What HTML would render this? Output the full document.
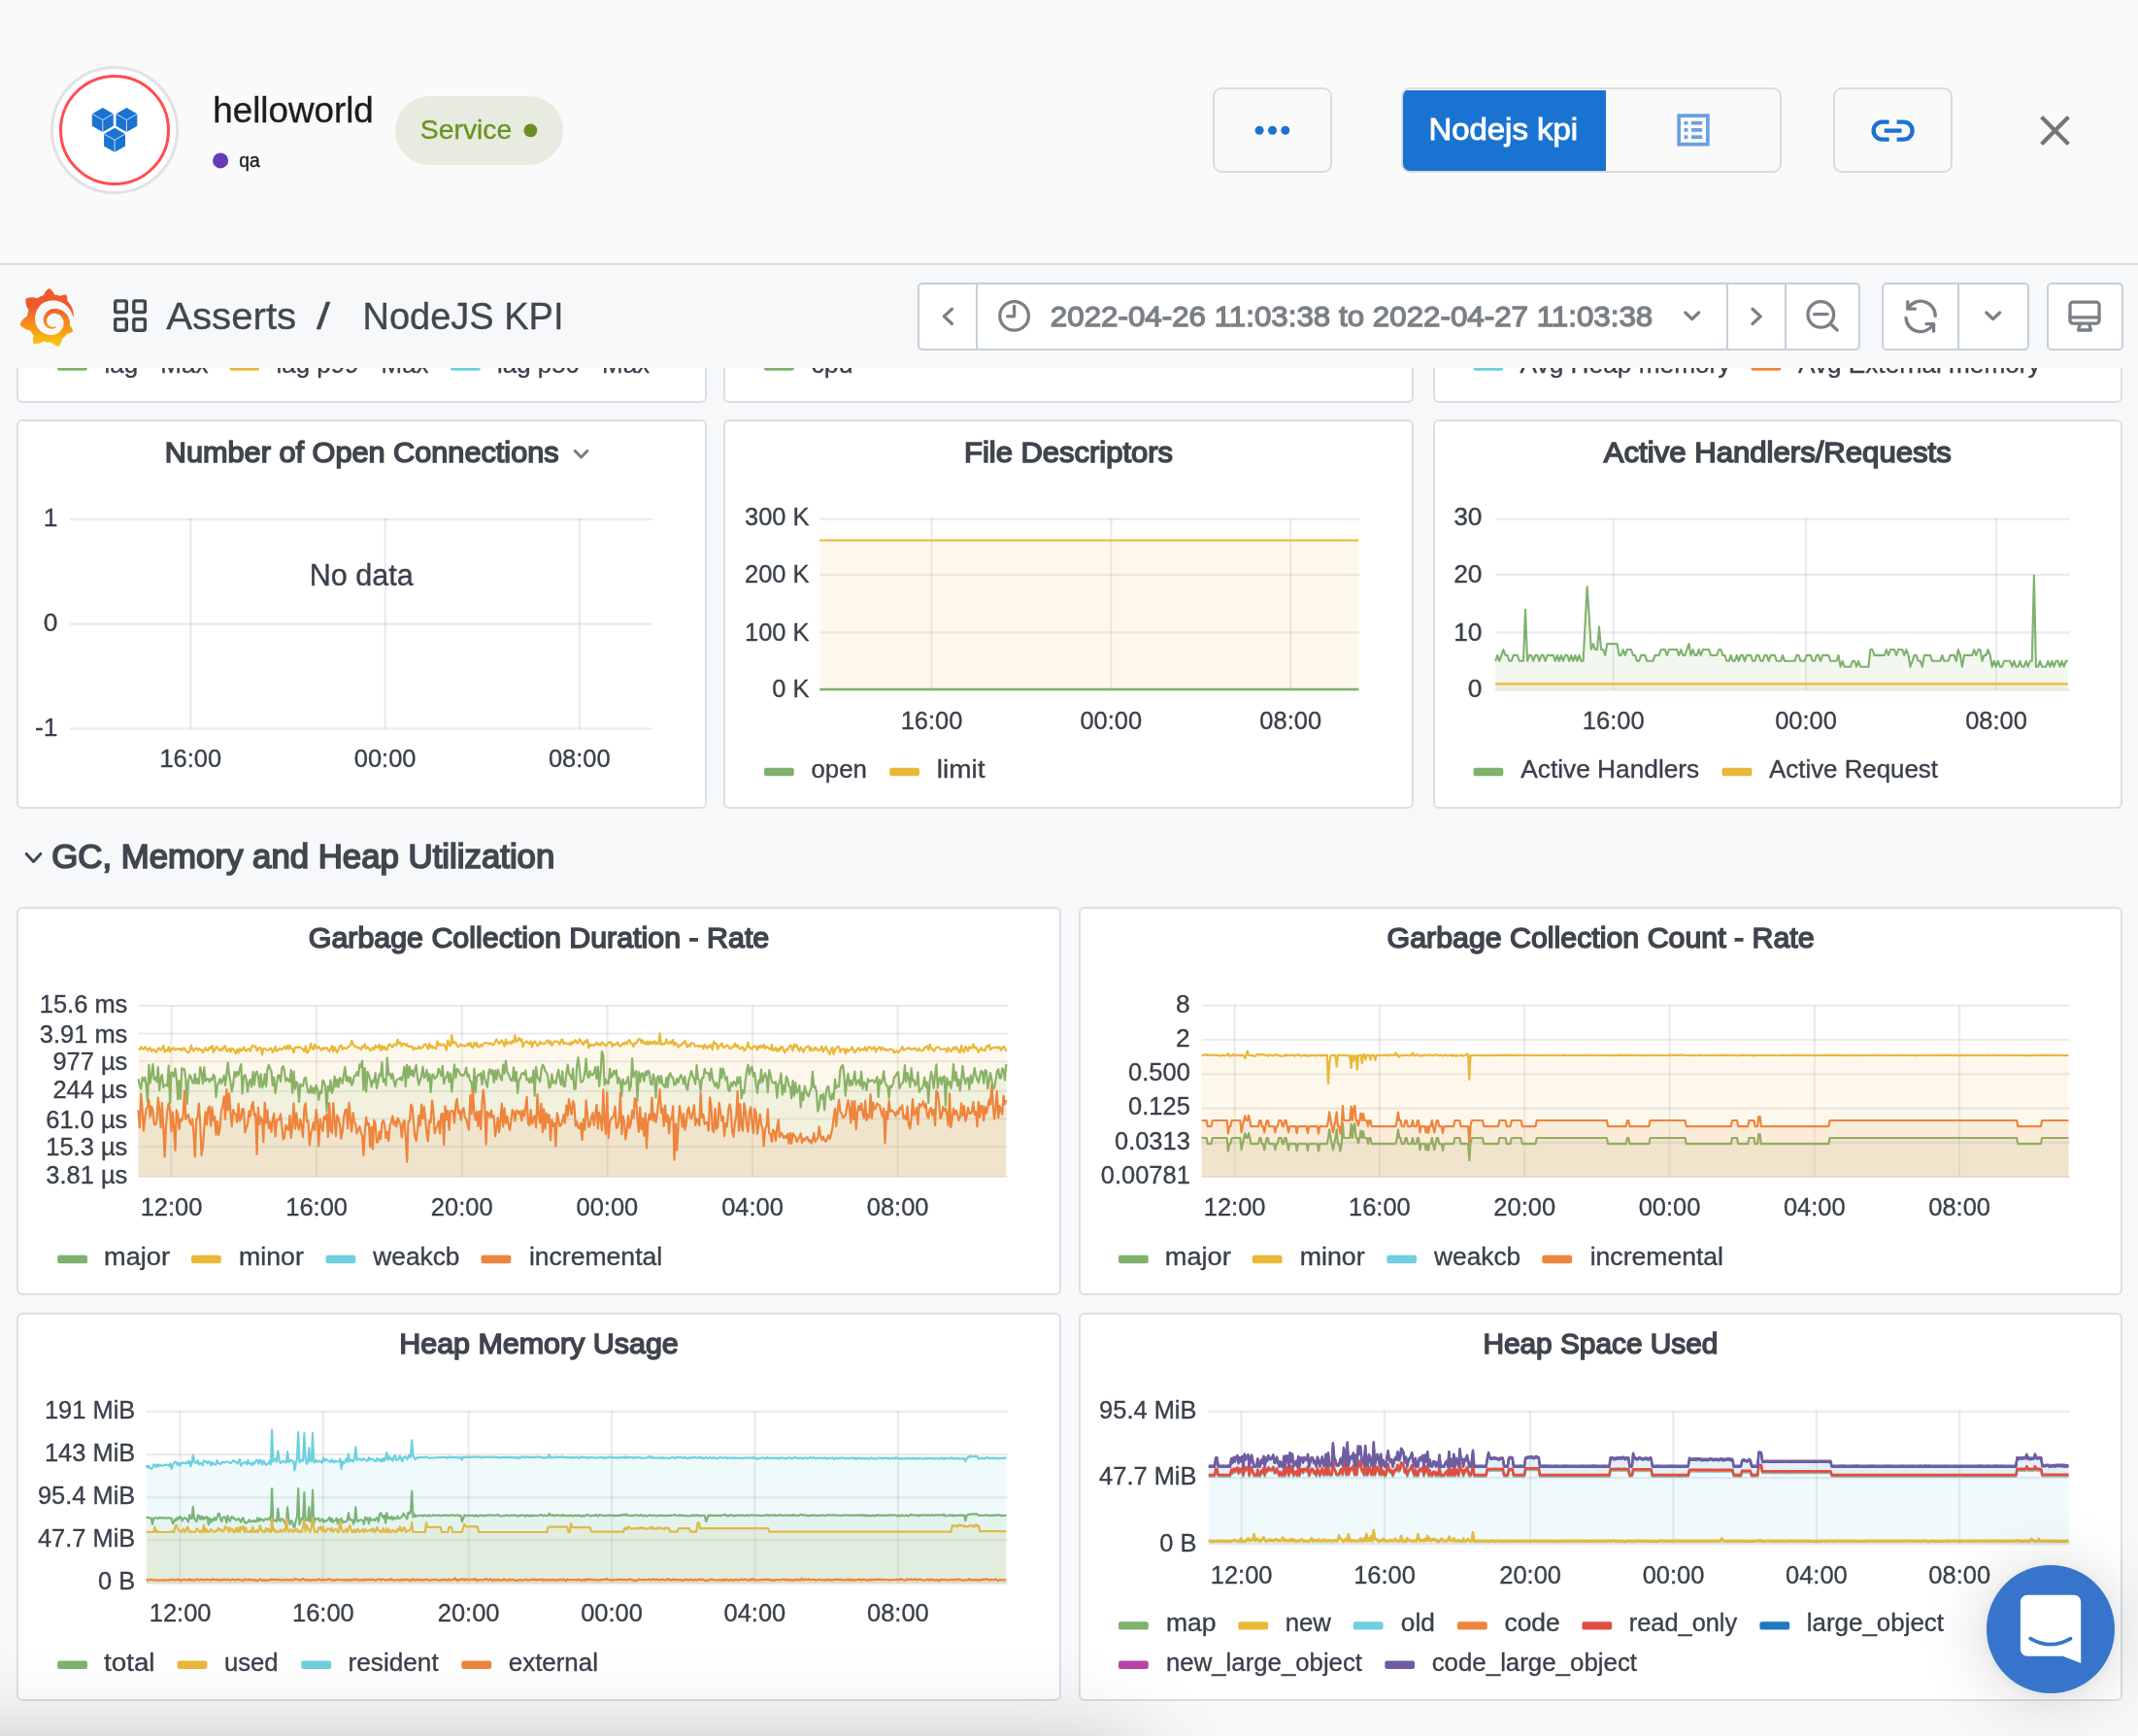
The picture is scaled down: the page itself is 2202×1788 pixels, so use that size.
<!DOCTYPE html>
<html lang="en"><head><meta charset="utf-8"><title>helloworld - NodeJS KPI</title>
<style>
html,body{margin:0;padding:0}
body{width:2202px;height:1788px;overflow:hidden;background:#f7f8fa;position:relative;font-family:"Liberation Sans", sans-serif;color:#3a404b}
svg{position:absolute;left:0;top:0;overflow:visible;will-change:transform}
svg text{font-family:"Liberation Sans", sans-serif}
.abs{position:absolute;box-sizing:border-box}
#hdr{left:0;top:0;width:2202px;height:273px;background:#fafafa;border-bottom:2px solid #dcdcdc;z-index:5}
#toolbar{left:0;top:272px;width:2202px;height:106.6px;background:#f7f8fa;z-index:4}
.panel{position:absolute;background:#fff;border:2px solid #dadfe5;border-radius:6px}
.btn{position:absolute;box-sizing:border-box;border:2px solid #dcdcdc;border-radius:9px;background:#fafafa}
.tb{position:absolute;box-sizing:border-box;border:2px solid #c7d0d9;border-radius:5px;background:#fff;top:19px;height:70px}
.tbd{position:absolute;top:0;width:2px;height:66px;background:#c7d0d9}
#fade{left:-300px;top:1801px;width:1470px;height:200px;z-index:6;background:#888;box-shadow:0 0 100px 0 rgba(0,0,0,0.24)}
#chat{left:2046px;top:1612px;width:132px;height:132px;border-radius:50%;background:#3675cb;z-index:7;box-shadow:0 2px 13px rgba(0,0,0,0.06),0 5px 70px rgba(0,0,0,0.17)}
</style></head><body>
<div id="hdr" class="abs">
<div class="abs" style="left:52px;top:68px;width:132px;height:132px;border-radius:50%;border:3px solid #e2e2e2;background:#fff"></div>
<div class="abs" style="left:61px;top:77px;width:114px;height:114px;border-radius:50%;border:3.4px solid #ff4d4f;background:#fff"></div>
<div class="abs" style="left:406.5px;top:99px;width:173.5px;height:71px;border-radius:36px;background:#e8ebdf"></div>
<div class="btn" style="left:1249px;top:90px;width:123px;height:88px"></div>
<div class="btn" style="left:1443px;top:90px;width:392px;height:88px;overflow:hidden"><div class="abs" style="left:0;top:1px;width:209px;height:83px;background:#1b73d1"></div></div>
<div class="btn" style="left:1888px;top:90px;width:123px;height:88px"></div>
<svg width="2202" height="272" viewBox="0 0 2202 272">
<path d="M105.8,111 L116.8,117.2 L116.8,129.7 L105.8,135.9 L94.8,129.7 L94.8,117.2 Z" fill="#1b73d1"/><path d="M94.8,117.2 L105.8,123.5 L116.8,117.2 M105.8,123.5 V135.9" fill="none" stroke="#fff" stroke-width="0.9" stroke-opacity="0.85"/>
<path d="M130.4,111 L141.3,117.2 L141.3,129.7 L130.4,135.9 L119.5,129.7 L119.5,117.2 Z" fill="#1b73d1"/><path d="M119.5,117.2 L130.4,123.5 L141.3,117.2 M130.4,123.5 V135.9" fill="none" stroke="#fff" stroke-width="0.9" stroke-opacity="0.85"/>
<path d="M118.1,131.8 L129,138 L129,150.5 L118.1,156.7 L107.1,150.5 L107.1,138 Z" fill="#1b73d1"/><path d="M107.1,138 L118.1,144.2 L129,138 M118.1,144.2 V156.7" fill="none" stroke="#fff" stroke-width="0.9" stroke-opacity="0.85"/>
<text x="219.3" y="125.8" font-size="36.6" fill="#1c1c1c" textLength="165.5" lengthAdjust="spacingAndGlyphs" stroke="#1c1c1c" stroke-width="0.35">helloworld</text>
<circle cx="227.1" cy="165.4" r="8" fill="#673ab7"/>
<text x="246.2" y="171.5" font-size="20" fill="#1c1c1c" textLength="21.4" lengthAdjust="spacingAndGlyphs" stroke="#1c1c1c" stroke-width="0.35">qa</text>
<text x="432.8" y="142.7" font-size="27.8" fill="#6a9421" textLength="94.5" lengthAdjust="spacingAndGlyphs" stroke="#6a9421" stroke-width="0.35">Service</text>
<circle cx="546.4" cy="134.3" r="6.9" fill="#6b8e23"/>
<circle cx="1297.1" cy="134.3" r="4.5" fill="#1b73d1"/>
<circle cx="1310.5" cy="134.3" r="4.5" fill="#1b73d1"/>
<circle cx="1323.8" cy="134.3" r="4.5" fill="#1b73d1"/>
<text x="1471.5" y="144.4" font-size="30.5" fill="#ffffff" textLength="153.5" lengthAdjust="spacingAndGlyphs" stroke="#ffffff" stroke-width="0.9" paint-order="stroke">Nodejs kpi</text>
<g fill="#6b9fe2"><path fill-rule="evenodd" d="M1727.3,117.3H1760.7V150.4H1727.3Z M1731,121H1757V146.7H1731Z"/><rect x="1734.6" y="124.8" width="3.7" height="3.7"/><rect x="1734.6" y="132" width="3.7" height="3.7"/><rect x="1734.6" y="139.3" width="3.7" height="3.7"/><rect x="1742" y="124.8" width="11.2" height="3.7"/><rect x="1742" y="132" width="11.2" height="3.7"/><rect x="1742" y="139.3" width="11.2" height="3.7"/></g>
<g fill="none" stroke="#1b73d1" stroke-width="4.3" stroke-linecap="butt"><path d="M1945.6,125.6H1938.6a9,9 0 0 0 0,18H1945.6"/><path d="M1953.6,125.6H1960.6a9,9 0 0 1 0,18H1953.6"/><path d="M1940.7,134.6H1958.5"/></g>
<path d="M2102.6,120.6L2130.4,148.6M2130.4,120.6L2102.6,148.6" stroke="#757575" stroke-width="4.2" fill="none"/>
</svg>
</div>
<div id="toolbar" class="abs">
<div class="tb" style="left:945px;width:971px"><div class="tbd" style="left:58px"></div><div class="tbd" style="left:831px"></div><div class="tbd" style="left:890.5px"></div></div>
<div class="tb" style="left:1938px;width:152px"><div class="tbd" style="left:75.5px"></div></div>
<div class="tb" style="left:2108px;width:79px"></div>
<svg width="2202" height="106" viewBox="0 272 2202 106">
<defs><linearGradient id="gl" x1="175.5" y1="445.4" x2="175.5" y2="114" gradientUnits="userSpaceOnUse"><stop offset="0" stop-color="#FFF100"/><stop offset="1" stop-color="#F05A28"/></linearGradient></defs><g transform="translate(19.090,296.835) scale(0.16585,0.16501)"><path fill="url(#gl)" d="M342 161.2c-.6-6.1-1.600-13.1-3.600-20.900-2-7.700-5-16.200-9.400-25-4.400-8.800-10.100-17.900-17.500-26.800-2.900-3.500-6.100-6.900-9.500-10.200 5.100-20.300-6.200-37.900-6.200-37.900-19.500-1.200-31.900 6.100-36.500 9.400-.8-.3-1.500-.7-2.300-1-3.300-1.300-6.700-2.600-10.300-3.700-3.500-1.100-7.100-2.100-10.800-3-3.700-.9-7.400-1.600-11.200-2.200-.7-.1-1.300-.2-2-.3-8.500-27.200-32.900-38.600-32.900-38.600-27.300 17.300-32.400 41.500-32.400 41.500s-.1.500-.3 1.400c-1.500.4-3 .9-4.500 1.300-2.100.6-4.200 1.400-6.200 2.200-2.100.8-4.100 1.600-6.200 2.500-4.100 1.800-8.200 3.800-12.200 6-3.900 2.200-7.700 4.600-11.400 7.100-.5-.2-1-.4-1-.4-37.800-14.400-71.300 2.900-71.300 2.900-3.100 40.200 15.100 65.500 18.700 70.100-.9 2.500-1.700 5-2.500 7.500-2.800 9.100-4.900 18.400-6.200 28.100-.2 1.400-.4 2.800-.5 4.200C18.800 192.700 8.500 228 8.500 228c29.100 33.500 63.100 35.600 63.100 35.600 0 0 .1-.1.100-.1 4.300 7.700 9.300 15 14.900 21.900 2.400 2.900 4.800 5.600 7.400 8.300-10.600 30.400 1.500 55.600 1.500 55.600 32.400 1.200 53.700-14.200 58.200-17.700 3.200 1.100 6.500 2.100 9.800 2.900 10 2.600 20.200 4.100 30.400 4.500 2.500.1 5.100.2 7.600.1h1.200l.8 0 1.600 0 1.600-.1 0 .1c15.300 21.800 42.100 24.900 42.100 24.900 19.100-20.100 20.200-40.100 20.200-44.400l0 0c0 0 0-.1 0-.3 0-.4 0-.6 0-.6l0 0c0-.3 0-.6 0-.9 4-2.800 7.800-5.800 11.400-9.100 7.600-6.900 14.300-14.800 19.900-23.300.5-.8 1-1.600 1.500-2.400 21.600 1.200 36.900-13.400 36.900-13.400-3.600-22.500-16.400-33.500-19.100-35.600l0 0c0 0-.1-.1-.3-.2-.2-.1-.2-.2-.2-.2 0 0 0 0 0 0-.1-.1-.3-.2-.5-.3.1-1.400.2-2.700.3-4.100.2-2.400.2-4.900.2-7.300v-1.800l0-.9 0-.5c0-.6 0-.4 0-.6l-.1-1.500-.1-2c0-.7-.1-1.300-.2-1.900-.1-.6-.1-1.300-.2-1.900l-.2-1.900-.3-1.900c-.4-2.500-.8-4.900-1.400-7.400-2.300-9.700-6.100-18.900-11-27.200-5-8.300-11.200-15.600-18.300-21.800-7-6.200-14.900-11.200-23.100-14.900-8.300-3.700-16.900-6.100-25.500-7.200-4.300-.6-8.600-.8-12.900-.7l-1.600 0-.4 0c-.1 0-.6 0-.5 0l-.7 0-1.600.1c-.6 0-1.200.1-1.700.1-2.200.2-4.400.5-6.500.9-8.600 1.600-16.700 4.700-23.800 9-7.100 4.300-13.300 9.600-18.300 15.600-5 6-8.900 12.700-11.600 19.600-2.700 6.900-4.200 14.100-4.600 21-.1 1.700-.1 3.500-.1 5.200 0 .4 0 .9 0 1.300l.1 1.400c.1.800.1 1.700.2 2.500.3 3.500 1 6.900 1.900 10.100 1.900 6.500 4.900 12.400 8.600 17.400 3.700 5 8.200 9.100 12.900 12.400 4.700 3.200 9.800 5.500 14.800 7 5 1.500 10 2.100 14.700 2.100.6 0 1.200 0 1.700 0 .3 0 .6 0 .9 0 .3 0 .6 0 .9-.1.500 0 1-.1 1.500-.1.100 0 .3 0 .4-.1l.5-.1c.3 0 .6-.1.900-.1.600-.1 1.100-.2 1.700-.3.600-.1 1.100-.2 1.600-.4 1.100-.2 2.100-.6 3.100-.9 2-.7 4-1.500 5.700-2.400 1.800-.9 3.400-2 5-3 .4-.3.900-.6 1.300-1 1.600-1.300 1.900-3.700.6-5.300-1.100-1.400-3.100-1.800-4.700-.9-.4.2-.8.4-1.200.6-1.400.7-2.800 1.300-4.300 1.800-1.500.5-3.100.9-4.700 1.200-.8.1-1.600.2-2.500.3-.4 0-.8.1-1.300.1-.4 0-.9 0-1.200 0-.4 0-.8 0-1.200 0-.5 0-1 0-1.500-.1 0 0-.3 0-.1 0l-.2 0-.3 0c-.2 0-.5 0-.7-.1-.5-.1-.9-.1-1.400-.2-3.700-.5-7.400-1.600-10.900-3.200-3.600-1.600-7-3.800-10.100-6.600-3.100-2.800-5.800-6.100-7.900-9.900-2.100-3.800-3.600-8-4.300-12.400-.3-2.200-.5-4.500-.4-6.700 0-.6.100-1.200.1-1.800 0 .2 0-.1 0-.1l0-.2 0-.5c0-.3.1-.6.1-.9.1-1.200.3-2.400.5-3.600 1.700-9.600 6.500-19 13.900-26.100 1.900-1.800 3.900-3.400 6-4.900 2.100-1.500 4.400-2.800 6.800-3.900 2.400-1.100 4.800-2 7.400-2.700 2.500-.7 5.100-1.100 7.800-1.400 1.300-.1 2.600-.2 4-.2.400 0 .6 0 .9 0l1.100 0 .7 0c.3 0 0 0 .1 0l.3 0 1.100.1c2.900.2 5.700.6 8.500 1.300 5.600 1.200 11.100 3.300 16.200 6.100 10.200 5.700 18.900 14.500 24.200 25.100 2.700 5.300 4.600 11 5.500 16.900.2 1.500.4 3 .5 4.500l.1 1.100.1 1.100c0 .4 0 .8 0 1.100 0 .4 0 .8 0 1.100l0 1 0 1.100c0 .7-.1 1.900-.1 2.600-.1 1.600-.3 3.300-.5 4.900-.2 1.600-.5 3.200-.8 4.800-.3 1.600-.7 3.200-1.100 4.700-.8 3.100-1.800 6.200-3 9.300-2.400 6-5.600 11.800-9.400 17.100-7.700 10.600-18.200 19.200-30.200 24.700-6 2.700-12.300 4.700-18.800 5.700-3.200.6-6.500.9-9.800 1l-.6 0-.5 0-1.100 0-1.600 0-.8 0c.4 0-.1 0-.1 0l-.3 0c-1.800 0-3.500-.1-5.300-.3-7-.5-13.900-1.800-20.700-3.700-6.700-1.900-13.200-4.600-19.400-7.800-12.300-6.600-23.400-15.600-32-26.500-4.300-5.400-8.100-11.300-11.200-17.400-3.100-6.100-5.600-12.600-7.400-19.100-1.800-6.600-2.900-13.300-3.400-20.100l-.1-1.300 0-.3 0-.3 0-.6 0-1.100 0-.3 0-.4 0-.8 0-1.600 0-.3c0 0 0 .1 0-.1l0-.6c0-.8 0-1.700 0-2.500.1-3.300.4-6.800.8-10.200.4-3.400 1-6.900 1.700-10.300.7-3.400 1.500-6.800 2.500-10.200 1.900-6.700 4.300-13.200 7.100-19.300 5.700-12.200 13.100-23.100 22-31.800 2.200-2.200 4.500-4.200 6.900-6.200 2.400-1.900 4.900-3.700 7.500-5.400 2.500-1.700 5.200-3.200 7.900-4.600 1.300-.7 2.700-1.400 4.100-2 .7-.3 1.400-.6 2.100-.9.700-.3 1.400-.6 2.100-.9 2.800-1.200 5.700-2.200 8.700-3.100.7-.2 1.500-.4 2.200-.7.700-.2 1.500-.4 2.200-.6 1.500-.4 3-.8 4.500-1.100.7-.2 1.500-.3 2.300-.5.8-.2 1.500-.3 2.300-.5.8-.1 1.500-.3 2.300-.4l1.100-.2 1.200-.2c.8-.1 1.500-.2 2.300-.3.900-.1 1.700-.2 2.600-.3.7-.1 1.900-.2 2.600-.3.500-.1 1.100-.1 1.600-.2l1.100-.1.500-.1.600 0c.9-.1 1.700-.1 2.600-.2l1.300-.1c0 0 .5 0 .1 0l.3 0 .6 0c.7 0 1.500-.1 2.200-.1 2.900-.1 5.900-.1 8.800 0 5.800.2 11.500.9 17 1.900 11.100 2.100 21.500 5.600 31 10.300 9.500 4.600 17.900 10.300 25.300 16.500.5.400.9.800 1.400 1.200.4.400.9.800 1.300 1.200.9.800 1.700 1.600 2.600 2.400.9.800 1.700 1.600 2.500 2.400.8.800 1.600 1.600 2.400 2.500 3.100 3.300 6 6.600 8.600 10 5.200 6.700 9.400 13.500 12.700 19.900.2.400.4.800.6 1.200.2.400.4.800.6 1.200.4.800.8 1.600 1.100 2.400.4.800.7 1.500 1.100 2.300.3.800.7 1.500 1 2.300 1.200 3 2.400 5.900 3.300 8.600 1.500 4.400 2.600 8.300 3.500 11.700.3 1.400 1.600 2.300 3 2.100 1.500-.1 2.600-1.300 2.600-2.800C342.600 170.400 342.500 166.100 342 161.200z"/></g>
<rect x="118.7" y="309.9" width="11.6" height="11.6" rx="1.6" fill="none" stroke="#41464f" stroke-width="3.4"/>
<rect x="137.8" y="309.9" width="11.6" height="11.6" rx="1.6" fill="none" stroke="#41464f" stroke-width="3.4"/>
<rect x="118.7" y="328.6" width="11.6" height="11.6" rx="1.6" fill="none" stroke="#41464f" stroke-width="3.4"/>
<rect x="137.8" y="328.6" width="11.6" height="11.6" rx="1.6" fill="none" stroke="#41464f" stroke-width="3.4"/>
<text x="171.2" y="339" font-size="39.6" fill="#41464f" textLength="134" lengthAdjust="spacingAndGlyphs" stroke="#41464f" stroke-width="0.35">Asserts</text>
<text x="326" y="339" font-size="39.6" fill="#41464f" textLength="14" lengthAdjust="spacingAndGlyphs" stroke="#41464f" stroke-width="0.35">/</text>
<text x="373.5" y="339" font-size="39.6" fill="#41464f" textLength="207" lengthAdjust="spacingAndGlyphs" stroke="#41464f" stroke-width="0.35">NodeJS KPI</text>
<g fill="none" stroke="#7b8087" stroke-width="3.3" stroke-linecap="round" stroke-linejoin="round">
<path d="M980.5,318.3L972.3,325.9L980.5,333.5"/>
<circle cx="1044.6" cy="325.4" r="14.8"/><path d="M1044.6,315.5V325.8H1037.6"/>
<path d="M1735.8,322L1742.7,328.6L1749.6,322"/>
<path d="M1805,318.3L1813.2,325.9L1805,333.5"/>
<circle cx="1875.3" cy="323.9" r="13.3"/><path d="M1868.6,323.7H1882.2M1885.5,333.8L1892.2,340"/>
<path d="M1993.2,325.4A15,15 0 0 0 1965.5,317.2"/><path d="M1964.8,310.6V318.2H1972.4"/><path d="M1963,327.4A15,15 0 0 0 1990.7,334.6"/><path d="M1991.6,341.2V333.6H1984"/>
<path d="M2045.8,322L2052.7,328.6L2059.6,322"/>
<rect x="2132" y="311.2" width="30" height="22" rx="3"/><path d="M2132,326.9H2162M2142.2,334.2L2140.6,340H2153.4L2151.8,334.2"/>
</g>
<text x="1081.8" y="336.1" font-size="30.2" fill="#7b8087" textLength="620.5" lengthAdjust="spacingAndGlyphs" stroke="#7b8087" stroke-width="1.3" paint-order="stroke">2022-04-26 11:03:38 to 2022-04-27 11:03:38</text>
</svg>
</div>
<div class="panel" style="left:17px;top:14px;width:707px;height:397px"></div>
<div class="panel" style="left:17px;top:432px;width:707px;height:397px"></div>
<div class="panel" style="left:745px;top:14px;width:707px;height:397px"></div>
<div class="panel" style="left:745px;top:432px;width:707px;height:397px"></div>
<div class="panel" style="left:1476px;top:14px;width:706px;height:397px"></div>
<div class="panel" style="left:1476px;top:432px;width:706px;height:397px"></div>
<div class="panel" style="left:17px;top:934px;width:1072px;height:396px"></div>
<div class="panel" style="left:17px;top:1352px;width:1072px;height:396px"></div>
<div class="panel" style="left:1111px;top:934px;width:1071px;height:396px"></div>
<div class="panel" style="left:1111px;top:1352px;width:1071px;height:396px"></div>
<svg width="2202" height="1788" viewBox="0 0 2202 1788" style="z-index:2">
<rect x="59" y="373.4" width="30.8" height="8.4" rx="2.2" fill="#7eb26d"/><text x="107.5" y="383.6" font-size="26.4" fill="#3a404b" textLength="107" lengthAdjust="spacingAndGlyphs" stroke="#3a404b" stroke-width="0.35">lag - Max</text><rect x="236.3" y="373.4" width="30.8" height="8.4" rx="2.2" fill="#eab839"/><text x="284.5" y="383.6" font-size="26.4" fill="#3a404b" textLength="157" lengthAdjust="spacingAndGlyphs" stroke="#3a404b" stroke-width="0.35">lag p99 - Max</text><rect x="464" y="373.4" width="30.8" height="8.4" rx="2.2" fill="#6ed0e0"/><text x="512" y="383.6" font-size="26.4" fill="#3a404b" textLength="157" lengthAdjust="spacingAndGlyphs" stroke="#3a404b" stroke-width="0.35">lag p50 - Max</text>
<rect x="787" y="373.4" width="30.8" height="8.4" rx="2.2" fill="#7eb26d"/><text x="835.5" y="383.6" font-size="26.4" fill="#3a404b" textLength="43" lengthAdjust="spacingAndGlyphs" stroke="#3a404b" stroke-width="0.35">cpu</text>
<rect x="1517.5" y="373.4" width="30.8" height="8.4" rx="2.2" fill="#6ed0e0"/><text x="1565.5" y="383.6" font-size="26.4" fill="#3a404b" textLength="217" lengthAdjust="spacingAndGlyphs" stroke="#3a404b" stroke-width="0.35">Avg Heap memory</text><rect x="1803.6" y="373.4" width="30.8" height="8.4" rx="2.2" fill="#ef843c"/><text x="1852" y="383.6" font-size="26.4" fill="#3a404b" textLength="249.5" lengthAdjust="spacingAndGlyphs" stroke="#3a404b" stroke-width="0.35">Avg External memory</text>
<text x="169.8" y="475.8" font-size="29.8" fill="#3f444d" textLength="405.8" lengthAdjust="spacingAndGlyphs" stroke="#3f444d" stroke-width="1.5" paint-order="stroke">Number of Open Connections</text>
<path d="M592.2,464.2L598.6,471L605,464.2" fill="none" stroke="#767c85" stroke-width="2.9" stroke-linecap="round" stroke-linejoin="round"/>
<g stroke="#000" stroke-opacity="0.08" stroke-width="2.2"><path d="M72,534.9H672.5"/><path d="M72,642.7H672.5"/><path d="M72,750.5H672.5"/><path d="M196.3,534V751"/><path d="M396.6,534V751"/><path d="M596.8,534V751"/></g>
<text x="59.5" y="541.9" font-size="26.4" fill="#3a404b" text-anchor="end" stroke="#3a404b" stroke-width="0.35">1</text><text x="59.5" y="649.7" font-size="26.4" fill="#3a404b" text-anchor="end" stroke="#3a404b" stroke-width="0.35">0</text><text x="59.5" y="757.5" font-size="26.4" fill="#3a404b" text-anchor="end" stroke="#3a404b" stroke-width="0.35">-1</text>
<text x="196.3" y="790" font-size="26.4" fill="#3a404b" text-anchor="middle" textLength="63.7" lengthAdjust="spacingAndGlyphs" stroke="#3a404b" stroke-width="0.35">16:00</text><text x="396.6" y="790" font-size="26.4" fill="#3a404b" text-anchor="middle" textLength="63.7" lengthAdjust="spacingAndGlyphs" stroke="#3a404b" stroke-width="0.35">00:00</text><text x="596.8" y="790" font-size="26.4" fill="#3a404b" text-anchor="middle" textLength="63.7" lengthAdjust="spacingAndGlyphs" stroke="#3a404b" stroke-width="0.35">08:00</text>
<text x="372.3" y="602.6" font-size="30.8" fill="#3a404b" text-anchor="middle" textLength="107" lengthAdjust="spacingAndGlyphs" stroke="#3a404b" stroke-width="0.35">No data</text>
<text x="1100.5" y="475.8" font-size="29.8" fill="#3f444d" text-anchor="middle" textLength="215" lengthAdjust="spacingAndGlyphs" stroke="#3f444d" stroke-width="1.5" paint-order="stroke">File Descriptors</text>
<g stroke="#000" stroke-opacity="0.08" stroke-width="2.2"><path d="M844.2,534.7H1400.8"/><path d="M844.2,591.9H1400.8"/><path d="M844.2,651.3H1400.8"/><path d="M844.2,710.7H1400.8"/><path d="M959.5,534V710.7"/><path d="M1144.3,534V710.7"/><path d="M1329.2,534V710.7"/></g>
<text x="833.5" y="541.4" font-size="26.4" fill="#3a404b" text-anchor="end" textLength="66.5" lengthAdjust="spacingAndGlyphs" stroke="#3a404b" stroke-width="0.35">300 K</text><text x="833.5" y="600.3" font-size="26.4" fill="#3a404b" text-anchor="end" textLength="66.5" lengthAdjust="spacingAndGlyphs" stroke="#3a404b" stroke-width="0.35">200 K</text><text x="833.5" y="660.3" font-size="26.4" fill="#3a404b" text-anchor="end" textLength="66.5" lengthAdjust="spacingAndGlyphs" stroke="#3a404b" stroke-width="0.35">100 K</text><text x="833.5" y="717.5" font-size="26.4" fill="#3a404b" text-anchor="end" textLength="38.2" lengthAdjust="spacingAndGlyphs" stroke="#3a404b" stroke-width="0.35">0 K</text>
<text x="959.5" y="750.5" font-size="26.4" fill="#3a404b" text-anchor="middle" textLength="63.7" lengthAdjust="spacingAndGlyphs" stroke="#3a404b" stroke-width="0.35">16:00</text><text x="1144.3" y="750.5" font-size="26.4" fill="#3a404b" text-anchor="middle" textLength="63.7" lengthAdjust="spacingAndGlyphs" stroke="#3a404b" stroke-width="0.35">00:00</text><text x="1329.2" y="750.5" font-size="26.4" fill="#3a404b" text-anchor="middle" textLength="63.7" lengthAdjust="spacingAndGlyphs" stroke="#3a404b" stroke-width="0.35">08:00</text>
<rect x="844.2" y="556.5" width="555.1" height="153.7" fill="#eab839" fill-opacity="0.1"/>
<path d="M844.2,556.5H1399.3" stroke="#eab839" stroke-width="2.2"/>
<path d="M844.2,710H1399.3" stroke="#7eb26d" stroke-width="2.4"/>
<rect x="787" y="790.8" width="30.8" height="8.4" rx="2.2" fill="#7eb26d"/><text x="835.5" y="801" font-size="26.4" fill="#3a404b" textLength="57.3" lengthAdjust="spacingAndGlyphs" stroke="#3a404b" stroke-width="0.35">open</text><rect x="916.2" y="790.8" width="30.8" height="8.4" rx="2.2" fill="#eab839"/><text x="964.7" y="801" font-size="26.4" fill="#3a404b" textLength="49.8" lengthAdjust="spacingAndGlyphs" stroke="#3a404b" stroke-width="0.35">limit</text>
<text x="1830.8" y="475.8" font-size="29.8" fill="#3f444d" text-anchor="middle" textLength="358" lengthAdjust="spacingAndGlyphs" stroke="#3f444d" stroke-width="1.5" paint-order="stroke">Active Handlers/Requests</text>
<g stroke="#000" stroke-opacity="0.08" stroke-width="2.2"><path d="M1540.2,534.7H2131.8"/><path d="M1540.2,591.9H2131.8"/><path d="M1540.2,651.3H2131.8"/><path d="M1540.2,710.7H2131.8"/><path d="M1661.7,534V710.7"/><path d="M1860,534V710.7"/><path d="M2056,534V710.7"/></g>
<text x="1526.5" y="541.4" font-size="26.4" fill="#3a404b" text-anchor="end" stroke="#3a404b" stroke-width="0.35">30</text><text x="1526.5" y="600.3" font-size="26.4" fill="#3a404b" text-anchor="end" stroke="#3a404b" stroke-width="0.35">20</text><text x="1526.5" y="660.3" font-size="26.4" fill="#3a404b" text-anchor="end" stroke="#3a404b" stroke-width="0.35">10</text><text x="1526.5" y="717.5" font-size="26.4" fill="#3a404b" text-anchor="end" stroke="#3a404b" stroke-width="0.35">0</text>
<text x="1661.7" y="750.5" font-size="26.4" fill="#3a404b" text-anchor="middle" textLength="63.7" lengthAdjust="spacingAndGlyphs" stroke="#3a404b" stroke-width="0.35">16:00</text><text x="1860" y="750.5" font-size="26.4" fill="#3a404b" text-anchor="middle" textLength="63.7" lengthAdjust="spacingAndGlyphs" stroke="#3a404b" stroke-width="0.35">00:00</text><text x="2056" y="750.5" font-size="26.4" fill="#3a404b" text-anchor="middle" textLength="63.7" lengthAdjust="spacingAndGlyphs" stroke="#3a404b" stroke-width="0.35">08:00</text>
<path d="M1540.2,680.8L1542.3,674.9L1544.3,680.8L1546.4,674.9L1548.4,669L1550.5,674.9L1552.5,674.9L1554.6,680.8L1556.6,680.8L1558.7,674.9L1560.7,674.9L1562.8,674.9L1564.9,680.8L1566.9,680.8L1569,680.8L1571,627.8L1573.1,680.8L1575.1,674.9L1577.2,674.9L1579.2,680.8L1581.3,674.9L1583.3,674.9L1585.4,680.8L1587.5,674.9L1589.5,674.9L1591.6,680.8L1593.6,674.9L1595.7,674.9L1597.7,674.9L1599.8,674.9L1601.8,680.8L1603.9,674.9L1605.9,680.8L1608,674.9L1610,680.8L1612.1,674.9L1614.2,674.9L1616.2,680.8L1618.3,674.9L1620.3,680.8L1622.4,674.9L1624.4,680.8L1626.5,674.9L1628.5,680.8L1630.6,680.8L1632.6,642.5L1634.7,604.3L1636.8,636.6L1638.8,669L1640.9,663.1L1642.9,669L1645,669L1647,645.5L1649.1,669L1651.1,669L1653.2,674.9L1655.2,663.1L1657.3,663.1L1659.4,663.1L1661.4,663.1L1663.5,663.1L1665.5,663.1L1667.6,674.9L1669.6,674.9L1671.7,669L1673.7,674.9L1675.8,669L1677.8,669L1679.9,669L1682,674.9L1684,674.9L1686.1,680.8L1688.1,680.8L1690.2,674.9L1692.2,674.9L1694.3,674.9L1696.3,680.8L1698.4,680.8L1700.4,680.8L1702.5,680.8L1704.5,674.9L1706.6,674.9L1708.7,674.9L1710.7,669L1712.8,669L1714.8,669L1716.9,674.9L1718.9,669L1721,669L1723,669L1725.1,669L1727.1,669L1729.2,674.9L1731.3,669L1733.3,674.9L1735.4,674.9L1737.4,669L1739.5,663.1L1741.5,674.9L1743.6,669L1745.6,674.9L1747.7,674.9L1749.7,669L1751.8,674.9L1753.9,669L1755.9,669L1758,669L1760,669L1762.1,674.9L1764.1,674.9L1766.2,674.9L1768.2,674.9L1770.3,669L1772.3,669L1774.4,674.9L1776.5,674.9L1778.5,680.8L1780.6,680.8L1782.6,674.9L1784.7,680.8L1786.7,680.8L1788.8,674.9L1790.8,680.8L1792.9,674.9L1794.9,674.9L1797,680.8L1799,674.9L1801.1,674.9L1803.2,674.9L1805.2,680.8L1807.3,680.8L1809.3,674.9L1811.4,674.9L1813.4,680.8L1815.5,680.8L1817.5,674.9L1819.6,674.9L1821.6,680.8L1823.7,674.9L1825.8,674.9L1827.8,674.9L1829.9,680.8L1831.9,680.8L1834,680.8L1836,674.9L1838.1,680.8L1840.1,680.8L1842.2,680.8L1844.2,680.8L1846.3,680.8L1848.4,680.8L1850.4,674.9L1852.5,674.9L1854.5,680.8L1856.6,680.8L1858.6,680.8L1860.7,674.9L1862.7,674.9L1864.8,674.9L1866.8,680.8L1868.9,680.8L1871,674.9L1873,674.9L1875.1,680.8L1877.1,674.9L1879.2,674.9L1881.2,674.9L1883.3,674.9L1885.3,680.8L1887.4,680.8L1889.4,680.8L1891.5,680.8L1893.5,674.9L1895.6,686.7L1897.7,680.8L1899.7,686.7L1901.8,686.7L1903.8,686.7L1905.9,686.7L1907.9,680.8L1910,680.8L1912,686.7L1914.1,680.8L1916.1,686.7L1918.2,686.7L1920.3,686.7L1922.3,686.7L1924.4,686.7L1926.4,669L1928.5,669L1930.5,674.9L1932.6,674.9L1934.6,674.9L1936.7,674.9L1938.7,674.9L1940.8,674.9L1942.9,669L1944.9,674.9L1947,669L1949,669L1951.1,669L1953.1,674.9L1955.2,669L1957.2,669L1959.3,669L1961.3,674.9L1963.4,669L1965.5,674.9L1967.5,686.7L1969.6,680.8L1971.6,674.9L1973.7,674.9L1975.7,680.8L1977.8,680.8L1979.8,686.7L1981.9,674.9L1983.9,674.9L1986,674.9L1988,674.9L1990.1,680.8L1992.2,680.8L1994.2,680.8L1996.3,680.8L1998.3,680.8L2000.4,674.9L2002.4,680.8L2004.5,680.8L2006.5,680.8L2008.6,674.9L2010.6,674.9L2012.7,674.9L2014.8,680.8L2016.8,669L2018.9,674.9L2020.9,686.7L2023,674.9L2025,674.9L2027.1,674.9L2029.1,674.9L2031.2,674.9L2033.2,669L2035.3,674.9L2037.4,669L2039.4,669L2041.5,680.8L2043.5,674.9L2045.6,674.9L2047.6,669L2049.7,674.9L2051.7,686.7L2053.8,680.8L2055.8,686.7L2057.9,680.8L2060,686.7L2062,686.7L2064.1,680.8L2066.1,680.8L2068.2,680.8L2070.2,680.8L2072.3,686.7L2074.3,680.8L2076.4,686.7L2078.4,686.7L2080.5,680.8L2082.5,686.7L2084.6,686.7L2086.7,680.8L2088.7,686.7L2090.8,680.8L2092.8,680.8L2094.9,592.5L2096.9,686.7L2099,686.7L2101,680.8L2103.1,686.7L2105.1,686.7L2107.2,686.7L2109.3,680.8L2111.3,686.7L2113.4,680.8L2115.4,686.7L2117.5,680.8L2119.5,680.8L2121.6,686.7L2123.6,680.8L2125.7,686.7L2127.7,680.8L2129.8,680.8L2129.8,710.2 L1540.2,710.2 Z" fill="#7eb26d" fill-opacity="0.1" stroke="none"/><path d="M1540.2,680.8L1542.3,674.9L1544.3,680.8L1546.4,674.9L1548.4,669L1550.5,674.9L1552.5,674.9L1554.6,680.8L1556.6,680.8L1558.7,674.9L1560.7,674.9L1562.8,674.9L1564.9,680.8L1566.9,680.8L1569,680.8L1571,627.8L1573.1,680.8L1575.1,674.9L1577.2,674.9L1579.2,680.8L1581.3,674.9L1583.3,674.9L1585.4,680.8L1587.5,674.9L1589.5,674.9L1591.6,680.8L1593.6,674.9L1595.7,674.9L1597.7,674.9L1599.8,674.9L1601.8,680.8L1603.9,674.9L1605.9,680.8L1608,674.9L1610,680.8L1612.1,674.9L1614.2,674.9L1616.2,680.8L1618.3,674.9L1620.3,680.8L1622.4,674.9L1624.4,680.8L1626.5,674.9L1628.5,680.8L1630.6,680.8L1632.6,642.5L1634.7,604.3L1636.8,636.6L1638.8,669L1640.9,663.1L1642.9,669L1645,669L1647,645.5L1649.1,669L1651.1,669L1653.2,674.9L1655.2,663.1L1657.3,663.1L1659.4,663.1L1661.4,663.1L1663.5,663.1L1665.5,663.1L1667.6,674.9L1669.6,674.9L1671.7,669L1673.7,674.9L1675.8,669L1677.8,669L1679.9,669L1682,674.9L1684,674.9L1686.1,680.8L1688.1,680.8L1690.2,674.9L1692.2,674.9L1694.3,674.9L1696.3,680.8L1698.4,680.8L1700.4,680.8L1702.5,680.8L1704.5,674.9L1706.6,674.9L1708.7,674.9L1710.7,669L1712.8,669L1714.8,669L1716.9,674.9L1718.9,669L1721,669L1723,669L1725.1,669L1727.1,669L1729.2,674.9L1731.3,669L1733.3,674.9L1735.4,674.9L1737.4,669L1739.5,663.1L1741.5,674.9L1743.6,669L1745.6,674.9L1747.7,674.9L1749.7,669L1751.8,674.9L1753.9,669L1755.9,669L1758,669L1760,669L1762.1,674.9L1764.1,674.9L1766.2,674.9L1768.2,674.9L1770.3,669L1772.3,669L1774.4,674.9L1776.5,674.9L1778.5,680.8L1780.6,680.8L1782.6,674.9L1784.7,680.8L1786.7,680.8L1788.8,674.9L1790.8,680.8L1792.9,674.9L1794.9,674.9L1797,680.8L1799,674.9L1801.1,674.9L1803.2,674.9L1805.2,680.8L1807.3,680.8L1809.3,674.9L1811.4,674.9L1813.4,680.8L1815.5,680.8L1817.5,674.9L1819.6,674.9L1821.6,680.8L1823.7,674.9L1825.8,674.9L1827.8,674.9L1829.9,680.8L1831.9,680.8L1834,680.8L1836,674.9L1838.1,680.8L1840.1,680.8L1842.2,680.8L1844.2,680.8L1846.3,680.8L1848.4,680.8L1850.4,674.9L1852.5,674.9L1854.5,680.8L1856.6,680.8L1858.6,680.8L1860.7,674.9L1862.7,674.9L1864.8,674.9L1866.8,680.8L1868.9,680.8L1871,674.9L1873,674.9L1875.1,680.8L1877.1,674.9L1879.2,674.9L1881.2,674.9L1883.3,674.9L1885.3,680.8L1887.4,680.8L1889.4,680.8L1891.5,680.8L1893.5,674.9L1895.6,686.7L1897.7,680.8L1899.7,686.7L1901.8,686.7L1903.8,686.7L1905.9,686.7L1907.9,680.8L1910,680.8L1912,686.7L1914.1,680.8L1916.1,686.7L1918.2,686.7L1920.3,686.7L1922.3,686.7L1924.4,686.7L1926.4,669L1928.5,669L1930.5,674.9L1932.6,674.9L1934.6,674.9L1936.7,674.9L1938.7,674.9L1940.8,674.9L1942.9,669L1944.9,674.9L1947,669L1949,669L1951.1,669L1953.1,674.9L1955.2,669L1957.2,669L1959.3,669L1961.3,674.9L1963.4,669L1965.5,674.9L1967.5,686.7L1969.6,680.8L1971.6,674.9L1973.7,674.9L1975.7,680.8L1977.8,680.8L1979.8,686.7L1981.9,674.9L1983.9,674.9L1986,674.9L1988,674.9L1990.1,680.8L1992.2,680.8L1994.2,680.8L1996.3,680.8L1998.3,680.8L2000.4,674.9L2002.4,680.8L2004.5,680.8L2006.5,680.8L2008.6,674.9L2010.6,674.9L2012.7,674.9L2014.8,680.8L2016.8,669L2018.9,674.9L2020.9,686.7L2023,674.9L2025,674.9L2027.1,674.9L2029.1,674.9L2031.2,674.9L2033.2,669L2035.3,674.9L2037.4,669L2039.4,669L2041.5,680.8L2043.5,674.9L2045.6,674.9L2047.6,669L2049.7,674.9L2051.7,686.7L2053.8,680.8L2055.8,686.7L2057.9,680.8L2060,686.7L2062,686.7L2064.1,680.8L2066.1,680.8L2068.2,680.8L2070.2,680.8L2072.3,686.7L2074.3,680.8L2076.4,686.7L2078.4,686.7L2080.5,680.8L2082.5,686.7L2084.6,686.7L2086.7,680.8L2088.7,686.7L2090.8,680.8L2092.8,680.8L2094.9,592.5L2096.9,686.7L2099,686.7L2101,680.8L2103.1,686.7L2105.1,686.7L2107.2,686.7L2109.3,680.8L2111.3,686.7L2113.4,680.8L2115.4,686.7L2117.5,680.8L2119.5,680.8L2121.6,686.7L2123.6,680.8L2125.7,686.7L2127.7,680.8L2129.8,680.8" fill="none" stroke="#7eb26d" stroke-width="2.1" stroke-linejoin="round"/>
<rect x="1540.2" y="704.3" width="589.6" height="5.9" fill="#eab839" fill-opacity="0.1"/>
<path d="M1540.2,704.3H2129.8" stroke="#eab839" stroke-width="2.2"/>
<rect x="1517.5" y="790.8" width="30.8" height="8.4" rx="2.2" fill="#7eb26d"/><text x="1566.3" y="801" font-size="26.4" fill="#3a404b" textLength="183.9" lengthAdjust="spacingAndGlyphs" stroke="#3a404b" stroke-width="0.35">Active Handlers</text><rect x="1773.6" y="790.8" width="30.8" height="8.4" rx="2.2" fill="#eab839"/><text x="1822" y="801" font-size="26.4" fill="#3a404b" textLength="174" lengthAdjust="spacingAndGlyphs" stroke="#3a404b" stroke-width="0.35">Active Request</text>
<path d="M27.2,879.4L34.5,887.4L41.8,879.4" fill="none" stroke="#41464f" stroke-width="3.0" stroke-linecap="round" stroke-linejoin="round"/>
<text x="53.3" y="894.3" font-size="34.4" fill="#41464f" textLength="518" lengthAdjust="spacingAndGlyphs" stroke="#41464f" stroke-width="1.7" paint-order="stroke">GC, Memory and Heap Utilization</text>
<text x="555" y="976.2" font-size="29.8" fill="#3f444d" text-anchor="middle" textLength="474.5" lengthAdjust="spacingAndGlyphs" stroke="#3f444d" stroke-width="1.5" paint-order="stroke">Garbage Collection Duration - Rate</text>
<g stroke="#000" stroke-opacity="0.08" stroke-width="2.2"><path d="M142.5,1035.9H1037.8"/><path d="M142.5,1064.5H1037.8"/><path d="M142.5,1093.1H1037.8"/><path d="M142.5,1123.9H1037.8"/><path d="M142.5,1152.5H1037.8"/><path d="M142.5,1181.1H1037.8"/><path d="M142.5,1211.9H1037.8"/><path d="M176.5,1035.5V1211.9"/><path d="M326.1,1035.5V1211.9"/><path d="M475.7,1035.5V1211.9"/><path d="M625.4,1035.5V1211.9"/><path d="M775,1035.5V1211.9"/><path d="M924.6,1035.5V1211.9"/></g>
<text x="131.3" y="1042.9" font-size="26.4" fill="#3a404b" text-anchor="end" textLength="90.5" lengthAdjust="spacingAndGlyphs" stroke="#3a404b" stroke-width="0.35">15.6 ms</text><text x="131.3" y="1073.7" font-size="26.4" fill="#3a404b" text-anchor="end" textLength="90.5" lengthAdjust="spacingAndGlyphs" stroke="#3a404b" stroke-width="0.35">3.91 ms</text><text x="131.3" y="1102.3" font-size="26.4" fill="#3a404b" text-anchor="end" textLength="76.9" lengthAdjust="spacingAndGlyphs" stroke="#3a404b" stroke-width="0.35">977 µs</text><text x="131.3" y="1130.9" font-size="26.4" fill="#3a404b" text-anchor="end" textLength="76.9" lengthAdjust="spacingAndGlyphs" stroke="#3a404b" stroke-width="0.35">244 µs</text><text x="131.3" y="1161.7" font-size="26.4" fill="#3a404b" text-anchor="end" textLength="84" lengthAdjust="spacingAndGlyphs" stroke="#3a404b" stroke-width="0.35">61.0 µs</text><text x="131.3" y="1190.3" font-size="26.4" fill="#3a404b" text-anchor="end" textLength="84" lengthAdjust="spacingAndGlyphs" stroke="#3a404b" stroke-width="0.35">15.3 µs</text><text x="131.3" y="1218.9" font-size="26.4" fill="#3a404b" text-anchor="end" textLength="84" lengthAdjust="spacingAndGlyphs" stroke="#3a404b" stroke-width="0.35">3.81 µs</text>
<text x="176.5" y="1252" font-size="26.4" fill="#3a404b" text-anchor="middle" textLength="63.7" lengthAdjust="spacingAndGlyphs" stroke="#3a404b" stroke-width="0.35">12:00</text><text x="326.1" y="1252" font-size="26.4" fill="#3a404b" text-anchor="middle" textLength="63.7" lengthAdjust="spacingAndGlyphs" stroke="#3a404b" stroke-width="0.35">16:00</text><text x="475.7" y="1252" font-size="26.4" fill="#3a404b" text-anchor="middle" textLength="63.7" lengthAdjust="spacingAndGlyphs" stroke="#3a404b" stroke-width="0.35">20:00</text><text x="625.4" y="1252" font-size="26.4" fill="#3a404b" text-anchor="middle" textLength="63.7" lengthAdjust="spacingAndGlyphs" stroke="#3a404b" stroke-width="0.35">00:00</text><text x="775" y="1252" font-size="26.4" fill="#3a404b" text-anchor="middle" textLength="63.7" lengthAdjust="spacingAndGlyphs" stroke="#3a404b" stroke-width="0.35">04:00</text><text x="924.6" y="1252" font-size="26.4" fill="#3a404b" text-anchor="middle" textLength="63.7" lengthAdjust="spacingAndGlyphs" stroke="#3a404b" stroke-width="0.35">08:00</text>
<path d="M142.5,1111.4L143.9,1118.2L145.2,1121.5L146.6,1109.8L147.9,1113.2L149.3,1109.7L150.6,1117.6L152,1135.3L153.4,1096.8L154.7,1115.5L156.1,1107.3L157.4,1096.2L158.8,1112L160.1,1110L161.5,1114.1L162.8,1099.1L164.2,1123L165.6,1110.5L166.9,1106.9L168.3,1119.9L169.6,1117.8L171,1117.2L172.3,1118.5L173.7,1097.5L175.1,1136.1L176.4,1104.7L177.8,1104.9L179.1,1108.8L180.5,1100.5L181.8,1110.5L183.2,1132.3L184.5,1112.8L185.9,1131.8L187.3,1100L188.6,1101.8L190,1101.1L191.3,1111.4L192.7,1136.8L194,1112.8L195.4,1107.2L196.8,1109.4L198.1,1114.7L199.5,1115.9L200.8,1106L202.2,1116L203.5,1111.2L204.9,1116.2L206.2,1099.2L207.6,1104.7L209,1116L210.3,1099.3L211.7,1113.3L213,1111.2L214.4,1111.4L215.7,1114.4L217.1,1110.9L218.5,1112.5L219.8,1106.7L221.2,1109L222.5,1130.2L223.9,1117.7L225.2,1114.7L226.6,1111.2L227.9,1116.2L229.3,1112.1L230.7,1107.9L232,1118L233.4,1106.3L234.7,1094.4L236.1,1107.4L237.4,1114.4L238.8,1124.3L240.2,1116.5L241.5,1103.9L242.9,1109L244.2,1104L245.6,1107.4L246.9,1100.9L248.3,1096L249.6,1126.4L251,1108.7L252.4,1107.1L253.7,1112.3L255.1,1124.4L256.4,1114.5L257.8,1111.9L259.1,1119.5L260.5,1103.9L261.9,1117.4L263.2,1105.1L264.6,1103.6L265.9,1109.1L267.3,1119.6L268.6,1106.2L270,1120.2L271.3,1117L272.7,1106.2L274.1,1118.8L275.4,1102L276.8,1096.8L278.1,1100.4L279.5,1103.5L280.8,1118L282.2,1109.6L283.6,1125.8L284.9,1116.9L286.3,1107.7L287.6,1107.7L289,1114L290.3,1100.1L291.7,1098.1L293,1103.3L294.4,1113.7L295.8,1110.5L297.1,1112.8L298.5,1114.1L299.8,1102.1L301.2,1125.6L302.5,1103.5L303.9,1121.4L305.3,1114.3L306.6,1116.4L308,1134.9L309.3,1116.7L310.7,1118.7L312,1118.5L313.4,1111.1L314.7,1109.7L316.1,1118.5L317.5,1125.3L318.8,1125.4L320.2,1118.5L321.5,1125.7L322.9,1120.6L324.2,1126.2L325.6,1117.8L327,1121.2L328.3,1132.7L329.7,1123.8L331,1126.2L332.4,1112.7L333.7,1114.2L335.1,1119.4L336.5,1144.6L337.8,1118.8L339.2,1123.7L340.5,1112.6L341.9,1126L343.2,1121.8L344.6,1108.5L345.9,1119.2L347.3,1111.9L348.7,1119.6L350,1109.9L351.4,1112.5L352.7,1115.9L354.1,1106.3L355.4,1099L356.8,1113.1L358.2,1108.8L359.5,1114.6L360.9,1109.7L362.2,1117.7L363.6,1114.5L364.9,1108.1L366.3,1108.1L367.6,1104.1L369,1107.9L370.4,1096.4L371.7,1099.1L373.1,1092.6L374.4,1122.4L375.8,1100.1L377.1,1124.5L378.5,1103.9L379.9,1107.2L381.2,1111.9L382.6,1119.4L383.9,1112.7L385.3,1114.4L386.6,1105.2L388,1120.8L389.3,1114.9L390.7,1106.3L392.1,1108.3L393.4,1094.1L394.8,1114.2L396.1,1111.5L397.5,1117.8L398.8,1089.3L400.2,1107.2L401.6,1105.7L402.9,1110.8L404.3,1105.8L405.6,1113L407,1119.1L408.3,1112.8L409.7,1111.5L411,1111.5L412.4,1109.7L413.8,1112.8L415.1,1107.5L416.5,1098.5L417.8,1119L419.2,1096.9L420.5,1109.9L421.9,1098.5L423.3,1107.6L424.6,1102.4L426,1108.5L427.3,1101.7L428.7,1096.9L430,1110.1L431.4,1117.3L432.7,1112.3L434.1,1107.8L435.5,1098.5L436.8,1110.2L438.2,1108.4L439.5,1101.9L440.9,1113L442.2,1106L443.6,1124.9L445,1107.3L446.3,1106.6L447.7,1111L449,1109.9L450.4,1108L451.7,1100.8L453.1,1104L454.4,1108.3L455.8,1097.9L457.2,1116.2L458.5,1110.9L459.9,1108.8L461.2,1104L462.6,1114.1L463.9,1105.7L465.3,1124.3L466.7,1109.9L468,1096.4L469.4,1110.2L470.7,1101L472.1,1102L473.4,1105.3L474.8,1107.6L476.1,1106.8L477.5,1107.9L478.9,1105.3L480.2,1099.6L481.6,1108.9L482.9,1106.8L484.3,1113.6L485.6,1114.3L487,1128.8L488.4,1100.7L489.7,1125.2L491.1,1109.2L492.4,1106.8L493.8,1107.6L495.1,1105.4L496.5,1117L497.8,1102.8L499.2,1110.8L500.6,1116L501.9,1119.7L503.3,1104.5L504.6,1101.2L506,1106.3L507.3,1102.2L508.7,1114.8L510.1,1102.5L511.4,1111.7L512.8,1101.7L514.1,1105.8L515.5,1110.2L516.8,1112.7L518.2,1096.7L519.6,1105.6L520.9,1092.7L522.3,1103.5L523.6,1106.2L525,1109.3L526.3,1112.8L527.7,1113.1L529,1099.3L530.4,1113.3L531.8,1104L533.1,1125.8L534.5,1112.7L535.8,1110.4L537.2,1105.7L538.5,1104.9L539.9,1106.9L541.3,1102.6L542.6,1112.7L544,1110.8L545.3,1115.2L546.7,1110L548,1114.6L549.4,1102.4L550.7,1128.6L552.1,1098.8L553.5,1108.7L554.8,1111.2L556.2,1114.3L557.5,1102.4L558.9,1096.7L560.2,1098.5L561.6,1103.3L563,1104.5L564.3,1109.3L565.7,1120.3L567,1118.5L568.4,1106.1L569.7,1115.4L571.1,1113.4L572.4,1116L573.8,1107.6L575.2,1101.8L576.5,1110.8L577.9,1117.2L579.2,1103.4L580.6,1118.9L581.9,1118.8L583.3,1106L584.7,1096.6L586,1105.8L587.4,1107.8L588.7,1111.5L590.1,1100.7L591.4,1121.7L592.8,1121.5L594.1,1098.4L595.5,1089.1L596.9,1100.8L598.2,1114.5L599.6,1114.1L600.9,1112.3L602.3,1104.8L603.6,1090.4L605,1108L606.4,1110.1L607.7,1103.3L609.1,1107.5L610.4,1107.2L611.8,1104.5L613.1,1099L614.5,1110.8L615.8,1098.7L617.2,1118.6L618.6,1104.3L619.9,1082.8L621.3,1087L622.6,1117.5L624,1111.8L625.3,1115.6L626.7,1116.2L628.1,1100.9L629.4,1109.6L630.8,1107.8L632.1,1102.8L633.5,1106.4L634.8,1102.5L636.2,1115.9L637.5,1110.1L638.9,1113.7L640.3,1129L641.6,1111.5L643,1116.2L644.3,1116.6L645.7,1113L647,1109.1L648.4,1123.3L649.8,1118L651.1,1090.2L652.5,1109.2L653.8,1105.2L655.2,1103.1L656.5,1133.9L657.9,1104L659.2,1114.4L660.6,1105.5L662,1105.7L663.3,1113.5L664.7,1103.8L666,1107.7L667.4,1102.5L668.7,1104.1L670.1,1116.1L671.5,1117.2L672.8,1106.3L674.2,1110.8L675.5,1130.4L676.9,1110L678.2,1108.1L679.6,1115.5L681,1108.1L682.3,1116.5L683.7,1118.4L685,1119.9L686.4,1109.6L687.7,1119.8L689.1,1107L690.4,1105.4L691.8,1109.4L693.2,1109.9L694.5,1117.3L695.9,1117.1L697.2,1110.9L698.6,1115L699.9,1110.4L701.3,1107.1L702.7,1110.5L704,1116.4L705.4,1108.9L706.7,1119.3L708.1,1122.6L709.4,1112.4L710.8,1108L712.1,1103L713.5,1108.4L714.9,1111.2L716.2,1116.4L717.6,1097L718.9,1111.1L720.3,1112.6L721.6,1123.3L723,1110.3L724.4,1110.4L725.7,1100.9L727.1,1105.4L728.4,1105.4L729.8,1105.3L731.1,1112.8L732.5,1100.6L733.8,1110.2L735.2,1115.3L736.6,1118.8L737.9,1114.9L739.3,1121L740.6,1118.6L742,1100.5L743.3,1110.4L744.7,1100.5L746.1,1106.1L747.4,1112.5L748.8,1109.3L750.1,1122.4L751.5,1124L752.8,1115.1L754.2,1118.6L755.5,1113.8L756.9,1115L758.3,1118.7L759.6,1109.4L761,1115.4L762.3,1109.3L763.7,1131.3L765,1122.8L766.4,1125.9L767.8,1112.2L769.1,1102.8L770.5,1096.8L771.8,1106.7L773.2,1100.8L774.5,1098.7L775.9,1108.6L777.2,1105L778.6,1116.7L780,1125.7L781.3,1112.7L782.7,1115.6L784,1101.7L785.4,1114.4L786.7,1110L788.1,1105.4L789.5,1109.3L790.8,1125.1L792.2,1102L793.5,1106.6L794.9,1113.9L796.2,1115.7L797.6,1115L798.9,1114.1L800.3,1130.6L801.7,1117.1L803,1114.4L804.4,1105.4L805.7,1127.5L807.1,1117.7L808.4,1124.6L809.8,1108.8L811.2,1111.4L812.5,1118.2L813.9,1119.6L815.2,1131.1L816.6,1113.2L817.9,1128.7L819.3,1115.1L820.6,1125.6L822,1123.1L823.4,1117.9L824.7,1140.7L826.1,1125.3L827.4,1132.9L828.8,1118.6L830.1,1124L831.5,1127.7L832.9,1129.2L834.2,1123.8L835.6,1120.4L836.9,1103.9L838.3,1120L839.6,1118.6L841,1125.3L842.3,1144.6L843.7,1139.8L845.1,1127.8L846.4,1131.6L847.8,1126.7L849.1,1143.4L850.5,1127.3L851.8,1120L853.2,1118.9L854.6,1129.5L855.9,1132.8L857.3,1126.3L858.6,1132L860,1111.6L861.3,1120.8L862.7,1118.3L864.1,1119.1L865.4,1101.9L866.8,1098.2L868.1,1097.1L869.5,1108.5L870.8,1128.7L872.2,1113.5L873.5,1105.9L874.9,1118.1L876.3,1112.6L877.6,1117.6L879,1112.2L880.3,1103.7L881.7,1117.4L883,1113.7L884.4,1112.3L885.8,1118L887.1,1103.6L888.5,1121.3L889.8,1114.5L891.2,1116.2L892.5,1122.7L893.9,1111.2L895.2,1114.1L896.6,1113.2L898,1112.5L899.3,1112.6L900.7,1115.2L902,1113L903.4,1109.2L904.7,1129.8L906.1,1112.1L907.5,1116.1L908.8,1112.6L910.2,1103.3L911.5,1114.3L912.9,1117.9L914.2,1118.5L915.6,1131.1L916.9,1118.3L918.3,1119.6L919.7,1116.6L921,1109.3L922.4,1108.3L923.7,1105.3L925.1,1104.2L926.4,1120.9L927.8,1117.3L929.2,1115.7L930.5,1113.5L931.9,1097.2L933.2,1114.1L934.6,1105.1L935.9,1110.6L937.3,1119.8L938.6,1100.3L940,1113.1L941.4,1112.2L942.7,1118.1L944.1,1116L945.4,1104.3L946.8,1124.7L948.1,1122.3L949.5,1121L950.9,1117.6L952.2,1109.5L953.6,1119.6L954.9,1114.7L956.3,1135.8L957.6,1113.3L959,1103.9L960.3,1108.8L961.7,1121L963.1,1106.8L964.4,1096.3L965.8,1120.6L967.1,1111.6L968.5,1109.4L969.8,1117.1L971.2,1109.7L972.6,1108.5L973.9,1139L975.3,1110.3L976.6,1117.3L978,1113.8L979.3,1120.9L980.7,1113L982,1096.2L983.4,1112.9L984.8,1104.4L986.1,1118.1L987.5,1111.9L988.8,1123.4L990.2,1111.6L991.5,1097.8L992.9,1110.1L994.3,1116.2L995.6,1110.8L997,1110.4L998.3,1121.8L999.7,1107.4L1001,1115.5L1002.4,1109.3L1003.7,1100.2L1005.1,1107.1L1006.5,1112.1L1007.8,1115.4L1009.2,1107.9L1010.5,1102.9L1011.9,1104.2L1013.2,1115.8L1014.6,1102L1016,1103.5L1017.3,1121.2L1018.7,1113.1L1020,1105L1021.4,1112.2L1022.7,1121.8L1024.1,1120.3L1025.4,1112.9L1026.8,1103.7L1028.2,1101.3L1029.5,1110.2L1030.9,1110.4L1032.2,1100.4L1033.6,1102.2L1034.9,1112.3L1036.3,1096L1036.3,1211.9 L142.5,1211.9 Z" fill="#7eb26d" fill-opacity="0.1" stroke="none"/><path d="M142.5,1111.4L143.9,1118.2L145.2,1121.5L146.6,1109.8L147.9,1113.2L149.3,1109.7L150.6,1117.6L152,1135.3L153.4,1096.8L154.7,1115.5L156.1,1107.3L157.4,1096.2L158.8,1112L160.1,1110L161.5,1114.1L162.8,1099.1L164.2,1123L165.6,1110.5L166.9,1106.9L168.3,1119.9L169.6,1117.8L171,1117.2L172.3,1118.5L173.7,1097.5L175.1,1136.1L176.4,1104.7L177.8,1104.9L179.1,1108.8L180.5,1100.5L181.8,1110.5L183.2,1132.3L184.5,1112.8L185.9,1131.8L187.3,1100L188.6,1101.8L190,1101.1L191.3,1111.4L192.7,1136.8L194,1112.8L195.4,1107.2L196.8,1109.4L198.1,1114.7L199.5,1115.9L200.8,1106L202.2,1116L203.5,1111.2L204.9,1116.2L206.2,1099.2L207.6,1104.7L209,1116L210.3,1099.3L211.7,1113.3L213,1111.2L214.4,1111.4L215.7,1114.4L217.1,1110.9L218.5,1112.5L219.8,1106.7L221.2,1109L222.5,1130.2L223.9,1117.7L225.2,1114.7L226.6,1111.2L227.9,1116.2L229.3,1112.1L230.7,1107.9L232,1118L233.4,1106.3L234.7,1094.4L236.1,1107.4L237.4,1114.4L238.8,1124.3L240.2,1116.5L241.5,1103.9L242.9,1109L244.2,1104L245.6,1107.4L246.9,1100.9L248.3,1096L249.6,1126.4L251,1108.7L252.4,1107.1L253.7,1112.3L255.1,1124.4L256.4,1114.5L257.8,1111.9L259.1,1119.5L260.5,1103.9L261.9,1117.4L263.2,1105.1L264.6,1103.6L265.9,1109.1L267.3,1119.6L268.6,1106.2L270,1120.2L271.3,1117L272.7,1106.2L274.1,1118.8L275.4,1102L276.8,1096.8L278.1,1100.4L279.5,1103.5L280.8,1118L282.2,1109.6L283.6,1125.8L284.9,1116.9L286.3,1107.7L287.6,1107.7L289,1114L290.3,1100.1L291.7,1098.1L293,1103.3L294.4,1113.7L295.8,1110.5L297.1,1112.8L298.5,1114.1L299.8,1102.1L301.2,1125.6L302.5,1103.5L303.9,1121.4L305.3,1114.3L306.6,1116.4L308,1134.9L309.3,1116.7L310.7,1118.7L312,1118.5L313.4,1111.1L314.7,1109.7L316.1,1118.5L317.5,1125.3L318.8,1125.4L320.2,1118.5L321.5,1125.7L322.9,1120.6L324.2,1126.2L325.6,1117.8L327,1121.2L328.3,1132.7L329.7,1123.8L331,1126.2L332.4,1112.7L333.7,1114.2L335.1,1119.4L336.5,1144.6L337.8,1118.8L339.2,1123.7L340.5,1112.6L341.9,1126L343.2,1121.8L344.6,1108.5L345.9,1119.2L347.3,1111.9L348.7,1119.6L350,1109.9L351.4,1112.5L352.7,1115.9L354.1,1106.3L355.4,1099L356.8,1113.1L358.2,1108.8L359.5,1114.6L360.9,1109.7L362.2,1117.7L363.6,1114.5L364.9,1108.1L366.3,1108.1L367.6,1104.1L369,1107.9L370.4,1096.4L371.7,1099.1L373.1,1092.6L374.4,1122.4L375.8,1100.1L377.1,1124.5L378.5,1103.9L379.9,1107.2L381.2,1111.9L382.6,1119.4L383.9,1112.7L385.3,1114.4L386.6,1105.2L388,1120.8L389.3,1114.9L390.7,1106.3L392.1,1108.3L393.4,1094.1L394.8,1114.2L396.1,1111.5L397.5,1117.8L398.8,1089.3L400.2,1107.2L401.6,1105.7L402.9,1110.8L404.3,1105.8L405.6,1113L407,1119.1L408.3,1112.8L409.7,1111.5L411,1111.5L412.4,1109.7L413.8,1112.8L415.1,1107.5L416.5,1098.5L417.8,1119L419.2,1096.9L420.5,1109.9L421.9,1098.5L423.3,1107.6L424.6,1102.4L426,1108.5L427.3,1101.7L428.7,1096.9L430,1110.1L431.4,1117.3L432.7,1112.3L434.1,1107.8L435.5,1098.5L436.8,1110.2L438.2,1108.4L439.5,1101.9L440.9,1113L442.2,1106L443.6,1124.9L445,1107.3L446.3,1106.6L447.7,1111L449,1109.9L450.4,1108L451.7,1100.8L453.1,1104L454.4,1108.3L455.8,1097.9L457.2,1116.2L458.5,1110.9L459.9,1108.8L461.2,1104L462.6,1114.1L463.9,1105.7L465.3,1124.3L466.7,1109.9L468,1096.4L469.4,1110.2L470.7,1101L472.1,1102L473.4,1105.3L474.8,1107.6L476.1,1106.8L477.5,1107.9L478.9,1105.3L480.2,1099.6L481.6,1108.9L482.9,1106.8L484.3,1113.6L485.6,1114.3L487,1128.8L488.4,1100.7L489.7,1125.2L491.1,1109.2L492.4,1106.8L493.8,1107.6L495.1,1105.4L496.5,1117L497.8,1102.8L499.2,1110.8L500.6,1116L501.9,1119.7L503.3,1104.5L504.6,1101.2L506,1106.3L507.3,1102.2L508.7,1114.8L510.1,1102.5L511.4,1111.7L512.8,1101.7L514.1,1105.8L515.5,1110.2L516.8,1112.7L518.2,1096.7L519.6,1105.6L520.9,1092.7L522.3,1103.5L523.6,1106.2L525,1109.3L526.3,1112.8L527.7,1113.1L529,1099.3L530.4,1113.3L531.8,1104L533.1,1125.8L534.5,1112.7L535.8,1110.4L537.2,1105.7L538.5,1104.9L539.9,1106.9L541.3,1102.6L542.6,1112.7L544,1110.8L545.3,1115.2L546.7,1110L548,1114.6L549.4,1102.4L550.7,1128.6L552.1,1098.8L553.5,1108.7L554.8,1111.2L556.2,1114.3L557.5,1102.4L558.9,1096.7L560.2,1098.5L561.6,1103.3L563,1104.5L564.3,1109.3L565.7,1120.3L567,1118.5L568.4,1106.1L569.7,1115.4L571.1,1113.4L572.4,1116L573.8,1107.6L575.2,1101.8L576.5,1110.8L577.9,1117.2L579.2,1103.4L580.6,1118.9L581.9,1118.8L583.3,1106L584.7,1096.6L586,1105.8L587.4,1107.8L588.7,1111.5L590.1,1100.7L591.4,1121.7L592.8,1121.5L594.1,1098.4L595.5,1089.1L596.9,1100.8L598.2,1114.5L599.6,1114.1L600.9,1112.3L602.3,1104.8L603.6,1090.4L605,1108L606.4,1110.1L607.7,1103.3L609.1,1107.5L610.4,1107.2L611.8,1104.5L613.1,1099L614.5,1110.8L615.8,1098.7L617.2,1118.6L618.6,1104.3L619.9,1082.8L621.3,1087L622.6,1117.5L624,1111.8L625.3,1115.6L626.7,1116.2L628.1,1100.9L629.4,1109.6L630.8,1107.8L632.1,1102.8L633.5,1106.4L634.8,1102.5L636.2,1115.9L637.5,1110.1L638.9,1113.7L640.3,1129L641.6,1111.5L643,1116.2L644.3,1116.6L645.7,1113L647,1109.1L648.4,1123.3L649.8,1118L651.1,1090.2L652.5,1109.2L653.8,1105.2L655.2,1103.1L656.5,1133.9L657.9,1104L659.2,1114.4L660.6,1105.5L662,1105.7L663.3,1113.5L664.7,1103.8L666,1107.7L667.4,1102.5L668.7,1104.1L670.1,1116.1L671.5,1117.2L672.8,1106.3L674.2,1110.8L675.5,1130.4L676.9,1110L678.2,1108.1L679.6,1115.5L681,1108.1L682.3,1116.5L683.7,1118.4L685,1119.9L686.4,1109.6L687.7,1119.8L689.1,1107L690.4,1105.4L691.8,1109.4L693.2,1109.9L694.5,1117.3L695.9,1117.1L697.2,1110.9L698.6,1115L699.9,1110.4L701.3,1107.1L702.7,1110.5L704,1116.4L705.4,1108.9L706.7,1119.3L708.1,1122.6L709.4,1112.4L710.8,1108L712.1,1103L713.5,1108.4L714.9,1111.2L716.2,1116.4L717.6,1097L718.9,1111.1L720.3,1112.6L721.6,1123.3L723,1110.3L724.4,1110.4L725.7,1100.9L727.1,1105.4L728.4,1105.4L729.8,1105.3L731.1,1112.8L732.5,1100.6L733.8,1110.2L735.2,1115.3L736.6,1118.8L737.9,1114.9L739.3,1121L740.6,1118.6L742,1100.5L743.3,1110.4L744.7,1100.5L746.1,1106.1L747.4,1112.5L748.8,1109.3L750.1,1122.4L751.5,1124L752.8,1115.1L754.2,1118.6L755.5,1113.8L756.9,1115L758.3,1118.7L759.6,1109.4L761,1115.4L762.3,1109.3L763.7,1131.3L765,1122.8L766.4,1125.9L767.8,1112.2L769.1,1102.8L770.5,1096.8L771.8,1106.7L773.2,1100.8L774.5,1098.7L775.9,1108.6L777.2,1105L778.6,1116.7L780,1125.7L781.3,1112.7L782.7,1115.6L784,1101.7L785.4,1114.4L786.7,1110L788.1,1105.4L789.5,1109.3L790.8,1125.1L792.2,1102L793.5,1106.6L794.9,1113.9L796.2,1115.7L797.6,1115L798.9,1114.1L800.3,1130.6L801.7,1117.1L803,1114.4L804.4,1105.4L805.7,1127.5L807.1,1117.7L808.4,1124.6L809.8,1108.8L811.2,1111.4L812.5,1118.2L813.9,1119.6L815.2,1131.1L816.6,1113.2L817.9,1128.7L819.3,1115.1L820.6,1125.6L822,1123.1L823.4,1117.9L824.7,1140.7L826.1,1125.3L827.4,1132.9L828.8,1118.6L830.1,1124L831.5,1127.7L832.9,1129.2L834.2,1123.8L835.6,1120.4L836.9,1103.9L838.3,1120L839.6,1118.6L841,1125.3L842.3,1144.6L843.7,1139.8L845.1,1127.8L846.4,1131.6L847.8,1126.7L849.1,1143.4L850.5,1127.3L851.8,1120L853.2,1118.9L854.6,1129.5L855.9,1132.8L857.3,1126.3L858.6,1132L860,1111.6L861.3,1120.8L862.7,1118.3L864.1,1119.1L865.4,1101.9L866.8,1098.2L868.1,1097.1L869.5,1108.5L870.8,1128.7L872.2,1113.5L873.5,1105.9L874.9,1118.1L876.3,1112.6L877.6,1117.6L879,1112.2L880.3,1103.7L881.7,1117.4L883,1113.7L884.4,1112.3L885.8,1118L887.1,1103.6L888.5,1121.3L889.8,1114.5L891.2,1116.2L892.5,1122.7L893.9,1111.2L895.2,1114.1L896.6,1113.2L898,1112.5L899.3,1112.6L900.7,1115.2L902,1113L903.4,1109.2L904.7,1129.8L906.1,1112.1L907.5,1116.1L908.8,1112.6L910.2,1103.3L911.5,1114.3L912.9,1117.9L914.2,1118.5L915.6,1131.1L916.9,1118.3L918.3,1119.6L919.7,1116.6L921,1109.3L922.4,1108.3L923.7,1105.3L925.1,1104.2L926.4,1120.9L927.8,1117.3L929.2,1115.7L930.5,1113.5L931.9,1097.2L933.2,1114.1L934.6,1105.1L935.9,1110.6L937.3,1119.8L938.6,1100.3L940,1113.1L941.4,1112.2L942.7,1118.1L944.1,1116L945.4,1104.3L946.8,1124.7L948.1,1122.3L949.5,1121L950.9,1117.6L952.2,1109.5L953.6,1119.6L954.9,1114.7L956.3,1135.8L957.6,1113.3L959,1103.9L960.3,1108.8L961.7,1121L963.1,1106.8L964.4,1096.3L965.8,1120.6L967.1,1111.6L968.5,1109.4L969.8,1117.1L971.2,1109.7L972.6,1108.5L973.9,1139L975.3,1110.3L976.6,1117.3L978,1113.8L979.3,1120.9L980.7,1113L982,1096.2L983.4,1112.9L984.8,1104.4L986.1,1118.1L987.5,1111.9L988.8,1123.4L990.2,1111.6L991.5,1097.8L992.9,1110.1L994.3,1116.2L995.6,1110.8L997,1110.4L998.3,1121.8L999.7,1107.4L1001,1115.5L1002.4,1109.3L1003.7,1100.2L1005.1,1107.1L1006.5,1112.1L1007.8,1115.4L1009.2,1107.9L1010.5,1102.9L1011.9,1104.2L1013.2,1115.8L1014.6,1102L1016,1103.5L1017.3,1121.2L1018.7,1113.1L1020,1105L1021.4,1112.2L1022.7,1121.8L1024.1,1120.3L1025.4,1112.9L1026.8,1103.7L1028.2,1101.3L1029.5,1110.2L1030.9,1110.4L1032.2,1100.4L1033.6,1102.2L1034.9,1112.3L1036.3,1096" fill="none" stroke="#7eb26d" stroke-width="2.2" stroke-linejoin="round"/>
<path d="M142.5,1081L143.9,1080.6L145.2,1078.2L146.6,1080.2L147.9,1080.8L149.3,1078.2L150.6,1079.5L152,1081.9L153.4,1080L154.7,1079.2L156.1,1082.8L157.4,1081L158.8,1080.9L160.1,1083.4L161.5,1083.4L162.8,1079.8L164.2,1079.5L165.6,1081.5L166.9,1080L168.3,1077L169.6,1083.6L171,1081.3L172.3,1082.2L173.7,1078.3L175.1,1083.4L176.4,1079.9L177.8,1080.9L179.1,1079.2L180.5,1081.3L181.8,1080.6L183.2,1079.9L184.5,1081L185.9,1080L187.3,1081.9L188.6,1079.4L190,1079.5L191.3,1082L192.7,1083.1L194,1084.1L195.4,1082.7L196.8,1076.6L198.1,1080.3L199.5,1082.7L200.8,1080.3L202.2,1079.4L203.5,1081.5L204.9,1079.8L206.2,1081.6L207.6,1080.9L209,1084L210.3,1081.8L211.7,1079.1L213,1081.8L214.4,1081.8L215.7,1078.9L217.1,1079.9L218.5,1077L219.8,1083.8L221.2,1081.3L222.5,1078.1L223.9,1078.6L225.2,1081.2L226.6,1082L227.9,1079.9L229.3,1081.4L230.7,1078L232,1077.3L233.4,1082.7L234.7,1082L236.1,1080.1L237.4,1083.4L238.8,1079.5L240.2,1080.4L241.5,1083L242.9,1085L244.2,1080.9L245.6,1084.3L246.9,1079.9L248.3,1082.4L249.6,1081.3L251,1078.6L252.4,1081.5L253.7,1082.6L255.1,1080.4L256.4,1080.3L257.8,1082.6L259.1,1077.8L260.5,1076.7L261.9,1078.2L263.2,1077.4L264.6,1082.3L265.9,1080.3L267.3,1078.8L268.6,1079.6L270,1086.6L271.3,1080.1L272.7,1079.7L274.1,1081.2L275.4,1081.7L276.8,1081.3L278.1,1079.7L279.5,1079.9L280.8,1084L282.2,1081.9L283.6,1077.8L284.9,1082.7L286.3,1081.8L287.6,1079.9L289,1080.2L290.3,1081.2L291.7,1079.8L293,1077.9L294.4,1080.3L295.8,1076.8L297.1,1080.7L298.5,1076.6L299.8,1079.8L301.2,1080L302.5,1084.2L303.9,1078.9L305.3,1078.3L306.6,1079.1L308,1078.3L309.3,1078.6L310.7,1079.8L312,1080.7L313.4,1082.8L314.7,1077.4L316.1,1084.3L317.5,1083.5L318.8,1079.7L320.2,1074.9L321.5,1080.1L322.9,1080.9L324.2,1075.6L325.6,1079.2L327,1079.5L328.3,1077.8L329.7,1080.2L331,1081.7L332.4,1079.2L333.7,1080.5L335.1,1079.1L336.5,1079.1L337.8,1081.1L339.2,1082.7L340.5,1080.6L341.9,1077.1L343.2,1083.1L344.6,1078.4L345.9,1081.3L347.3,1084.1L348.7,1080.9L350,1077.5L351.4,1076.5L352.7,1081L354.1,1078.9L355.4,1079.7L356.8,1080.2L358.2,1078.1L359.5,1078.1L360.9,1076.5L362.2,1071.8L363.6,1075.1L364.9,1077.7L366.3,1077.7L367.6,1078.9L369,1078.6L370.4,1079.7L371.7,1081L373.1,1077.5L374.4,1078.8L375.8,1075.5L377.1,1080L378.5,1078.5L379.9,1079.6L381.2,1082.2L382.6,1081.2L383.9,1078.9L385.3,1080.8L386.6,1076.6L388,1078.9L389.3,1079.2L390.7,1075.8L392.1,1081.9L393.4,1077.3L394.8,1080.6L396.1,1077.9L397.5,1081.1L398.8,1081.2L400.2,1076.2L401.6,1075.4L402.9,1077.5L404.3,1078.5L405.6,1075.7L407,1075.4L408.3,1076.8L409.7,1070.6L411,1074.8L412.4,1073.7L413.8,1077.5L415.1,1075.4L416.5,1074.9L417.8,1076.9L419.2,1075.1L420.5,1078.1L421.9,1077.5L423.3,1078.4L424.6,1077.9L426,1081.3L427.3,1079.1L428.7,1080L430,1080L431.4,1077.6L432.7,1080.2L434.1,1078.9L435.5,1078.9L436.8,1075.7L438.2,1075.3L439.5,1077.1L440.9,1080.6L442.2,1074.7L443.6,1079L445,1076.9L446.3,1079.4L447.7,1078.9L449,1080.3L450.4,1072.4L451.7,1076.8L453.1,1075.2L454.4,1076.9L455.8,1075.8L457.2,1075.7L458.5,1078.5L459.9,1081.6L461.2,1071.5L462.6,1076.1L463.9,1077.2L465.3,1066.4L466.7,1074.9L468,1073.1L469.4,1073.7L470.7,1077.2L472.1,1078.3L473.4,1076.3L474.8,1075.6L476.1,1077.3L477.5,1076.6L478.9,1077.5L480.2,1076.7L481.6,1074.8L482.9,1076.9L484.3,1073.9L485.6,1078.1L487,1079L488.4,1073.9L489.7,1076.9L491.1,1073.9L492.4,1078.5L493.8,1078.1L495.1,1076L496.5,1077.7L497.8,1075.1L499.2,1074.2L500.6,1074L501.9,1074.6L503.3,1074.4L504.6,1075.4L506,1074.3L507.3,1076.1L508.7,1076.1L510.1,1072.6L511.4,1070.4L512.8,1073.4L514.1,1075.1L515.5,1073.1L516.8,1071.3L518.2,1074.4L519.6,1077.5L520.9,1070.7L522.3,1075.4L523.6,1073.7L525,1073.1L526.3,1075.1L527.7,1072L529,1073.9L530.4,1066.4L531.8,1073L533.1,1071.7L534.5,1069L535.8,1071.7L537.2,1070.3L538.5,1078.2L539.9,1074.4L541.3,1073.4L542.6,1072.4L544,1074.2L545.3,1075.2L546.7,1072.4L548,1078.6L549.4,1073.8L550.7,1072.3L552.1,1074.4L553.5,1077L554.8,1076.3L556.2,1072.8L557.5,1074.6L558.9,1074.3L560.2,1075.1L561.6,1074.6L563,1071.9L564.3,1071.5L565.7,1074.8L567,1072.5L568.4,1077L569.7,1074.6L571.1,1072.3L572.4,1072.9L573.8,1072.6L575.2,1073.7L576.5,1075.9L577.9,1071.3L579.2,1070.6L580.6,1075.3L581.9,1074L583.3,1074.6L584.7,1075.3L586,1074.4L587.4,1076.3L588.7,1073L590.1,1074.9L591.4,1072.5L592.8,1071.1L594.1,1074.1L595.5,1074.5L596.9,1070L598.2,1072L599.6,1074.6L600.9,1076.2L602.3,1072.5L603.6,1073.3L605,1071L606.4,1079.5L607.7,1075.6L609.1,1076.8L610.4,1076L611.8,1076.8L613.1,1075.7L614.5,1073.6L615.8,1076.1L617.2,1075.1L618.6,1076.7L619.9,1073.4L621.3,1074.1L622.6,1076.2L624,1077.4L625.3,1075.7L626.7,1073.4L628.1,1073.9L629.4,1073.3L630.8,1077.8L632.1,1075.5L633.5,1076.1L634.8,1075.2L636.2,1073.3L637.5,1076.6L638.9,1077.7L640.3,1076L641.6,1074.4L643,1075.6L644.3,1073.3L645.7,1075.4L647,1072.1L648.4,1071.1L649.8,1075L651.1,1074.8L652.5,1078L653.8,1074.2L655.2,1074.6L656.5,1072.2L657.9,1070.4L659.2,1070L660.6,1074L662,1071.4L663.3,1075L664.7,1075.2L666,1072.6L667.4,1075.9L668.7,1072.7L670.1,1075.2L671.5,1073.1L672.8,1074.8L674.2,1072.2L675.5,1075.6L676.9,1074L678.2,1074.8L679.6,1064.3L681,1076L682.3,1074.8L683.7,1075.5L685,1074.9L686.4,1070.5L687.7,1074.5L689.1,1074.8L690.4,1072.5L691.8,1074.7L693.2,1071L694.5,1076.7L695.9,1074.2L697.2,1075.3L698.6,1078.8L699.9,1076.5L701.3,1076.8L702.7,1074.4L704,1074.6L705.4,1072.2L706.7,1075.2L708.1,1078.5L709.4,1076L710.8,1077.4L712.1,1074.2L713.5,1074.3L714.9,1075.4L716.2,1077.7L717.6,1077.3L718.9,1076.8L720.3,1078.3L721.6,1077L723,1077.3L724.4,1080.1L725.7,1075.8L727.1,1077.9L728.4,1079.8L729.8,1077.1L731.1,1078.1L732.5,1076.1L733.8,1081L735.2,1072.7L736.6,1074.8L737.9,1074.8L739.3,1080.5L740.6,1077.6L742,1076.5L743.3,1074.4L744.7,1078.9L746.1,1078.5L747.4,1077.6L748.8,1076.4L750.1,1077.4L751.5,1080.1L752.8,1079.5L754.2,1078.5L755.5,1078.1L756.9,1074.6L758.3,1078L759.6,1076.4L761,1078.9L762.3,1080.3L763.7,1078.9L765,1078.4L766.4,1082.2L767.8,1080.7L769.1,1078.2L770.5,1073.6L771.8,1078.7L773.2,1079.5L774.5,1080.6L775.9,1077.5L777.2,1077.5L778.6,1078.5L780,1081.3L781.3,1077.2L782.7,1079.2L784,1076.9L785.4,1078.9L786.7,1075.8L788.1,1079.9L789.5,1077.8L790.8,1078.4L792.2,1080.4L793.5,1081.1L794.9,1075.9L796.2,1082L797.6,1081.5L798.9,1079.1L800.3,1082.9L801.7,1079.9L803,1081.9L804.4,1078.4L805.7,1078L807.1,1082L808.4,1084.1L809.8,1080.7L811.2,1081.2L812.5,1078.6L813.9,1076.4L815.2,1078.5L816.6,1082.3L817.9,1075.6L819.3,1077.8L820.6,1076L822,1080.4L823.4,1082.3L824.7,1078.5L826.1,1080.4L827.4,1083.6L828.8,1080.2L830.1,1078.5L831.5,1078.1L832.9,1077.4L834.2,1082.2L835.6,1079.2L836.9,1081.7L838.3,1081.7L839.6,1078.7L841,1079.6L842.3,1082L843.7,1081.3L845.1,1081L846.4,1077.6L847.8,1083.2L849.1,1080.7L850.5,1077.9L851.8,1081L853.2,1083.4L854.6,1086L855.9,1081.3L857.3,1078.7L858.6,1085.9L860,1080.7L861.3,1079.7L862.7,1077.7L864.1,1078.3L865.4,1083.7L866.8,1080.9L868.1,1080.5L869.5,1080.6L870.8,1085.3L872.2,1080.3L873.5,1083L874.9,1081.4L876.3,1081L877.6,1078.3L879,1081.4L880.3,1084L881.7,1082.4L883,1080.4L884.4,1079.2L885.8,1082.1L887.1,1080.7L888.5,1080.5L889.8,1081.4L891.2,1078.3L892.5,1082.5L893.9,1079.8L895.2,1078.2L896.6,1078.8L898,1081L899.3,1079.1L900.7,1078.4L902,1083.5L903.4,1080.3L904.7,1079.3L906.1,1078.4L907.5,1081.6L908.8,1078.9L910.2,1079.7L911.5,1081.6L912.9,1080.6L914.2,1082.1L915.6,1081.1L916.9,1080.3L918.3,1081L919.7,1081.3L921,1084.4L922.4,1083.2L923.7,1082.1L925.1,1084.1L926.4,1082.8L927.8,1080.8L929.2,1078L930.5,1081.4L931.9,1081.1L933.2,1080.1L934.6,1079.7L935.9,1079.1L937.3,1080L938.6,1080.9L940,1080.4L941.4,1080L942.7,1079.4L944.1,1081.8L945.4,1082L946.8,1079.7L948.1,1082.1L949.5,1082L950.9,1081.8L952.2,1078.8L953.6,1078.9L954.9,1077.3L956.3,1081.4L957.6,1075.9L959,1079.8L960.3,1080.3L961.7,1082.7L963.1,1080.6L964.4,1078.7L965.8,1078.2L967.1,1079L968.5,1080.5L969.8,1080.9L971.2,1080.5L972.6,1080L973.9,1080.8L975.3,1083.6L976.6,1079L978,1080.5L979.3,1082.8L980.7,1081.2L982,1078.7L983.4,1080.9L984.8,1078.2L986.1,1080.2L987.5,1082.6L988.8,1083.9L990.2,1076.8L991.5,1081.9L992.9,1083.7L994.3,1078.1L995.6,1079.5L997,1082.5L998.3,1077.8L999.7,1079.8L1001,1079.5L1002.4,1075.4L1003.7,1079.6L1005.1,1078.6L1006.5,1080.9L1007.8,1083.8L1009.2,1080.9L1010.5,1078.9L1011.9,1081.8L1013.2,1081.2L1014.6,1082.2L1016,1077.5L1017.3,1078.2L1018.7,1075.9L1020,1081.2L1021.4,1079.6L1022.7,1079.1L1024.1,1078.8L1025.4,1079.3L1026.8,1078.1L1028.2,1079.4L1029.5,1078.5L1030.9,1081.9L1032.2,1079.5L1033.6,1077.7L1034.9,1079.1L1036.3,1082.8L1036.3,1211.9 L142.5,1211.9 Z" fill="#eab839" fill-opacity="0.1" stroke="none"/><path d="M142.5,1081L143.9,1080.6L145.2,1078.2L146.6,1080.2L147.9,1080.8L149.3,1078.2L150.6,1079.5L152,1081.9L153.4,1080L154.7,1079.2L156.1,1082.8L157.4,1081L158.8,1080.9L160.1,1083.4L161.5,1083.4L162.8,1079.8L164.2,1079.5L165.6,1081.5L166.9,1080L168.3,1077L169.6,1083.6L171,1081.3L172.3,1082.2L173.7,1078.3L175.1,1083.4L176.4,1079.9L177.8,1080.9L179.1,1079.2L180.5,1081.3L181.8,1080.6L183.2,1079.9L184.5,1081L185.9,1080L187.3,1081.9L188.6,1079.4L190,1079.5L191.3,1082L192.7,1083.1L194,1084.1L195.4,1082.7L196.8,1076.6L198.1,1080.3L199.5,1082.7L200.8,1080.3L202.2,1079.4L203.5,1081.5L204.9,1079.8L206.2,1081.6L207.6,1080.9L209,1084L210.3,1081.8L211.7,1079.1L213,1081.8L214.4,1081.8L215.7,1078.9L217.1,1079.9L218.5,1077L219.8,1083.8L221.2,1081.3L222.5,1078.1L223.9,1078.6L225.2,1081.2L226.6,1082L227.9,1079.9L229.3,1081.4L230.7,1078L232,1077.3L233.4,1082.7L234.7,1082L236.1,1080.1L237.4,1083.4L238.8,1079.5L240.2,1080.4L241.5,1083L242.9,1085L244.2,1080.9L245.6,1084.3L246.9,1079.9L248.3,1082.4L249.6,1081.3L251,1078.6L252.4,1081.5L253.7,1082.6L255.1,1080.4L256.4,1080.3L257.8,1082.6L259.1,1077.8L260.5,1076.7L261.9,1078.2L263.2,1077.4L264.6,1082.3L265.9,1080.3L267.3,1078.8L268.6,1079.6L270,1086.6L271.3,1080.1L272.7,1079.7L274.1,1081.2L275.4,1081.7L276.8,1081.3L278.1,1079.7L279.5,1079.9L280.8,1084L282.2,1081.9L283.6,1077.8L284.9,1082.7L286.3,1081.8L287.6,1079.9L289,1080.2L290.3,1081.2L291.7,1079.8L293,1077.9L294.4,1080.3L295.8,1076.8L297.1,1080.7L298.5,1076.6L299.8,1079.8L301.2,1080L302.5,1084.2L303.9,1078.9L305.3,1078.3L306.6,1079.1L308,1078.3L309.3,1078.6L310.7,1079.8L312,1080.7L313.4,1082.8L314.7,1077.4L316.1,1084.3L317.5,1083.5L318.8,1079.7L320.2,1074.9L321.5,1080.1L322.9,1080.9L324.2,1075.6L325.6,1079.2L327,1079.5L328.3,1077.8L329.7,1080.2L331,1081.7L332.4,1079.2L333.7,1080.5L335.1,1079.1L336.5,1079.1L337.8,1081.1L339.2,1082.7L340.5,1080.6L341.9,1077.1L343.2,1083.1L344.6,1078.4L345.9,1081.3L347.3,1084.1L348.7,1080.9L350,1077.5L351.4,1076.5L352.7,1081L354.1,1078.9L355.4,1079.7L356.8,1080.2L358.2,1078.1L359.5,1078.1L360.9,1076.5L362.2,1071.8L363.6,1075.1L364.9,1077.7L366.3,1077.7L367.6,1078.9L369,1078.6L370.4,1079.7L371.7,1081L373.1,1077.5L374.4,1078.8L375.8,1075.5L377.1,1080L378.5,1078.5L379.9,1079.6L381.2,1082.2L382.6,1081.2L383.9,1078.9L385.3,1080.8L386.6,1076.6L388,1078.9L389.3,1079.2L390.7,1075.8L392.1,1081.9L393.4,1077.3L394.8,1080.6L396.1,1077.9L397.5,1081.1L398.8,1081.2L400.2,1076.2L401.6,1075.4L402.9,1077.5L404.3,1078.5L405.6,1075.7L407,1075.4L408.3,1076.8L409.7,1070.6L411,1074.8L412.4,1073.7L413.8,1077.5L415.1,1075.4L416.5,1074.9L417.8,1076.9L419.2,1075.1L420.5,1078.1L421.9,1077.5L423.3,1078.4L424.6,1077.9L426,1081.3L427.3,1079.1L428.7,1080L430,1080L431.4,1077.6L432.7,1080.2L434.1,1078.9L435.5,1078.9L436.8,1075.7L438.2,1075.3L439.5,1077.1L440.9,1080.6L442.2,1074.7L443.6,1079L445,1076.9L446.3,1079.4L447.7,1078.9L449,1080.3L450.4,1072.4L451.7,1076.8L453.1,1075.2L454.4,1076.9L455.8,1075.8L457.2,1075.7L458.5,1078.5L459.9,1081.6L461.2,1071.5L462.6,1076.1L463.9,1077.2L465.3,1066.4L466.7,1074.9L468,1073.1L469.4,1073.7L470.7,1077.2L472.1,1078.3L473.4,1076.3L474.8,1075.6L476.1,1077.3L477.5,1076.6L478.9,1077.5L480.2,1076.7L481.6,1074.8L482.9,1076.9L484.3,1073.9L485.6,1078.1L487,1079L488.4,1073.9L489.7,1076.9L491.1,1073.9L492.4,1078.5L493.8,1078.1L495.1,1076L496.5,1077.7L497.8,1075.1L499.2,1074.2L500.6,1074L501.9,1074.6L503.3,1074.4L504.6,1075.4L506,1074.3L507.3,1076.1L508.7,1076.1L510.1,1072.6L511.4,1070.4L512.8,1073.4L514.1,1075.1L515.5,1073.1L516.8,1071.3L518.2,1074.4L519.6,1077.5L520.9,1070.7L522.3,1075.4L523.6,1073.7L525,1073.1L526.3,1075.1L527.7,1072L529,1073.9L530.4,1066.4L531.8,1073L533.1,1071.7L534.5,1069L535.8,1071.7L537.2,1070.3L538.5,1078.2L539.9,1074.4L541.3,1073.4L542.6,1072.4L544,1074.2L545.3,1075.2L546.7,1072.4L548,1078.6L549.4,1073.8L550.7,1072.3L552.1,1074.4L553.5,1077L554.8,1076.3L556.2,1072.8L557.5,1074.6L558.9,1074.3L560.2,1075.1L561.6,1074.6L563,1071.9L564.3,1071.5L565.7,1074.8L567,1072.5L568.4,1077L569.7,1074.6L571.1,1072.3L572.4,1072.9L573.8,1072.6L575.2,1073.7L576.5,1075.9L577.9,1071.3L579.2,1070.6L580.6,1075.3L581.9,1074L583.3,1074.6L584.7,1075.3L586,1074.4L587.4,1076.3L588.7,1073L590.1,1074.9L591.4,1072.5L592.8,1071.1L594.1,1074.1L595.5,1074.5L596.9,1070L598.2,1072L599.6,1074.6L600.9,1076.2L602.3,1072.5L603.6,1073.3L605,1071L606.4,1079.5L607.7,1075.6L609.1,1076.8L610.4,1076L611.8,1076.8L613.1,1075.7L614.5,1073.6L615.8,1076.1L617.2,1075.1L618.6,1076.7L619.9,1073.4L621.3,1074.1L622.6,1076.2L624,1077.4L625.3,1075.7L626.7,1073.4L628.1,1073.9L629.4,1073.3L630.8,1077.8L632.1,1075.5L633.5,1076.1L634.8,1075.2L636.2,1073.3L637.5,1076.6L638.9,1077.7L640.3,1076L641.6,1074.4L643,1075.6L644.3,1073.3L645.7,1075.4L647,1072.1L648.4,1071.1L649.8,1075L651.1,1074.8L652.5,1078L653.8,1074.2L655.2,1074.6L656.5,1072.2L657.9,1070.4L659.2,1070L660.6,1074L662,1071.4L663.3,1075L664.7,1075.2L666,1072.6L667.4,1075.9L668.7,1072.7L670.1,1075.2L671.5,1073.1L672.8,1074.8L674.2,1072.2L675.5,1075.6L676.9,1074L678.2,1074.8L679.6,1064.3L681,1076L682.3,1074.8L683.7,1075.5L685,1074.9L686.4,1070.5L687.7,1074.5L689.1,1074.8L690.4,1072.5L691.8,1074.7L693.2,1071L694.5,1076.7L695.9,1074.2L697.2,1075.3L698.6,1078.8L699.9,1076.5L701.3,1076.8L702.7,1074.4L704,1074.6L705.4,1072.2L706.7,1075.2L708.1,1078.5L709.4,1076L710.8,1077.4L712.1,1074.2L713.5,1074.3L714.9,1075.4L716.2,1077.7L717.6,1077.3L718.9,1076.8L720.3,1078.3L721.6,1077L723,1077.3L724.4,1080.1L725.7,1075.8L727.1,1077.9L728.4,1079.8L729.8,1077.1L731.1,1078.1L732.5,1076.1L733.8,1081L735.2,1072.7L736.6,1074.8L737.9,1074.8L739.3,1080.5L740.6,1077.6L742,1076.5L743.3,1074.4L744.7,1078.9L746.1,1078.5L747.4,1077.6L748.8,1076.4L750.1,1077.4L751.5,1080.1L752.8,1079.5L754.2,1078.5L755.5,1078.1L756.9,1074.6L758.3,1078L759.6,1076.4L761,1078.9L762.3,1080.3L763.7,1078.9L765,1078.4L766.4,1082.2L767.8,1080.7L769.1,1078.2L770.5,1073.6L771.8,1078.7L773.2,1079.5L774.5,1080.6L775.9,1077.5L777.2,1077.5L778.6,1078.5L780,1081.3L781.3,1077.2L782.7,1079.2L784,1076.9L785.4,1078.9L786.7,1075.8L788.1,1079.9L789.5,1077.8L790.8,1078.4L792.2,1080.4L793.5,1081.1L794.9,1075.9L796.2,1082L797.6,1081.5L798.9,1079.1L800.3,1082.9L801.7,1079.9L803,1081.9L804.4,1078.4L805.7,1078L807.1,1082L808.4,1084.1L809.8,1080.7L811.2,1081.2L812.5,1078.6L813.9,1076.4L815.2,1078.5L816.6,1082.3L817.9,1075.6L819.3,1077.8L820.6,1076L822,1080.4L823.4,1082.3L824.7,1078.5L826.1,1080.4L827.4,1083.6L828.8,1080.2L830.1,1078.5L831.5,1078.1L832.9,1077.4L834.2,1082.2L835.6,1079.2L836.9,1081.7L838.3,1081.7L839.6,1078.7L841,1079.6L842.3,1082L843.7,1081.3L845.1,1081L846.4,1077.6L847.8,1083.2L849.1,1080.7L850.5,1077.9L851.8,1081L853.2,1083.4L854.6,1086L855.9,1081.3L857.3,1078.7L858.6,1085.9L860,1080.7L861.3,1079.7L862.7,1077.7L864.1,1078.3L865.4,1083.7L866.8,1080.9L868.1,1080.5L869.5,1080.6L870.8,1085.3L872.2,1080.3L873.5,1083L874.9,1081.4L876.3,1081L877.6,1078.3L879,1081.4L880.3,1084L881.7,1082.4L883,1080.4L884.4,1079.2L885.8,1082.1L887.1,1080.7L888.5,1080.5L889.8,1081.4L891.2,1078.3L892.5,1082.5L893.9,1079.8L895.2,1078.2L896.6,1078.8L898,1081L899.3,1079.1L900.7,1078.4L902,1083.5L903.4,1080.3L904.7,1079.3L906.1,1078.4L907.5,1081.6L908.8,1078.9L910.2,1079.7L911.5,1081.6L912.9,1080.6L914.2,1082.1L915.6,1081.1L916.9,1080.3L918.3,1081L919.7,1081.3L921,1084.4L922.4,1083.2L923.7,1082.1L925.1,1084.1L926.4,1082.8L927.8,1080.8L929.2,1078L930.5,1081.4L931.9,1081.1L933.2,1080.1L934.6,1079.7L935.9,1079.1L937.3,1080L938.6,1080.9L940,1080.4L941.4,1080L942.7,1079.4L944.1,1081.8L945.4,1082L946.8,1079.7L948.1,1082.1L949.5,1082L950.9,1081.8L952.2,1078.8L953.6,1078.9L954.9,1077.3L956.3,1081.4L957.6,1075.9L959,1079.8L960.3,1080.3L961.7,1082.7L963.1,1080.6L964.4,1078.7L965.8,1078.2L967.1,1079L968.5,1080.5L969.8,1080.9L971.2,1080.5L972.6,1080L973.9,1080.8L975.3,1083.6L976.6,1079L978,1080.5L979.3,1082.8L980.7,1081.2L982,1078.7L983.4,1080.9L984.8,1078.2L986.1,1080.2L987.5,1082.6L988.8,1083.9L990.2,1076.8L991.5,1081.9L992.9,1083.7L994.3,1078.1L995.6,1079.5L997,1082.5L998.3,1077.8L999.7,1079.8L1001,1079.5L1002.4,1075.4L1003.7,1079.6L1005.1,1078.6L1006.5,1080.9L1007.8,1083.8L1009.2,1080.9L1010.5,1078.9L1011.9,1081.8L1013.2,1081.2L1014.6,1082.2L1016,1077.5L1017.3,1078.2L1018.7,1075.9L1020,1081.2L1021.4,1079.6L1022.7,1079.1L1024.1,1078.8L1025.4,1079.3L1026.8,1078.1L1028.2,1079.4L1029.5,1078.5L1030.9,1081.9L1032.2,1079.5L1033.6,1077.7L1034.9,1079.1L1036.3,1082.8" fill="none" stroke="#eab839" stroke-width="2.2" stroke-linejoin="round"/>
<path d="M142.5,1143.3L143.9,1161.4L145.2,1126.6L146.6,1142.8L147.9,1164.7L149.3,1151L150.6,1142.2L152,1140.1L153.4,1133.3L154.7,1150.5L156.1,1139.7L157.4,1143.9L158.8,1157.9L160.1,1158.5L161.5,1155.1L162.8,1130.6L164.2,1142.4L165.6,1161.3L166.9,1135.9L168.3,1162.3L169.6,1191.4L171,1159.1L172.3,1144.5L173.7,1136.4L175.1,1143.3L176.4,1164.9L177.8,1145.7L179.1,1160.9L180.5,1184.9L181.8,1143.3L183.2,1147.8L184.5,1163L185.9,1152.8L187.3,1154.3L188.6,1148.8L190,1123.3L191.3,1152.6L192.7,1149.5L194,1148L195.4,1155.5L196.8,1158.5L198.1,1152.6L199.5,1166.6L200.8,1191.5L202.2,1153.6L203.5,1150.2L204.9,1136.7L206.2,1157L207.6,1189.9L209,1180.5L210.3,1161.6L211.7,1145.4L213,1158.5L214.4,1141.8L215.7,1139.4L217.1,1159.6L218.5,1140.5L219.8,1154.2L221.2,1150.2L222.5,1168.6L223.9,1155.2L225.2,1168.9L226.6,1161.3L227.9,1143.7L229.3,1139.5L230.7,1129.3L232,1152.6L233.4,1122.2L234.7,1143.5L236.1,1126.4L237.4,1145.8L238.8,1160.2L240.2,1143.2L241.5,1146.7L242.9,1147.8L244.2,1155.8L245.6,1136.9L246.9,1154.2L248.3,1152L249.6,1142L251,1142.6L252.4,1166.4L253.7,1161.2L255.1,1158L256.4,1144.5L257.8,1149.8L259.1,1139.6L260.5,1134.7L261.9,1148.7L263.2,1147.4L264.6,1188.8L265.9,1140.8L267.3,1158L268.6,1150.5L270,1153.8L271.3,1176.3L272.7,1135.5L274.1,1156.7L275.4,1143.6L276.8,1161.9L278.1,1155.4L279.5,1165.7L280.8,1154L282.2,1146.7L283.6,1170.5L284.9,1154.4L286.3,1152.8L287.6,1153.5L289,1147.4L290.3,1159.1L291.7,1173.5L293,1171.6L294.4,1158.8L295.8,1162.6L297.1,1163.8L298.5,1148.9L299.8,1172L301.2,1158.6L302.5,1136.4L303.9,1162.7L305.3,1146.3L306.6,1159.5L308,1163.6L309.3,1153L310.7,1159.4L312,1171.1L313.4,1141.7L314.7,1136.3L316.1,1155.4L317.5,1154.2L318.8,1179.3L320.2,1167.7L321.5,1162.7L322.9,1156L324.2,1164L325.6,1142.9L327,1153.8L328.3,1180.4L329.7,1152.8L331,1158.7L332.4,1165.1L333.7,1150L335.1,1153.1L336.5,1147.3L337.8,1170.9L339.2,1136.1L340.5,1164.5L341.9,1166.7L343.2,1136.2L344.6,1153L345.9,1170L347.3,1148.6L348.7,1152.2L350,1158L351.4,1172.8L352.7,1165.3L354.1,1151.3L355.4,1143.9L356.8,1142.5L358.2,1162.5L359.5,1135.5L360.9,1152.8L362.2,1165.5L363.6,1146.2L364.9,1155.7L366.3,1158.1L367.6,1167.5L369,1163.2L370.4,1160.2L371.7,1166.4L373.1,1169.7L374.4,1189.9L375.8,1165.3L377.1,1150.8L378.5,1158.7L379.9,1157L381.2,1181.1L382.6,1160.8L383.9,1183.4L385.3,1153.6L386.6,1157.5L388,1176.5L389.3,1176.4L390.7,1165.5L392.1,1173.3L393.4,1156.9L394.8,1153.7L396.1,1158.4L397.5,1172.1L398.8,1165.9L400.2,1175.2L401.6,1158.5L402.9,1156.3L404.3,1149.4L405.6,1158.4L407,1155.3L408.3,1160.5L409.7,1151.7L411,1154.2L412.4,1158.2L413.8,1171.5L415.1,1156.9L416.5,1153.8L417.8,1170.5L419.2,1196.6L420.5,1155.1L421.9,1155L423.3,1137.7L424.6,1139.9L426,1155.7L427.3,1170.6L428.7,1175L430,1163.4L431.4,1148.8L432.7,1159.2L434.1,1137.5L435.5,1152.2L436.8,1140.1L438.2,1152.6L439.5,1167.8L440.9,1175.5L442.2,1154.1L443.6,1155.8L445,1133.3L446.3,1143.9L447.7,1167.1L449,1163L450.4,1159.1L451.7,1154.7L453.1,1167.4L454.4,1147.6L455.8,1147L457.2,1179.1L458.5,1139.3L459.9,1153.1L461.2,1143.9L462.6,1163.9L463.9,1144.8L465.3,1144L466.7,1144.3L468,1156.4L469.4,1136.9L470.7,1131.7L472.1,1146.4L473.4,1143.9L474.8,1153.6L476.1,1144L477.5,1141.2L478.9,1150.9L480.2,1152.4L481.6,1158.8L482.9,1163.8L484.3,1128.2L485.6,1147.3L487,1122L488.4,1146.8L489.7,1153.6L491.1,1144.8L492.4,1159.9L493.8,1144.7L495.1,1163L496.5,1135.9L497.8,1122.5L499.2,1137.5L500.6,1178.7L501.9,1145.2L503.3,1146.8L504.6,1150.9L506,1143.4L507.3,1150.9L508.7,1149.4L510.1,1170.4L511.4,1161.1L512.8,1151.1L514.1,1166.1L515.5,1154.8L516.8,1136.5L518.2,1160.4L519.6,1141.4L520.9,1156.9L522.3,1149.8L523.6,1158.2L525,1163.8L526.3,1154.7L527.7,1143.2L529,1145L530.4,1154.5L531.8,1143.9L533.1,1144.3L534.5,1147.2L535.8,1144.6L537.2,1154.2L538.5,1143.6L539.9,1149.5L541.3,1140.6L542.6,1129.8L544,1157.2L545.3,1159.1L546.7,1143.2L548,1157.3L549.4,1152L550.7,1149.2L552.1,1161.4L553.5,1127.1L554.8,1148.1L556.2,1156.5L557.5,1136.7L558.9,1166.1L560.2,1142.4L561.6,1162.3L563,1146.7L564.3,1156.2L565.7,1148.3L567,1174.5L568.4,1153.3L569.7,1160L571.1,1156.8L572.4,1180.6L573.8,1146.3L575.2,1153.5L576.5,1159.9L577.9,1159L579.2,1155.1L580.6,1147.8L581.9,1156.9L583.3,1138.6L584.7,1149.1L586,1132.2L587.4,1142L588.7,1147.7L590.1,1134.2L591.4,1137.1L592.8,1159.7L594.1,1155L595.5,1161.4L596.9,1162.3L598.2,1156.6L599.6,1174.1L600.9,1152.9L602.3,1163.6L603.6,1133.3L605,1147.9L606.4,1161L607.7,1159L609.1,1150.6L610.4,1146.3L611.8,1159L613.1,1148.1L614.5,1137.8L615.8,1162.5L617.2,1145.9L618.6,1152L619.9,1164.5L621.3,1122.3L622.6,1154.9L624,1167.9L625.3,1125.4L626.7,1172.2L628.1,1156.1L629.4,1152.1L630.8,1150.7L632.1,1149.7L633.5,1139.6L634.8,1161.9L636.2,1160.5L637.5,1154L638.9,1125.3L640.3,1168.2L641.6,1149.5L643,1155.8L644.3,1173.5L645.7,1164.3L647,1149.2L648.4,1161.8L649.8,1156.6L651.1,1143.9L652.5,1151.6L653.8,1131.1L655.2,1133.2L656.5,1152.3L657.9,1165.6L659.2,1140.4L660.6,1163.3L662,1151.9L663.3,1169.8L664.7,1146.5L666,1182.4L667.4,1155.3L668.7,1147.8L670.1,1153.1L671.5,1130.6L672.8,1154.2L674.2,1147L675.5,1155.9L676.9,1146.9L678.2,1134.6L679.6,1122.2L681,1146.2L682.3,1141.7L683.7,1159.9L685,1138.7L686.4,1155.2L687.7,1148.6L689.1,1167.1L690.4,1151.3L691.8,1152.5L693.2,1139.4L694.5,1194.7L695.9,1157.6L697.2,1184.7L698.6,1158.1L699.9,1139.1L701.3,1148L702.7,1160.7L704,1147L705.4,1163.7L706.7,1157.4L708.1,1143.7L709.4,1140.3L710.8,1150.3L712.1,1152.1L713.5,1146.1L714.9,1138.3L716.2,1158.9L717.6,1152.3L718.9,1153.7L720.3,1159.4L721.6,1125.6L723,1150.9L724.4,1147.9L725.7,1157.9L727.1,1156L728.4,1156.2L729.8,1164.6L731.1,1130.3L732.5,1139L733.8,1163.7L735.2,1166.2L736.6,1141.8L737.9,1162.8L739.3,1160.1L740.6,1135.8L742,1144.1L743.3,1154.3L744.7,1149.9L746.1,1170.2L747.4,1157.2L748.8,1160.4L750.1,1143.6L751.5,1137.4L752.8,1144.1L754.2,1166L755.5,1170.8L756.9,1156.2L758.3,1149.2L759.6,1123.8L761,1164.7L762.3,1137.1L763.7,1160.5L765,1164.7L766.4,1136.4L767.8,1144.3L769.1,1158.6L770.5,1165.6L771.8,1145.3L773.2,1140.4L774.5,1156.1L775.9,1166.8L777.2,1141.8L778.6,1145.9L780,1167.7L781.3,1158L782.7,1147.6L784,1157.2L785.4,1163.1L786.7,1180.6L788.1,1162.4L789.5,1159.8L790.8,1142.4L792.2,1167.2L793.5,1167.5L794.9,1176L796.2,1163.6L797.6,1165.4L798.9,1175.1L800.3,1161.5L801.7,1153.4L803,1171.2L804.4,1166.8L805.7,1168.2L807.1,1172.1L808.4,1170.2L809.8,1171.9L811.2,1167.8L812.5,1177.8L813.9,1166.9L815.2,1177.9L816.6,1167.3L817.9,1169.6L819.3,1170.8L820.6,1176.2L822,1173.5L823.4,1170.8L824.7,1167.5L826.1,1176.8L827.4,1172.9L828.8,1174.5L830.1,1172L831.5,1170.8L832.9,1175.6L834.2,1174.1L835.6,1177.6L836.9,1173.8L838.3,1167.2L839.6,1176.2L841,1173.3L842.3,1172.2L843.7,1160.3L845.1,1169.6L846.4,1173.9L847.8,1170.6L849.1,1174.3L850.5,1175.8L851.8,1173.3L853.2,1169.5L854.6,1172.8L855.9,1168.6L857.3,1162.1L858.6,1151.4L860,1141.9L861.3,1160L862.7,1144.6L864.1,1132.6L865.4,1145L866.8,1146.7L868.1,1151.2L869.5,1149.6L870.8,1149.1L872.2,1140.1L873.5,1133.1L874.9,1141.2L876.3,1156.4L877.6,1134.1L879,1152.6L880.3,1134L881.7,1163.2L883,1146.3L884.4,1139.1L885.8,1143.4L887.1,1136.3L888.5,1146.2L889.8,1151.7L891.2,1133.7L892.5,1153.9L893.9,1147.8L895.2,1150.9L896.6,1127.1L898,1151.6L899.3,1135.7L900.7,1142.6L902,1141L903.4,1136.5L904.7,1137.6L906.1,1138.6L907.5,1145.5L908.8,1149.7L910.2,1141.7L911.5,1177.5L912.9,1145L914.2,1152.7L915.6,1133.5L916.9,1144.8L918.3,1143.3L919.7,1144.6L921,1146.2L922.4,1149.6L923.7,1144.4L925.1,1147.2L926.4,1141L927.8,1142.1L929.2,1138.4L930.5,1151.6L931.9,1149.3L933.2,1153.2L934.6,1139.7L935.9,1158.6L937.3,1162.4L938.6,1151.7L940,1132.2L941.4,1149.1L942.7,1146.1L944.1,1140.8L945.4,1158.1L946.8,1136.9L948.1,1139.4L949.5,1137.6L950.9,1134.5L952.2,1140.6L953.6,1136.8L954.9,1149.1L956.3,1151.6L957.6,1142.4L959,1141L960.3,1148.6L961.7,1142.8L963.1,1159.2L964.4,1123.4L965.8,1125.7L967.1,1135.3L968.5,1151.8L969.8,1149.8L971.2,1140.2L972.6,1144L973.9,1141.6L975.3,1147.7L976.6,1159.5L978,1126.4L979.3,1161.1L980.7,1152.1L982,1141.6L983.4,1147.9L984.8,1143.9L986.1,1147.8L987.5,1153.8L988.8,1150.1L990.2,1136.4L991.5,1148.9L992.9,1139.1L994.3,1154.7L995.6,1150.4L997,1140.9L998.3,1146.6L999.7,1146.8L1001,1145.1L1002.4,1135L1003.7,1147.9L1005.1,1145.1L1006.5,1160.5L1007.8,1134.9L1009.2,1150.6L1010.5,1138.8L1011.9,1139.3L1013.2,1154.5L1014.6,1139.8L1016,1146.6L1017.3,1141L1018.7,1132.7L1020,1137.5L1021.4,1117.8L1022.7,1136.7L1024.1,1152.4L1025.4,1141.2L1026.8,1123.8L1028.2,1151.3L1029.5,1139.2L1030.9,1142.8L1032.2,1147.6L1033.6,1128.7L1034.9,1137.2L1036.3,1133.2L1036.3,1211.9 L142.5,1211.9 Z" fill="#ef843c" fill-opacity="0.1" stroke="none"/><path d="M142.5,1143.3L143.9,1161.4L145.2,1126.6L146.6,1142.8L147.9,1164.7L149.3,1151L150.6,1142.2L152,1140.1L153.4,1133.3L154.7,1150.5L156.1,1139.7L157.4,1143.9L158.8,1157.9L160.1,1158.5L161.5,1155.1L162.8,1130.6L164.2,1142.4L165.6,1161.3L166.9,1135.9L168.3,1162.3L169.6,1191.4L171,1159.1L172.3,1144.5L173.7,1136.4L175.1,1143.3L176.4,1164.9L177.8,1145.7L179.1,1160.9L180.5,1184.9L181.8,1143.3L183.2,1147.8L184.5,1163L185.9,1152.8L187.3,1154.3L188.6,1148.8L190,1123.3L191.3,1152.6L192.7,1149.5L194,1148L195.4,1155.5L196.8,1158.5L198.1,1152.6L199.5,1166.6L200.8,1191.5L202.2,1153.6L203.5,1150.2L204.9,1136.7L206.2,1157L207.6,1189.9L209,1180.5L210.3,1161.6L211.7,1145.4L213,1158.5L214.4,1141.8L215.7,1139.4L217.1,1159.6L218.5,1140.5L219.8,1154.2L221.2,1150.2L222.5,1168.6L223.9,1155.2L225.2,1168.9L226.6,1161.3L227.9,1143.7L229.3,1139.5L230.7,1129.3L232,1152.6L233.4,1122.2L234.7,1143.5L236.1,1126.4L237.4,1145.8L238.8,1160.2L240.2,1143.2L241.5,1146.7L242.9,1147.8L244.2,1155.8L245.6,1136.9L246.9,1154.2L248.3,1152L249.6,1142L251,1142.6L252.4,1166.4L253.7,1161.2L255.1,1158L256.4,1144.5L257.8,1149.8L259.1,1139.6L260.5,1134.7L261.9,1148.7L263.2,1147.4L264.6,1188.8L265.9,1140.8L267.3,1158L268.6,1150.5L270,1153.8L271.3,1176.3L272.7,1135.5L274.1,1156.7L275.4,1143.6L276.8,1161.9L278.1,1155.4L279.5,1165.7L280.8,1154L282.2,1146.7L283.6,1170.5L284.9,1154.4L286.3,1152.8L287.6,1153.5L289,1147.4L290.3,1159.1L291.7,1173.5L293,1171.6L294.4,1158.8L295.8,1162.6L297.1,1163.8L298.5,1148.9L299.8,1172L301.2,1158.6L302.5,1136.4L303.9,1162.7L305.3,1146.3L306.6,1159.5L308,1163.6L309.3,1153L310.7,1159.4L312,1171.1L313.4,1141.7L314.7,1136.3L316.1,1155.4L317.5,1154.2L318.8,1179.3L320.2,1167.7L321.5,1162.7L322.9,1156L324.2,1164L325.6,1142.9L327,1153.8L328.3,1180.4L329.7,1152.8L331,1158.7L332.4,1165.1L333.7,1150L335.1,1153.1L336.5,1147.3L337.8,1170.9L339.2,1136.1L340.5,1164.5L341.9,1166.7L343.2,1136.2L344.6,1153L345.9,1170L347.3,1148.6L348.7,1152.2L350,1158L351.4,1172.8L352.7,1165.3L354.1,1151.3L355.4,1143.9L356.8,1142.5L358.2,1162.5L359.5,1135.5L360.9,1152.8L362.2,1165.5L363.6,1146.2L364.9,1155.7L366.3,1158.1L367.6,1167.5L369,1163.2L370.4,1160.2L371.7,1166.4L373.1,1169.7L374.4,1189.9L375.8,1165.3L377.1,1150.8L378.5,1158.7L379.9,1157L381.2,1181.1L382.6,1160.8L383.9,1183.4L385.3,1153.6L386.6,1157.5L388,1176.5L389.3,1176.4L390.7,1165.5L392.1,1173.3L393.4,1156.9L394.8,1153.7L396.1,1158.4L397.5,1172.1L398.8,1165.9L400.2,1175.2L401.6,1158.5L402.9,1156.3L404.3,1149.4L405.6,1158.4L407,1155.3L408.3,1160.5L409.7,1151.7L411,1154.2L412.4,1158.2L413.8,1171.5L415.1,1156.9L416.5,1153.8L417.8,1170.5L419.2,1196.6L420.5,1155.1L421.9,1155L423.3,1137.7L424.6,1139.9L426,1155.7L427.3,1170.6L428.7,1175L430,1163.4L431.4,1148.8L432.7,1159.2L434.1,1137.5L435.5,1152.2L436.8,1140.1L438.2,1152.6L439.5,1167.8L440.9,1175.5L442.2,1154.1L443.6,1155.8L445,1133.3L446.3,1143.9L447.7,1167.1L449,1163L450.4,1159.1L451.7,1154.7L453.1,1167.4L454.4,1147.6L455.8,1147L457.2,1179.1L458.5,1139.3L459.9,1153.1L461.2,1143.9L462.6,1163.9L463.9,1144.8L465.3,1144L466.7,1144.3L468,1156.4L469.4,1136.9L470.7,1131.7L472.1,1146.4L473.4,1143.9L474.8,1153.6L476.1,1144L477.5,1141.2L478.9,1150.9L480.2,1152.4L481.6,1158.8L482.9,1163.8L484.3,1128.2L485.6,1147.3L487,1122L488.4,1146.8L489.7,1153.6L491.1,1144.8L492.4,1159.9L493.8,1144.7L495.1,1163L496.5,1135.9L497.8,1122.5L499.2,1137.5L500.6,1178.7L501.9,1145.2L503.3,1146.8L504.6,1150.9L506,1143.4L507.3,1150.9L508.7,1149.4L510.1,1170.4L511.4,1161.1L512.8,1151.1L514.1,1166.1L515.5,1154.8L516.8,1136.5L518.2,1160.4L519.6,1141.4L520.9,1156.9L522.3,1149.8L523.6,1158.2L525,1163.8L526.3,1154.7L527.7,1143.2L529,1145L530.4,1154.5L531.8,1143.9L533.1,1144.3L534.5,1147.2L535.8,1144.6L537.2,1154.2L538.5,1143.6L539.9,1149.5L541.3,1140.6L542.6,1129.8L544,1157.2L545.3,1159.1L546.7,1143.2L548,1157.3L549.4,1152L550.7,1149.2L552.1,1161.4L553.5,1127.1L554.8,1148.1L556.2,1156.5L557.5,1136.7L558.9,1166.1L560.2,1142.4L561.6,1162.3L563,1146.7L564.3,1156.2L565.7,1148.3L567,1174.5L568.4,1153.3L569.7,1160L571.1,1156.8L572.4,1180.6L573.8,1146.3L575.2,1153.5L576.5,1159.9L577.9,1159L579.2,1155.1L580.6,1147.8L581.9,1156.9L583.3,1138.6L584.7,1149.1L586,1132.2L587.4,1142L588.7,1147.7L590.1,1134.2L591.4,1137.1L592.8,1159.7L594.1,1155L595.5,1161.4L596.9,1162.3L598.2,1156.6L599.6,1174.1L600.9,1152.9L602.3,1163.6L603.6,1133.3L605,1147.9L606.4,1161L607.7,1159L609.1,1150.6L610.4,1146.3L611.8,1159L613.1,1148.1L614.5,1137.8L615.8,1162.5L617.2,1145.9L618.6,1152L619.9,1164.5L621.3,1122.3L622.6,1154.9L624,1167.9L625.3,1125.4L626.7,1172.2L628.1,1156.1L629.4,1152.1L630.8,1150.7L632.1,1149.7L633.5,1139.6L634.8,1161.9L636.2,1160.5L637.5,1154L638.9,1125.3L640.3,1168.2L641.6,1149.5L643,1155.8L644.3,1173.5L645.7,1164.3L647,1149.2L648.4,1161.8L649.8,1156.6L651.1,1143.9L652.5,1151.6L653.8,1131.1L655.2,1133.2L656.5,1152.3L657.9,1165.6L659.2,1140.4L660.6,1163.3L662,1151.9L663.3,1169.8L664.7,1146.5L666,1182.4L667.4,1155.3L668.7,1147.8L670.1,1153.1L671.5,1130.6L672.8,1154.2L674.2,1147L675.5,1155.9L676.9,1146.9L678.2,1134.6L679.6,1122.2L681,1146.2L682.3,1141.7L683.7,1159.9L685,1138.7L686.4,1155.2L687.7,1148.6L689.1,1167.1L690.4,1151.3L691.8,1152.5L693.2,1139.4L694.5,1194.7L695.9,1157.6L697.2,1184.7L698.6,1158.1L699.9,1139.1L701.3,1148L702.7,1160.7L704,1147L705.4,1163.7L706.7,1157.4L708.1,1143.7L709.4,1140.3L710.8,1150.3L712.1,1152.1L713.5,1146.1L714.9,1138.3L716.2,1158.9L717.6,1152.3L718.9,1153.7L720.3,1159.4L721.6,1125.6L723,1150.9L724.4,1147.9L725.7,1157.9L727.1,1156L728.4,1156.2L729.8,1164.6L731.1,1130.3L732.5,1139L733.8,1163.7L735.2,1166.2L736.6,1141.8L737.9,1162.8L739.3,1160.1L740.6,1135.8L742,1144.1L743.3,1154.3L744.7,1149.9L746.1,1170.2L747.4,1157.2L748.8,1160.4L750.1,1143.6L751.5,1137.4L752.8,1144.1L754.2,1166L755.5,1170.8L756.9,1156.2L758.3,1149.2L759.6,1123.8L761,1164.7L762.3,1137.1L763.7,1160.5L765,1164.7L766.4,1136.4L767.8,1144.3L769.1,1158.6L770.5,1165.6L771.8,1145.3L773.2,1140.4L774.5,1156.1L775.9,1166.8L777.2,1141.8L778.6,1145.9L780,1167.7L781.3,1158L782.7,1147.6L784,1157.2L785.4,1163.1L786.7,1180.6L788.1,1162.4L789.5,1159.8L790.8,1142.4L792.2,1167.2L793.5,1167.5L794.9,1176L796.2,1163.6L797.6,1165.4L798.9,1175.1L800.3,1161.5L801.7,1153.4L803,1171.2L804.4,1166.8L805.7,1168.2L807.1,1172.1L808.4,1170.2L809.8,1171.9L811.2,1167.8L812.5,1177.8L813.9,1166.9L815.2,1177.9L816.6,1167.3L817.9,1169.6L819.3,1170.8L820.6,1176.2L822,1173.5L823.4,1170.8L824.7,1167.5L826.1,1176.8L827.4,1172.9L828.8,1174.5L830.1,1172L831.5,1170.8L832.9,1175.6L834.2,1174.1L835.6,1177.6L836.9,1173.8L838.3,1167.2L839.6,1176.2L841,1173.3L842.3,1172.2L843.7,1160.3L845.1,1169.6L846.4,1173.9L847.8,1170.6L849.1,1174.3L850.5,1175.8L851.8,1173.3L853.2,1169.5L854.6,1172.8L855.9,1168.6L857.3,1162.1L858.6,1151.4L860,1141.9L861.3,1160L862.7,1144.6L864.1,1132.6L865.4,1145L866.8,1146.7L868.1,1151.2L869.5,1149.6L870.8,1149.1L872.2,1140.1L873.5,1133.1L874.9,1141.2L876.3,1156.4L877.6,1134.1L879,1152.6L880.3,1134L881.7,1163.2L883,1146.3L884.4,1139.1L885.8,1143.4L887.1,1136.3L888.5,1146.2L889.8,1151.7L891.2,1133.7L892.5,1153.9L893.9,1147.8L895.2,1150.9L896.6,1127.1L898,1151.6L899.3,1135.7L900.7,1142.6L902,1141L903.4,1136.5L904.7,1137.6L906.1,1138.6L907.5,1145.5L908.8,1149.7L910.2,1141.7L911.5,1177.5L912.9,1145L914.2,1152.7L915.6,1133.5L916.9,1144.8L918.3,1143.3L919.7,1144.6L921,1146.2L922.4,1149.6L923.7,1144.4L925.1,1147.2L926.4,1141L927.8,1142.1L929.2,1138.4L930.5,1151.6L931.9,1149.3L933.2,1153.2L934.6,1139.7L935.9,1158.6L937.3,1162.4L938.6,1151.7L940,1132.2L941.4,1149.1L942.7,1146.1L944.1,1140.8L945.4,1158.1L946.8,1136.9L948.1,1139.4L949.5,1137.6L950.9,1134.5L952.2,1140.6L953.6,1136.8L954.9,1149.1L956.3,1151.6L957.6,1142.4L959,1141L960.3,1148.6L961.7,1142.8L963.1,1159.2L964.4,1123.4L965.8,1125.7L967.1,1135.3L968.5,1151.8L969.8,1149.8L971.2,1140.2L972.6,1144L973.9,1141.6L975.3,1147.7L976.6,1159.5L978,1126.4L979.3,1161.1L980.7,1152.1L982,1141.6L983.4,1147.9L984.8,1143.9L986.1,1147.8L987.5,1153.8L988.8,1150.1L990.2,1136.4L991.5,1148.9L992.9,1139.1L994.3,1154.7L995.6,1150.4L997,1140.9L998.3,1146.6L999.7,1146.8L1001,1145.1L1002.4,1135L1003.7,1147.9L1005.1,1145.1L1006.5,1160.5L1007.8,1134.9L1009.2,1150.6L1010.5,1138.8L1011.9,1139.3L1013.2,1154.5L1014.6,1139.8L1016,1146.6L1017.3,1141L1018.7,1132.7L1020,1137.5L1021.4,1117.8L1022.7,1136.7L1024.1,1152.4L1025.4,1141.2L1026.8,1123.8L1028.2,1151.3L1029.5,1139.2L1030.9,1142.8L1032.2,1147.6L1033.6,1128.7L1034.9,1137.2L1036.3,1133.2" fill="none" stroke="#ef843c" stroke-width="2.2" stroke-linejoin="round"/>
<rect x="59.2" y="1292.8" width="30.8" height="8.4" rx="2.2" fill="#7eb26d"/><text x="107" y="1303" font-size="26.4" fill="#3a404b" textLength="68" lengthAdjust="spacingAndGlyphs" stroke="#3a404b" stroke-width="0.35">major</text><rect x="197" y="1292.8" width="30.8" height="8.4" rx="2.2" fill="#eab839"/><text x="246" y="1303" font-size="26.4" fill="#3a404b" textLength="66.8" lengthAdjust="spacingAndGlyphs" stroke="#3a404b" stroke-width="0.35">minor</text><rect x="335.5" y="1292.8" width="30.8" height="8.4" rx="2.2" fill="#6ed0e0"/><text x="384.3" y="1303" font-size="26.4" fill="#3a404b" textLength="89.1" lengthAdjust="spacingAndGlyphs" stroke="#3a404b" stroke-width="0.35">weakcb</text><rect x="495.5" y="1292.8" width="30.8" height="8.4" rx="2.2" fill="#ef843c"/><text x="544.9" y="1303" font-size="26.4" fill="#3a404b" textLength="137.3" lengthAdjust="spacingAndGlyphs" stroke="#3a404b" stroke-width="0.35">incremental</text>
<text x="1648.6" y="976.2" font-size="29.8" fill="#3f444d" text-anchor="middle" textLength="440" lengthAdjust="spacingAndGlyphs" stroke="#3f444d" stroke-width="1.5" paint-order="stroke">Garbage Collection Count - Rate</text>
<g stroke="#000" stroke-opacity="0.08" stroke-width="2.2"><path d="M1237.6,1035.7H2132"/><path d="M1237.6,1071H2132"/><path d="M1237.6,1106.3H2132"/><path d="M1237.6,1141.6H2132"/><path d="M1237.6,1176.9H2132"/><path d="M1237.6,1212.2H2132"/><path d="M1271.6,1035.5V1212.2"/><path d="M1420.9,1035.5V1212.2"/><path d="M1570.2,1035.5V1212.2"/><path d="M1719.5,1035.5V1212.2"/><path d="M1868.8,1035.5V1212.2"/><path d="M2018.1,1035.5V1212.2"/></g>
<text x="1225.8" y="1042.5" font-size="26.4" fill="#3a404b" text-anchor="end" stroke="#3a404b" stroke-width="0.35">8</text><text x="1225.8" y="1077.8" font-size="26.4" fill="#3a404b" text-anchor="end" stroke="#3a404b" stroke-width="0.35">2</text><text x="1225.8" y="1113.1" font-size="26.4" fill="#3a404b" text-anchor="end" textLength="63.7" lengthAdjust="spacingAndGlyphs" stroke="#3a404b" stroke-width="0.35">0.500</text><text x="1225.8" y="1148.4" font-size="26.4" fill="#3a404b" text-anchor="end" textLength="63.7" lengthAdjust="spacingAndGlyphs" stroke="#3a404b" stroke-width="0.35">0.125</text><text x="1225.8" y="1183.7" font-size="26.4" fill="#3a404b" text-anchor="end" textLength="77.8" lengthAdjust="spacingAndGlyphs" stroke="#3a404b" stroke-width="0.35">0.0313</text><text x="1225.8" y="1219" font-size="26.4" fill="#3a404b" text-anchor="end" textLength="92" lengthAdjust="spacingAndGlyphs" stroke="#3a404b" stroke-width="0.35">0.00781</text>
<text x="1271.6" y="1251.5" font-size="26.4" fill="#3a404b" text-anchor="middle" textLength="63.7" lengthAdjust="spacingAndGlyphs" stroke="#3a404b" stroke-width="0.35">12:00</text><text x="1420.9" y="1251.5" font-size="26.4" fill="#3a404b" text-anchor="middle" textLength="63.7" lengthAdjust="spacingAndGlyphs" stroke="#3a404b" stroke-width="0.35">16:00</text><text x="1570.2" y="1251.5" font-size="26.4" fill="#3a404b" text-anchor="middle" textLength="63.7" lengthAdjust="spacingAndGlyphs" stroke="#3a404b" stroke-width="0.35">20:00</text><text x="1719.5" y="1251.5" font-size="26.4" fill="#3a404b" text-anchor="middle" textLength="63.7" lengthAdjust="spacingAndGlyphs" stroke="#3a404b" stroke-width="0.35">00:00</text><text x="1868.8" y="1251.5" font-size="26.4" fill="#3a404b" text-anchor="middle" textLength="63.7" lengthAdjust="spacingAndGlyphs" stroke="#3a404b" stroke-width="0.35">04:00</text><text x="2018.1" y="1251.5" font-size="26.4" fill="#3a404b" text-anchor="middle" textLength="63.7" lengthAdjust="spacingAndGlyphs" stroke="#3a404b" stroke-width="0.35">08:00</text>
<path d="M1237.6,1172L1238.8,1172L1240.1,1172L1241.3,1172L1242.6,1172L1243.8,1178.1L1245.1,1178.1L1246.3,1178.1L1247.5,1178.1L1248.8,1172L1250,1172L1251.3,1172L1252.5,1172L1253.7,1172L1255,1172L1256.2,1172L1257.5,1172L1258.7,1172L1260,1172L1261.2,1172L1262.4,1172L1263.7,1172L1264.9,1185.6L1266.2,1178.1L1267.4,1178.1L1268.6,1172L1269.9,1172L1271.1,1172L1272.4,1172L1273.6,1172L1274.9,1172L1276.1,1172L1277.3,1172L1278.6,1184.4L1279.8,1178.1L1281.1,1172L1282.3,1167.3L1283.5,1172L1284.8,1172L1286,1166.9L1287.3,1172L1288.5,1178.1L1289.8,1178.1L1291,1178.1L1292.2,1178.1L1293.5,1178.1L1294.7,1178.1L1296,1178.1L1297.2,1172L1298.5,1172L1299.7,1178.1L1300.9,1178.1L1302.2,1184.4L1303.4,1178.1L1304.7,1172L1305.9,1172L1307.1,1178.1L1308.4,1178.1L1309.6,1178.1L1310.9,1178.1L1312.1,1178.1L1313.4,1184.4L1314.6,1178.1L1315.8,1178.1L1317.1,1172L1318.3,1172L1319.6,1172L1320.8,1178.1L1322,1178.1L1323.3,1172L1324.5,1172L1325.8,1178.1L1327,1184.4L1328.3,1178.1L1329.5,1178.1L1330.7,1178.1L1332,1178.1L1333.2,1178.1L1334.5,1178.1L1335.7,1185.1L1336.9,1178.1L1338.2,1178.1L1339.4,1178.1L1340.7,1178.1L1341.9,1178.1L1343.2,1178.1L1344.4,1178.1L1345.6,1178.1L1346.9,1185.1L1348.1,1178.1L1349.4,1178.1L1350.6,1178.1L1351.9,1178.1L1353.1,1178.1L1354.3,1178.1L1355.6,1178.1L1356.8,1178.1L1358.1,1185.6L1359.3,1178.1L1360.5,1178.1L1361.8,1178.1L1363,1178.1L1364.3,1178.1L1365.5,1178.1L1366.8,1178.1L1368,1172L1369.2,1163.4L1370.5,1172L1371.7,1178.1L1373,1184.4L1374.2,1178.1L1375.4,1172L1376.7,1163.4L1377.9,1178.1L1379.2,1178.1L1380.4,1185.6L1381.7,1178.1L1382.9,1157.1L1384.1,1172L1385.4,1172L1386.6,1172L1387.9,1172L1389.1,1172L1390.3,1172L1391.6,1157.5L1392.8,1172L1394.1,1159.9L1395.3,1157.1L1396.6,1172L1397.8,1172L1399,1177.4L1400.3,1172L1401.5,1164.5L1402.8,1172L1404,1165L1405.3,1172L1406.5,1172L1407.7,1172L1409,1178.1L1410.2,1172L1411.5,1172L1412.7,1178.1L1413.9,1178.1L1415.2,1178.1L1416.4,1178.1L1417.7,1178.1L1418.9,1178.1L1420.2,1178.1L1421.4,1178.1L1422.6,1178.1L1423.9,1178.1L1425.1,1178.1L1426.4,1178.1L1427.6,1178.1L1428.8,1178.1L1430.1,1178.1L1431.3,1178.1L1432.6,1178.1L1433.8,1178.1L1435.1,1178.1L1436.3,1178.1L1437.5,1178.1L1438.8,1172L1440,1163.6L1441.3,1172L1442.5,1172L1443.7,1178.1L1445,1178.1L1446.2,1178.1L1447.5,1172L1448.7,1172L1450,1178.1L1451.2,1178.1L1452.4,1178.1L1453.7,1178.1L1454.9,1172L1456.2,1178.1L1457.4,1178.1L1458.7,1178.1L1459.9,1172L1461.1,1172L1462.4,1184.4L1463.6,1178.1L1464.9,1178.1L1466.1,1178.1L1467.3,1178.1L1468.6,1184.4L1469.8,1178.1L1471.1,1184.9L1472.3,1178.1L1473.6,1178.1L1474.8,1172L1476,1178.1L1477.3,1184.4L1478.5,1178.1L1479.8,1172L1481,1172L1482.2,1178.1L1483.5,1178.1L1484.7,1178.1L1486,1185.1L1487.2,1178.1L1488.5,1178.1L1489.7,1178.1L1490.9,1178.1L1492.2,1178.1L1493.4,1178.1L1494.7,1178.1L1495.9,1178.1L1497.1,1178.1L1498.4,1172L1499.6,1172L1500.9,1172L1502.1,1172L1503.4,1172L1504.6,1178.1L1505.8,1178.1L1507.1,1178.1L1508.3,1178.1L1509.6,1178.1L1510.8,1178.1L1512.1,1178.1L1513.3,1195.2L1514.5,1178.1L1515.8,1172L1517,1172L1518.3,1172L1519.5,1172L1520.7,1172L1522,1172L1523.2,1172L1524.5,1172L1525.7,1172L1527,1172L1528.2,1178.1L1529.4,1178.1L1530.7,1178.1L1531.9,1178.1L1533.2,1178.1L1534.4,1178.1L1535.6,1178.1L1536.9,1178.1L1538.1,1178.1L1539.4,1178.1L1540.6,1178.1L1541.9,1178.1L1543.1,1178.1L1544.3,1172L1545.6,1172L1546.8,1172L1548.1,1172L1549.3,1172L1550.5,1172L1551.8,1178.1L1553,1178.1L1554.3,1178.1L1555.5,1178.1L1556.8,1172L1558,1172L1559.2,1172L1560.5,1172L1561.7,1172L1563,1172L1564.2,1172L1565.5,1172L1566.7,1172L1567.9,1178.1L1569.2,1178.1L1570.4,1178.1L1571.7,1178.1L1572.9,1178.1L1574.1,1178.1L1575.4,1178.1L1576.6,1178.1L1577.9,1178.1L1579.1,1178.1L1580.4,1178.1L1581.6,1178.1L1582.8,1172L1584.1,1172L1585.3,1172L1586.6,1172L1587.8,1172L1589,1172L1590.3,1172L1591.5,1172L1592.8,1172L1594,1172L1595.3,1172L1596.5,1172L1597.7,1172L1599,1172L1600.2,1172L1601.5,1172L1602.7,1172L1603.9,1172L1605.2,1172L1606.4,1172L1607.7,1172L1608.9,1172L1610.2,1172L1611.4,1172L1612.6,1172L1613.9,1172L1615.1,1172L1616.4,1172L1617.6,1172L1618.9,1172L1620.1,1172L1621.3,1172L1622.6,1172L1623.8,1172L1625.1,1172L1626.3,1172L1627.5,1172L1628.8,1172L1630,1172L1631.3,1172L1632.5,1172L1633.8,1172L1635,1172L1636.2,1172L1637.5,1172L1638.7,1172L1640,1172L1641.2,1172L1642.4,1172L1643.7,1172L1644.9,1172L1646.2,1172L1647.4,1172L1648.7,1172L1649.9,1172L1651.1,1172L1652.4,1172L1653.6,1172L1654.9,1172L1656.1,1178.1L1657.3,1178.1L1658.6,1178.1L1659.8,1178.1L1661.1,1178.1L1662.3,1178.1L1663.6,1178.1L1664.8,1178.1L1666,1178.1L1667.3,1178.1L1668.5,1178.1L1669.8,1178.1L1671,1178.1L1672.3,1178.1L1673.5,1178.1L1674.7,1178.1L1676,1172L1677.2,1172L1678.5,1178.1L1679.7,1178.1L1680.9,1178.1L1682.2,1178.1L1683.4,1178.1L1684.7,1178.1L1685.9,1178.1L1687.2,1178.1L1688.4,1178.1L1689.6,1178.1L1690.9,1178.1L1692.1,1178.1L1693.4,1178.1L1694.6,1178.1L1695.8,1178.1L1697.1,1178.1L1698.3,1178.1L1699.6,1172L1700.8,1172L1702.1,1172L1703.3,1172L1704.5,1172L1705.8,1172L1707,1172L1708.3,1172L1709.5,1172L1710.8,1172L1712,1172L1713.2,1172L1714.5,1172L1715.7,1172L1717,1172L1718.2,1172L1719.4,1172L1720.7,1172L1721.9,1172L1723.2,1172L1724.4,1172L1725.7,1172L1726.9,1172L1728.1,1172L1729.4,1172L1730.6,1172L1731.9,1172L1733.1,1172L1734.3,1172L1735.6,1172L1736.8,1178.1L1738.1,1178.1L1739.3,1178.1L1740.6,1178.1L1741.8,1178.1L1743,1178.1L1744.3,1178.1L1745.5,1178.1L1746.8,1178.1L1748,1178.1L1749.2,1178.1L1750.5,1178.1L1751.7,1178.1L1753,1178.1L1754.2,1178.1L1755.5,1178.1L1756.7,1178.1L1757.9,1178.1L1759.2,1178.1L1760.4,1178.1L1761.7,1178.1L1762.9,1178.1L1764.2,1178.1L1765.4,1178.1L1766.6,1178.1L1767.9,1178.1L1769.1,1178.1L1770.4,1178.1L1771.6,1178.1L1772.8,1178.1L1774.1,1178.1L1775.3,1178.1L1776.6,1178.1L1777.8,1178.1L1779.1,1178.1L1780.3,1178.1L1781.5,1178.1L1782.8,1178.1L1784,1172L1785.3,1172L1786.5,1172L1787.7,1172L1789,1172L1790.2,1178.1L1791.5,1178.1L1792.7,1178.1L1794,1178.1L1795.2,1178.1L1796.4,1178.1L1797.7,1178.1L1798.9,1178.1L1800.2,1178.1L1801.4,1172L1802.6,1172L1803.9,1172L1805.1,1172L1806.4,1172L1807.6,1178.1L1808.9,1178.1L1810.1,1178.1L1811.3,1168L1812.6,1168L1813.8,1178.1L1815.1,1178.1L1816.3,1178.1L1817.6,1178.1L1818.8,1178.1L1820,1178.1L1821.3,1178.1L1822.5,1178.1L1823.8,1178.1L1825,1178.1L1826.2,1178.1L1827.5,1178.1L1828.7,1178.1L1830,1178.1L1831.2,1178.1L1832.5,1178.1L1833.7,1178.1L1834.9,1178.1L1836.2,1178.1L1837.4,1178.1L1838.7,1178.1L1839.9,1178.1L1841.1,1178.1L1842.4,1178.1L1843.6,1178.1L1844.9,1178.1L1846.1,1178.1L1847.4,1178.1L1848.6,1178.1L1849.8,1178.1L1851.1,1178.1L1852.3,1178.1L1853.6,1178.1L1854.8,1178.1L1856,1178.1L1857.3,1178.1L1858.5,1178.1L1859.8,1178.1L1861,1178.1L1862.3,1178.1L1863.5,1178.1L1864.7,1178.1L1866,1178.1L1867.2,1178.1L1868.5,1178.1L1869.7,1178.1L1871,1178.1L1872.2,1178.1L1873.4,1178.1L1874.7,1178.1L1875.9,1178.1L1877.2,1178.1L1878.4,1178.1L1879.6,1178.1L1880.9,1178.1L1882.1,1178.1L1883.4,1178.1L1884.6,1172L1885.9,1172L1887.1,1172L1888.3,1172L1889.6,1172L1890.8,1172L1892.1,1172L1893.3,1172L1894.5,1172L1895.8,1172L1897,1172L1898.3,1172L1899.5,1172L1900.8,1172L1902,1172L1903.2,1172L1904.5,1172L1905.7,1172L1907,1172L1908.2,1172L1909.4,1172L1910.7,1172L1911.9,1172L1913.2,1172L1914.4,1172L1915.7,1172L1916.9,1172L1918.1,1172L1919.4,1172L1920.6,1172L1921.9,1172L1923.1,1172L1924.4,1172L1925.6,1172L1926.8,1172L1928.1,1172L1929.3,1172L1930.6,1172L1931.8,1172L1933,1172L1934.3,1172L1935.5,1172L1936.8,1172L1938,1172L1939.3,1172L1940.5,1172L1941.7,1172L1943,1172L1944.2,1172L1945.5,1172L1946.7,1172L1947.9,1172L1949.2,1172L1950.4,1172L1951.7,1172L1952.9,1172L1954.2,1172L1955.4,1172L1956.6,1172L1957.9,1172L1959.1,1172L1960.4,1172L1961.6,1172L1962.8,1172L1964.1,1172L1965.3,1172L1966.6,1172L1967.8,1172L1969.1,1172L1970.3,1172L1971.5,1172L1972.8,1172L1974,1172L1975.3,1172L1976.5,1172L1977.8,1172L1979,1172L1980.2,1172L1981.5,1172L1982.7,1172L1984,1172L1985.2,1172L1986.4,1172L1987.7,1172L1988.9,1172L1990.2,1172L1991.4,1172L1992.7,1172L1993.9,1172L1995.1,1172L1996.4,1172L1997.6,1172L1998.9,1172L2000.1,1172L2001.3,1172L2002.6,1172L2003.8,1172L2005.1,1172L2006.3,1172L2007.6,1172L2008.8,1172L2010,1172L2011.3,1172L2012.5,1172L2013.8,1172L2015,1172L2016.2,1172L2017.5,1172L2018.7,1172L2020,1172L2021.2,1172L2022.5,1172L2023.7,1172L2024.9,1172L2026.2,1172L2027.4,1172L2028.7,1172L2029.9,1172L2031.2,1172L2032.4,1172L2033.6,1172L2034.9,1172L2036.1,1172L2037.4,1172L2038.6,1172L2039.8,1172L2041.1,1172L2042.3,1172L2043.6,1172L2044.8,1172L2046.1,1172L2047.3,1172L2048.5,1172L2049.8,1172L2051,1172L2052.3,1172L2053.5,1172L2054.7,1172L2056,1172L2057.2,1172L2058.5,1172L2059.7,1172L2061,1172L2062.2,1172L2063.4,1172L2064.7,1172L2065.9,1172L2067.2,1172L2068.4,1172L2069.6,1172L2070.9,1172L2072.1,1172L2073.4,1172L2074.6,1172L2075.9,1172L2077.1,1172L2078.3,1178.1L2079.6,1178.1L2080.8,1178.1L2082.1,1178.1L2083.3,1178.1L2084.6,1178.1L2085.8,1178.1L2087,1178.1L2088.3,1178.1L2089.5,1178.1L2090.8,1178.1L2092,1178.1L2093.2,1178.1L2094.5,1178.1L2095.7,1178.1L2097,1178.1L2098.2,1178.1L2099.5,1178.1L2100.7,1178.1L2101.9,1178.1L2103.2,1172L2104.4,1172L2105.7,1172L2106.9,1172L2108.1,1172L2109.4,1172L2110.6,1172L2111.9,1172L2113.1,1172L2114.4,1172L2115.6,1172L2116.8,1172L2118.1,1172L2119.3,1172L2120.6,1172L2121.8,1172L2123,1172L2124.3,1172L2125.5,1172L2126.8,1172L2128,1172L2129.3,1172L2130.5,1172L2130.5,1212.2 L1237.6,1212.2 Z" fill="#7eb26d" fill-opacity="0.1" stroke="none"/><path d="M1237.6,1172L1238.8,1172L1240.1,1172L1241.3,1172L1242.6,1172L1243.8,1178.1L1245.1,1178.1L1246.3,1178.1L1247.5,1178.1L1248.8,1172L1250,1172L1251.3,1172L1252.5,1172L1253.7,1172L1255,1172L1256.2,1172L1257.5,1172L1258.7,1172L1260,1172L1261.2,1172L1262.4,1172L1263.7,1172L1264.9,1185.6L1266.2,1178.1L1267.4,1178.1L1268.6,1172L1269.9,1172L1271.1,1172L1272.4,1172L1273.6,1172L1274.9,1172L1276.1,1172L1277.3,1172L1278.6,1184.4L1279.8,1178.1L1281.1,1172L1282.3,1167.3L1283.5,1172L1284.8,1172L1286,1166.9L1287.3,1172L1288.5,1178.1L1289.8,1178.1L1291,1178.1L1292.2,1178.1L1293.5,1178.1L1294.7,1178.1L1296,1178.1L1297.2,1172L1298.5,1172L1299.7,1178.1L1300.9,1178.1L1302.2,1184.4L1303.4,1178.1L1304.7,1172L1305.9,1172L1307.1,1178.1L1308.4,1178.1L1309.6,1178.1L1310.9,1178.1L1312.1,1178.1L1313.4,1184.4L1314.6,1178.1L1315.8,1178.1L1317.1,1172L1318.3,1172L1319.6,1172L1320.8,1178.1L1322,1178.1L1323.3,1172L1324.5,1172L1325.8,1178.1L1327,1184.4L1328.3,1178.1L1329.5,1178.1L1330.7,1178.1L1332,1178.1L1333.2,1178.1L1334.5,1178.1L1335.7,1185.1L1336.9,1178.1L1338.2,1178.1L1339.4,1178.1L1340.7,1178.1L1341.9,1178.1L1343.2,1178.1L1344.4,1178.1L1345.6,1178.1L1346.9,1185.1L1348.1,1178.1L1349.4,1178.1L1350.6,1178.1L1351.9,1178.1L1353.1,1178.1L1354.3,1178.1L1355.6,1178.1L1356.8,1178.1L1358.1,1185.6L1359.3,1178.1L1360.5,1178.1L1361.8,1178.1L1363,1178.1L1364.3,1178.1L1365.5,1178.1L1366.8,1178.1L1368,1172L1369.2,1163.4L1370.5,1172L1371.7,1178.1L1373,1184.4L1374.2,1178.1L1375.4,1172L1376.7,1163.4L1377.9,1178.1L1379.2,1178.1L1380.4,1185.6L1381.7,1178.1L1382.9,1157.1L1384.1,1172L1385.4,1172L1386.6,1172L1387.9,1172L1389.1,1172L1390.3,1172L1391.6,1157.5L1392.8,1172L1394.1,1159.9L1395.3,1157.1L1396.6,1172L1397.8,1172L1399,1177.4L1400.3,1172L1401.5,1164.5L1402.8,1172L1404,1165L1405.3,1172L1406.5,1172L1407.7,1172L1409,1178.1L1410.2,1172L1411.5,1172L1412.7,1178.1L1413.9,1178.1L1415.2,1178.1L1416.4,1178.1L1417.7,1178.1L1418.9,1178.1L1420.2,1178.1L1421.4,1178.1L1422.6,1178.1L1423.9,1178.1L1425.1,1178.1L1426.4,1178.1L1427.6,1178.1L1428.8,1178.1L1430.1,1178.1L1431.3,1178.1L1432.6,1178.1L1433.8,1178.1L1435.1,1178.1L1436.3,1178.1L1437.5,1178.1L1438.8,1172L1440,1163.6L1441.3,1172L1442.5,1172L1443.7,1178.1L1445,1178.1L1446.2,1178.1L1447.5,1172L1448.7,1172L1450,1178.1L1451.2,1178.1L1452.4,1178.1L1453.7,1178.1L1454.9,1172L1456.2,1178.1L1457.4,1178.1L1458.7,1178.1L1459.9,1172L1461.1,1172L1462.4,1184.4L1463.6,1178.1L1464.9,1178.1L1466.1,1178.1L1467.3,1178.1L1468.6,1184.4L1469.8,1178.1L1471.1,1184.9L1472.3,1178.1L1473.6,1178.1L1474.8,1172L1476,1178.1L1477.3,1184.4L1478.5,1178.1L1479.8,1172L1481,1172L1482.2,1178.1L1483.5,1178.1L1484.7,1178.1L1486,1185.1L1487.2,1178.1L1488.5,1178.1L1489.7,1178.1L1490.9,1178.1L1492.2,1178.1L1493.4,1178.1L1494.7,1178.1L1495.9,1178.1L1497.1,1178.1L1498.4,1172L1499.6,1172L1500.9,1172L1502.1,1172L1503.4,1172L1504.6,1178.1L1505.8,1178.1L1507.1,1178.1L1508.3,1178.1L1509.6,1178.1L1510.8,1178.1L1512.1,1178.1L1513.3,1195.2L1514.5,1178.1L1515.8,1172L1517,1172L1518.3,1172L1519.5,1172L1520.7,1172L1522,1172L1523.2,1172L1524.5,1172L1525.7,1172L1527,1172L1528.2,1178.1L1529.4,1178.1L1530.7,1178.1L1531.9,1178.1L1533.2,1178.1L1534.4,1178.1L1535.6,1178.1L1536.9,1178.1L1538.1,1178.1L1539.4,1178.1L1540.6,1178.1L1541.9,1178.1L1543.1,1178.1L1544.3,1172L1545.6,1172L1546.8,1172L1548.1,1172L1549.3,1172L1550.5,1172L1551.8,1178.1L1553,1178.1L1554.3,1178.1L1555.5,1178.1L1556.8,1172L1558,1172L1559.2,1172L1560.5,1172L1561.7,1172L1563,1172L1564.2,1172L1565.5,1172L1566.7,1172L1567.9,1178.1L1569.2,1178.1L1570.4,1178.1L1571.7,1178.1L1572.9,1178.1L1574.1,1178.1L1575.4,1178.1L1576.6,1178.1L1577.9,1178.1L1579.1,1178.1L1580.4,1178.1L1581.6,1178.1L1582.8,1172L1584.1,1172L1585.3,1172L1586.6,1172L1587.8,1172L1589,1172L1590.3,1172L1591.5,1172L1592.8,1172L1594,1172L1595.3,1172L1596.5,1172L1597.7,1172L1599,1172L1600.2,1172L1601.5,1172L1602.7,1172L1603.9,1172L1605.2,1172L1606.4,1172L1607.7,1172L1608.9,1172L1610.2,1172L1611.4,1172L1612.6,1172L1613.9,1172L1615.1,1172L1616.4,1172L1617.6,1172L1618.9,1172L1620.1,1172L1621.3,1172L1622.6,1172L1623.8,1172L1625.1,1172L1626.3,1172L1627.5,1172L1628.8,1172L1630,1172L1631.3,1172L1632.5,1172L1633.8,1172L1635,1172L1636.2,1172L1637.5,1172L1638.7,1172L1640,1172L1641.2,1172L1642.4,1172L1643.7,1172L1644.9,1172L1646.2,1172L1647.4,1172L1648.7,1172L1649.9,1172L1651.1,1172L1652.4,1172L1653.6,1172L1654.9,1172L1656.1,1178.1L1657.3,1178.1L1658.6,1178.1L1659.8,1178.1L1661.1,1178.1L1662.3,1178.1L1663.6,1178.1L1664.8,1178.1L1666,1178.1L1667.3,1178.1L1668.5,1178.1L1669.8,1178.1L1671,1178.1L1672.3,1178.1L1673.5,1178.1L1674.7,1178.1L1676,1172L1677.2,1172L1678.5,1178.1L1679.7,1178.1L1680.9,1178.1L1682.2,1178.1L1683.4,1178.1L1684.7,1178.1L1685.9,1178.1L1687.2,1178.1L1688.4,1178.1L1689.6,1178.1L1690.9,1178.1L1692.1,1178.1L1693.4,1178.1L1694.6,1178.1L1695.8,1178.1L1697.1,1178.1L1698.3,1178.1L1699.6,1172L1700.8,1172L1702.1,1172L1703.3,1172L1704.5,1172L1705.8,1172L1707,1172L1708.3,1172L1709.5,1172L1710.8,1172L1712,1172L1713.2,1172L1714.5,1172L1715.7,1172L1717,1172L1718.2,1172L1719.4,1172L1720.7,1172L1721.9,1172L1723.2,1172L1724.4,1172L1725.7,1172L1726.9,1172L1728.1,1172L1729.4,1172L1730.6,1172L1731.9,1172L1733.1,1172L1734.3,1172L1735.6,1172L1736.8,1178.1L1738.1,1178.1L1739.3,1178.1L1740.6,1178.1L1741.8,1178.1L1743,1178.1L1744.3,1178.1L1745.5,1178.1L1746.8,1178.1L1748,1178.1L1749.2,1178.1L1750.5,1178.1L1751.7,1178.1L1753,1178.1L1754.2,1178.1L1755.5,1178.1L1756.7,1178.1L1757.9,1178.1L1759.2,1178.1L1760.4,1178.1L1761.7,1178.1L1762.9,1178.1L1764.2,1178.1L1765.4,1178.1L1766.6,1178.1L1767.9,1178.1L1769.1,1178.1L1770.4,1178.1L1771.6,1178.1L1772.8,1178.1L1774.1,1178.1L1775.3,1178.1L1776.6,1178.1L1777.8,1178.1L1779.1,1178.1L1780.3,1178.1L1781.5,1178.1L1782.8,1178.1L1784,1172L1785.3,1172L1786.5,1172L1787.7,1172L1789,1172L1790.2,1178.1L1791.5,1178.1L1792.7,1178.1L1794,1178.1L1795.2,1178.1L1796.4,1178.1L1797.7,1178.1L1798.9,1178.1L1800.2,1178.1L1801.4,1172L1802.6,1172L1803.9,1172L1805.1,1172L1806.4,1172L1807.6,1178.1L1808.9,1178.1L1810.1,1178.1L1811.3,1168L1812.6,1168L1813.8,1178.1L1815.1,1178.1L1816.3,1178.1L1817.6,1178.1L1818.8,1178.1L1820,1178.1L1821.3,1178.1L1822.5,1178.1L1823.8,1178.1L1825,1178.1L1826.2,1178.1L1827.5,1178.1L1828.7,1178.1L1830,1178.1L1831.2,1178.1L1832.5,1178.1L1833.7,1178.1L1834.9,1178.1L1836.2,1178.1L1837.4,1178.1L1838.7,1178.1L1839.9,1178.1L1841.1,1178.1L1842.4,1178.1L1843.6,1178.1L1844.9,1178.1L1846.1,1178.1L1847.4,1178.1L1848.6,1178.1L1849.8,1178.1L1851.1,1178.1L1852.3,1178.1L1853.6,1178.1L1854.8,1178.1L1856,1178.1L1857.3,1178.1L1858.5,1178.1L1859.8,1178.1L1861,1178.1L1862.3,1178.1L1863.5,1178.1L1864.7,1178.1L1866,1178.1L1867.2,1178.1L1868.5,1178.1L1869.7,1178.1L1871,1178.1L1872.2,1178.1L1873.4,1178.1L1874.7,1178.1L1875.9,1178.1L1877.2,1178.1L1878.4,1178.1L1879.6,1178.1L1880.9,1178.1L1882.1,1178.1L1883.4,1178.1L1884.6,1172L1885.9,1172L1887.1,1172L1888.3,1172L1889.6,1172L1890.8,1172L1892.1,1172L1893.3,1172L1894.5,1172L1895.8,1172L1897,1172L1898.3,1172L1899.5,1172L1900.8,1172L1902,1172L1903.2,1172L1904.5,1172L1905.7,1172L1907,1172L1908.2,1172L1909.4,1172L1910.7,1172L1911.9,1172L1913.2,1172L1914.4,1172L1915.7,1172L1916.9,1172L1918.1,1172L1919.4,1172L1920.6,1172L1921.9,1172L1923.1,1172L1924.4,1172L1925.6,1172L1926.8,1172L1928.1,1172L1929.3,1172L1930.6,1172L1931.8,1172L1933,1172L1934.3,1172L1935.5,1172L1936.8,1172L1938,1172L1939.3,1172L1940.5,1172L1941.7,1172L1943,1172L1944.2,1172L1945.5,1172L1946.7,1172L1947.9,1172L1949.2,1172L1950.4,1172L1951.7,1172L1952.9,1172L1954.2,1172L1955.4,1172L1956.6,1172L1957.9,1172L1959.1,1172L1960.4,1172L1961.6,1172L1962.8,1172L1964.1,1172L1965.3,1172L1966.6,1172L1967.8,1172L1969.1,1172L1970.3,1172L1971.5,1172L1972.8,1172L1974,1172L1975.3,1172L1976.5,1172L1977.8,1172L1979,1172L1980.2,1172L1981.5,1172L1982.7,1172L1984,1172L1985.2,1172L1986.4,1172L1987.7,1172L1988.9,1172L1990.2,1172L1991.4,1172L1992.7,1172L1993.9,1172L1995.1,1172L1996.4,1172L1997.6,1172L1998.9,1172L2000.1,1172L2001.3,1172L2002.6,1172L2003.8,1172L2005.1,1172L2006.3,1172L2007.6,1172L2008.8,1172L2010,1172L2011.3,1172L2012.5,1172L2013.8,1172L2015,1172L2016.2,1172L2017.5,1172L2018.7,1172L2020,1172L2021.2,1172L2022.5,1172L2023.7,1172L2024.9,1172L2026.2,1172L2027.4,1172L2028.7,1172L2029.9,1172L2031.2,1172L2032.4,1172L2033.6,1172L2034.9,1172L2036.1,1172L2037.4,1172L2038.6,1172L2039.8,1172L2041.1,1172L2042.3,1172L2043.6,1172L2044.8,1172L2046.1,1172L2047.3,1172L2048.5,1172L2049.8,1172L2051,1172L2052.3,1172L2053.5,1172L2054.7,1172L2056,1172L2057.2,1172L2058.5,1172L2059.7,1172L2061,1172L2062.2,1172L2063.4,1172L2064.7,1172L2065.9,1172L2067.2,1172L2068.4,1172L2069.6,1172L2070.9,1172L2072.1,1172L2073.4,1172L2074.6,1172L2075.9,1172L2077.1,1172L2078.3,1178.1L2079.6,1178.1L2080.8,1178.1L2082.1,1178.1L2083.3,1178.1L2084.6,1178.1L2085.8,1178.1L2087,1178.1L2088.3,1178.1L2089.5,1178.1L2090.8,1178.1L2092,1178.1L2093.2,1178.1L2094.5,1178.1L2095.7,1178.1L2097,1178.1L2098.2,1178.1L2099.5,1178.1L2100.7,1178.1L2101.9,1178.1L2103.2,1172L2104.4,1172L2105.7,1172L2106.9,1172L2108.1,1172L2109.4,1172L2110.6,1172L2111.9,1172L2113.1,1172L2114.4,1172L2115.6,1172L2116.8,1172L2118.1,1172L2119.3,1172L2120.6,1172L2121.8,1172L2123,1172L2124.3,1172L2125.5,1172L2126.8,1172L2128,1172L2129.3,1172L2130.5,1172" fill="none" stroke="#7eb26d" stroke-width="2.2" stroke-linejoin="round"/>
<path d="M1237.6,1086.9L1238.8,1086.8L1240.1,1086.8L1241.3,1086.4L1242.6,1086.1L1243.8,1087.1L1245.1,1086.5L1246.3,1086.7L1247.5,1086.6L1248.8,1087L1250,1086.5L1251.3,1086.7L1252.5,1086.8L1253.7,1086.9L1255,1086.9L1256.2,1087.4L1257.5,1087.4L1258.7,1086.6L1260,1087.2L1261.2,1087.3L1262.4,1087L1263.7,1086.6L1264.9,1084.8L1266.2,1087.7L1267.4,1087L1268.6,1087.5L1269.9,1086L1271.1,1085.9L1272.4,1087.3L1273.6,1086.6L1274.9,1087.2L1276.1,1086.7L1277.3,1087.4L1278.6,1086.7L1279.8,1086.8L1281.1,1087.2L1282.3,1089.9L1283.5,1086.6L1284.8,1082.5L1286,1086.9L1287.3,1087L1288.5,1087.2L1289.8,1087.2L1291,1087.1L1292.2,1088L1293.5,1087.5L1294.7,1086.3L1296,1085.7L1297.2,1086.7L1298.5,1086.1L1299.7,1085.8L1300.9,1086.5L1302.2,1086.4L1303.4,1086.8L1304.7,1087L1305.9,1087.7L1307.1,1086.4L1308.4,1086.5L1309.6,1086.9L1310.9,1087.5L1312.1,1087L1313.4,1086.5L1314.6,1085.8L1315.8,1087.2L1317.1,1086.8L1318.3,1087.6L1319.6,1087.6L1320.8,1087.8L1322,1087.1L1323.3,1087.2L1324.5,1086.2L1325.8,1087.3L1327,1086.8L1328.3,1087.3L1329.5,1086.7L1330.7,1086.7L1332,1086.5L1333.2,1087.7L1334.5,1086.7L1335.7,1086.4L1336.9,1086.8L1338.2,1086.4L1339.4,1087.4L1340.7,1087.6L1341.9,1086.9L1343.2,1087.2L1344.4,1086.4L1345.6,1087.6L1346.9,1087.1L1348.1,1087.7L1349.4,1086.7L1350.6,1087.1L1351.9,1087.2L1353.1,1087.2L1354.3,1086.9L1355.6,1087.4L1356.8,1087.2L1358.1,1086.8L1359.3,1086.4L1360.5,1087.5L1361.8,1086.8L1363,1087.1L1364.3,1086.6L1365.5,1086.9L1366.8,1086.7L1368,1116.1L1369.2,1095.1L1370.5,1087.1L1371.7,1087.2L1373,1087L1374.2,1086.7L1375.4,1087L1376.7,1098.6L1377.9,1086.6L1379.2,1086.5L1380.4,1086.6L1381.7,1087.1L1382.9,1087L1384.1,1086.6L1385.4,1087L1386.6,1087.1L1387.9,1086.9L1389.1,1087.5L1390.3,1086.9L1391.6,1099.8L1392.8,1087.1L1394.1,1092.7L1395.3,1087.4L1396.6,1087.1L1397.8,1101.6L1399,1087.1L1400.3,1086.9L1401.5,1086.7L1402.8,1095.1L1404,1085.8L1405.3,1086.5L1406.5,1091.6L1407.7,1086.5L1409,1086.9L1410.2,1086.4L1411.5,1091.6L1412.7,1086.5L1413.9,1086.9L1415.2,1087L1416.4,1091.6L1417.7,1086.9L1418.9,1086.5L1420.2,1087L1421.4,1087.1L1422.6,1087.2L1423.9,1086.9L1425.1,1086.6L1426.4,1086.7L1427.6,1087.1L1428.8,1086.7L1430.1,1087.3L1431.3,1086.4L1432.6,1086.6L1433.8,1086.6L1435.1,1087L1436.3,1086.6L1437.5,1084.3L1438.8,1087.1L1440,1086.7L1441.3,1088.5L1442.5,1087.1L1443.7,1086.8L1445,1087.1L1446.2,1087.1L1447.5,1086.5L1448.7,1086.9L1450,1086.9L1451.2,1087.1L1452.4,1086.7L1453.7,1087.3L1454.9,1084.3L1456.2,1086.8L1457.4,1087.5L1458.7,1086.2L1459.9,1086.2L1461.1,1087.4L1462.4,1087.2L1463.6,1087.3L1464.9,1087.1L1466.1,1087.2L1467.3,1086.5L1468.6,1087L1469.8,1087.2L1471.1,1086.3L1472.3,1086.3L1473.6,1086.7L1474.8,1087.2L1476,1087.2L1477.3,1086.4L1478.5,1086.5L1479.8,1086.7L1481,1086.9L1482.2,1087L1483.5,1086.9L1484.7,1086.6L1486,1087.4L1487.2,1087.4L1488.5,1086.2L1489.7,1086.8L1490.9,1087.5L1492.2,1086.9L1493.4,1086.9L1494.7,1086.7L1495.9,1087.6L1497.1,1086.3L1498.4,1087.3L1499.6,1087.6L1500.9,1086.5L1502.1,1087.5L1503.4,1087.2L1504.6,1086.5L1505.8,1087L1507.1,1087.7L1508.3,1086.8L1509.6,1086.8L1510.8,1085.5L1512.1,1086.1L1513.3,1111.9L1514.5,1087L1515.8,1087L1517,1086.9L1518.3,1087L1519.5,1086.8L1520.7,1086.8L1522,1087L1523.2,1086.8L1524.5,1087L1525.7,1087.1L1527,1086.7L1528.2,1086.8L1529.4,1087.1L1530.7,1087L1531.9,1087.1L1533.2,1087.1L1534.4,1086.8L1535.6,1087.1L1536.9,1087L1538.1,1087L1539.4,1086.9L1540.6,1086.8L1541.9,1086.8L1543.1,1086.7L1544.3,1086.8L1545.6,1086.8L1546.8,1086.9L1548.1,1086.8L1549.3,1086.7L1550.5,1086.9L1551.8,1086.6L1553,1086.8L1554.3,1087L1555.5,1086.7L1556.8,1086.7L1558,1086.9L1559.2,1087L1560.5,1086.9L1561.7,1086.8L1563,1086.9L1564.2,1086.7L1565.5,1086.7L1566.7,1087L1567.9,1087L1569.2,1087L1570.4,1086.9L1571.7,1086.9L1572.9,1086.7L1574.1,1086.8L1575.4,1086.8L1576.6,1087L1577.9,1086.9L1579.1,1086.9L1580.4,1086.8L1581.6,1086.9L1582.8,1086.9L1584.1,1087L1585.3,1086.9L1586.6,1087.1L1587.8,1086.7L1589,1087L1590.3,1086.7L1591.5,1086.7L1592.8,1087L1594,1086.8L1595.3,1086.8L1596.5,1086.9L1597.7,1087.2L1599,1086.8L1600.2,1086.8L1601.5,1087L1602.7,1086.8L1603.9,1087.2L1605.2,1086.7L1606.4,1086.9L1607.7,1087L1608.9,1086.9L1610.2,1086.8L1611.4,1086.7L1612.6,1086.9L1613.9,1087L1615.1,1086.9L1616.4,1086.8L1617.6,1087.1L1618.9,1087L1620.1,1087L1621.3,1086.9L1622.6,1086.8L1623.8,1087L1625.1,1086.9L1626.3,1086.8L1627.5,1086.9L1628.8,1086.9L1630,1087L1631.3,1086.9L1632.5,1086.8L1633.8,1086.8L1635,1086.9L1636.2,1086.9L1637.5,1086.9L1638.7,1086.9L1640,1086.8L1641.2,1086.9L1642.4,1087L1643.7,1086.9L1644.9,1086.9L1646.2,1086.9L1647.4,1086.8L1648.7,1086.9L1649.9,1087L1651.1,1086.9L1652.4,1086.9L1653.6,1086.9L1654.9,1087L1656.1,1087.1L1657.3,1086.7L1658.6,1087L1659.8,1086.8L1661.1,1087L1662.3,1087L1663.6,1087.1L1664.8,1086.8L1666,1087L1667.3,1086.6L1668.5,1086.9L1669.8,1086.6L1671,1086.8L1672.3,1086.8L1673.5,1086.7L1674.7,1086.9L1676,1086.8L1677.2,1086.8L1678.5,1086.8L1679.7,1086.8L1680.9,1086.9L1682.2,1086.8L1683.4,1086.8L1684.7,1086.7L1685.9,1087L1687.2,1086.9L1688.4,1087L1689.6,1086.8L1690.9,1087L1692.1,1087L1693.4,1087.2L1694.6,1086.8L1695.8,1087L1697.1,1087.1L1698.3,1086.9L1699.6,1086.9L1700.8,1086.8L1702.1,1086.9L1703.3,1087L1704.5,1086.9L1705.8,1086.8L1707,1087.2L1708.3,1086.8L1709.5,1087L1710.8,1086.9L1712,1087L1713.2,1087L1714.5,1087L1715.7,1087L1717,1087.1L1718.2,1086.8L1719.4,1086.7L1720.7,1086.7L1721.9,1086.6L1723.2,1087L1724.4,1086.7L1725.7,1086.7L1726.9,1086.9L1728.1,1086.9L1729.4,1086.9L1730.6,1086.6L1731.9,1086.7L1733.1,1086.7L1734.3,1086.9L1735.6,1086.9L1736.8,1086.9L1738.1,1087L1739.3,1087.3L1740.6,1086.8L1741.8,1087L1743,1087L1744.3,1086.9L1745.5,1086.8L1746.8,1087L1748,1087L1749.2,1087L1750.5,1086.8L1751.7,1086.6L1753,1086.8L1754.2,1087L1755.5,1087L1756.7,1086.8L1757.9,1086.9L1759.2,1087L1760.4,1087L1761.7,1086.8L1762.9,1086.9L1764.2,1086.9L1765.4,1086.8L1766.6,1087.1L1767.9,1086.7L1769.1,1086.9L1770.4,1087L1771.6,1086.9L1772.8,1087L1774.1,1086.6L1775.3,1086.9L1776.6,1086.9L1777.8,1086.9L1779.1,1086.7L1780.3,1086.9L1781.5,1086.8L1782.8,1087.1L1784,1086.8L1785.3,1086.9L1786.5,1086.9L1787.7,1086.9L1789,1087.1L1790.2,1087.1L1791.5,1086.9L1792.7,1086.9L1794,1086.8L1795.2,1086.7L1796.4,1086.9L1797.7,1086.9L1798.9,1086.9L1800.2,1086.8L1801.4,1087L1802.6,1087L1803.9,1086.9L1805.1,1087.1L1806.4,1086.9L1807.6,1087.1L1808.9,1086.9L1810.1,1086.9L1811.3,1086.8L1812.6,1087L1813.8,1086.8L1815.1,1086.9L1816.3,1086.9L1817.6,1086.8L1818.8,1087.2L1820,1087L1821.3,1086.9L1822.5,1087L1823.8,1086.9L1825,1086.8L1826.2,1087.1L1827.5,1087L1828.7,1087L1830,1087L1831.2,1087L1832.5,1087L1833.7,1086.9L1834.9,1086.9L1836.2,1086.9L1837.4,1086.7L1838.7,1086.9L1839.9,1087L1841.1,1087.1L1842.4,1086.9L1843.6,1086.8L1844.9,1087L1846.1,1086.8L1847.4,1086.8L1848.6,1086.7L1849.8,1086.7L1851.1,1087.1L1852.3,1086.9L1853.6,1086.6L1854.8,1086.8L1856,1086.7L1857.3,1087L1858.5,1086.8L1859.8,1086.8L1861,1087L1862.3,1087.1L1863.5,1086.8L1864.7,1086.9L1866,1086.8L1867.2,1087L1868.5,1086.9L1869.7,1086.9L1871,1086.8L1872.2,1087.1L1873.4,1086.9L1874.7,1087L1875.9,1087L1877.2,1086.8L1878.4,1086.9L1879.6,1086.9L1880.9,1086.8L1882.1,1086.9L1883.4,1086.9L1884.6,1086.7L1885.9,1086.9L1887.1,1086.9L1888.3,1086.8L1889.6,1086.8L1890.8,1086.7L1892.1,1086.9L1893.3,1086.9L1894.5,1086.9L1895.8,1087.1L1897,1086.9L1898.3,1086.8L1899.5,1087.1L1900.8,1087L1902,1087L1903.2,1087L1904.5,1086.8L1905.7,1086.8L1907,1087.1L1908.2,1086.7L1909.4,1086.8L1910.7,1087.1L1911.9,1086.8L1913.2,1087L1914.4,1086.8L1915.7,1087.2L1916.9,1086.9L1918.1,1087L1919.4,1086.7L1920.6,1087L1921.9,1087L1923.1,1086.8L1924.4,1087L1925.6,1086.9L1926.8,1086.9L1928.1,1086.8L1929.3,1086.8L1930.6,1086.7L1931.8,1086.9L1933,1086.9L1934.3,1086.8L1935.5,1087.1L1936.8,1086.9L1938,1086.9L1939.3,1086.8L1940.5,1087L1941.7,1086.9L1943,1086.8L1944.2,1086.9L1945.5,1087L1946.7,1086.9L1947.9,1087L1949.2,1087L1950.4,1087.2L1951.7,1086.8L1952.9,1086.9L1954.2,1086.9L1955.4,1086.9L1956.6,1086.9L1957.9,1086.9L1959.1,1087L1960.4,1086.7L1961.6,1086.9L1962.8,1087L1964.1,1087L1965.3,1086.9L1966.6,1086.9L1967.8,1086.9L1969.1,1087L1970.3,1086.9L1971.5,1087L1972.8,1087.1L1974,1087.1L1975.3,1086.9L1976.5,1087L1977.8,1086.9L1979,1086.9L1980.2,1086.8L1981.5,1086.9L1982.7,1087L1984,1086.9L1985.2,1086.9L1986.4,1087L1987.7,1086.9L1988.9,1086.9L1990.2,1086.9L1991.4,1086.9L1992.7,1086.8L1993.9,1087L1995.1,1086.9L1996.4,1086.8L1997.6,1087L1998.9,1086.9L2000.1,1086.7L2001.3,1086.9L2002.6,1086.8L2003.8,1086.9L2005.1,1086.8L2006.3,1086.8L2007.6,1086.7L2008.8,1086.7L2010,1086.9L2011.3,1086.8L2012.5,1087.1L2013.8,1086.8L2015,1086.9L2016.2,1086.7L2017.5,1087.1L2018.7,1086.9L2020,1086.7L2021.2,1086.9L2022.5,1086.8L2023.7,1087.1L2024.9,1087L2026.2,1086.8L2027.4,1087L2028.7,1087L2029.9,1086.9L2031.2,1086.9L2032.4,1086.9L2033.6,1086.8L2034.9,1086.9L2036.1,1086.8L2037.4,1086.9L2038.6,1086.9L2039.8,1086.8L2041.1,1087.1L2042.3,1086.9L2043.6,1087L2044.8,1087.2L2046.1,1086.9L2047.3,1086.8L2048.5,1086.7L2049.8,1086.7L2051,1087L2052.3,1086.7L2053.5,1086.7L2054.7,1086.9L2056,1086.9L2057.2,1087.1L2058.5,1086.7L2059.7,1087L2061,1086.6L2062.2,1087L2063.4,1086.9L2064.7,1086.8L2065.9,1087L2067.2,1086.9L2068.4,1087L2069.6,1086.9L2070.9,1087L2072.1,1087L2073.4,1086.8L2074.6,1086.8L2075.9,1086.8L2077.1,1087L2078.3,1087L2079.6,1086.9L2080.8,1086.9L2082.1,1086.8L2083.3,1086.9L2084.6,1087L2085.8,1087L2087,1087.1L2088.3,1087.1L2089.5,1086.9L2090.8,1087.2L2092,1087.1L2093.2,1086.9L2094.5,1086.9L2095.7,1087L2097,1086.8L2098.2,1086.8L2099.5,1086.9L2100.7,1086.9L2101.9,1086.6L2103.2,1087L2104.4,1086.7L2105.7,1086.9L2106.9,1086.9L2108.1,1086.8L2109.4,1087L2110.6,1086.8L2111.9,1086.8L2113.1,1086.9L2114.4,1086.9L2115.6,1086.8L2116.8,1086.8L2118.1,1086.8L2119.3,1086.9L2120.6,1086.9L2121.8,1087L2123,1086.9L2124.3,1086.8L2125.5,1087L2126.8,1087.2L2128,1087.1L2129.3,1086.8L2130.5,1087L2130.5,1212.2 L1237.6,1212.2 Z" fill="#eab839" fill-opacity="0.1" stroke="none"/><path d="M1237.6,1086.9L1238.8,1086.8L1240.1,1086.8L1241.3,1086.4L1242.6,1086.1L1243.8,1087.1L1245.1,1086.5L1246.3,1086.7L1247.5,1086.6L1248.8,1087L1250,1086.5L1251.3,1086.7L1252.5,1086.8L1253.7,1086.9L1255,1086.9L1256.2,1087.4L1257.5,1087.4L1258.7,1086.6L1260,1087.2L1261.2,1087.3L1262.4,1087L1263.7,1086.6L1264.9,1084.8L1266.2,1087.7L1267.4,1087L1268.6,1087.5L1269.9,1086L1271.1,1085.9L1272.4,1087.3L1273.6,1086.6L1274.9,1087.2L1276.1,1086.7L1277.3,1087.4L1278.6,1086.7L1279.8,1086.8L1281.1,1087.2L1282.3,1089.9L1283.5,1086.6L1284.8,1082.5L1286,1086.9L1287.3,1087L1288.5,1087.2L1289.8,1087.2L1291,1087.1L1292.2,1088L1293.5,1087.5L1294.7,1086.3L1296,1085.7L1297.2,1086.7L1298.5,1086.1L1299.7,1085.8L1300.9,1086.5L1302.2,1086.4L1303.4,1086.8L1304.7,1087L1305.9,1087.7L1307.1,1086.4L1308.4,1086.5L1309.6,1086.9L1310.9,1087.5L1312.1,1087L1313.4,1086.5L1314.6,1085.8L1315.8,1087.2L1317.1,1086.8L1318.3,1087.6L1319.6,1087.6L1320.8,1087.8L1322,1087.1L1323.3,1087.2L1324.5,1086.2L1325.8,1087.3L1327,1086.8L1328.3,1087.3L1329.5,1086.7L1330.7,1086.7L1332,1086.5L1333.2,1087.7L1334.5,1086.7L1335.7,1086.4L1336.9,1086.8L1338.2,1086.4L1339.4,1087.4L1340.7,1087.6L1341.9,1086.9L1343.2,1087.2L1344.4,1086.4L1345.6,1087.6L1346.9,1087.1L1348.1,1087.7L1349.4,1086.7L1350.6,1087.1L1351.9,1087.2L1353.1,1087.2L1354.3,1086.9L1355.6,1087.4L1356.8,1087.2L1358.1,1086.8L1359.3,1086.4L1360.5,1087.5L1361.8,1086.8L1363,1087.1L1364.3,1086.6L1365.5,1086.9L1366.8,1086.7L1368,1116.1L1369.2,1095.1L1370.5,1087.1L1371.7,1087.2L1373,1087L1374.2,1086.7L1375.4,1087L1376.7,1098.6L1377.9,1086.6L1379.2,1086.5L1380.4,1086.6L1381.7,1087.1L1382.9,1087L1384.1,1086.6L1385.4,1087L1386.6,1087.1L1387.9,1086.9L1389.1,1087.5L1390.3,1086.9L1391.6,1099.8L1392.8,1087.1L1394.1,1092.7L1395.3,1087.4L1396.6,1087.1L1397.8,1101.6L1399,1087.1L1400.3,1086.9L1401.5,1086.7L1402.8,1095.1L1404,1085.8L1405.3,1086.5L1406.5,1091.6L1407.7,1086.5L1409,1086.9L1410.2,1086.4L1411.5,1091.6L1412.7,1086.5L1413.9,1086.9L1415.2,1087L1416.4,1091.6L1417.7,1086.9L1418.9,1086.5L1420.2,1087L1421.4,1087.1L1422.6,1087.2L1423.9,1086.9L1425.1,1086.6L1426.4,1086.7L1427.6,1087.1L1428.8,1086.7L1430.1,1087.3L1431.3,1086.4L1432.6,1086.6L1433.8,1086.6L1435.1,1087L1436.3,1086.6L1437.5,1084.3L1438.8,1087.1L1440,1086.7L1441.3,1088.5L1442.5,1087.1L1443.7,1086.8L1445,1087.1L1446.2,1087.1L1447.5,1086.5L1448.7,1086.9L1450,1086.9L1451.2,1087.1L1452.4,1086.7L1453.7,1087.3L1454.9,1084.3L1456.2,1086.8L1457.4,1087.5L1458.7,1086.2L1459.9,1086.2L1461.1,1087.4L1462.4,1087.2L1463.6,1087.3L1464.9,1087.1L1466.1,1087.2L1467.3,1086.5L1468.6,1087L1469.8,1087.2L1471.1,1086.3L1472.3,1086.3L1473.6,1086.7L1474.8,1087.2L1476,1087.2L1477.3,1086.4L1478.5,1086.5L1479.8,1086.7L1481,1086.9L1482.2,1087L1483.5,1086.9L1484.7,1086.6L1486,1087.4L1487.2,1087.4L1488.5,1086.2L1489.7,1086.8L1490.9,1087.5L1492.2,1086.9L1493.4,1086.9L1494.7,1086.7L1495.9,1087.6L1497.1,1086.3L1498.4,1087.3L1499.6,1087.6L1500.9,1086.5L1502.1,1087.5L1503.4,1087.2L1504.6,1086.5L1505.8,1087L1507.1,1087.7L1508.3,1086.8L1509.6,1086.8L1510.8,1085.5L1512.1,1086.1L1513.3,1111.9L1514.5,1087L1515.8,1087L1517,1086.9L1518.3,1087L1519.5,1086.8L1520.7,1086.8L1522,1087L1523.2,1086.8L1524.5,1087L1525.7,1087.1L1527,1086.7L1528.2,1086.8L1529.4,1087.1L1530.7,1087L1531.9,1087.1L1533.2,1087.1L1534.4,1086.8L1535.6,1087.1L1536.9,1087L1538.1,1087L1539.4,1086.9L1540.6,1086.8L1541.9,1086.8L1543.1,1086.7L1544.3,1086.8L1545.6,1086.8L1546.8,1086.9L1548.1,1086.8L1549.3,1086.7L1550.5,1086.9L1551.8,1086.6L1553,1086.8L1554.3,1087L1555.5,1086.7L1556.8,1086.7L1558,1086.9L1559.2,1087L1560.5,1086.9L1561.7,1086.8L1563,1086.9L1564.2,1086.7L1565.5,1086.7L1566.7,1087L1567.9,1087L1569.2,1087L1570.4,1086.9L1571.7,1086.9L1572.9,1086.7L1574.1,1086.8L1575.4,1086.8L1576.6,1087L1577.9,1086.9L1579.1,1086.9L1580.4,1086.8L1581.6,1086.9L1582.8,1086.9L1584.1,1087L1585.3,1086.9L1586.6,1087.1L1587.8,1086.7L1589,1087L1590.3,1086.7L1591.5,1086.7L1592.8,1087L1594,1086.8L1595.3,1086.8L1596.5,1086.9L1597.7,1087.2L1599,1086.8L1600.2,1086.8L1601.5,1087L1602.7,1086.8L1603.9,1087.2L1605.2,1086.7L1606.4,1086.9L1607.7,1087L1608.9,1086.9L1610.2,1086.8L1611.4,1086.7L1612.6,1086.9L1613.9,1087L1615.1,1086.9L1616.4,1086.8L1617.6,1087.1L1618.9,1087L1620.1,1087L1621.3,1086.9L1622.6,1086.8L1623.8,1087L1625.1,1086.9L1626.3,1086.8L1627.5,1086.9L1628.8,1086.9L1630,1087L1631.3,1086.9L1632.5,1086.8L1633.8,1086.8L1635,1086.9L1636.2,1086.9L1637.5,1086.9L1638.7,1086.9L1640,1086.8L1641.2,1086.9L1642.4,1087L1643.7,1086.9L1644.9,1086.9L1646.2,1086.9L1647.4,1086.8L1648.7,1086.9L1649.9,1087L1651.1,1086.9L1652.4,1086.9L1653.6,1086.9L1654.9,1087L1656.1,1087.1L1657.3,1086.7L1658.6,1087L1659.8,1086.8L1661.1,1087L1662.3,1087L1663.6,1087.1L1664.8,1086.8L1666,1087L1667.3,1086.6L1668.5,1086.9L1669.8,1086.6L1671,1086.8L1672.3,1086.8L1673.5,1086.7L1674.7,1086.9L1676,1086.8L1677.2,1086.8L1678.5,1086.8L1679.7,1086.8L1680.9,1086.9L1682.2,1086.8L1683.4,1086.8L1684.7,1086.7L1685.9,1087L1687.2,1086.9L1688.4,1087L1689.6,1086.8L1690.9,1087L1692.1,1087L1693.4,1087.2L1694.6,1086.8L1695.8,1087L1697.1,1087.1L1698.3,1086.9L1699.6,1086.9L1700.8,1086.8L1702.1,1086.9L1703.3,1087L1704.5,1086.9L1705.8,1086.8L1707,1087.2L1708.3,1086.8L1709.5,1087L1710.8,1086.9L1712,1087L1713.2,1087L1714.5,1087L1715.7,1087L1717,1087.1L1718.2,1086.8L1719.4,1086.7L1720.7,1086.7L1721.9,1086.6L1723.2,1087L1724.4,1086.7L1725.7,1086.7L1726.9,1086.9L1728.1,1086.9L1729.4,1086.9L1730.6,1086.6L1731.9,1086.7L1733.1,1086.7L1734.3,1086.9L1735.6,1086.9L1736.8,1086.9L1738.1,1087L1739.3,1087.3L1740.6,1086.8L1741.8,1087L1743,1087L1744.3,1086.9L1745.5,1086.8L1746.8,1087L1748,1087L1749.2,1087L1750.5,1086.8L1751.7,1086.6L1753,1086.8L1754.2,1087L1755.5,1087L1756.7,1086.8L1757.9,1086.9L1759.2,1087L1760.4,1087L1761.7,1086.8L1762.9,1086.9L1764.2,1086.9L1765.4,1086.8L1766.6,1087.1L1767.9,1086.7L1769.1,1086.9L1770.4,1087L1771.6,1086.9L1772.8,1087L1774.1,1086.6L1775.3,1086.9L1776.6,1086.9L1777.8,1086.9L1779.1,1086.7L1780.3,1086.9L1781.5,1086.8L1782.8,1087.1L1784,1086.8L1785.3,1086.9L1786.5,1086.9L1787.7,1086.9L1789,1087.1L1790.2,1087.1L1791.5,1086.9L1792.7,1086.9L1794,1086.8L1795.2,1086.7L1796.4,1086.9L1797.7,1086.9L1798.9,1086.9L1800.2,1086.8L1801.4,1087L1802.6,1087L1803.9,1086.9L1805.1,1087.1L1806.4,1086.9L1807.6,1087.1L1808.9,1086.9L1810.1,1086.9L1811.3,1086.8L1812.6,1087L1813.8,1086.8L1815.1,1086.9L1816.3,1086.9L1817.6,1086.8L1818.8,1087.2L1820,1087L1821.3,1086.9L1822.5,1087L1823.8,1086.9L1825,1086.8L1826.2,1087.1L1827.5,1087L1828.7,1087L1830,1087L1831.2,1087L1832.5,1087L1833.7,1086.9L1834.9,1086.9L1836.2,1086.9L1837.4,1086.7L1838.7,1086.9L1839.9,1087L1841.1,1087.1L1842.4,1086.9L1843.6,1086.8L1844.9,1087L1846.1,1086.8L1847.4,1086.8L1848.6,1086.7L1849.8,1086.7L1851.1,1087.1L1852.3,1086.9L1853.6,1086.6L1854.8,1086.8L1856,1086.7L1857.3,1087L1858.5,1086.8L1859.8,1086.8L1861,1087L1862.3,1087.1L1863.5,1086.8L1864.7,1086.9L1866,1086.8L1867.2,1087L1868.5,1086.9L1869.7,1086.9L1871,1086.8L1872.2,1087.1L1873.4,1086.9L1874.7,1087L1875.9,1087L1877.2,1086.8L1878.4,1086.9L1879.6,1086.9L1880.9,1086.8L1882.1,1086.9L1883.4,1086.9L1884.6,1086.7L1885.9,1086.9L1887.1,1086.9L1888.3,1086.8L1889.6,1086.8L1890.8,1086.7L1892.1,1086.9L1893.3,1086.9L1894.5,1086.9L1895.8,1087.1L1897,1086.9L1898.3,1086.8L1899.5,1087.1L1900.8,1087L1902,1087L1903.2,1087L1904.5,1086.8L1905.7,1086.8L1907,1087.1L1908.2,1086.7L1909.4,1086.8L1910.7,1087.1L1911.9,1086.8L1913.2,1087L1914.4,1086.8L1915.7,1087.2L1916.9,1086.9L1918.1,1087L1919.4,1086.7L1920.6,1087L1921.9,1087L1923.1,1086.8L1924.4,1087L1925.6,1086.9L1926.8,1086.9L1928.1,1086.8L1929.3,1086.8L1930.6,1086.7L1931.8,1086.9L1933,1086.9L1934.3,1086.8L1935.5,1087.1L1936.8,1086.9L1938,1086.9L1939.3,1086.8L1940.5,1087L1941.7,1086.9L1943,1086.8L1944.2,1086.9L1945.5,1087L1946.7,1086.9L1947.9,1087L1949.2,1087L1950.4,1087.2L1951.7,1086.8L1952.9,1086.9L1954.2,1086.9L1955.4,1086.9L1956.6,1086.9L1957.9,1086.9L1959.1,1087L1960.4,1086.7L1961.6,1086.9L1962.8,1087L1964.1,1087L1965.3,1086.9L1966.6,1086.9L1967.8,1086.9L1969.1,1087L1970.3,1086.9L1971.5,1087L1972.8,1087.1L1974,1087.1L1975.3,1086.9L1976.5,1087L1977.8,1086.9L1979,1086.9L1980.2,1086.8L1981.5,1086.9L1982.7,1087L1984,1086.9L1985.2,1086.9L1986.4,1087L1987.7,1086.9L1988.9,1086.9L1990.2,1086.9L1991.4,1086.9L1992.7,1086.8L1993.9,1087L1995.1,1086.9L1996.4,1086.8L1997.6,1087L1998.9,1086.9L2000.1,1086.7L2001.3,1086.9L2002.6,1086.8L2003.8,1086.9L2005.1,1086.8L2006.3,1086.8L2007.6,1086.7L2008.8,1086.7L2010,1086.9L2011.3,1086.8L2012.5,1087.1L2013.8,1086.8L2015,1086.9L2016.2,1086.7L2017.5,1087.1L2018.7,1086.9L2020,1086.7L2021.2,1086.9L2022.5,1086.8L2023.7,1087.1L2024.9,1087L2026.2,1086.8L2027.4,1087L2028.7,1087L2029.9,1086.9L2031.2,1086.9L2032.4,1086.9L2033.6,1086.8L2034.9,1086.9L2036.1,1086.8L2037.4,1086.9L2038.6,1086.9L2039.8,1086.8L2041.1,1087.1L2042.3,1086.9L2043.6,1087L2044.8,1087.2L2046.1,1086.9L2047.3,1086.8L2048.5,1086.7L2049.8,1086.7L2051,1087L2052.3,1086.7L2053.5,1086.7L2054.7,1086.9L2056,1086.9L2057.2,1087.1L2058.5,1086.7L2059.7,1087L2061,1086.6L2062.2,1087L2063.4,1086.9L2064.7,1086.8L2065.9,1087L2067.2,1086.9L2068.4,1087L2069.6,1086.9L2070.9,1087L2072.1,1087L2073.4,1086.8L2074.6,1086.8L2075.9,1086.8L2077.1,1087L2078.3,1087L2079.6,1086.9L2080.8,1086.9L2082.1,1086.8L2083.3,1086.9L2084.6,1087L2085.8,1087L2087,1087.1L2088.3,1087.1L2089.5,1086.9L2090.8,1087.2L2092,1087.1L2093.2,1086.9L2094.5,1086.9L2095.7,1087L2097,1086.8L2098.2,1086.8L2099.5,1086.9L2100.7,1086.9L2101.9,1086.6L2103.2,1087L2104.4,1086.7L2105.7,1086.9L2106.9,1086.9L2108.1,1086.8L2109.4,1087L2110.6,1086.8L2111.9,1086.8L2113.1,1086.9L2114.4,1086.9L2115.6,1086.8L2116.8,1086.8L2118.1,1086.8L2119.3,1086.9L2120.6,1086.9L2121.8,1087L2123,1086.9L2124.3,1086.8L2125.5,1087L2126.8,1087.2L2128,1087.1L2129.3,1086.8L2130.5,1087" fill="none" stroke="#eab839" stroke-width="2.2" stroke-linejoin="round"/>
<path d="M1237.6,1154L1238.8,1154L1240.1,1154L1241.3,1154L1242.6,1154L1243.8,1160.1L1245.1,1160.1L1246.3,1160.1L1247.5,1160.1L1248.8,1154L1250,1154L1251.3,1154L1252.5,1154L1253.7,1154L1255,1154L1256.2,1154L1257.5,1154L1258.7,1154L1260,1154L1261.2,1154L1262.4,1154L1263.7,1154L1264.9,1167.6L1266.2,1160.1L1267.4,1160.1L1268.6,1154L1269.9,1154L1271.1,1154L1272.4,1154L1273.6,1154L1274.9,1154L1276.1,1154L1277.3,1154L1278.6,1166.4L1279.8,1160.1L1281.1,1154L1282.3,1149.3L1283.5,1154L1284.8,1154L1286,1148.9L1287.3,1154L1288.5,1160.1L1289.8,1160.1L1291,1160.1L1292.2,1160.1L1293.5,1160.1L1294.7,1160.1L1296,1160.1L1297.2,1154L1298.5,1154L1299.7,1160.1L1300.9,1160.1L1302.2,1166.4L1303.4,1160.1L1304.7,1154L1305.9,1154L1307.1,1160.1L1308.4,1160.1L1309.6,1160.1L1310.9,1160.1L1312.1,1160.1L1313.4,1166.4L1314.6,1160.1L1315.8,1160.1L1317.1,1154L1318.3,1154L1319.6,1154L1320.8,1160.1L1322,1160.1L1323.3,1154L1324.5,1154L1325.8,1160.1L1327,1166.4L1328.3,1160.1L1329.5,1160.1L1330.7,1160.1L1332,1160.1L1333.2,1160.1L1334.5,1160.1L1335.7,1167.1L1336.9,1160.1L1338.2,1160.1L1339.4,1160.1L1340.7,1160.1L1341.9,1160.1L1343.2,1160.1L1344.4,1160.1L1345.6,1160.1L1346.9,1167.1L1348.1,1160.1L1349.4,1160.1L1350.6,1160.1L1351.9,1160.1L1353.1,1160.1L1354.3,1160.1L1355.6,1160.1L1356.8,1160.1L1358.1,1167.6L1359.3,1160.1L1360.5,1160.1L1361.8,1160.1L1363,1160.1L1364.3,1160.1L1365.5,1160.1L1366.8,1160.1L1368,1154L1369.2,1145.4L1370.5,1154L1371.7,1160.1L1373,1166.4L1374.2,1160.1L1375.4,1154L1376.7,1145.4L1377.9,1160.1L1379.2,1160.1L1380.4,1167.6L1381.7,1160.1L1382.9,1139L1384.1,1154L1385.4,1154L1386.6,1154L1387.9,1154L1389.1,1154L1390.3,1154L1391.6,1139.5L1392.8,1154L1394.1,1141.9L1395.3,1139L1396.6,1154L1397.8,1154L1399,1159.4L1400.3,1154L1401.5,1146.5L1402.8,1154L1404,1147L1405.3,1154L1406.5,1154L1407.7,1154L1409,1160.1L1410.2,1154L1411.5,1154L1412.7,1160.1L1413.9,1160.1L1415.2,1160.1L1416.4,1160.1L1417.7,1160.1L1418.9,1160.1L1420.2,1160.1L1421.4,1160.1L1422.6,1160.1L1423.9,1160.1L1425.1,1160.1L1426.4,1160.1L1427.6,1160.1L1428.8,1160.1L1430.1,1160.1L1431.3,1160.1L1432.6,1160.1L1433.8,1160.1L1435.1,1160.1L1436.3,1160.1L1437.5,1160.1L1438.8,1154L1440,1145.6L1441.3,1154L1442.5,1154L1443.7,1160.1L1445,1160.1L1446.2,1160.1L1447.5,1154L1448.7,1154L1450,1160.1L1451.2,1160.1L1452.4,1160.1L1453.7,1160.1L1454.9,1154L1456.2,1160.1L1457.4,1160.1L1458.7,1160.1L1459.9,1154L1461.1,1154L1462.4,1166.4L1463.6,1160.1L1464.9,1160.1L1466.1,1160.1L1467.3,1160.1L1468.6,1166.4L1469.8,1160.1L1471.1,1166.9L1472.3,1160.1L1473.6,1160.1L1474.8,1154L1476,1160.1L1477.3,1166.4L1478.5,1160.1L1479.8,1154L1481,1154L1482.2,1160.1L1483.5,1160.1L1484.7,1160.1L1486,1167.1L1487.2,1160.1L1488.5,1160.1L1489.7,1160.1L1490.9,1160.1L1492.2,1160.1L1493.4,1160.1L1494.7,1160.1L1495.9,1160.1L1497.1,1160.1L1498.4,1154L1499.6,1154L1500.9,1154L1502.1,1154L1503.4,1154L1504.6,1160.1L1505.8,1160.1L1507.1,1160.1L1508.3,1160.1L1509.6,1160.1L1510.8,1160.1L1512.1,1160.1L1513.3,1176.9L1514.5,1160.1L1515.8,1154L1517,1154L1518.3,1154L1519.5,1154L1520.7,1154L1522,1154L1523.2,1154L1524.5,1154L1525.7,1154L1527,1154L1528.2,1160.1L1529.4,1160.1L1530.7,1160.1L1531.9,1160.1L1533.2,1160.1L1534.4,1160.1L1535.6,1160.1L1536.9,1160.1L1538.1,1160.1L1539.4,1160.1L1540.6,1160.1L1541.9,1160.1L1543.1,1160.1L1544.3,1154L1545.6,1154L1546.8,1154L1548.1,1154L1549.3,1154L1550.5,1154L1551.8,1160.1L1553,1160.1L1554.3,1160.1L1555.5,1160.1L1556.8,1154L1558,1154L1559.2,1154L1560.5,1154L1561.7,1154L1563,1154L1564.2,1154L1565.5,1154L1566.7,1154L1567.9,1160.1L1569.2,1160.1L1570.4,1160.1L1571.7,1160.1L1572.9,1160.1L1574.1,1160.1L1575.4,1160.1L1576.6,1160.1L1577.9,1160.1L1579.1,1160.1L1580.4,1160.1L1581.6,1160.1L1582.8,1154L1584.1,1154L1585.3,1154L1586.6,1154L1587.8,1154L1589,1154L1590.3,1154L1591.5,1154L1592.8,1154L1594,1154L1595.3,1154L1596.5,1154L1597.7,1154L1599,1154L1600.2,1154L1601.5,1154L1602.7,1154L1603.9,1154L1605.2,1154L1606.4,1154L1607.7,1154L1608.9,1154L1610.2,1154L1611.4,1154L1612.6,1154L1613.9,1154L1615.1,1154L1616.4,1154L1617.6,1154L1618.9,1154L1620.1,1154L1621.3,1154L1622.6,1154L1623.8,1154L1625.1,1154L1626.3,1154L1627.5,1154L1628.8,1154L1630,1154L1631.3,1154L1632.5,1154L1633.8,1154L1635,1154L1636.2,1154L1637.5,1154L1638.7,1154L1640,1154L1641.2,1154L1642.4,1154L1643.7,1154L1644.9,1154L1646.2,1154L1647.4,1154L1648.7,1154L1649.9,1154L1651.1,1154L1652.4,1154L1653.6,1154L1654.9,1154L1656.1,1160.1L1657.3,1160.1L1658.6,1160.1L1659.8,1160.1L1661.1,1160.1L1662.3,1160.1L1663.6,1160.1L1664.8,1160.1L1666,1160.1L1667.3,1160.1L1668.5,1160.1L1669.8,1160.1L1671,1160.1L1672.3,1160.1L1673.5,1160.1L1674.7,1160.1L1676,1154L1677.2,1154L1678.5,1160.1L1679.7,1160.1L1680.9,1160.1L1682.2,1160.1L1683.4,1160.1L1684.7,1160.1L1685.9,1160.1L1687.2,1160.1L1688.4,1160.1L1689.6,1160.1L1690.9,1160.1L1692.1,1160.1L1693.4,1160.1L1694.6,1160.1L1695.8,1160.1L1697.1,1160.1L1698.3,1160.1L1699.6,1154L1700.8,1154L1702.1,1154L1703.3,1154L1704.5,1154L1705.8,1154L1707,1154L1708.3,1154L1709.5,1154L1710.8,1154L1712,1154L1713.2,1154L1714.5,1154L1715.7,1154L1717,1154L1718.2,1154L1719.4,1154L1720.7,1154L1721.9,1154L1723.2,1154L1724.4,1154L1725.7,1154L1726.9,1154L1728.1,1154L1729.4,1154L1730.6,1154L1731.9,1154L1733.1,1154L1734.3,1154L1735.6,1154L1736.8,1160.1L1738.1,1160.1L1739.3,1160.1L1740.6,1160.1L1741.8,1160.1L1743,1160.1L1744.3,1160.1L1745.5,1160.1L1746.8,1160.1L1748,1160.1L1749.2,1160.1L1750.5,1160.1L1751.7,1160.1L1753,1160.1L1754.2,1160.1L1755.5,1160.1L1756.7,1160.1L1757.9,1160.1L1759.2,1160.1L1760.4,1160.1L1761.7,1160.1L1762.9,1160.1L1764.2,1160.1L1765.4,1160.1L1766.6,1160.1L1767.9,1160.1L1769.1,1160.1L1770.4,1160.1L1771.6,1160.1L1772.8,1160.1L1774.1,1160.1L1775.3,1160.1L1776.6,1160.1L1777.8,1160.1L1779.1,1160.1L1780.3,1160.1L1781.5,1160.1L1782.8,1160.1L1784,1154L1785.3,1154L1786.5,1154L1787.7,1154L1789,1154L1790.2,1160.1L1791.5,1160.1L1792.7,1160.1L1794,1160.1L1795.2,1160.1L1796.4,1160.1L1797.7,1160.1L1798.9,1160.1L1800.2,1160.1L1801.4,1154L1802.6,1154L1803.9,1154L1805.1,1154L1806.4,1154L1807.6,1160.1L1808.9,1160.1L1810.1,1160.1L1811.3,1150L1812.6,1150L1813.8,1160.1L1815.1,1160.1L1816.3,1160.1L1817.6,1160.1L1818.8,1160.1L1820,1160.1L1821.3,1160.1L1822.5,1160.1L1823.8,1160.1L1825,1160.1L1826.2,1160.1L1827.5,1160.1L1828.7,1160.1L1830,1160.1L1831.2,1160.1L1832.5,1160.1L1833.7,1160.1L1834.9,1160.1L1836.2,1160.1L1837.4,1160.1L1838.7,1160.1L1839.9,1160.1L1841.1,1160.1L1842.4,1160.1L1843.6,1160.1L1844.9,1160.1L1846.1,1160.1L1847.4,1160.1L1848.6,1160.1L1849.8,1160.1L1851.1,1160.1L1852.3,1160.1L1853.6,1160.1L1854.8,1160.1L1856,1160.1L1857.3,1160.1L1858.5,1160.1L1859.8,1160.1L1861,1160.1L1862.3,1160.1L1863.5,1160.1L1864.7,1160.1L1866,1160.1L1867.2,1160.1L1868.5,1160.1L1869.7,1160.1L1871,1160.1L1872.2,1160.1L1873.4,1160.1L1874.7,1160.1L1875.9,1160.1L1877.2,1160.1L1878.4,1160.1L1879.6,1160.1L1880.9,1160.1L1882.1,1160.1L1883.4,1160.1L1884.6,1154L1885.9,1154L1887.1,1154L1888.3,1154L1889.6,1154L1890.8,1154L1892.1,1154L1893.3,1154L1894.5,1154L1895.8,1154L1897,1154L1898.3,1154L1899.5,1154L1900.8,1154L1902,1154L1903.2,1154L1904.5,1154L1905.7,1154L1907,1154L1908.2,1154L1909.4,1154L1910.7,1154L1911.9,1154L1913.2,1154L1914.4,1154L1915.7,1154L1916.9,1154L1918.1,1154L1919.4,1154L1920.6,1154L1921.9,1154L1923.1,1154L1924.4,1154L1925.6,1154L1926.8,1154L1928.1,1154L1929.3,1154L1930.6,1154L1931.8,1154L1933,1154L1934.3,1154L1935.5,1154L1936.8,1154L1938,1154L1939.3,1154L1940.5,1154L1941.7,1154L1943,1154L1944.2,1154L1945.5,1154L1946.7,1154L1947.9,1154L1949.2,1154L1950.4,1154L1951.7,1154L1952.9,1154L1954.2,1154L1955.4,1154L1956.6,1154L1957.9,1154L1959.1,1154L1960.4,1154L1961.6,1154L1962.8,1154L1964.1,1154L1965.3,1154L1966.6,1154L1967.8,1154L1969.1,1154L1970.3,1154L1971.5,1154L1972.8,1154L1974,1154L1975.3,1154L1976.5,1154L1977.8,1154L1979,1154L1980.2,1154L1981.5,1154L1982.7,1154L1984,1154L1985.2,1154L1986.4,1154L1987.7,1154L1988.9,1154L1990.2,1154L1991.4,1154L1992.7,1154L1993.9,1154L1995.1,1154L1996.4,1154L1997.6,1154L1998.9,1154L2000.1,1154L2001.3,1154L2002.6,1154L2003.8,1154L2005.1,1154L2006.3,1154L2007.6,1154L2008.8,1154L2010,1154L2011.3,1154L2012.5,1154L2013.8,1154L2015,1154L2016.2,1154L2017.5,1154L2018.7,1154L2020,1154L2021.2,1154L2022.5,1154L2023.7,1154L2024.9,1154L2026.2,1154L2027.4,1154L2028.7,1154L2029.9,1154L2031.2,1154L2032.4,1154L2033.6,1154L2034.9,1154L2036.1,1154L2037.4,1154L2038.6,1154L2039.8,1154L2041.1,1154L2042.3,1154L2043.6,1154L2044.8,1154L2046.1,1154L2047.3,1154L2048.5,1154L2049.8,1154L2051,1154L2052.3,1154L2053.5,1154L2054.7,1154L2056,1154L2057.2,1154L2058.5,1154L2059.7,1154L2061,1154L2062.2,1154L2063.4,1154L2064.7,1154L2065.9,1154L2067.2,1154L2068.4,1154L2069.6,1154L2070.9,1154L2072.1,1154L2073.4,1154L2074.6,1154L2075.9,1154L2077.1,1154L2078.3,1160.1L2079.6,1160.1L2080.8,1160.1L2082.1,1160.1L2083.3,1160.1L2084.6,1160.1L2085.8,1160.1L2087,1160.1L2088.3,1160.1L2089.5,1160.1L2090.8,1160.1L2092,1160.1L2093.2,1160.1L2094.5,1160.1L2095.7,1160.1L2097,1160.1L2098.2,1160.1L2099.5,1160.1L2100.7,1160.1L2101.9,1160.1L2103.2,1154L2104.4,1154L2105.7,1154L2106.9,1154L2108.1,1154L2109.4,1154L2110.6,1154L2111.9,1154L2113.1,1154L2114.4,1154L2115.6,1154L2116.8,1154L2118.1,1154L2119.3,1154L2120.6,1154L2121.8,1154L2123,1154L2124.3,1154L2125.5,1154L2126.8,1154L2128,1154L2129.3,1154L2130.5,1154L2130.5,1212.2 L1237.6,1212.2 Z" fill="#ef843c" fill-opacity="0.1" stroke="none"/><path d="M1237.6,1154L1238.8,1154L1240.1,1154L1241.3,1154L1242.6,1154L1243.8,1160.1L1245.1,1160.1L1246.3,1160.1L1247.5,1160.1L1248.8,1154L1250,1154L1251.3,1154L1252.5,1154L1253.7,1154L1255,1154L1256.2,1154L1257.5,1154L1258.7,1154L1260,1154L1261.2,1154L1262.4,1154L1263.7,1154L1264.9,1167.6L1266.2,1160.1L1267.4,1160.1L1268.6,1154L1269.9,1154L1271.1,1154L1272.4,1154L1273.6,1154L1274.9,1154L1276.1,1154L1277.3,1154L1278.6,1166.4L1279.8,1160.1L1281.1,1154L1282.3,1149.3L1283.5,1154L1284.8,1154L1286,1148.9L1287.3,1154L1288.5,1160.1L1289.8,1160.1L1291,1160.1L1292.2,1160.1L1293.5,1160.1L1294.7,1160.1L1296,1160.1L1297.2,1154L1298.5,1154L1299.7,1160.1L1300.9,1160.1L1302.2,1166.4L1303.4,1160.1L1304.7,1154L1305.9,1154L1307.1,1160.1L1308.4,1160.1L1309.6,1160.1L1310.9,1160.1L1312.1,1160.1L1313.4,1166.4L1314.6,1160.1L1315.8,1160.1L1317.1,1154L1318.3,1154L1319.6,1154L1320.8,1160.1L1322,1160.1L1323.3,1154L1324.5,1154L1325.8,1160.1L1327,1166.4L1328.3,1160.1L1329.5,1160.1L1330.7,1160.1L1332,1160.1L1333.2,1160.1L1334.5,1160.1L1335.7,1167.1L1336.9,1160.1L1338.2,1160.1L1339.4,1160.1L1340.7,1160.1L1341.9,1160.1L1343.2,1160.1L1344.4,1160.1L1345.6,1160.1L1346.9,1167.1L1348.1,1160.1L1349.4,1160.1L1350.6,1160.1L1351.9,1160.1L1353.1,1160.1L1354.3,1160.1L1355.6,1160.1L1356.8,1160.1L1358.1,1167.6L1359.3,1160.1L1360.5,1160.1L1361.8,1160.1L1363,1160.1L1364.3,1160.1L1365.5,1160.1L1366.8,1160.1L1368,1154L1369.2,1145.4L1370.5,1154L1371.7,1160.1L1373,1166.4L1374.2,1160.1L1375.4,1154L1376.7,1145.4L1377.9,1160.1L1379.2,1160.1L1380.4,1167.6L1381.7,1160.1L1382.9,1139L1384.1,1154L1385.4,1154L1386.6,1154L1387.9,1154L1389.1,1154L1390.3,1154L1391.6,1139.5L1392.8,1154L1394.1,1141.9L1395.3,1139L1396.6,1154L1397.8,1154L1399,1159.4L1400.3,1154L1401.5,1146.5L1402.8,1154L1404,1147L1405.3,1154L1406.5,1154L1407.7,1154L1409,1160.1L1410.2,1154L1411.5,1154L1412.7,1160.1L1413.9,1160.1L1415.2,1160.1L1416.4,1160.1L1417.7,1160.1L1418.9,1160.1L1420.2,1160.1L1421.4,1160.1L1422.6,1160.1L1423.9,1160.1L1425.1,1160.1L1426.4,1160.1L1427.6,1160.1L1428.8,1160.1L1430.1,1160.1L1431.3,1160.1L1432.6,1160.1L1433.8,1160.1L1435.1,1160.1L1436.3,1160.1L1437.5,1160.1L1438.8,1154L1440,1145.6L1441.3,1154L1442.5,1154L1443.7,1160.1L1445,1160.1L1446.2,1160.1L1447.5,1154L1448.7,1154L1450,1160.1L1451.2,1160.1L1452.4,1160.1L1453.7,1160.1L1454.9,1154L1456.2,1160.1L1457.4,1160.1L1458.7,1160.1L1459.9,1154L1461.1,1154L1462.4,1166.4L1463.6,1160.1L1464.9,1160.1L1466.1,1160.1L1467.3,1160.1L1468.6,1166.4L1469.8,1160.1L1471.1,1166.9L1472.3,1160.1L1473.6,1160.1L1474.8,1154L1476,1160.1L1477.3,1166.4L1478.5,1160.1L1479.8,1154L1481,1154L1482.2,1160.1L1483.5,1160.1L1484.7,1160.1L1486,1167.1L1487.2,1160.1L1488.5,1160.1L1489.7,1160.1L1490.9,1160.1L1492.2,1160.1L1493.4,1160.1L1494.7,1160.1L1495.9,1160.1L1497.1,1160.1L1498.4,1154L1499.6,1154L1500.9,1154L1502.1,1154L1503.4,1154L1504.6,1160.1L1505.8,1160.1L1507.1,1160.1L1508.3,1160.1L1509.6,1160.1L1510.8,1160.1L1512.1,1160.1L1513.3,1176.9L1514.5,1160.1L1515.8,1154L1517,1154L1518.3,1154L1519.5,1154L1520.7,1154L1522,1154L1523.2,1154L1524.5,1154L1525.7,1154L1527,1154L1528.2,1160.1L1529.4,1160.1L1530.7,1160.1L1531.9,1160.1L1533.2,1160.1L1534.4,1160.1L1535.6,1160.1L1536.9,1160.1L1538.1,1160.1L1539.4,1160.1L1540.6,1160.1L1541.9,1160.1L1543.1,1160.1L1544.3,1154L1545.6,1154L1546.8,1154L1548.1,1154L1549.3,1154L1550.5,1154L1551.8,1160.1L1553,1160.1L1554.3,1160.1L1555.5,1160.1L1556.8,1154L1558,1154L1559.2,1154L1560.5,1154L1561.7,1154L1563,1154L1564.2,1154L1565.5,1154L1566.7,1154L1567.9,1160.1L1569.2,1160.1L1570.4,1160.1L1571.7,1160.1L1572.9,1160.1L1574.1,1160.1L1575.4,1160.1L1576.6,1160.1L1577.9,1160.1L1579.1,1160.1L1580.4,1160.1L1581.6,1160.1L1582.8,1154L1584.1,1154L1585.3,1154L1586.6,1154L1587.8,1154L1589,1154L1590.3,1154L1591.5,1154L1592.8,1154L1594,1154L1595.3,1154L1596.5,1154L1597.7,1154L1599,1154L1600.2,1154L1601.5,1154L1602.7,1154L1603.9,1154L1605.2,1154L1606.4,1154L1607.7,1154L1608.9,1154L1610.2,1154L1611.4,1154L1612.6,1154L1613.9,1154L1615.1,1154L1616.4,1154L1617.6,1154L1618.9,1154L1620.1,1154L1621.3,1154L1622.6,1154L1623.8,1154L1625.1,1154L1626.3,1154L1627.5,1154L1628.8,1154L1630,1154L1631.3,1154L1632.5,1154L1633.8,1154L1635,1154L1636.2,1154L1637.5,1154L1638.7,1154L1640,1154L1641.2,1154L1642.4,1154L1643.7,1154L1644.9,1154L1646.2,1154L1647.4,1154L1648.7,1154L1649.9,1154L1651.1,1154L1652.4,1154L1653.6,1154L1654.9,1154L1656.1,1160.1L1657.3,1160.1L1658.6,1160.1L1659.8,1160.1L1661.1,1160.1L1662.3,1160.1L1663.6,1160.1L1664.8,1160.1L1666,1160.1L1667.3,1160.1L1668.5,1160.1L1669.8,1160.1L1671,1160.1L1672.3,1160.1L1673.5,1160.1L1674.7,1160.1L1676,1154L1677.2,1154L1678.5,1160.1L1679.7,1160.1L1680.9,1160.1L1682.2,1160.1L1683.4,1160.1L1684.7,1160.1L1685.9,1160.1L1687.2,1160.1L1688.4,1160.1L1689.6,1160.1L1690.9,1160.1L1692.1,1160.1L1693.4,1160.1L1694.6,1160.1L1695.8,1160.1L1697.1,1160.1L1698.3,1160.1L1699.6,1154L1700.8,1154L1702.1,1154L1703.3,1154L1704.5,1154L1705.8,1154L1707,1154L1708.3,1154L1709.5,1154L1710.8,1154L1712,1154L1713.2,1154L1714.5,1154L1715.7,1154L1717,1154L1718.2,1154L1719.4,1154L1720.7,1154L1721.9,1154L1723.2,1154L1724.4,1154L1725.7,1154L1726.9,1154L1728.1,1154L1729.4,1154L1730.6,1154L1731.9,1154L1733.1,1154L1734.3,1154L1735.6,1154L1736.8,1160.1L1738.1,1160.1L1739.3,1160.1L1740.6,1160.1L1741.8,1160.1L1743,1160.1L1744.3,1160.1L1745.5,1160.1L1746.8,1160.1L1748,1160.1L1749.2,1160.1L1750.5,1160.1L1751.7,1160.1L1753,1160.1L1754.2,1160.1L1755.5,1160.1L1756.7,1160.1L1757.9,1160.1L1759.2,1160.1L1760.4,1160.1L1761.7,1160.1L1762.9,1160.1L1764.2,1160.1L1765.4,1160.1L1766.6,1160.1L1767.9,1160.1L1769.1,1160.1L1770.4,1160.1L1771.6,1160.1L1772.8,1160.1L1774.1,1160.1L1775.3,1160.1L1776.6,1160.1L1777.8,1160.1L1779.1,1160.1L1780.3,1160.1L1781.5,1160.1L1782.8,1160.1L1784,1154L1785.3,1154L1786.5,1154L1787.7,1154L1789,1154L1790.2,1160.1L1791.5,1160.1L1792.7,1160.1L1794,1160.1L1795.2,1160.1L1796.4,1160.1L1797.7,1160.1L1798.9,1160.1L1800.2,1160.1L1801.4,1154L1802.6,1154L1803.9,1154L1805.1,1154L1806.4,1154L1807.6,1160.1L1808.9,1160.1L1810.1,1160.1L1811.3,1150L1812.6,1150L1813.8,1160.1L1815.1,1160.1L1816.3,1160.1L1817.6,1160.1L1818.8,1160.1L1820,1160.1L1821.3,1160.1L1822.5,1160.1L1823.8,1160.1L1825,1160.1L1826.2,1160.1L1827.5,1160.1L1828.7,1160.1L1830,1160.1L1831.2,1160.1L1832.5,1160.1L1833.7,1160.1L1834.9,1160.1L1836.2,1160.1L1837.4,1160.1L1838.7,1160.1L1839.9,1160.1L1841.1,1160.1L1842.4,1160.1L1843.6,1160.1L1844.9,1160.1L1846.1,1160.1L1847.4,1160.1L1848.6,1160.1L1849.8,1160.1L1851.1,1160.1L1852.3,1160.1L1853.6,1160.1L1854.8,1160.1L1856,1160.1L1857.3,1160.1L1858.5,1160.1L1859.8,1160.1L1861,1160.1L1862.3,1160.1L1863.5,1160.1L1864.7,1160.1L1866,1160.1L1867.2,1160.1L1868.5,1160.1L1869.7,1160.1L1871,1160.1L1872.2,1160.1L1873.4,1160.1L1874.7,1160.1L1875.9,1160.1L1877.2,1160.1L1878.4,1160.1L1879.6,1160.1L1880.9,1160.1L1882.1,1160.1L1883.4,1160.1L1884.6,1154L1885.9,1154L1887.1,1154L1888.3,1154L1889.6,1154L1890.8,1154L1892.1,1154L1893.3,1154L1894.5,1154L1895.8,1154L1897,1154L1898.3,1154L1899.5,1154L1900.8,1154L1902,1154L1903.2,1154L1904.5,1154L1905.7,1154L1907,1154L1908.2,1154L1909.4,1154L1910.7,1154L1911.9,1154L1913.2,1154L1914.4,1154L1915.7,1154L1916.9,1154L1918.1,1154L1919.4,1154L1920.6,1154L1921.9,1154L1923.1,1154L1924.4,1154L1925.6,1154L1926.8,1154L1928.1,1154L1929.3,1154L1930.6,1154L1931.8,1154L1933,1154L1934.3,1154L1935.5,1154L1936.8,1154L1938,1154L1939.3,1154L1940.5,1154L1941.7,1154L1943,1154L1944.2,1154L1945.5,1154L1946.7,1154L1947.9,1154L1949.2,1154L1950.4,1154L1951.7,1154L1952.9,1154L1954.2,1154L1955.4,1154L1956.6,1154L1957.9,1154L1959.1,1154L1960.4,1154L1961.6,1154L1962.8,1154L1964.1,1154L1965.3,1154L1966.6,1154L1967.8,1154L1969.1,1154L1970.3,1154L1971.5,1154L1972.8,1154L1974,1154L1975.3,1154L1976.5,1154L1977.8,1154L1979,1154L1980.2,1154L1981.5,1154L1982.7,1154L1984,1154L1985.2,1154L1986.4,1154L1987.7,1154L1988.9,1154L1990.2,1154L1991.4,1154L1992.7,1154L1993.9,1154L1995.1,1154L1996.4,1154L1997.6,1154L1998.9,1154L2000.1,1154L2001.3,1154L2002.6,1154L2003.8,1154L2005.1,1154L2006.3,1154L2007.6,1154L2008.8,1154L2010,1154L2011.3,1154L2012.5,1154L2013.8,1154L2015,1154L2016.2,1154L2017.5,1154L2018.7,1154L2020,1154L2021.2,1154L2022.5,1154L2023.7,1154L2024.9,1154L2026.2,1154L2027.4,1154L2028.7,1154L2029.9,1154L2031.2,1154L2032.4,1154L2033.6,1154L2034.9,1154L2036.1,1154L2037.4,1154L2038.6,1154L2039.8,1154L2041.1,1154L2042.3,1154L2043.6,1154L2044.8,1154L2046.1,1154L2047.3,1154L2048.5,1154L2049.8,1154L2051,1154L2052.3,1154L2053.5,1154L2054.7,1154L2056,1154L2057.2,1154L2058.5,1154L2059.7,1154L2061,1154L2062.2,1154L2063.4,1154L2064.7,1154L2065.9,1154L2067.2,1154L2068.4,1154L2069.6,1154L2070.9,1154L2072.1,1154L2073.4,1154L2074.6,1154L2075.9,1154L2077.1,1154L2078.3,1160.1L2079.6,1160.1L2080.8,1160.1L2082.1,1160.1L2083.3,1160.1L2084.6,1160.1L2085.8,1160.1L2087,1160.1L2088.3,1160.1L2089.5,1160.1L2090.8,1160.1L2092,1160.1L2093.2,1160.1L2094.5,1160.1L2095.7,1160.1L2097,1160.1L2098.2,1160.1L2099.5,1160.1L2100.7,1160.1L2101.9,1160.1L2103.2,1154L2104.4,1154L2105.7,1154L2106.9,1154L2108.1,1154L2109.4,1154L2110.6,1154L2111.9,1154L2113.1,1154L2114.4,1154L2115.6,1154L2116.8,1154L2118.1,1154L2119.3,1154L2120.6,1154L2121.8,1154L2123,1154L2124.3,1154L2125.5,1154L2126.8,1154L2128,1154L2129.3,1154L2130.5,1154" fill="none" stroke="#ef843c" stroke-width="2.2" stroke-linejoin="round"/>
<rect x="1152" y="1292.8" width="30.8" height="8.4" rx="2.2" fill="#7eb26d"/><text x="1199.8" y="1303" font-size="26.4" fill="#3a404b" textLength="68" lengthAdjust="spacingAndGlyphs" stroke="#3a404b" stroke-width="0.35">major</text><rect x="1289.8" y="1292.8" width="30.8" height="8.4" rx="2.2" fill="#eab839"/><text x="1338.8" y="1303" font-size="26.4" fill="#3a404b" textLength="66.8" lengthAdjust="spacingAndGlyphs" stroke="#3a404b" stroke-width="0.35">minor</text><rect x="1428.3" y="1292.8" width="30.8" height="8.4" rx="2.2" fill="#6ed0e0"/><text x="1477.1" y="1303" font-size="26.4" fill="#3a404b" textLength="89.1" lengthAdjust="spacingAndGlyphs" stroke="#3a404b" stroke-width="0.35">weakcb</text><rect x="1588.3" y="1292.8" width="30.8" height="8.4" rx="2.2" fill="#ef843c"/><text x="1637.7" y="1303" font-size="26.4" fill="#3a404b" textLength="137.3" lengthAdjust="spacingAndGlyphs" stroke="#3a404b" stroke-width="0.35">incremental</text>
<text x="555" y="1393.8" font-size="29.8" fill="#3f444d" text-anchor="middle" textLength="287.5" lengthAdjust="spacingAndGlyphs" stroke="#3f444d" stroke-width="1.5" paint-order="stroke">Heap Memory Usage</text>
<g stroke="#000" stroke-opacity="0.08" stroke-width="2.2"><path d="M150.8,1453.9H1037.8"/><path d="M150.8,1498.1H1037.8"/><path d="M150.8,1542.3H1037.8"/><path d="M150.8,1586.4H1037.8"/><path d="M150.8,1630.6H1037.8"/><path d="M185.6,1453.2V1630.6"/><path d="M332.9,1453.2V1630.6"/><path d="M482.6,1453.2V1630.6"/><path d="M630,1453.2V1630.6"/><path d="M777.4,1453.2V1630.6"/><path d="M924.9,1453.2V1630.6"/></g>
<text x="139.3" y="1460.7" font-size="26.4" fill="#3a404b" text-anchor="end" textLength="93.4" lengthAdjust="spacingAndGlyphs" stroke="#3a404b" stroke-width="0.35">191 MiB</text><text x="139.3" y="1504.9" font-size="26.4" fill="#3a404b" text-anchor="end" textLength="93.4" lengthAdjust="spacingAndGlyphs" stroke="#3a404b" stroke-width="0.35">143 MiB</text><text x="139.3" y="1549.1" font-size="26.4" fill="#3a404b" text-anchor="end" textLength="100.4" lengthAdjust="spacingAndGlyphs" stroke="#3a404b" stroke-width="0.35">95.4 MiB</text><text x="139.3" y="1593.2" font-size="26.4" fill="#3a404b" text-anchor="end" textLength="100.4" lengthAdjust="spacingAndGlyphs" stroke="#3a404b" stroke-width="0.35">47.7 MiB</text><text x="139.3" y="1637.4" font-size="26.4" fill="#3a404b" text-anchor="end" textLength="38.2" lengthAdjust="spacingAndGlyphs" stroke="#3a404b" stroke-width="0.35">0 B</text>
<text x="185.6" y="1669.5" font-size="26.4" fill="#3a404b" text-anchor="middle" textLength="63.7" lengthAdjust="spacingAndGlyphs" stroke="#3a404b" stroke-width="0.35">12:00</text><text x="332.9" y="1669.5" font-size="26.4" fill="#3a404b" text-anchor="middle" textLength="63.7" lengthAdjust="spacingAndGlyphs" stroke="#3a404b" stroke-width="0.35">16:00</text><text x="482.6" y="1669.5" font-size="26.4" fill="#3a404b" text-anchor="middle" textLength="63.7" lengthAdjust="spacingAndGlyphs" stroke="#3a404b" stroke-width="0.35">20:00</text><text x="630" y="1669.5" font-size="26.4" fill="#3a404b" text-anchor="middle" textLength="63.7" lengthAdjust="spacingAndGlyphs" stroke="#3a404b" stroke-width="0.35">00:00</text><text x="777.4" y="1669.5" font-size="26.4" fill="#3a404b" text-anchor="middle" textLength="63.7" lengthAdjust="spacingAndGlyphs" stroke="#3a404b" stroke-width="0.35">04:00</text><text x="924.9" y="1669.5" font-size="26.4" fill="#3a404b" text-anchor="middle" textLength="63.7" lengthAdjust="spacingAndGlyphs" stroke="#3a404b" stroke-width="0.35">08:00</text>
<path d="M150.8,1563.8L152,1562.7L153.3,1563.3L154.5,1563.4L155.7,1563.5L157,1569.8L158.2,1563.7L159.4,1563.5L160.7,1563L161.9,1563.7L163.1,1564.1L164.3,1562.9L165.6,1563.3L166.8,1563.4L168,1563.2L169.3,1563.4L170.5,1563.4L171.7,1563.7L173,1563.2L174.2,1563.3L175.4,1564L176.7,1563.7L177.9,1569.1L179.1,1567.9L180.4,1564.6L181.6,1565.9L182.8,1563L184.1,1564.6L185.3,1562L186.5,1563.3L187.7,1566.4L189,1564L190.2,1563.2L191.4,1563.8L192.7,1565.3L193.9,1567.4L195.1,1560.4L196.4,1564L197.6,1563.8L198.8,1551.8L200.1,1564L201.3,1565.8L202.5,1567.1L203.8,1560.5L205,1561.3L206.2,1564.8L207.5,1561.6L208.7,1564.9L209.9,1562.7L211.1,1564.3L212.4,1562.3L213.6,1562.4L214.8,1570.4L216.1,1563.8L217.3,1567.9L218.5,1564.6L219.8,1566.2L221,1563L222.2,1565.6L223.5,1563.7L224.7,1559.1L225.9,1559.1L227.2,1564.6L228.4,1567L229.6,1562.9L230.9,1562.1L232.1,1563.3L233.3,1568.2L234.5,1561L235.8,1565.4L237,1566.5L238.2,1562.4L239.5,1562.4L240.7,1564.3L241.9,1564L243.2,1565.8L244.4,1565.3L245.6,1563.9L246.9,1565.6L248.1,1567.7L249.3,1564.2L250.6,1563.5L251.8,1567.7L253,1568.8L254.3,1567.9L255.5,1567.3L256.7,1565.2L257.9,1567.5L259.2,1566.6L260.4,1566.9L261.6,1566L262.9,1567.5L264.1,1567L265.3,1563.3L266.6,1566.8L267.8,1563.8L269,1565.5L270.3,1565L271.5,1566.6L272.7,1564.6L274,1564.5L275.2,1565.1L276.4,1564.4L277.7,1562.9L278.9,1566.4L280.1,1533.1L281.3,1566.2L282.6,1565.7L283.8,1566.6L285,1567L286.3,1553.9L287.5,1565.8L288.7,1566.5L290,1564.2L291.2,1564.5L292.4,1566.8L293.7,1568.8L294.9,1567.2L296.1,1552.3L297.4,1566.4L298.6,1569.9L299.8,1566.2L301.1,1567.4L302.3,1572.6L303.5,1572.8L304.7,1566L306,1562.5L307.2,1533.1L308.4,1570.2L309.7,1566.4L310.9,1563.4L312.1,1565.1L313.4,1537.1L314.6,1566.1L315.8,1564.8L317.1,1566.2L318.3,1552.3L319.5,1567.5L320.8,1566.9L322,1534.7L323.2,1569.4L324.5,1563.7L325.7,1564.9L326.9,1564.6L328.1,1563.7L329.4,1566.9L330.6,1565.7L331.8,1564.3L333.1,1567.9L334.3,1566L335.5,1566.9L336.8,1566L338,1564.6L339.2,1563L340.5,1566.9L341.7,1563.8L342.9,1567.9L344.2,1566L345.4,1565.8L346.6,1563.7L347.9,1569.3L349.1,1565.1L350.3,1566.7L351.5,1563.8L352.8,1568.2L354,1566.8L355.2,1567.7L356.5,1567.1L357.7,1565.5L358.9,1558.1L360.2,1565.5L361.4,1565.1L362.6,1565.1L363.9,1569.5L365.1,1567.5L366.3,1552.3L367.6,1566.4L368.8,1567.1L370,1565.8L371.3,1565.4L372.5,1565.4L373.7,1566L374.9,1569.8L376.2,1562.6L377.4,1565.2L378.6,1563.5L379.9,1569.1L381.1,1563.1L382.3,1565.7L383.6,1565.5L384.8,1564.9L386,1566.1L387.3,1564.1L388.5,1563.2L389.7,1567.3L391,1559.7L392.2,1558.1L393.4,1560.9L394.7,1563.2L395.9,1560.6L397.1,1568.6L398.3,1558.1L399.6,1563.8L400.8,1562.8L402,1564.3L403.3,1561.9L404.5,1565L405.7,1562.6L407,1564.5L408.2,1564.1L409.4,1561.5L410.7,1563.9L411.9,1563.5L413.1,1562.8L414.4,1561.6L415.6,1558.7L416.8,1560.7L418.1,1562.4L419.3,1564.4L420.5,1557.5L421.7,1559.2L423,1556.9L424.2,1535.9L425.4,1562.6L426.7,1559.6L427.9,1562.1L429.1,1561L430.4,1561.3L431.6,1561L432.8,1560.9L434.1,1560.8L435.3,1561.5L436.5,1560.6L437.8,1560.7L439,1561L440.2,1561.4L441.5,1560.3L442.7,1561.3L443.9,1561.3L445.1,1561L446.4,1560.2L447.6,1560.6L448.8,1560.8L450.1,1561L451.3,1560.4L452.5,1560.8L453.8,1561.2L455,1560.7L456.2,1560.8L457.5,1560.7L458.7,1560.4L459.9,1560.8L461.2,1560.8L462.4,1561.2L463.6,1560.6L464.9,1560.4L466.1,1560.7L467.3,1560.6L468.5,1561.1L469.8,1560.7L471,1560.3L472.2,1561.1L473.5,1560.9L474.7,1561L475.9,1567.5L477.2,1563.6L478.4,1560.5L479.6,1561.1L480.9,1560.9L482.1,1560.9L483.3,1560.8L484.6,1560.7L485.8,1561L487,1560.9L488.3,1561.1L489.5,1561.4L490.7,1560.5L491.9,1561.6L493.2,1561.3L494.4,1560.5L495.6,1560.8L496.9,1560.9L498.1,1561.3L499.3,1560.5L500.6,1561.5L501.8,1560.5L503,1560.7L504.3,1560.6L505.5,1560.4L506.7,1560.5L508,1560.7L509.2,1560.8L510.4,1560.6L511.7,1560.5L512.9,1559.9L514.1,1560.8L515.3,1561.6L516.6,1561.5L517.8,1561.3L519,1560.7L520.3,1561.1L521.5,1560.7L522.7,1560.7L524,1560.9L525.2,1561.2L526.4,1560.7L527.7,1560.6L528.9,1560.9L530.1,1560.3L531.4,1561.2L532.6,1561.2L533.8,1561.3L535.1,1561.2L536.3,1560.6L537.5,1560.8L538.7,1560.5L540,1561L541.2,1561.7L542.4,1560.5L543.7,1561.1L544.9,1561.4L546.1,1560.5L547.4,1561.7L548.6,1560.6L549.8,1560.8L551.1,1561L552.3,1561.2L553.5,1561.2L554.8,1560.8L556,1560.6L557.2,1560L558.5,1560.7L559.7,1561.3L560.9,1560.6L562.1,1561.1L563.4,1561.1L564.6,1560.9L565.8,1558.8L567.1,1560.6L568.3,1560.8L569.5,1560.2L570.8,1561.4L572,1560.5L573.2,1560.6L574.5,1560.6L575.7,1560.7L576.9,1561L578.2,1561.3L579.4,1559.8L580.6,1561.4L581.9,1560.7L583.1,1561.1L584.3,1561.1L585.5,1560.9L586.8,1561.1L588,1560.5L589.2,1561.3L590.5,1561.2L591.7,1560.9L592.9,1560.7L594.2,1561.2L595.4,1560.4L596.6,1561.1L597.9,1561.2L599.1,1561.8L600.3,1560.8L601.6,1561.4L602.8,1561.1L604,1560.2L605.2,1560.4L606.5,1560.6L607.7,1561.3L608.9,1561.4L610.2,1560.8L611.4,1561L612.6,1560.9L613.9,1559.9L615.1,1561.3L616.3,1561.4L617.6,1560L618.8,1560.5L620,1560.8L621.3,1560.8L622.5,1561.2L623.7,1561.3L625,1560.6L626.2,1561.1L627.4,1560.6L628.6,1560.7L629.9,1560.9L631.1,1561L632.3,1560.6L633.6,1561.5L634.8,1560.9L636,1560.8L637.3,1561.1L638.5,1560.6L639.7,1560.9L641,1559.9L642.2,1560.2L643.4,1560.7L644.7,1559.3L645.9,1560.7L647.1,1560.6L648.4,1561L649.6,1561.3L650.8,1560.6L652,1561.2L653.3,1561L654.5,1560.4L655.7,1560.3L657,1560.8L658.2,1561.2L659.4,1560.5L660.7,1560L661.9,1561.2L663.1,1561.3L664.4,1560.7L665.6,1561.2L666.8,1561.6L668.1,1560.5L669.3,1560.7L670.5,1560.7L671.8,1561.2L673,1560.5L674.2,1560.7L675.4,1561.3L676.7,1561.2L677.9,1561.2L679.1,1560.5L680.4,1561L681.6,1560.6L682.8,1561.2L684.1,1561L685.3,1561.1L686.5,1560.8L687.8,1560.9L689,1561L690.2,1560.7L691.5,1560.9L692.7,1560.5L693.9,1560.4L695.2,1560.2L696.4,1560.8L697.6,1561.1L698.8,1561L700.1,1560.1L701.3,1561L702.5,1560.8L703.8,1560.8L705,1560.9L706.2,1561L707.5,1561.3L708.7,1561.3L709.9,1561.5L711.2,1561L712.4,1560.6L713.6,1561.3L714.9,1560.4L716.1,1561.1L717.3,1560.4L718.6,1560.6L719.8,1561.3L721,1560.6L722.2,1561.2L723.5,1561L724.7,1560.8L725.9,1561.1L727.2,1567.1L728.4,1564.1L729.6,1560.6L730.9,1561.1L732.1,1560.7L733.3,1560.8L734.6,1561L735.8,1560.8L737,1560.9L738.3,1560.9L739.5,1560.9L740.7,1560.9L742,1561.3L743.2,1560.6L744.4,1560.7L745.6,1560.3L746.9,1559.9L748.1,1561.1L749.3,1561L750.6,1561.3L751.8,1560.3L753,1560.5L754.3,1560.6L755.5,1561.5L756.7,1561.1L758,1560.7L759.2,1560.8L760.4,1560.9L761.7,1560.4L762.9,1560.9L764.1,1560.4L765.4,1560.8L766.6,1561L767.8,1560.9L769,1560.5L770.3,1560.7L771.5,1561.1L772.7,1560.6L774,1560.3L775.2,1560.7L776.4,1560.6L777.7,1560.7L778.9,1560.8L780.1,1560.7L781.4,1560.7L782.6,1561.1L783.8,1561L785.1,1561.1L786.3,1560.8L787.5,1560.6L788.8,1560.9L790,1560.2L791.2,1560.4L792.4,1561.1L793.7,1560.6L794.9,1560.5L796.1,1560.4L797.4,1560.9L798.6,1560.3L799.8,1561.2L801.1,1560.8L802.3,1560.1L803.5,1560.6L804.8,1560.4L806,1561L807.2,1561L808.5,1560.6L809.7,1560.5L810.9,1560.9L812.2,1560.5L813.4,1561.2L814.6,1560.5L815.8,1560.9L817.1,1560L818.3,1560.9L819.5,1560.5L820.8,1560.8L822,1561.2L823.2,1560.7L824.5,1559.8L825.7,1560L826.9,1560.8L828.2,1560.4L829.4,1560.3L830.6,1561.1L831.9,1560.7L833.1,1561.1L834.3,1561.1L835.6,1560.6L836.8,1560.8L838,1560.3L839.2,1560.9L840.5,1560.7L841.7,1561.3L842.9,1561L844.2,1560.7L845.4,1560.5L846.6,1560.6L847.9,1560.7L849.1,1561L850.3,1561.1L851.6,1560.3L852.8,1560.3L854,1560.8L855.3,1560.3L856.5,1560.7L857.7,1560.1L859,1560.6L860.2,1560.6L861.4,1560.6L862.6,1560.5L863.9,1560.9L865.1,1561L866.3,1561L867.6,1560.6L868.8,1560.6L870,1560.5L871.3,1560.4L872.5,1560.6L873.7,1560.6L875,1560.6L876.2,1560.8L877.4,1561L878.7,1560.5L879.9,1560.6L881.1,1560.9L882.4,1560.8L883.6,1560.4L884.8,1560.3L886,1560.9L887.3,1560.3L888.5,1560.9L889.7,1560.3L891,1561.3L892.2,1560.3L893.4,1561.4L894.7,1561L895.9,1561.2L897.1,1561.2L898.4,1560.9L899.6,1560.6L900.8,1561.6L902.1,1560.6L903.3,1560.8L904.5,1560.2L905.8,1560.7L907,1560.9L908.2,1560.5L909.4,1560.8L910.7,1560.6L911.9,1560.6L913.1,1560.9L914.4,1561L915.6,1560.4L916.8,1560.1L918.1,1560.9L919.3,1560.3L920.5,1560.5L921.8,1560.4L923,1561.1L924.2,1561.5L925.5,1560.5L926.7,1561.5L927.9,1560.8L929.2,1560.6L930.4,1561.1L931.6,1561.4L932.8,1560.6L934.1,1560.6L935.3,1561.4L936.5,1561L937.8,1559.7L939,1560.6L940.2,1560.4L941.5,1560.5L942.7,1560.7L943.9,1560.5L945.2,1560.6L946.4,1561.5L947.6,1560.1L948.9,1560.8L950.1,1560.9L951.3,1560.2L952.6,1560.3L953.8,1560.3L955,1561L956.2,1560.3L957.5,1560.9L958.7,1560.3L959.9,1560.2L961.2,1560.9L962.4,1561L963.6,1560.2L964.9,1560.3L966.1,1560.8L967.3,1560.3L968.6,1560.3L969.8,1560.3L971,1560.8L972.3,1559.7L973.5,1561.3L974.7,1561.3L976,1561.1L977.2,1560.6L978.4,1560.4L979.6,1560.9L980.9,1560.3L982.1,1561.5L983.3,1560.5L984.6,1561.1L985.8,1561L987,1560.5L988.3,1560.6L989.5,1560.4L990.7,1560.7L992,1560.9L993.2,1560.7L994.4,1566.2L995.7,1560.7L996.9,1560L998.1,1559.8L999.4,1559.7L1000.6,1559.3L1001.8,1559.3L1003,1559.7L1004.3,1559.4L1005.5,1559.2L1006.7,1560L1008,1560.7L1009.2,1560.8L1010.4,1560.5L1011.7,1560.8L1012.9,1561L1014.1,1560.8L1015.4,1560.1L1016.6,1560.5L1017.8,1560.9L1019.1,1560.7L1020.3,1561L1021.5,1560.5L1022.8,1560.6L1024,1561L1025.2,1560.6L1026.4,1561L1027.7,1560L1028.9,1560.3L1030.1,1561L1031.4,1560.9L1032.6,1560.9L1033.8,1561L1035.1,1561L1036.3,1560.2L1036.3,1630.6 L150.8,1630.6 Z" fill="#7eb26d" fill-opacity="0.1" stroke="none"/><path d="M150.8,1563.8L152,1562.7L153.3,1563.3L154.5,1563.4L155.7,1563.5L157,1569.8L158.2,1563.7L159.4,1563.5L160.7,1563L161.9,1563.7L163.1,1564.1L164.3,1562.9L165.6,1563.3L166.8,1563.4L168,1563.2L169.3,1563.4L170.5,1563.4L171.7,1563.7L173,1563.2L174.2,1563.3L175.4,1564L176.7,1563.7L177.9,1569.1L179.1,1567.9L180.4,1564.6L181.6,1565.9L182.8,1563L184.1,1564.6L185.3,1562L186.5,1563.3L187.7,1566.4L189,1564L190.2,1563.2L191.4,1563.8L192.7,1565.3L193.9,1567.4L195.1,1560.4L196.4,1564L197.6,1563.8L198.8,1551.8L200.1,1564L201.3,1565.8L202.5,1567.1L203.8,1560.5L205,1561.3L206.2,1564.8L207.5,1561.6L208.7,1564.9L209.9,1562.7L211.1,1564.3L212.4,1562.3L213.6,1562.4L214.8,1570.4L216.1,1563.8L217.3,1567.9L218.5,1564.6L219.8,1566.2L221,1563L222.2,1565.6L223.5,1563.7L224.7,1559.1L225.9,1559.1L227.2,1564.6L228.4,1567L229.6,1562.9L230.9,1562.1L232.1,1563.3L233.3,1568.2L234.5,1561L235.8,1565.4L237,1566.5L238.2,1562.4L239.5,1562.4L240.7,1564.3L241.9,1564L243.2,1565.8L244.4,1565.3L245.6,1563.9L246.9,1565.6L248.1,1567.7L249.3,1564.2L250.6,1563.5L251.8,1567.7L253,1568.8L254.3,1567.9L255.5,1567.3L256.7,1565.2L257.9,1567.5L259.2,1566.6L260.4,1566.9L261.6,1566L262.9,1567.5L264.1,1567L265.3,1563.3L266.6,1566.8L267.8,1563.8L269,1565.5L270.3,1565L271.5,1566.6L272.7,1564.6L274,1564.5L275.2,1565.1L276.4,1564.4L277.7,1562.9L278.9,1566.4L280.1,1533.1L281.3,1566.2L282.6,1565.7L283.8,1566.6L285,1567L286.3,1553.9L287.5,1565.8L288.7,1566.5L290,1564.2L291.2,1564.5L292.4,1566.8L293.7,1568.8L294.9,1567.2L296.1,1552.3L297.4,1566.4L298.6,1569.9L299.8,1566.2L301.1,1567.4L302.3,1572.6L303.5,1572.8L304.7,1566L306,1562.5L307.2,1533.1L308.4,1570.2L309.7,1566.4L310.9,1563.4L312.1,1565.1L313.4,1537.1L314.6,1566.1L315.8,1564.8L317.1,1566.2L318.3,1552.3L319.5,1567.5L320.8,1566.9L322,1534.7L323.2,1569.4L324.5,1563.7L325.7,1564.9L326.9,1564.6L328.1,1563.7L329.4,1566.9L330.6,1565.7L331.8,1564.3L333.1,1567.9L334.3,1566L335.5,1566.9L336.8,1566L338,1564.6L339.2,1563L340.5,1566.9L341.7,1563.8L342.9,1567.9L344.2,1566L345.4,1565.8L346.6,1563.7L347.9,1569.3L349.1,1565.1L350.3,1566.7L351.5,1563.8L352.8,1568.2L354,1566.8L355.2,1567.7L356.5,1567.1L357.7,1565.5L358.9,1558.1L360.2,1565.5L361.4,1565.1L362.6,1565.1L363.9,1569.5L365.1,1567.5L366.3,1552.3L367.6,1566.4L368.8,1567.1L370,1565.8L371.3,1565.4L372.5,1565.4L373.7,1566L374.9,1569.8L376.2,1562.6L377.4,1565.2L378.6,1563.5L379.9,1569.1L381.1,1563.1L382.3,1565.7L383.6,1565.5L384.8,1564.9L386,1566.1L387.3,1564.1L388.5,1563.2L389.7,1567.3L391,1559.7L392.2,1558.1L393.4,1560.9L394.7,1563.2L395.9,1560.6L397.1,1568.6L398.3,1558.1L399.6,1563.8L400.8,1562.8L402,1564.3L403.3,1561.9L404.5,1565L405.7,1562.6L407,1564.5L408.2,1564.1L409.4,1561.5L410.7,1563.9L411.9,1563.5L413.1,1562.8L414.4,1561.6L415.6,1558.7L416.8,1560.7L418.1,1562.4L419.3,1564.4L420.5,1557.5L421.7,1559.2L423,1556.9L424.2,1535.9L425.4,1562.6L426.7,1559.6L427.9,1562.1L429.1,1561L430.4,1561.3L431.6,1561L432.8,1560.9L434.1,1560.8L435.3,1561.5L436.5,1560.6L437.8,1560.7L439,1561L440.2,1561.4L441.5,1560.3L442.7,1561.3L443.9,1561.3L445.1,1561L446.4,1560.2L447.6,1560.6L448.8,1560.8L450.1,1561L451.3,1560.4L452.5,1560.8L453.8,1561.2L455,1560.7L456.2,1560.8L457.5,1560.7L458.7,1560.4L459.9,1560.8L461.2,1560.8L462.4,1561.2L463.6,1560.6L464.9,1560.4L466.1,1560.7L467.3,1560.6L468.5,1561.1L469.8,1560.7L471,1560.3L472.2,1561.1L473.5,1560.9L474.7,1561L475.9,1567.5L477.2,1563.6L478.4,1560.5L479.6,1561.1L480.9,1560.9L482.1,1560.9L483.3,1560.8L484.6,1560.7L485.8,1561L487,1560.9L488.3,1561.1L489.5,1561.4L490.7,1560.5L491.9,1561.6L493.2,1561.3L494.4,1560.5L495.6,1560.8L496.9,1560.9L498.1,1561.3L499.3,1560.5L500.6,1561.5L501.8,1560.5L503,1560.7L504.3,1560.6L505.5,1560.4L506.7,1560.5L508,1560.7L509.2,1560.8L510.4,1560.6L511.7,1560.5L512.9,1559.9L514.1,1560.8L515.3,1561.6L516.6,1561.5L517.8,1561.3L519,1560.7L520.3,1561.1L521.5,1560.7L522.7,1560.7L524,1560.9L525.2,1561.2L526.4,1560.7L527.7,1560.6L528.9,1560.9L530.1,1560.3L531.4,1561.2L532.6,1561.2L533.8,1561.3L535.1,1561.2L536.3,1560.6L537.5,1560.8L538.7,1560.5L540,1561L541.2,1561.7L542.4,1560.5L543.7,1561.1L544.9,1561.4L546.1,1560.5L547.4,1561.7L548.6,1560.6L549.8,1560.8L551.1,1561L552.3,1561.2L553.5,1561.2L554.8,1560.8L556,1560.6L557.2,1560L558.5,1560.7L559.7,1561.3L560.9,1560.6L562.1,1561.1L563.4,1561.1L564.6,1560.9L565.8,1558.8L567.1,1560.6L568.3,1560.8L569.5,1560.2L570.8,1561.4L572,1560.5L573.2,1560.6L574.5,1560.6L575.7,1560.7L576.9,1561L578.2,1561.3L579.4,1559.8L580.6,1561.4L581.9,1560.7L583.1,1561.1L584.3,1561.1L585.5,1560.9L586.8,1561.1L588,1560.5L589.2,1561.3L590.5,1561.2L591.7,1560.9L592.9,1560.7L594.2,1561.2L595.4,1560.4L596.6,1561.1L597.9,1561.2L599.1,1561.8L600.3,1560.8L601.6,1561.4L602.8,1561.1L604,1560.2L605.2,1560.4L606.5,1560.6L607.7,1561.3L608.9,1561.4L610.2,1560.8L611.4,1561L612.6,1560.9L613.9,1559.9L615.1,1561.3L616.3,1561.4L617.6,1560L618.8,1560.5L620,1560.8L621.3,1560.8L622.5,1561.2L623.7,1561.3L625,1560.6L626.2,1561.1L627.4,1560.6L628.6,1560.7L629.9,1560.9L631.1,1561L632.3,1560.6L633.6,1561.5L634.8,1560.9L636,1560.8L637.3,1561.1L638.5,1560.6L639.7,1560.9L641,1559.9L642.2,1560.2L643.4,1560.7L644.7,1559.3L645.9,1560.7L647.1,1560.6L648.4,1561L649.6,1561.3L650.8,1560.6L652,1561.2L653.3,1561L654.5,1560.4L655.7,1560.3L657,1560.8L658.2,1561.2L659.4,1560.5L660.7,1560L661.9,1561.2L663.1,1561.3L664.4,1560.7L665.6,1561.2L666.8,1561.6L668.1,1560.5L669.3,1560.7L670.5,1560.7L671.8,1561.2L673,1560.5L674.2,1560.7L675.4,1561.3L676.7,1561.2L677.9,1561.2L679.1,1560.5L680.4,1561L681.6,1560.6L682.8,1561.2L684.1,1561L685.3,1561.1L686.5,1560.8L687.8,1560.9L689,1561L690.2,1560.7L691.5,1560.9L692.7,1560.5L693.9,1560.4L695.2,1560.2L696.4,1560.8L697.6,1561.1L698.8,1561L700.1,1560.1L701.3,1561L702.5,1560.8L703.8,1560.8L705,1560.9L706.2,1561L707.5,1561.3L708.7,1561.3L709.9,1561.5L711.2,1561L712.4,1560.6L713.6,1561.3L714.9,1560.4L716.1,1561.1L717.3,1560.4L718.6,1560.6L719.8,1561.3L721,1560.6L722.2,1561.2L723.5,1561L724.7,1560.8L725.9,1561.1L727.2,1567.1L728.4,1564.1L729.6,1560.6L730.9,1561.1L732.1,1560.7L733.3,1560.8L734.6,1561L735.8,1560.8L737,1560.9L738.3,1560.9L739.5,1560.9L740.7,1560.9L742,1561.3L743.2,1560.6L744.4,1560.7L745.6,1560.3L746.9,1559.9L748.1,1561.1L749.3,1561L750.6,1561.3L751.8,1560.3L753,1560.5L754.3,1560.6L755.5,1561.5L756.7,1561.1L758,1560.7L759.2,1560.8L760.4,1560.9L761.7,1560.4L762.9,1560.9L764.1,1560.4L765.4,1560.8L766.6,1561L767.8,1560.9L769,1560.5L770.3,1560.7L771.5,1561.1L772.7,1560.6L774,1560.3L775.2,1560.7L776.4,1560.6L777.7,1560.7L778.9,1560.8L780.1,1560.7L781.4,1560.7L782.6,1561.1L783.8,1561L785.1,1561.1L786.3,1560.8L787.5,1560.6L788.8,1560.9L790,1560.2L791.2,1560.4L792.4,1561.1L793.7,1560.6L794.9,1560.5L796.1,1560.4L797.4,1560.9L798.6,1560.3L799.8,1561.2L801.1,1560.8L802.3,1560.1L803.5,1560.6L804.8,1560.4L806,1561L807.2,1561L808.5,1560.6L809.7,1560.5L810.9,1560.9L812.2,1560.5L813.4,1561.2L814.6,1560.5L815.8,1560.9L817.1,1560L818.3,1560.9L819.5,1560.5L820.8,1560.8L822,1561.2L823.2,1560.7L824.5,1559.8L825.7,1560L826.9,1560.8L828.2,1560.4L829.4,1560.3L830.6,1561.1L831.9,1560.7L833.1,1561.1L834.3,1561.1L835.6,1560.6L836.8,1560.8L838,1560.3L839.2,1560.9L840.5,1560.7L841.7,1561.3L842.9,1561L844.2,1560.7L845.4,1560.5L846.6,1560.6L847.9,1560.7L849.1,1561L850.3,1561.1L851.6,1560.3L852.8,1560.3L854,1560.8L855.3,1560.3L856.5,1560.7L857.7,1560.1L859,1560.6L860.2,1560.6L861.4,1560.6L862.6,1560.5L863.9,1560.9L865.1,1561L866.3,1561L867.6,1560.6L868.8,1560.6L870,1560.5L871.3,1560.4L872.5,1560.6L873.7,1560.6L875,1560.6L876.2,1560.8L877.4,1561L878.7,1560.5L879.9,1560.6L881.1,1560.9L882.4,1560.8L883.6,1560.4L884.8,1560.3L886,1560.9L887.3,1560.3L888.5,1560.9L889.7,1560.3L891,1561.3L892.2,1560.3L893.4,1561.4L894.7,1561L895.9,1561.2L897.1,1561.2L898.4,1560.9L899.6,1560.6L900.8,1561.6L902.1,1560.6L903.3,1560.8L904.5,1560.2L905.8,1560.7L907,1560.9L908.2,1560.5L909.4,1560.8L910.7,1560.6L911.9,1560.6L913.1,1560.9L914.4,1561L915.6,1560.4L916.8,1560.1L918.1,1560.9L919.3,1560.3L920.5,1560.5L921.8,1560.4L923,1561.1L924.2,1561.5L925.5,1560.5L926.7,1561.5L927.9,1560.8L929.2,1560.6L930.4,1561.1L931.6,1561.4L932.8,1560.6L934.1,1560.6L935.3,1561.4L936.5,1561L937.8,1559.7L939,1560.6L940.2,1560.4L941.5,1560.5L942.7,1560.7L943.9,1560.5L945.2,1560.6L946.4,1561.5L947.6,1560.1L948.9,1560.8L950.1,1560.9L951.3,1560.2L952.6,1560.3L953.8,1560.3L955,1561L956.2,1560.3L957.5,1560.9L958.7,1560.3L959.9,1560.2L961.2,1560.9L962.4,1561L963.6,1560.2L964.9,1560.3L966.1,1560.8L967.3,1560.3L968.6,1560.3L969.8,1560.3L971,1560.8L972.3,1559.7L973.5,1561.3L974.7,1561.3L976,1561.1L977.2,1560.6L978.4,1560.4L979.6,1560.9L980.9,1560.3L982.1,1561.5L983.3,1560.5L984.6,1561.1L985.8,1561L987,1560.5L988.3,1560.6L989.5,1560.4L990.7,1560.7L992,1560.9L993.2,1560.7L994.4,1566.2L995.7,1560.7L996.9,1560L998.1,1559.8L999.4,1559.7L1000.6,1559.3L1001.8,1559.3L1003,1559.7L1004.3,1559.4L1005.5,1559.2L1006.7,1560L1008,1560.7L1009.2,1560.8L1010.4,1560.5L1011.7,1560.8L1012.9,1561L1014.1,1560.8L1015.4,1560.1L1016.6,1560.5L1017.8,1560.9L1019.1,1560.7L1020.3,1561L1021.5,1560.5L1022.8,1560.6L1024,1561L1025.2,1560.6L1026.4,1561L1027.7,1560L1028.9,1560.3L1030.1,1561L1031.4,1560.9L1032.6,1560.9L1033.8,1561L1035.1,1561L1036.3,1560.2" fill="none" stroke="#7eb26d" stroke-width="2.2" stroke-linejoin="round"/>
<path d="M150.8,1577.3L152,1578L153.3,1578L154.5,1578L155.7,1578L157,1578L158.2,1578L159.4,1572.8L160.7,1578L161.9,1576.7L163.1,1578L164.3,1578L165.6,1578L166.8,1578L168,1578L169.3,1578L170.5,1578L171.7,1578L173,1578L174.2,1578L175.4,1578L176.7,1577.1L177.9,1578L179.1,1578L180.4,1572.6L181.6,1570.6L182.8,1573.6L184.1,1576.4L185.3,1576.4L186.5,1578L187.7,1577.1L189,1574.4L190.2,1578L191.4,1577.1L192.7,1573L193.9,1573.6L195.1,1578L196.4,1577.6L197.6,1577.2L198.8,1577.8L200.1,1578L201.3,1578L202.5,1574.6L203.8,1574.9L205,1577.2L206.2,1578L207.5,1576.3L208.7,1578L209.9,1570.7L211.1,1578L212.4,1574.5L213.6,1577.9L214.8,1577.9L216.1,1576.8L217.3,1574.9L218.5,1576.6L219.8,1577.6L221,1578L222.2,1576.5L223.5,1577L224.7,1573.8L225.9,1575.8L227.2,1575L228.4,1577.2L229.6,1577.3L230.9,1575.7L232.1,1572.2L233.3,1574.6L234.5,1573.3L235.8,1578L237,1573.6L238.2,1576.4L239.5,1575.1L240.7,1578L241.9,1577.4L243.2,1573.8L244.4,1578L245.6,1573.3L246.9,1577.7L248.1,1572.6L249.3,1575L250.6,1572.1L251.8,1578L253,1573.6L254.3,1577.5L255.5,1578L256.7,1578L257.9,1576.2L259.2,1578L260.4,1572.7L261.6,1578L262.9,1578L264.1,1575.8L265.3,1578L266.6,1576.7L267.8,1571.2L269,1574.9L270.3,1577.6L271.5,1577.2L272.7,1577.9L274,1574L275.2,1576.5L276.4,1574.7L277.7,1578L278.9,1578L280.1,1563.9L281.3,1576.3L282.6,1575.2L283.8,1578L285,1577L286.3,1578L287.5,1577.7L288.7,1575.4L290,1577.7L291.2,1576.5L292.4,1575.2L293.7,1577.3L294.9,1563.9L296.1,1574.3L297.4,1578L298.6,1575.7L299.8,1575.3L301.1,1578L302.3,1577.7L303.5,1574.9L304.7,1576.3L306,1575.2L307.2,1578L308.4,1576.6L309.7,1578L310.9,1577.6L312.1,1572.6L313.4,1565.1L314.6,1577.4L315.8,1570.7L317.1,1574L318.3,1576.1L319.5,1578L320.8,1571.8L322,1562.8L323.2,1573.4L324.5,1578L325.7,1577.8L326.9,1578L328.1,1573.4L329.4,1574.8L330.6,1572.3L331.8,1577.4L333.1,1572.8L334.3,1576.9L335.5,1578L336.8,1575.4L338,1574.1L339.2,1574.8L340.5,1576.6L341.7,1573.7L342.9,1577.8L344.2,1576.1L345.4,1574.8L346.6,1575L347.9,1578L349.1,1578L350.3,1566.3L351.5,1574.3L352.8,1577.1L354,1578L355.2,1576.6L356.5,1574.7L357.7,1578L358.9,1575.2L360.2,1571.1L361.4,1574.4L362.6,1578L363.9,1577.9L365.1,1575.4L366.3,1578L367.6,1575.3L368.8,1574.8L370,1578L371.3,1576.7L372.5,1577L373.7,1574.9L374.9,1578L376.2,1575.1L377.4,1576.7L378.6,1577.2L379.9,1576.2L381.1,1576.1L382.3,1574.8L383.6,1577.5L384.8,1574.2L386,1578L387.3,1576.7L388.5,1572.9L389.7,1576.1L391,1576.7L392.2,1578L393.4,1577.7L394.7,1573.8L395.9,1577.9L397.1,1578L398.3,1574.1L399.6,1578L400.8,1575.3L402,1578L403.3,1578L404.5,1575.8L405.7,1576.3L407,1578L408.2,1578L409.4,1574.7L410.7,1576.3L411.9,1572.2L413.1,1576.4L414.4,1577.1L415.6,1573.4L416.8,1573.4L418.1,1578L419.3,1576.5L420.5,1576.6L421.7,1576.4L423,1574.2L424.2,1568.2L425.4,1578L426.7,1578L427.9,1577.9L429.1,1578L430.4,1578L431.6,1578L432.8,1578L434.1,1578L435.3,1578L436.5,1578L437.8,1578L439,1568.2L440.2,1572.8L441.5,1572.8L442.7,1572.8L443.9,1572.8L445.1,1572.8L446.4,1572.8L447.6,1572.8L448.8,1572.8L450.1,1572.8L451.3,1572.8L452.5,1572.8L453.8,1572.8L455,1578L456.2,1578L457.5,1578L458.7,1578L459.9,1578L461.2,1578L462.4,1572.8L463.6,1572.8L464.9,1572.8L466.1,1578L467.3,1578L468.5,1578L469.8,1578L471,1578L472.2,1578L473.5,1578L474.7,1578L475.9,1578L477.2,1572.4L478.4,1569.8L479.6,1572.4L480.9,1572.4L482.1,1572.4L483.3,1572.4L484.6,1572.4L485.8,1572.4L487,1572.4L488.3,1572.4L489.5,1572.4L490.7,1572.4L491.9,1572.4L493.2,1578L494.4,1578L495.6,1578L496.9,1578L498.1,1578L499.3,1578L500.6,1578L501.8,1578L503,1578L504.3,1578L505.5,1578L506.7,1578L508,1578L509.2,1578L510.4,1578L511.7,1578L512.9,1578L514.1,1578L515.3,1578L516.6,1578L517.8,1578L519,1578L520.3,1578L521.5,1578L522.7,1578L524,1578L525.2,1578L526.4,1578L527.7,1578L528.9,1578L530.1,1578L531.4,1578L532.6,1578L533.8,1578L535.1,1578L536.3,1578L537.5,1578L538.7,1578L540,1578L541.2,1578L542.4,1578L543.7,1578L544.9,1578L546.1,1578L547.4,1578L548.6,1578L549.8,1578L551.1,1578L552.3,1578L553.5,1578L554.8,1578L556,1578L557.2,1578L558.5,1578L559.7,1578L560.9,1578L562.1,1578L563.4,1578L564.6,1572.6L565.8,1572.6L567.1,1572.6L568.3,1572.6L569.5,1572.6L570.8,1572.6L572,1572.6L573.2,1572.6L574.5,1572.6L575.7,1572.6L576.9,1572.6L578.2,1572.6L579.4,1572.6L580.6,1572.6L581.9,1572.6L583.1,1572.6L584.3,1572.6L585.5,1578L586.8,1578L588,1569.1L589.2,1573.1L590.5,1573.1L591.7,1573.1L592.9,1573.1L594.2,1573.1L595.4,1573.1L596.6,1573.1L597.9,1573.1L599.1,1573.1L600.3,1573.1L601.6,1573.1L602.8,1573.1L604,1573.1L605.2,1573.1L606.5,1573.1L607.7,1573.1L608.9,1577.5L610.2,1577.5L611.4,1577.5L612.6,1577.5L613.9,1577.5L615.1,1577.7L616.3,1577.7L617.6,1577.7L618.8,1577.7L620,1577.7L621.3,1577.7L622.5,1577.7L623.7,1577.7L625,1577.7L626.2,1577.7L627.4,1577.7L628.6,1577.7L629.9,1577.7L631.1,1577.7L632.3,1577.7L633.6,1577.7L634.8,1577.7L636,1577.7L637.3,1577.7L638.5,1577.7L639.7,1577.7L641,1577.7L642.2,1577.7L643.4,1573.6L644.7,1573.8L645.9,1575.3L647.1,1572.5L648.4,1573.4L649.6,1574.2L650.8,1574.6L652,1574.2L653.3,1574.1L654.5,1574.5L655.7,1574L657,1573.9L658.2,1574.4L659.4,1573.1L660.7,1574.1L661.9,1573.5L663.1,1574.3L664.4,1574L665.6,1575L666.8,1574.5L668.1,1574.3L669.3,1573.5L670.5,1574.5L671.8,1572.6L673,1574.7L674.2,1574.7L675.4,1574.2L676.7,1574.6L677.9,1573.1L679.1,1573.8L680.4,1573.5L681.6,1574.5L682.8,1574.5L684.1,1575.2L685.3,1573.4L686.5,1573.5L687.8,1574.4L689,1573.7L690.2,1577.7L691.5,1577.7L692.7,1577.7L693.9,1577.7L695.2,1577.7L696.4,1577.7L697.6,1577.7L698.8,1574.1L700.1,1574.1L701.3,1574.1L702.5,1574.1L703.8,1574.1L705,1574.1L706.2,1574.1L707.5,1574.1L708.7,1574.1L709.9,1574.1L711.2,1577.7L712.4,1577.7L713.6,1577.7L714.9,1577.7L716.1,1577.7L717.3,1577.7L718.6,1568.4L719.8,1568.4L721,1574.1L722.2,1574.1L723.5,1574.1L724.7,1574.1L725.9,1574.1L727.2,1574.1L728.4,1574.1L729.6,1574.1L730.9,1574.1L732.1,1574.1L733.3,1574.1L734.6,1574.1L735.8,1574.1L737,1574.1L738.3,1574.1L739.5,1574.1L740.7,1574.1L742,1574.1L743.2,1574.1L744.4,1574.1L745.6,1574.1L746.9,1574.1L748.1,1574.1L749.3,1574.1L750.6,1574.1L751.8,1574.1L753,1574.1L754.3,1574.1L755.5,1574.1L756.7,1574.1L758,1574.1L759.2,1574.1L760.4,1574.1L761.7,1574.1L762.9,1574.1L764.1,1574.1L765.4,1574.1L766.6,1574.1L767.8,1574.1L769,1574.1L770.3,1574.1L771.5,1574.1L772.7,1574.1L774,1574.1L775.2,1574.1L776.4,1574.1L777.7,1574.1L778.9,1574.1L780.1,1574.1L781.4,1574.1L782.6,1574.1L783.8,1574.1L785.1,1574.1L786.3,1574.1L787.5,1574.1L788.8,1574.1L790,1574.1L791.2,1574.1L792.4,1577.7L793.7,1577.7L794.9,1577.7L796.1,1577.7L797.4,1577.7L798.6,1577.7L799.8,1577.7L801.1,1577.7L802.3,1577.7L803.5,1577.7L804.8,1577.7L806,1577.7L807.2,1577.7L808.5,1577.7L809.7,1577.7L810.9,1577.7L812.2,1577.7L813.4,1577.7L814.6,1577.7L815.8,1577.7L817.1,1577.7L818.3,1577.7L819.5,1577.7L820.8,1577.7L822,1577.7L823.2,1577.7L824.5,1577.7L825.7,1577.7L826.9,1577.7L828.2,1577.7L829.4,1577.7L830.6,1577.7L831.9,1577.7L833.1,1577.7L834.3,1577.7L835.6,1577.7L836.8,1577.7L838,1577.7L839.2,1577.7L840.5,1577.7L841.7,1577.7L842.9,1577.7L844.2,1577.7L845.4,1577.7L846.6,1577.7L847.9,1577.7L849.1,1577.7L850.3,1577.7L851.6,1577.7L852.8,1577.7L854,1577.7L855.3,1577.7L856.5,1577.7L857.7,1577.7L859,1577.7L860.2,1577.7L861.4,1577.7L862.6,1577.7L863.9,1577.7L865.1,1577.7L866.3,1577.7L867.6,1577.7L868.8,1577.7L870,1577.7L871.3,1577.7L872.5,1577.7L873.7,1577.7L875,1577.7L876.2,1577.7L877.4,1577.7L878.7,1577.7L879.9,1577.7L881.1,1577.7L882.4,1577.7L883.6,1577.7L884.8,1577.7L886,1577.7L887.3,1577.7L888.5,1577.7L889.7,1577.7L891,1577.7L892.2,1577.7L893.4,1577.7L894.7,1577.7L895.9,1577.7L897.1,1577.7L898.4,1577.7L899.6,1577.7L900.8,1577.7L902.1,1577.7L903.3,1577.7L904.5,1577.7L905.8,1577.7L907,1577.7L908.2,1577.7L909.4,1577.7L910.7,1577.7L911.9,1577.7L913.1,1577.7L914.4,1577.7L915.6,1577.7L916.8,1577.7L918.1,1577.7L919.3,1577.7L920.5,1577.7L921.8,1577.7L923,1577.7L924.2,1577.7L925.5,1577.7L926.7,1577.7L927.9,1577.7L929.2,1577.7L930.4,1577.7L931.6,1577.7L932.8,1577.7L934.1,1577.7L935.3,1577.7L936.5,1577.7L937.8,1577.7L939,1577.7L940.2,1577.7L941.5,1577.7L942.7,1577.7L943.9,1577.7L945.2,1577.7L946.4,1577.7L947.6,1577.7L948.9,1577.7L950.1,1577.7L951.3,1577.7L952.6,1577.7L953.8,1577.7L955,1577.7L956.2,1577.7L957.5,1577.7L958.7,1577.7L959.9,1577.7L961.2,1577.7L962.4,1577.7L963.6,1577.7L964.9,1577.7L966.1,1577.7L967.3,1577.7L968.6,1577.7L969.8,1577.7L971,1577.7L972.3,1577.7L973.5,1577.7L974.7,1577.7L976,1577.7L977.2,1577.7L978.4,1577.7L979.6,1577.7L980.9,1570.9L982.1,1572.1L983.3,1571.5L984.6,1571L985.8,1572.5L987,1571.4L988.3,1570.2L989.5,1571.3L990.7,1571.5L992,1570.9L993.2,1572.5L994.4,1571.8L995.7,1572.2L996.9,1572.3L998.1,1571.3L999.4,1571.3L1000.6,1571.6L1001.8,1571.2L1003,1572.9L1004.3,1570.8L1005.5,1570.3L1006.7,1572.1L1008,1571.4L1009.2,1577.2L1010.4,1577.2L1011.7,1577.2L1012.9,1577.2L1014.1,1577.2L1015.4,1577.2L1016.6,1577.2L1017.8,1577.2L1019.1,1577.2L1020.3,1577.2L1021.5,1577.2L1022.8,1577.2L1024,1577.2L1025.2,1577.2L1026.4,1577.2L1027.7,1577.2L1028.9,1577.2L1030.1,1577.2L1031.4,1577.2L1032.6,1577.2L1033.8,1577.2L1035.1,1577.2L1036.3,1577.2L1036.3,1630.6 L150.8,1630.6 Z" fill="#eab839" fill-opacity="0.1" stroke="none"/><path d="M150.8,1577.3L152,1578L153.3,1578L154.5,1578L155.7,1578L157,1578L158.2,1578L159.4,1572.8L160.7,1578L161.9,1576.7L163.1,1578L164.3,1578L165.6,1578L166.8,1578L168,1578L169.3,1578L170.5,1578L171.7,1578L173,1578L174.2,1578L175.4,1578L176.7,1577.1L177.9,1578L179.1,1578L180.4,1572.6L181.6,1570.6L182.8,1573.6L184.1,1576.4L185.3,1576.4L186.5,1578L187.7,1577.1L189,1574.4L190.2,1578L191.4,1577.1L192.7,1573L193.9,1573.6L195.1,1578L196.4,1577.6L197.6,1577.2L198.8,1577.8L200.1,1578L201.3,1578L202.5,1574.6L203.8,1574.9L205,1577.2L206.2,1578L207.5,1576.3L208.7,1578L209.9,1570.7L211.1,1578L212.4,1574.5L213.6,1577.9L214.8,1577.9L216.1,1576.8L217.3,1574.9L218.5,1576.6L219.8,1577.6L221,1578L222.2,1576.5L223.5,1577L224.7,1573.8L225.9,1575.8L227.2,1575L228.4,1577.2L229.6,1577.3L230.9,1575.7L232.1,1572.2L233.3,1574.6L234.5,1573.3L235.8,1578L237,1573.6L238.2,1576.4L239.5,1575.1L240.7,1578L241.9,1577.4L243.2,1573.8L244.4,1578L245.6,1573.3L246.9,1577.7L248.1,1572.6L249.3,1575L250.6,1572.1L251.8,1578L253,1573.6L254.3,1577.5L255.5,1578L256.7,1578L257.9,1576.2L259.2,1578L260.4,1572.7L261.6,1578L262.9,1578L264.1,1575.8L265.3,1578L266.6,1576.7L267.8,1571.2L269,1574.9L270.3,1577.6L271.5,1577.2L272.7,1577.9L274,1574L275.2,1576.5L276.4,1574.7L277.7,1578L278.9,1578L280.1,1563.9L281.3,1576.3L282.6,1575.2L283.8,1578L285,1577L286.3,1578L287.5,1577.7L288.7,1575.4L290,1577.7L291.2,1576.5L292.4,1575.2L293.7,1577.3L294.9,1563.9L296.1,1574.3L297.4,1578L298.6,1575.7L299.8,1575.3L301.1,1578L302.3,1577.7L303.5,1574.9L304.7,1576.3L306,1575.2L307.2,1578L308.4,1576.6L309.7,1578L310.9,1577.6L312.1,1572.6L313.4,1565.1L314.6,1577.4L315.8,1570.7L317.1,1574L318.3,1576.1L319.5,1578L320.8,1571.8L322,1562.8L323.2,1573.4L324.5,1578L325.7,1577.8L326.9,1578L328.1,1573.4L329.4,1574.8L330.6,1572.3L331.8,1577.4L333.1,1572.8L334.3,1576.9L335.5,1578L336.8,1575.4L338,1574.1L339.2,1574.8L340.5,1576.6L341.7,1573.7L342.9,1577.8L344.2,1576.1L345.4,1574.8L346.6,1575L347.9,1578L349.1,1578L350.3,1566.3L351.5,1574.3L352.8,1577.1L354,1578L355.2,1576.6L356.5,1574.7L357.7,1578L358.9,1575.2L360.2,1571.1L361.4,1574.4L362.6,1578L363.9,1577.9L365.1,1575.4L366.3,1578L367.6,1575.3L368.8,1574.8L370,1578L371.3,1576.7L372.5,1577L373.7,1574.9L374.9,1578L376.2,1575.1L377.4,1576.7L378.6,1577.2L379.9,1576.2L381.1,1576.1L382.3,1574.8L383.6,1577.5L384.8,1574.2L386,1578L387.3,1576.7L388.5,1572.9L389.7,1576.1L391,1576.7L392.2,1578L393.4,1577.7L394.7,1573.8L395.9,1577.9L397.1,1578L398.3,1574.1L399.6,1578L400.8,1575.3L402,1578L403.3,1578L404.5,1575.8L405.7,1576.3L407,1578L408.2,1578L409.4,1574.7L410.7,1576.3L411.9,1572.2L413.1,1576.4L414.4,1577.1L415.6,1573.4L416.8,1573.4L418.1,1578L419.3,1576.5L420.5,1576.6L421.7,1576.4L423,1574.2L424.2,1568.2L425.4,1578L426.7,1578L427.9,1577.9L429.1,1578L430.4,1578L431.6,1578L432.8,1578L434.1,1578L435.3,1578L436.5,1578L437.8,1578L439,1568.2L440.2,1572.8L441.5,1572.8L442.7,1572.8L443.9,1572.8L445.1,1572.8L446.4,1572.8L447.6,1572.8L448.8,1572.8L450.1,1572.8L451.3,1572.8L452.5,1572.8L453.8,1572.8L455,1578L456.2,1578L457.5,1578L458.7,1578L459.9,1578L461.2,1578L462.4,1572.8L463.6,1572.8L464.9,1572.8L466.1,1578L467.3,1578L468.5,1578L469.8,1578L471,1578L472.2,1578L473.5,1578L474.7,1578L475.9,1578L477.2,1572.4L478.4,1569.8L479.6,1572.4L480.9,1572.4L482.1,1572.4L483.3,1572.4L484.6,1572.4L485.8,1572.4L487,1572.4L488.3,1572.4L489.5,1572.4L490.7,1572.4L491.9,1572.4L493.2,1578L494.4,1578L495.6,1578L496.9,1578L498.1,1578L499.3,1578L500.6,1578L501.8,1578L503,1578L504.3,1578L505.5,1578L506.7,1578L508,1578L509.2,1578L510.4,1578L511.7,1578L512.9,1578L514.1,1578L515.3,1578L516.6,1578L517.8,1578L519,1578L520.3,1578L521.5,1578L522.7,1578L524,1578L525.2,1578L526.4,1578L527.7,1578L528.9,1578L530.1,1578L531.4,1578L532.6,1578L533.8,1578L535.1,1578L536.3,1578L537.5,1578L538.7,1578L540,1578L541.2,1578L542.4,1578L543.7,1578L544.9,1578L546.1,1578L547.4,1578L548.6,1578L549.8,1578L551.1,1578L552.3,1578L553.5,1578L554.8,1578L556,1578L557.2,1578L558.5,1578L559.7,1578L560.9,1578L562.1,1578L563.4,1578L564.6,1572.6L565.8,1572.6L567.1,1572.6L568.3,1572.6L569.5,1572.6L570.8,1572.6L572,1572.6L573.2,1572.6L574.5,1572.6L575.7,1572.6L576.9,1572.6L578.2,1572.6L579.4,1572.6L580.6,1572.6L581.9,1572.6L583.1,1572.6L584.3,1572.6L585.5,1578L586.8,1578L588,1569.1L589.2,1573.1L590.5,1573.1L591.7,1573.1L592.9,1573.1L594.2,1573.1L595.4,1573.1L596.6,1573.1L597.9,1573.1L599.1,1573.1L600.3,1573.1L601.6,1573.1L602.8,1573.1L604,1573.1L605.2,1573.1L606.5,1573.1L607.7,1573.1L608.9,1577.5L610.2,1577.5L611.4,1577.5L612.6,1577.5L613.9,1577.5L615.1,1577.7L616.3,1577.7L617.6,1577.7L618.8,1577.7L620,1577.7L621.3,1577.7L622.5,1577.7L623.7,1577.7L625,1577.7L626.2,1577.7L627.4,1577.7L628.6,1577.7L629.9,1577.7L631.1,1577.7L632.3,1577.7L633.6,1577.7L634.8,1577.7L636,1577.7L637.3,1577.7L638.5,1577.7L639.7,1577.7L641,1577.7L642.2,1577.7L643.4,1573.6L644.7,1573.8L645.9,1575.3L647.1,1572.5L648.4,1573.4L649.6,1574.2L650.8,1574.6L652,1574.2L653.3,1574.1L654.5,1574.5L655.7,1574L657,1573.9L658.2,1574.4L659.4,1573.1L660.7,1574.1L661.9,1573.5L663.1,1574.3L664.4,1574L665.6,1575L666.8,1574.5L668.1,1574.3L669.3,1573.5L670.5,1574.5L671.8,1572.6L673,1574.7L674.2,1574.7L675.4,1574.2L676.7,1574.6L677.9,1573.1L679.1,1573.8L680.4,1573.5L681.6,1574.5L682.8,1574.5L684.1,1575.2L685.3,1573.4L686.5,1573.5L687.8,1574.4L689,1573.7L690.2,1577.7L691.5,1577.7L692.7,1577.7L693.9,1577.7L695.2,1577.7L696.4,1577.7L697.6,1577.7L698.8,1574.1L700.1,1574.1L701.3,1574.1L702.5,1574.1L703.8,1574.1L705,1574.1L706.2,1574.1L707.5,1574.1L708.7,1574.1L709.9,1574.1L711.2,1577.7L712.4,1577.7L713.6,1577.7L714.9,1577.7L716.1,1577.7L717.3,1577.7L718.6,1568.4L719.8,1568.4L721,1574.1L722.2,1574.1L723.5,1574.1L724.7,1574.1L725.9,1574.1L727.2,1574.1L728.4,1574.1L729.6,1574.1L730.9,1574.1L732.1,1574.1L733.3,1574.1L734.6,1574.1L735.8,1574.1L737,1574.1L738.3,1574.1L739.5,1574.1L740.7,1574.1L742,1574.1L743.2,1574.1L744.4,1574.1L745.6,1574.1L746.9,1574.1L748.1,1574.1L749.3,1574.1L750.6,1574.1L751.8,1574.1L753,1574.1L754.3,1574.1L755.5,1574.1L756.7,1574.1L758,1574.1L759.2,1574.1L760.4,1574.1L761.7,1574.1L762.9,1574.1L764.1,1574.1L765.4,1574.1L766.6,1574.1L767.8,1574.1L769,1574.1L770.3,1574.1L771.5,1574.1L772.7,1574.1L774,1574.1L775.2,1574.1L776.4,1574.1L777.7,1574.1L778.9,1574.1L780.1,1574.1L781.4,1574.1L782.6,1574.1L783.8,1574.1L785.1,1574.1L786.3,1574.1L787.5,1574.1L788.8,1574.1L790,1574.1L791.2,1574.1L792.4,1577.7L793.7,1577.7L794.9,1577.7L796.1,1577.7L797.4,1577.7L798.6,1577.7L799.8,1577.7L801.1,1577.7L802.3,1577.7L803.5,1577.7L804.8,1577.7L806,1577.7L807.2,1577.7L808.5,1577.7L809.7,1577.7L810.9,1577.7L812.2,1577.7L813.4,1577.7L814.6,1577.7L815.8,1577.7L817.1,1577.7L818.3,1577.7L819.5,1577.7L820.8,1577.7L822,1577.7L823.2,1577.7L824.5,1577.7L825.7,1577.7L826.9,1577.7L828.2,1577.7L829.4,1577.7L830.6,1577.7L831.9,1577.7L833.1,1577.7L834.3,1577.7L835.6,1577.7L836.8,1577.7L838,1577.7L839.2,1577.7L840.5,1577.7L841.7,1577.7L842.9,1577.7L844.2,1577.7L845.4,1577.7L846.6,1577.7L847.9,1577.7L849.1,1577.7L850.3,1577.7L851.6,1577.7L852.8,1577.7L854,1577.7L855.3,1577.7L856.5,1577.7L857.7,1577.7L859,1577.7L860.2,1577.7L861.4,1577.7L862.6,1577.7L863.9,1577.7L865.1,1577.7L866.3,1577.7L867.6,1577.7L868.8,1577.7L870,1577.7L871.3,1577.7L872.5,1577.7L873.7,1577.7L875,1577.7L876.2,1577.7L877.4,1577.7L878.7,1577.7L879.9,1577.7L881.1,1577.7L882.4,1577.7L883.6,1577.7L884.8,1577.7L886,1577.7L887.3,1577.7L888.5,1577.7L889.7,1577.7L891,1577.7L892.2,1577.7L893.4,1577.7L894.7,1577.7L895.9,1577.7L897.1,1577.7L898.4,1577.7L899.6,1577.7L900.8,1577.7L902.1,1577.7L903.3,1577.7L904.5,1577.7L905.8,1577.7L907,1577.7L908.2,1577.7L909.4,1577.7L910.7,1577.7L911.9,1577.7L913.1,1577.7L914.4,1577.7L915.6,1577.7L916.8,1577.7L918.1,1577.7L919.3,1577.7L920.5,1577.7L921.8,1577.7L923,1577.7L924.2,1577.7L925.5,1577.7L926.7,1577.7L927.9,1577.7L929.2,1577.7L930.4,1577.7L931.6,1577.7L932.8,1577.7L934.1,1577.7L935.3,1577.7L936.5,1577.7L937.8,1577.7L939,1577.7L940.2,1577.7L941.5,1577.7L942.7,1577.7L943.9,1577.7L945.2,1577.7L946.4,1577.7L947.6,1577.7L948.9,1577.7L950.1,1577.7L951.3,1577.7L952.6,1577.7L953.8,1577.7L955,1577.7L956.2,1577.7L957.5,1577.7L958.7,1577.7L959.9,1577.7L961.2,1577.7L962.4,1577.7L963.6,1577.7L964.9,1577.7L966.1,1577.7L967.3,1577.7L968.6,1577.7L969.8,1577.7L971,1577.7L972.3,1577.7L973.5,1577.7L974.7,1577.7L976,1577.7L977.2,1577.7L978.4,1577.7L979.6,1577.7L980.9,1570.9L982.1,1572.1L983.3,1571.5L984.6,1571L985.8,1572.5L987,1571.4L988.3,1570.2L989.5,1571.3L990.7,1571.5L992,1570.9L993.2,1572.5L994.4,1571.8L995.7,1572.2L996.9,1572.3L998.1,1571.3L999.4,1571.3L1000.6,1571.6L1001.8,1571.2L1003,1572.9L1004.3,1570.8L1005.5,1570.3L1006.7,1572.1L1008,1571.4L1009.2,1577.2L1010.4,1577.2L1011.7,1577.2L1012.9,1577.2L1014.1,1577.2L1015.4,1577.2L1016.6,1577.2L1017.8,1577.2L1019.1,1577.2L1020.3,1577.2L1021.5,1577.2L1022.8,1577.2L1024,1577.2L1025.2,1577.2L1026.4,1577.2L1027.7,1577.2L1028.9,1577.2L1030.1,1577.2L1031.4,1577.2L1032.6,1577.2L1033.8,1577.2L1035.1,1577.2L1036.3,1577.2" fill="none" stroke="#eab839" stroke-width="2.2" stroke-linejoin="round"/>
<path d="M150.8,1509L152,1511.5L153.3,1510L154.5,1512.2L155.7,1512.6L157,1512L158.2,1508.4L159.4,1508.8L160.7,1510.8L161.9,1508.4L163.1,1510.5L164.3,1508.4L165.6,1509.1L166.8,1509.8L168,1509.5L169.3,1508.5L170.5,1508.9L171.7,1508.8L173,1508.5L174.2,1509.8L175.4,1507.5L176.7,1512.9L177.9,1508.6L179.1,1507L180.4,1505.5L181.6,1506L182.8,1508.9L184.1,1506.8L185.3,1509.8L186.5,1507.4L187.7,1506.2L189,1507.2L190.2,1506.8L191.4,1507.2L192.7,1505.7L193.9,1507.1L195.1,1504.5L196.4,1510.2L197.6,1506.8L198.8,1498.5L200.1,1505.4L201.3,1506.6L202.5,1506.7L203.8,1504.2L205,1508.5L206.2,1506.8L207.5,1507L208.7,1509.3L209.9,1504.4L211.1,1505L212.4,1505L213.6,1507.2L214.8,1505.1L216.1,1506L217.3,1509.5L218.5,1506L219.8,1507.3L221,1508.5L222.2,1508.4L223.5,1504.1L224.7,1507L225.9,1507.5L227.2,1508L228.4,1506L229.6,1505.7L230.9,1506.5L232.1,1506.2L233.3,1505.3L234.5,1505.6L235.8,1505.8L237,1507.1L238.2,1506.7L239.5,1505L240.7,1504.2L241.9,1505.3L243.2,1505.9L244.4,1507.5L245.6,1505.7L246.9,1503.1L248.1,1509.6L249.3,1508L250.6,1506.9L251.8,1506.5L253,1505.6L254.3,1508L255.5,1503.9L256.7,1507.3L257.9,1507L259.2,1509.1L260.4,1506L261.6,1507.8L262.9,1506.1L264.1,1503.9L265.3,1503.8L266.6,1507.6L267.8,1503.5L269,1504.7L270.3,1508.4L271.5,1504.3L272.7,1506.7L274,1508.9L275.2,1508L276.4,1507.4L277.7,1504.4L278.9,1508.3L280.1,1472.7L281.3,1505.7L282.6,1503.8L283.8,1502.2L285,1505.6L286.3,1494.3L287.5,1502.7L288.7,1506.9L290,1506.2L291.2,1504.7L292.4,1504.8L293.7,1506.3L294.9,1506.1L296.1,1495.2L297.4,1506L298.6,1504.8L299.8,1503.4L301.1,1505.1L302.3,1505.2L303.5,1514.4L304.7,1506.9L306,1501.8L307.2,1475.1L308.4,1506.1L309.7,1505.2L310.9,1503.2L312.1,1504.7L313.4,1476.2L314.6,1501.2L315.8,1507.7L317.1,1506.7L318.3,1491.4L319.5,1504.4L320.8,1505L322,1476.2L323.2,1505.8L324.5,1506.3L325.7,1503.6L326.9,1505.3L328.1,1505.3L329.4,1504.3L330.6,1505.5L331.8,1506.6L333.1,1501.5L334.3,1504.8L335.5,1503L336.8,1503.3L338,1504.4L339.2,1505L340.5,1506L341.7,1503.1L342.9,1505L344.2,1506.5L345.4,1504.5L346.6,1505.2L347.9,1505.5L349.1,1505.1L350.3,1502.5L351.5,1513L352.8,1505.2L354,1507.6L355.2,1505.5L356.5,1502.3L357.7,1505.6L358.9,1497.5L360.2,1505.4L361.4,1503.7L362.6,1503.9L363.9,1505.4L365.1,1502.1L366.3,1490.3L367.6,1503.9L368.8,1503L370,1502.5L371.3,1503L372.5,1504.2L373.7,1501.9L374.9,1503.2L376.2,1503.2L377.4,1504.6L378.6,1504.6L379.9,1501.2L381.1,1503.3L382.3,1502.5L383.6,1502.8L384.8,1503.4L386,1504.9L387.3,1504.8L388.5,1501.9L389.7,1503.1L391,1504.8L392.2,1502.9L393.4,1505.3L394.7,1501.9L395.9,1504.6L397.1,1502L398.3,1496.1L399.6,1503.6L400.8,1500.3L402,1502.9L403.3,1502.1L404.5,1504.5L405.7,1500.1L407,1499.1L408.2,1504L409.4,1503.6L410.7,1502.7L411.9,1499.3L413.1,1502.7L414.4,1505.2L415.6,1501L416.8,1501L418.1,1500.3L419.3,1503.1L420.5,1501.3L421.7,1498.5L423,1500.8L424.2,1483.3L425.4,1499.4L426.7,1501.5L427.9,1503L429.1,1501.3L430.4,1501.4L431.6,1501.1L432.8,1501.2L434.1,1500.8L435.3,1500.8L436.5,1501L437.8,1501L439,1500.6L440.2,1500.7L441.5,1501.6L442.7,1501.6L443.9,1501.7L445.1,1501.5L446.4,1501.4L447.6,1501.7L448.8,1501.3L450.1,1501L451.3,1501L452.5,1501.2L453.8,1501.2L455,1501L456.2,1500.9L457.5,1501L458.7,1500.7L459.9,1501.8L461.2,1501.2L462.4,1500.3L463.6,1501.3L464.9,1500.7L466.1,1500.9L467.3,1501L468.5,1501.3L469.8,1500.9L471,1501.1L472.2,1500.9L473.5,1501.8L474.7,1500.9L475.9,1503.6L477.2,1500.4L478.4,1500.9L479.6,1500.7L480.9,1500.9L482.1,1501L483.3,1500.4L484.6,1500.9L485.8,1500.6L487,1500.6L488.3,1500.5L489.5,1500.7L490.7,1500.5L491.9,1500.6L493.2,1500.7L494.4,1500.3L495.6,1501.3L496.9,1501.1L498.1,1500.7L499.3,1500.9L500.6,1500.5L501.8,1500.9L503,1500.3L504.3,1500.8L505.5,1500.9L506.7,1500.7L508,1501.1L509.2,1500.6L510.4,1500.9L511.7,1501.1L512.9,1501.1L514.1,1500.9L515.3,1501.5L516.6,1501.2L517.8,1501.1L519,1500.6L520.3,1500.9L521.5,1500.7L522.7,1501.6L524,1501L525.2,1500.6L526.4,1501.2L527.7,1501.3L528.9,1500.7L530.1,1501L531.4,1501.8L532.6,1501L533.8,1501.1L535.1,1502.1L536.3,1500.9L537.5,1500.5L538.7,1500.6L540,1501L541.2,1501.2L542.4,1500.6L543.7,1500.2L544.9,1501.2L546.1,1500.9L547.4,1500.8L548.6,1500.7L549.8,1501.4L551.1,1500.9L552.3,1500.5L553.5,1500.6L554.8,1500.8L556,1500.5L557.2,1500.8L558.5,1501.4L559.7,1501.3L560.9,1501.4L562.1,1501.4L563.4,1501.1L564.6,1501.2L565.8,1498.5L567.1,1501.3L568.3,1501.3L569.5,1501.1L570.8,1501.1L572,1500.7L573.2,1500.9L574.5,1500.5L575.7,1500.9L576.9,1501L578.2,1500.8L579.4,1500.3L580.6,1500.8L581.9,1501.2L583.1,1501.2L584.3,1501L585.5,1501.3L586.8,1501.2L588,1501L589.2,1501.6L590.5,1501.1L591.7,1501.3L592.9,1500.7L594.2,1500.8L595.4,1501.2L596.6,1502L597.9,1500.7L599.1,1500.7L600.3,1500.9L601.6,1501L602.8,1501.2L604,1501.5L605.2,1501.1L606.5,1501.4L607.7,1501.2L608.9,1501L610.2,1501L611.4,1501.4L612.6,1501.3L613.9,1501.7L615.1,1501.3L616.3,1501.2L617.6,1500.8L618.8,1500.9L620,1501.3L621.3,1501.3L622.5,1501.8L623.7,1501L625,1501.5L626.2,1501.2L627.4,1500.5L628.6,1500.8L629.9,1501.3L631.1,1501.1L632.3,1501L633.6,1501.7L634.8,1501.2L636,1501.4L637.3,1501.5L638.5,1501.1L639.7,1501.5L641,1500.9L642.2,1500.8L643.4,1501.7L644.7,1500.4L645.9,1501.6L647.1,1501L648.4,1501.2L649.6,1501L650.8,1501L652,1501.4L653.3,1501.1L654.5,1501.7L655.7,1500.8L657,1501.1L658.2,1500.9L659.4,1500.9L660.7,1502L661.9,1501.9L663.1,1501.5L664.4,1501.5L665.6,1501.6L666.8,1501.4L668.1,1500.2L669.3,1500.5L670.5,1501.6L671.8,1500.4L673,1501.9L674.2,1501.7L675.4,1501.5L676.7,1501.5L677.9,1501.6L679.1,1501.2L680.4,1502.1L681.6,1501.3L682.8,1501.1L684.1,1502.1L685.3,1501.5L686.5,1501.5L687.8,1501.8L689,1502.2L690.2,1501.4L691.5,1501.5L692.7,1500.9L693.9,1501.4L695.2,1502L696.4,1501.2L697.6,1501.1L698.8,1500.8L700.1,1501L701.3,1501L702.5,1501.5L703.8,1501.6L705,1500.7L706.2,1501.6L707.5,1501.9L708.7,1501.8L709.9,1501.2L711.2,1501.8L712.4,1501.3L713.6,1501.1L714.9,1501L716.1,1501L717.3,1501.4L718.6,1501.7L719.8,1500.8L721,1500.8L722.2,1501.9L723.5,1501.2L724.7,1502.3L725.9,1501.7L727.2,1501L728.4,1501.9L729.6,1501.9L730.9,1500.9L732.1,1501.5L733.3,1502.1L734.6,1501L735.8,1501.7L737,1501.7L738.3,1502.3L739.5,1502.1L740.7,1501.4L742,1501L743.2,1501.4L744.4,1501.6L745.6,1501.6L746.9,1501.4L748.1,1501.2L749.3,1502.1L750.6,1501.5L751.8,1501.3L753,1501.7L754.3,1501.7L755.5,1501.6L756.7,1502.1L758,1501.2L759.2,1501.7L760.4,1502L761.7,1501.5L762.9,1501.7L764.1,1501.9L765.4,1501.8L766.6,1501.7L767.8,1501.2L769,1501.3L770.3,1501.7L771.5,1501.6L772.7,1501.6L774,1501.5L775.2,1501L776.4,1501.9L777.7,1501.3L778.9,1502.3L780.1,1502.7L781.4,1502L782.6,1501.9L783.8,1501.5L785.1,1501.3L786.3,1501.6L787.5,1502.1L788.8,1501.7L790,1501.1L791.2,1502L792.4,1501.5L793.7,1502L794.9,1501.7L796.1,1501.5L797.4,1501.6L798.6,1502L799.8,1501.5L801.1,1502.3L802.3,1501.5L803.5,1502.3L804.8,1501.3L806,1501.4L807.2,1502L808.5,1502.3L809.7,1501.7L810.9,1502.1L812.2,1501.5L813.4,1501.4L814.6,1501.8L815.8,1502.6L817.1,1501.7L818.3,1501.2L819.5,1500.9L820.8,1501.8L822,1502.1L823.2,1501.7L824.5,1501.9L825.7,1501.6L826.9,1502.3L828.2,1502L829.4,1501.3L830.6,1501.6L831.9,1502.3L833.1,1501.8L834.3,1501L835.6,1501.7L836.8,1501.7L838,1500.9L839.2,1502L840.5,1502.4L841.7,1501.7L842.9,1501.5L844.2,1501.8L845.4,1501.7L846.6,1501.9L847.9,1502.1L849.1,1501.3L850.3,1501.8L851.6,1502.6L852.8,1501.9L854,1501.9L855.3,1502L856.5,1501.6L857.7,1501.4L859,1502.8L860.2,1501.9L861.4,1501.6L862.6,1502.3L863.9,1501.8L865.1,1501.6L866.3,1501.8L867.6,1501.4L868.8,1501.6L870,1502.3L871.3,1502L872.5,1501.9L873.7,1502.4L875,1502.2L876.2,1501.8L877.4,1501.4L878.7,1501.8L879.9,1502.5L881.1,1501.6L882.4,1502.8L883.6,1501.9L884.8,1501.5L886,1501.8L887.3,1502.5L888.5,1501.8L889.7,1502.2L891,1502.3L892.2,1501.8L893.4,1502.4L894.7,1502.6L895.9,1502.3L897.1,1501.4L898.4,1502.2L899.6,1502.3L900.8,1502.4L902.1,1502.7L903.3,1502.2L904.5,1502.1L905.8,1501.3L907,1501.7L908.2,1502.5L909.4,1501.7L910.7,1502L911.9,1501.5L913.1,1502L914.4,1501.7L915.6,1502.3L916.8,1502.1L918.1,1502.2L919.3,1501.6L920.5,1502L921.8,1502.4L923,1501L924.2,1501.9L925.5,1502.1L926.7,1502.4L927.9,1502.4L929.2,1502.4L930.4,1502.3L931.6,1502.5L932.8,1502.1L934.1,1502.1L935.3,1501.7L936.5,1502.1L937.8,1502.1L939,1502.7L940.2,1501.7L941.5,1502.3L942.7,1502.1L943.9,1502.2L945.2,1502.6L946.4,1502.1L947.6,1501.8L948.9,1502.2L950.1,1502.5L951.3,1502.3L952.6,1502.4L953.8,1501.6L955,1502.5L956.2,1502L957.5,1501.7L958.7,1502.3L959.9,1501.6L961.2,1502.2L962.4,1502.7L963.6,1501.9L964.9,1501.8L966.1,1502.5L967.3,1502.4L968.6,1502.4L969.8,1501.4L971,1501.8L972.3,1502.8L973.5,1501.8L974.7,1501.9L976,1502.1L977.2,1502.2L978.4,1502L979.6,1501.1L980.9,1502.3L982.1,1501.7L983.3,1502.4L984.6,1502.5L985.8,1501.7L987,1502.1L988.3,1502.7L989.5,1502.7L990.7,1502.4L992,1501.9L993.2,1502.2L994.4,1505L995.7,1502.6L996.9,1500.6L998.1,1500.9L999.4,1499.5L1000.6,1500.2L1001.8,1500.2L1003,1500.3L1004.3,1499.9L1005.5,1500.6L1006.7,1500.1L1008,1502.7L1009.2,1501.9L1010.4,1501.9L1011.7,1501.8L1012.9,1502.2L1014.1,1502.1L1015.4,1501.7L1016.6,1500.9L1017.8,1501.9L1019.1,1501.7L1020.3,1502L1021.5,1501.7L1022.8,1502.1L1024,1501.6L1025.2,1502.1L1026.4,1501.9L1027.7,1502.3L1028.9,1501.9L1030.1,1502.2L1031.4,1501.9L1032.6,1501.9L1033.8,1501.7L1035.1,1501.5L1036.3,1502L1036.3,1630.6 L150.8,1630.6 Z" fill="#6ed0e0" fill-opacity="0.1" stroke="none"/><path d="M150.8,1509L152,1511.5L153.3,1510L154.5,1512.2L155.7,1512.6L157,1512L158.2,1508.4L159.4,1508.8L160.7,1510.8L161.9,1508.4L163.1,1510.5L164.3,1508.4L165.6,1509.1L166.8,1509.8L168,1509.5L169.3,1508.5L170.5,1508.9L171.7,1508.8L173,1508.5L174.2,1509.8L175.4,1507.5L176.7,1512.9L177.9,1508.6L179.1,1507L180.4,1505.5L181.6,1506L182.8,1508.9L184.1,1506.8L185.3,1509.8L186.5,1507.4L187.7,1506.2L189,1507.2L190.2,1506.8L191.4,1507.2L192.7,1505.7L193.9,1507.1L195.1,1504.5L196.4,1510.2L197.6,1506.8L198.8,1498.5L200.1,1505.4L201.3,1506.6L202.5,1506.7L203.8,1504.2L205,1508.5L206.2,1506.8L207.5,1507L208.7,1509.3L209.9,1504.4L211.1,1505L212.4,1505L213.6,1507.2L214.8,1505.1L216.1,1506L217.3,1509.5L218.5,1506L219.8,1507.3L221,1508.5L222.2,1508.4L223.5,1504.1L224.7,1507L225.9,1507.5L227.2,1508L228.4,1506L229.6,1505.7L230.9,1506.5L232.1,1506.2L233.3,1505.3L234.5,1505.6L235.8,1505.8L237,1507.1L238.2,1506.7L239.5,1505L240.7,1504.2L241.9,1505.3L243.2,1505.9L244.4,1507.5L245.6,1505.7L246.9,1503.1L248.1,1509.6L249.3,1508L250.6,1506.9L251.8,1506.5L253,1505.6L254.3,1508L255.5,1503.9L256.7,1507.3L257.9,1507L259.2,1509.1L260.4,1506L261.6,1507.8L262.9,1506.1L264.1,1503.9L265.3,1503.8L266.6,1507.6L267.8,1503.5L269,1504.7L270.3,1508.4L271.5,1504.3L272.7,1506.7L274,1508.9L275.2,1508L276.4,1507.4L277.7,1504.4L278.9,1508.3L280.1,1472.7L281.3,1505.7L282.6,1503.8L283.8,1502.2L285,1505.6L286.3,1494.3L287.5,1502.7L288.7,1506.9L290,1506.2L291.2,1504.7L292.4,1504.8L293.7,1506.3L294.9,1506.1L296.1,1495.2L297.4,1506L298.6,1504.8L299.8,1503.4L301.1,1505.1L302.3,1505.2L303.5,1514.4L304.7,1506.9L306,1501.8L307.2,1475.1L308.4,1506.1L309.7,1505.2L310.9,1503.2L312.1,1504.7L313.4,1476.2L314.6,1501.2L315.8,1507.7L317.1,1506.7L318.3,1491.4L319.5,1504.4L320.8,1505L322,1476.2L323.2,1505.8L324.5,1506.3L325.7,1503.6L326.9,1505.3L328.1,1505.3L329.4,1504.3L330.6,1505.5L331.8,1506.6L333.1,1501.5L334.3,1504.8L335.5,1503L336.8,1503.3L338,1504.4L339.2,1505L340.5,1506L341.7,1503.1L342.9,1505L344.2,1506.5L345.4,1504.5L346.6,1505.2L347.9,1505.5L349.1,1505.1L350.3,1502.5L351.5,1513L352.8,1505.2L354,1507.6L355.2,1505.5L356.5,1502.3L357.7,1505.6L358.9,1497.5L360.2,1505.4L361.4,1503.7L362.6,1503.9L363.9,1505.4L365.1,1502.1L366.3,1490.3L367.6,1503.9L368.8,1503L370,1502.5L371.3,1503L372.5,1504.2L373.7,1501.9L374.9,1503.2L376.2,1503.2L377.4,1504.6L378.6,1504.6L379.9,1501.2L381.1,1503.3L382.3,1502.5L383.6,1502.8L384.8,1503.4L386,1504.9L387.3,1504.8L388.5,1501.9L389.7,1503.1L391,1504.8L392.2,1502.9L393.4,1505.3L394.7,1501.9L395.9,1504.6L397.1,1502L398.3,1496.1L399.6,1503.6L400.8,1500.3L402,1502.9L403.3,1502.1L404.5,1504.5L405.7,1500.1L407,1499.1L408.2,1504L409.4,1503.6L410.7,1502.7L411.9,1499.3L413.1,1502.7L414.4,1505.2L415.6,1501L416.8,1501L418.1,1500.3L419.3,1503.1L420.5,1501.3L421.7,1498.5L423,1500.8L424.2,1483.3L425.4,1499.4L426.7,1501.5L427.9,1503L429.1,1501.3L430.4,1501.4L431.6,1501.1L432.8,1501.2L434.1,1500.8L435.3,1500.8L436.5,1501L437.8,1501L439,1500.6L440.2,1500.7L441.5,1501.6L442.7,1501.6L443.9,1501.7L445.1,1501.5L446.4,1501.4L447.6,1501.7L448.8,1501.3L450.1,1501L451.3,1501L452.5,1501.2L453.8,1501.2L455,1501L456.2,1500.9L457.5,1501L458.7,1500.7L459.9,1501.8L461.2,1501.2L462.4,1500.3L463.6,1501.3L464.9,1500.7L466.1,1500.9L467.3,1501L468.5,1501.3L469.8,1500.9L471,1501.1L472.2,1500.9L473.5,1501.8L474.7,1500.9L475.9,1503.6L477.2,1500.4L478.4,1500.9L479.6,1500.7L480.9,1500.9L482.1,1501L483.3,1500.4L484.6,1500.9L485.8,1500.6L487,1500.6L488.3,1500.5L489.5,1500.7L490.7,1500.5L491.9,1500.6L493.2,1500.7L494.4,1500.3L495.6,1501.3L496.9,1501.1L498.1,1500.7L499.3,1500.9L500.6,1500.5L501.8,1500.9L503,1500.3L504.3,1500.8L505.5,1500.9L506.7,1500.7L508,1501.1L509.2,1500.6L510.4,1500.9L511.7,1501.1L512.9,1501.1L514.1,1500.9L515.3,1501.5L516.6,1501.2L517.8,1501.1L519,1500.6L520.3,1500.9L521.5,1500.7L522.7,1501.6L524,1501L525.2,1500.6L526.4,1501.2L527.7,1501.3L528.9,1500.7L530.1,1501L531.4,1501.8L532.6,1501L533.8,1501.1L535.1,1502.1L536.3,1500.9L537.5,1500.5L538.7,1500.6L540,1501L541.2,1501.2L542.4,1500.6L543.7,1500.2L544.9,1501.2L546.1,1500.9L547.4,1500.8L548.6,1500.7L549.8,1501.4L551.1,1500.9L552.3,1500.5L553.5,1500.6L554.8,1500.8L556,1500.5L557.2,1500.8L558.5,1501.4L559.7,1501.3L560.9,1501.4L562.1,1501.4L563.4,1501.1L564.6,1501.2L565.8,1498.5L567.1,1501.3L568.3,1501.3L569.5,1501.1L570.8,1501.1L572,1500.7L573.2,1500.9L574.5,1500.5L575.7,1500.9L576.9,1501L578.2,1500.8L579.4,1500.3L580.6,1500.8L581.9,1501.2L583.1,1501.2L584.3,1501L585.5,1501.3L586.8,1501.2L588,1501L589.2,1501.6L590.5,1501.1L591.7,1501.3L592.9,1500.7L594.2,1500.8L595.4,1501.2L596.6,1502L597.9,1500.7L599.1,1500.7L600.3,1500.9L601.6,1501L602.8,1501.2L604,1501.5L605.2,1501.1L606.5,1501.4L607.7,1501.2L608.9,1501L610.2,1501L611.4,1501.4L612.6,1501.3L613.9,1501.7L615.1,1501.3L616.3,1501.2L617.6,1500.8L618.8,1500.9L620,1501.3L621.3,1501.3L622.5,1501.8L623.7,1501L625,1501.5L626.2,1501.2L627.4,1500.5L628.6,1500.8L629.9,1501.3L631.1,1501.1L632.3,1501L633.6,1501.7L634.8,1501.2L636,1501.4L637.3,1501.5L638.5,1501.1L639.7,1501.5L641,1500.9L642.2,1500.8L643.4,1501.7L644.7,1500.4L645.9,1501.6L647.1,1501L648.4,1501.2L649.6,1501L650.8,1501L652,1501.4L653.3,1501.1L654.5,1501.7L655.7,1500.8L657,1501.1L658.2,1500.9L659.4,1500.9L660.7,1502L661.9,1501.9L663.1,1501.5L664.4,1501.5L665.6,1501.6L666.8,1501.4L668.1,1500.2L669.3,1500.5L670.5,1501.6L671.8,1500.4L673,1501.9L674.2,1501.7L675.4,1501.5L676.7,1501.5L677.9,1501.6L679.1,1501.2L680.4,1502.1L681.6,1501.3L682.8,1501.1L684.1,1502.1L685.3,1501.5L686.5,1501.5L687.8,1501.8L689,1502.2L690.2,1501.4L691.5,1501.5L692.7,1500.9L693.9,1501.4L695.2,1502L696.4,1501.2L697.6,1501.1L698.8,1500.8L700.1,1501L701.3,1501L702.5,1501.5L703.8,1501.6L705,1500.7L706.2,1501.6L707.5,1501.9L708.7,1501.8L709.9,1501.2L711.2,1501.8L712.4,1501.3L713.6,1501.1L714.9,1501L716.1,1501L717.3,1501.4L718.6,1501.7L719.8,1500.8L721,1500.8L722.2,1501.9L723.5,1501.2L724.7,1502.3L725.9,1501.7L727.2,1501L728.4,1501.9L729.6,1501.9L730.9,1500.9L732.1,1501.5L733.3,1502.1L734.6,1501L735.8,1501.7L737,1501.7L738.3,1502.3L739.5,1502.1L740.7,1501.4L742,1501L743.2,1501.4L744.4,1501.6L745.6,1501.6L746.9,1501.4L748.1,1501.2L749.3,1502.1L750.6,1501.5L751.8,1501.3L753,1501.7L754.3,1501.7L755.5,1501.6L756.7,1502.1L758,1501.2L759.2,1501.7L760.4,1502L761.7,1501.5L762.9,1501.7L764.1,1501.9L765.4,1501.8L766.6,1501.7L767.8,1501.2L769,1501.3L770.3,1501.7L771.5,1501.6L772.7,1501.6L774,1501.5L775.2,1501L776.4,1501.9L777.7,1501.3L778.9,1502.3L780.1,1502.7L781.4,1502L782.6,1501.9L783.8,1501.5L785.1,1501.3L786.3,1501.6L787.5,1502.1L788.8,1501.7L790,1501.1L791.2,1502L792.4,1501.5L793.7,1502L794.9,1501.7L796.1,1501.5L797.4,1501.6L798.6,1502L799.8,1501.5L801.1,1502.3L802.3,1501.5L803.5,1502.3L804.8,1501.3L806,1501.4L807.2,1502L808.5,1502.3L809.7,1501.7L810.9,1502.1L812.2,1501.5L813.4,1501.4L814.6,1501.8L815.8,1502.6L817.1,1501.7L818.3,1501.2L819.5,1500.9L820.8,1501.8L822,1502.1L823.2,1501.7L824.5,1501.9L825.7,1501.6L826.9,1502.3L828.2,1502L829.4,1501.3L830.6,1501.6L831.9,1502.3L833.1,1501.8L834.3,1501L835.6,1501.7L836.8,1501.7L838,1500.9L839.2,1502L840.5,1502.4L841.7,1501.7L842.9,1501.5L844.2,1501.8L845.4,1501.7L846.6,1501.9L847.9,1502.1L849.1,1501.3L850.3,1501.8L851.6,1502.6L852.8,1501.9L854,1501.9L855.3,1502L856.5,1501.6L857.7,1501.4L859,1502.8L860.2,1501.9L861.4,1501.6L862.6,1502.3L863.9,1501.8L865.1,1501.6L866.3,1501.8L867.6,1501.4L868.8,1501.6L870,1502.3L871.3,1502L872.5,1501.9L873.7,1502.4L875,1502.2L876.2,1501.8L877.4,1501.4L878.7,1501.8L879.9,1502.5L881.1,1501.6L882.4,1502.8L883.6,1501.9L884.8,1501.5L886,1501.8L887.3,1502.5L888.5,1501.8L889.7,1502.2L891,1502.3L892.2,1501.8L893.4,1502.4L894.7,1502.6L895.9,1502.3L897.1,1501.4L898.4,1502.2L899.6,1502.3L900.8,1502.4L902.1,1502.7L903.3,1502.2L904.5,1502.1L905.8,1501.3L907,1501.7L908.2,1502.5L909.4,1501.7L910.7,1502L911.9,1501.5L913.1,1502L914.4,1501.7L915.6,1502.3L916.8,1502.1L918.1,1502.2L919.3,1501.6L920.5,1502L921.8,1502.4L923,1501L924.2,1501.9L925.5,1502.1L926.7,1502.4L927.9,1502.4L929.2,1502.4L930.4,1502.3L931.6,1502.5L932.8,1502.1L934.1,1502.1L935.3,1501.7L936.5,1502.1L937.8,1502.1L939,1502.7L940.2,1501.7L941.5,1502.3L942.7,1502.1L943.9,1502.2L945.2,1502.6L946.4,1502.1L947.6,1501.8L948.9,1502.2L950.1,1502.5L951.3,1502.3L952.6,1502.4L953.8,1501.6L955,1502.5L956.2,1502L957.5,1501.7L958.7,1502.3L959.9,1501.6L961.2,1502.2L962.4,1502.7L963.6,1501.9L964.9,1501.8L966.1,1502.5L967.3,1502.4L968.6,1502.4L969.8,1501.4L971,1501.8L972.3,1502.8L973.5,1501.8L974.7,1501.9L976,1502.1L977.2,1502.2L978.4,1502L979.6,1501.1L980.9,1502.3L982.1,1501.7L983.3,1502.4L984.6,1502.5L985.8,1501.7L987,1502.1L988.3,1502.7L989.5,1502.7L990.7,1502.4L992,1501.9L993.2,1502.2L994.4,1505L995.7,1502.6L996.9,1500.6L998.1,1500.9L999.4,1499.5L1000.6,1500.2L1001.8,1500.2L1003,1500.3L1004.3,1499.9L1005.5,1500.6L1006.7,1500.1L1008,1502.7L1009.2,1501.9L1010.4,1501.9L1011.7,1501.8L1012.9,1502.2L1014.1,1502.1L1015.4,1501.7L1016.6,1500.9L1017.8,1501.9L1019.1,1501.7L1020.3,1502L1021.5,1501.7L1022.8,1502.1L1024,1501.6L1025.2,1502.1L1026.4,1501.9L1027.7,1502.3L1028.9,1501.9L1030.1,1502.2L1031.4,1501.9L1032.6,1501.9L1033.8,1501.7L1035.1,1501.5L1036.3,1502" fill="none" stroke="#6ed0e0" stroke-width="2.2" stroke-linejoin="round"/>
<path d="M150.8,1626.5L152,1627.4L153.3,1627.4L154.5,1626.8L155.7,1626.6L157,1627.4L158.2,1627.4L159.4,1627.4L160.7,1627L161.9,1627.5L163.1,1627.8L164.3,1627.4L165.6,1627.4L166.8,1627.6L168,1627.3L169.3,1627.1L170.5,1627.3L171.7,1627.5L173,1627.3L174.2,1627.4L175.4,1627L176.7,1627.1L177.9,1626.5L179.1,1627.5L180.4,1627.3L181.6,1626.7L182.8,1627.3L184.1,1626.8L185.3,1627.3L186.5,1627.9L187.7,1627.2L189,1626.8L190.2,1626.9L191.4,1627.2L192.7,1627L193.9,1627.4L195.1,1626.3L196.4,1627.7L197.6,1627.1L198.8,1627.1L200.1,1627.6L201.3,1627.5L202.5,1626.4L203.8,1626.5L205,1627.5L206.2,1626.9L207.5,1626.7L208.7,1627.4L209.9,1627L211.1,1627.3L212.4,1626.8L213.6,1626.9L214.8,1627L216.1,1627.2L217.3,1627.5L218.5,1626.4L219.8,1626.8L221,1626.8L222.2,1627.1L223.5,1626.8L224.7,1627.1L225.9,1627.5L227.2,1627.1L228.4,1627.6L229.6,1627.1L230.9,1626.3L232.1,1627.1L233.3,1627.2L234.5,1626.8L235.8,1627L237,1627.6L238.2,1627.3L239.5,1626.6L240.7,1626.6L241.9,1627.4L243.2,1627.3L244.4,1626.6L245.6,1627L246.9,1627.1L248.1,1627.5L249.3,1627.4L250.6,1628.1L251.8,1626.8L253,1626.4L254.3,1627L255.5,1627.5L256.7,1626.6L257.9,1626.7L259.2,1627.2L260.4,1627.1L261.6,1627.6L262.9,1626.9L264.1,1628.2L265.3,1627.5L266.6,1627.5L267.8,1626.5L269,1627.3L270.3,1627.9L271.5,1627L272.7,1627.8L274,1627.4L275.2,1627.6L276.4,1627.3L277.7,1627.5L278.9,1626.4L280.1,1627L281.3,1626.9L282.6,1627.1L283.8,1626.9L285,1626.6L286.3,1627.3L287.5,1627.2L288.7,1627.1L290,1627.5L291.2,1626.9L292.4,1627.5L293.7,1627.4L294.9,1626.7L296.1,1627.4L297.4,1627L298.6,1627.2L299.8,1626.9L301.1,1627.6L302.3,1627.3L303.5,1626L304.7,1626.7L306,1626.6L307.2,1627L308.4,1627.4L309.7,1627.1L310.9,1626.4L312.1,1626.2L313.4,1627.1L314.6,1627L315.8,1627.4L317.1,1627.3L318.3,1627.2L319.5,1627.7L320.8,1627.2L322,1627.4L323.2,1626.9L324.5,1627.3L325.7,1627.8L326.9,1626.6L328.1,1626.6L329.4,1626.9L330.6,1627.6L331.8,1627.1L333.1,1626.8L334.3,1627.3L335.5,1627.1L336.8,1627.1L338,1626.5L339.2,1626.3L340.5,1627.3L341.7,1626.9L342.9,1627.4L344.2,1627.9L345.4,1627.4L346.6,1626.6L347.9,1627.2L349.1,1626.8L350.3,1627.2L351.5,1627.5L352.8,1627L354,1627.3L355.2,1627.2L356.5,1627.3L357.7,1627.4L358.9,1627.1L360.2,1627.6L361.4,1627.6L362.6,1626.7L363.9,1627L365.1,1627.1L366.3,1626.3L367.6,1626.7L368.8,1627.6L370,1627.3L371.3,1627.1L372.5,1627.2L373.7,1627.5L374.9,1626.6L376.2,1627.7L377.4,1626.9L378.6,1626.9L379.9,1626.7L381.1,1627.2L382.3,1626.7L383.6,1627.1L384.8,1626.7L386,1627.6L387.3,1627.6L388.5,1626.8L389.7,1626.5L391,1626.5L392.2,1627.4L393.4,1626.5L394.7,1626.7L395.9,1627L397.1,1627.7L398.3,1627.1L399.6,1627L400.8,1627.4L402,1626.4L403.3,1626.6L404.5,1627.5L405.7,1627.5L407,1627.3L408.2,1627.3L409.4,1627L410.7,1627L411.9,1627.8L413.1,1626.7L414.4,1627.6L415.6,1627.1L416.8,1626.4L418.1,1627.3L419.3,1626.8L420.5,1627.3L421.7,1627.2L423,1628.1L424.2,1626.8L425.4,1626.3L426.7,1627.3L427.9,1627.4L429.1,1627L430.4,1626.8L431.6,1627.3L432.8,1627.4L434.1,1626.9L435.3,1627.4L436.5,1627.1L437.8,1627.1L439,1626.6L440.2,1626.8L441.5,1627.4L442.7,1627.6L443.9,1627.6L445.1,1627.1L446.4,1627L447.6,1626.7L448.8,1626.8L450.1,1626.9L451.3,1627.5L452.5,1627.6L453.8,1627.2L455,1627.3L456.2,1626.7L457.5,1627L458.7,1627.4L459.9,1627.1L461.2,1627.3L462.4,1626.5L463.6,1627.7L464.9,1627L466.1,1626.8L467.3,1627.1L468.5,1625.5L469.8,1627L471,1627.9L472.2,1626.8L473.5,1627.5L474.7,1626.4L475.9,1626.5L477.2,1626.4L478.4,1627.7L479.6,1626.3L480.9,1627.2L482.1,1626.7L483.3,1627.4L484.6,1626.6L485.8,1626.8L487,1627.2L488.3,1626.4L489.5,1626.2L490.7,1627.9L491.9,1627.1L493.2,1627.3L494.4,1627.1L495.6,1627.2L496.9,1627.1L498.1,1627.3L499.3,1626.6L500.6,1626L501.8,1626.8L503,1627.7L504.3,1626.8L505.5,1626.3L506.7,1627.7L508,1627.5L509.2,1626.8L510.4,1627.4L511.7,1627.3L512.9,1626.6L514.1,1627.6L515.3,1627.4L516.6,1627.3L517.8,1627.6L519,1626.3L520.3,1627L521.5,1627.7L522.7,1627.6L524,1626.5L525.2,1627.4L526.4,1626.8L527.7,1627.3L528.9,1626.8L530.1,1627.7L531.4,1628L532.6,1627.6L533.8,1627.6L535.1,1627.2L536.3,1627L537.5,1627.7L538.7,1627.5L540,1627.2L541.2,1626.9L542.4,1626.7L543.7,1627.5L544.9,1627.5L546.1,1627.1L547.4,1627.2L548.6,1626.5L549.8,1626.8L551.1,1626.7L552.3,1627.4L553.5,1627L554.8,1627.1L556,1626.8L557.2,1627.2L558.5,1626.4L559.7,1627.9L560.9,1627.1L562.1,1627.3L563.4,1627.3L564.6,1626.8L565.8,1627.7L567.1,1627.2L568.3,1627.1L569.5,1627.6L570.8,1626.8L572,1627.4L573.2,1627.9L574.5,1626.9L575.7,1627.3L576.9,1626.6L578.2,1627.2L579.4,1627.3L580.6,1626.4L581.9,1627.8L583.1,1628L584.3,1626.3L585.5,1627.3L586.8,1627L588,1627L589.2,1627.3L590.5,1627.2L591.7,1627L592.9,1627.2L594.2,1627L595.4,1627.2L596.6,1626.8L597.9,1627.5L599.1,1628L600.3,1627.1L601.6,1627L602.8,1627.7L604,1626.3L605.2,1627.1L606.5,1626.6L607.7,1626.9L608.9,1626.7L610.2,1627L611.4,1627.6L612.6,1626.8L613.9,1627L615.1,1627.6L616.3,1627.3L617.6,1627.4L618.8,1627.1L620,1626.9L621.3,1626.9L622.5,1627L623.7,1626.6L625,1626.1L626.2,1626.9L627.4,1627.2L628.6,1626.9L629.9,1627.6L631.1,1627.6L632.3,1627.1L633.6,1627L634.8,1627.3L636,1626.9L637.3,1627L638.5,1626.8L639.7,1626.8L641,1627.3L642.2,1626.9L643.4,1627.3L644.7,1627.1L645.9,1627.1L647.1,1627.2L648.4,1626.2L649.6,1626.9L650.8,1627.2L652,1627.7L653.3,1627.3L654.5,1628.2L655.7,1627.7L657,1627.2L658.2,1626.6L659.4,1627L660.7,1627L661.9,1627.1L663.1,1627.3L664.4,1626.6L665.6,1627.3L666.8,1627L668.1,1626.8L669.3,1626.6L670.5,1627.2L671.8,1626.9L673,1626.2L674.2,1627.1L675.4,1627L676.7,1626.4L677.9,1627.4L679.1,1627L680.4,1627.3L681.6,1626.6L682.8,1626.9L684.1,1627.3L685.3,1627.4L686.5,1626.8L687.8,1626L689,1627.2L690.2,1627L691.5,1627.7L692.7,1626.7L693.9,1627.3L695.2,1626.5L696.4,1627.2L697.6,1626.9L698.8,1627.2L700.1,1627.1L701.3,1627L702.5,1627.8L703.8,1627.6L705,1627.1L706.2,1626.7L707.5,1626.8L708.7,1627.5L709.9,1627.1L711.2,1626.8L712.4,1626.8L713.6,1627.7L714.9,1627.1L716.1,1626.7L717.3,1627.7L718.6,1627.3L719.8,1626.5L721,1626.6L722.2,1627.2L723.5,1626.8L724.7,1626.9L725.9,1627.9L727.2,1627.9L728.4,1627.9L729.6,1627.3L730.9,1627.2L732.1,1626.6L733.3,1626.6L734.6,1627.1L735.8,1627.2L737,1627.5L738.3,1627.4L739.5,1627.3L740.7,1627.4L742,1627.2L743.2,1627.7L744.4,1626.6L745.6,1627.9L746.9,1627.4L748.1,1626.5L749.3,1627.2L750.6,1627.8L751.8,1626.9L753,1627.3L754.3,1627.1L755.5,1627.7L756.7,1627.2L758,1626.8L759.2,1627.3L760.4,1627.3L761.7,1627.2L762.9,1626.9L764.1,1626.5L765.4,1627.1L766.6,1626.4L767.8,1626.7L769,1627.1L770.3,1627.6L771.5,1627.5L772.7,1626.4L774,1627.5L775.2,1626.2L776.4,1627.2L777.7,1627.1L778.9,1627.5L780.1,1627.2L781.4,1627.6L782.6,1626.9L783.8,1627.1L785.1,1627.5L786.3,1626.9L787.5,1626.9L788.8,1627.1L790,1626.5L791.2,1627L792.4,1626.7L793.7,1627.7L794.9,1627.6L796.1,1627.4L797.4,1628L798.6,1627.2L799.8,1627L801.1,1627.3L802.3,1627.2L803.5,1627L804.8,1627.3L806,1626.6L807.2,1626.7L808.5,1627.2L809.7,1626.6L810.9,1627.6L812.2,1627.3L813.4,1626.9L814.6,1627.6L815.8,1627.2L817.1,1627.8L818.3,1627L819.5,1626.9L820.8,1627.3L822,1626.7L823.2,1627.5L824.5,1627.3L825.7,1625.7L826.9,1627.1L828.2,1627.2L829.4,1626.6L830.6,1627L831.9,1627L833.1,1626.3L834.3,1627.2L835.6,1627.1L836.8,1626.8L838,1626.9L839.2,1627.1L840.5,1627.6L841.7,1627.3L842.9,1627L844.2,1626.9L845.4,1626.9L846.6,1627.5L847.9,1627.2L849.1,1626.9L850.3,1627.7L851.6,1627.4L852.8,1626.7L854,1627.3L855.3,1627.2L856.5,1627.3L857.7,1627.4L859,1627L860.2,1626.9L861.4,1626.6L862.6,1627.2L863.9,1627.1L865.1,1626.4L866.3,1627.1L867.6,1627.3L868.8,1627.2L870,1627L871.3,1627.4L872.5,1626.9L873.7,1626.5L875,1627.7L876.2,1626.5L877.4,1627.2L878.7,1627.8L879.9,1626.9L881.1,1627.6L882.4,1627L883.6,1627L884.8,1626.4L886,1627.4L887.3,1626.8L888.5,1627.4L889.7,1626.7L891,1627.2L892.2,1627.2L893.4,1627.7L894.7,1627.5L895.9,1626.6L897.1,1627.5L898.4,1627.1L899.6,1626.8L900.8,1626.9L902.1,1627.5L903.3,1626.4L904.5,1626.9L905.8,1626.6L907,1627.1L908.2,1627L909.4,1626.6L910.7,1627L911.9,1627L913.1,1627L914.4,1627.1L915.6,1627.6L916.8,1627.1L918.1,1627.1L919.3,1627.4L920.5,1627L921.8,1627L923,1626.8L924.2,1626.8L925.5,1626.8L926.7,1627.2L927.9,1626.1L929.2,1626.9L930.4,1627.2L931.6,1627.5L932.8,1627.7L934.1,1626.4L935.3,1626.8L936.5,1627L937.8,1626.4L939,1626.8L940.2,1627.1L941.5,1627L942.7,1626.3L943.9,1627.4L945.2,1626.7L946.4,1627.1L947.6,1626.4L948.9,1627L950.1,1627.4L951.3,1627.5L952.6,1627.4L953.8,1627.3L955,1626.7L956.2,1626.5L957.5,1627.7L958.7,1626.6L959.9,1626.7L961.2,1627.4L962.4,1627.1L963.6,1627.6L964.9,1626.9L966.1,1627.5L967.3,1628.3L968.6,1626.8L969.8,1627.1L971,1626.8L972.3,1627L973.5,1626.9L974.7,1627.4L976,1627.5L977.2,1627.2L978.4,1627.4L979.6,1626.7L980.9,1627.3L982.1,1626.8L983.3,1627.5L984.6,1627.2L985.8,1626.3L987,1627.1L988.3,1626.5L989.5,1627L990.7,1627.5L992,1627.9L993.2,1627.3L994.4,1627.3L995.7,1627.3L996.9,1627L998.1,1626.3L999.4,1627.4L1000.6,1627.2L1001.8,1627.1L1003,1627.2L1004.3,1627.3L1005.5,1627.1L1006.7,1627.5L1008,1627.1L1009.2,1627.6L1010.4,1627L1011.7,1626.9L1012.9,1626.7L1014.1,1626.8L1015.4,1626.1L1016.6,1626.6L1017.8,1627L1019.1,1627.5L1020.3,1626.7L1021.5,1627L1022.8,1627L1024,1627.1L1025.2,1626.3L1026.4,1626.9L1027.7,1628L1028.9,1627.5L1030.1,1626.8L1031.4,1627.2L1032.6,1627.5L1033.8,1627L1035.1,1627.3L1036.3,1627.2L1036.3,1630.6 L150.8,1630.6 Z" fill="#ef843c" fill-opacity="0.1" stroke="none"/><path d="M150.8,1626.5L152,1627.4L153.3,1627.4L154.5,1626.8L155.7,1626.6L157,1627.4L158.2,1627.4L159.4,1627.4L160.7,1627L161.9,1627.5L163.1,1627.8L164.3,1627.4L165.6,1627.4L166.8,1627.6L168,1627.3L169.3,1627.1L170.5,1627.3L171.7,1627.5L173,1627.3L174.2,1627.4L175.4,1627L176.7,1627.1L177.9,1626.5L179.1,1627.5L180.4,1627.3L181.6,1626.7L182.8,1627.3L184.1,1626.8L185.3,1627.3L186.5,1627.9L187.7,1627.2L189,1626.8L190.2,1626.9L191.4,1627.2L192.7,1627L193.9,1627.4L195.1,1626.3L196.4,1627.7L197.6,1627.1L198.8,1627.1L200.1,1627.6L201.3,1627.5L202.5,1626.4L203.8,1626.5L205,1627.5L206.2,1626.9L207.5,1626.7L208.7,1627.4L209.9,1627L211.1,1627.3L212.4,1626.8L213.6,1626.9L214.8,1627L216.1,1627.2L217.3,1627.5L218.5,1626.4L219.8,1626.8L221,1626.8L222.2,1627.1L223.5,1626.8L224.7,1627.1L225.9,1627.5L227.2,1627.1L228.4,1627.6L229.6,1627.1L230.9,1626.3L232.1,1627.1L233.3,1627.2L234.5,1626.8L235.8,1627L237,1627.6L238.2,1627.3L239.5,1626.6L240.7,1626.6L241.9,1627.4L243.2,1627.3L244.4,1626.6L245.6,1627L246.9,1627.1L248.1,1627.5L249.3,1627.4L250.6,1628.1L251.8,1626.8L253,1626.4L254.3,1627L255.5,1627.5L256.7,1626.6L257.9,1626.7L259.2,1627.2L260.4,1627.1L261.6,1627.6L262.9,1626.9L264.1,1628.2L265.3,1627.5L266.6,1627.5L267.8,1626.5L269,1627.3L270.3,1627.9L271.5,1627L272.7,1627.8L274,1627.4L275.2,1627.6L276.4,1627.3L277.7,1627.5L278.9,1626.4L280.1,1627L281.3,1626.9L282.6,1627.1L283.8,1626.9L285,1626.6L286.3,1627.3L287.5,1627.2L288.7,1627.1L290,1627.5L291.2,1626.9L292.4,1627.5L293.7,1627.4L294.9,1626.7L296.1,1627.4L297.4,1627L298.6,1627.2L299.8,1626.9L301.1,1627.6L302.3,1627.3L303.5,1626L304.7,1626.7L306,1626.6L307.2,1627L308.4,1627.4L309.7,1627.1L310.9,1626.4L312.1,1626.2L313.4,1627.1L314.6,1627L315.8,1627.4L317.1,1627.3L318.3,1627.2L319.5,1627.7L320.8,1627.2L322,1627.4L323.2,1626.9L324.5,1627.3L325.7,1627.8L326.9,1626.6L328.1,1626.6L329.4,1626.9L330.6,1627.6L331.8,1627.1L333.1,1626.8L334.3,1627.3L335.5,1627.1L336.8,1627.1L338,1626.5L339.2,1626.3L340.5,1627.3L341.7,1626.9L342.9,1627.4L344.2,1627.9L345.4,1627.4L346.6,1626.6L347.9,1627.2L349.1,1626.8L350.3,1627.2L351.5,1627.5L352.8,1627L354,1627.3L355.2,1627.2L356.5,1627.3L357.7,1627.4L358.9,1627.1L360.2,1627.6L361.4,1627.6L362.6,1626.7L363.9,1627L365.1,1627.1L366.3,1626.3L367.6,1626.7L368.8,1627.6L370,1627.3L371.3,1627.1L372.5,1627.2L373.7,1627.5L374.9,1626.6L376.2,1627.7L377.4,1626.9L378.6,1626.9L379.9,1626.7L381.1,1627.2L382.3,1626.7L383.6,1627.1L384.8,1626.7L386,1627.6L387.3,1627.6L388.5,1626.8L389.7,1626.5L391,1626.5L392.2,1627.4L393.4,1626.5L394.7,1626.7L395.9,1627L397.1,1627.7L398.3,1627.1L399.6,1627L400.8,1627.4L402,1626.4L403.3,1626.6L404.5,1627.5L405.7,1627.5L407,1627.3L408.2,1627.3L409.4,1627L410.7,1627L411.9,1627.8L413.1,1626.7L414.4,1627.6L415.6,1627.1L416.8,1626.4L418.1,1627.3L419.3,1626.8L420.5,1627.3L421.7,1627.2L423,1628.1L424.2,1626.8L425.4,1626.3L426.7,1627.3L427.9,1627.4L429.1,1627L430.4,1626.8L431.6,1627.3L432.8,1627.4L434.1,1626.9L435.3,1627.4L436.5,1627.1L437.8,1627.1L439,1626.6L440.2,1626.8L441.5,1627.4L442.7,1627.6L443.9,1627.6L445.1,1627.1L446.4,1627L447.6,1626.7L448.8,1626.8L450.1,1626.9L451.3,1627.5L452.5,1627.6L453.8,1627.2L455,1627.3L456.2,1626.7L457.5,1627L458.7,1627.4L459.9,1627.1L461.2,1627.3L462.4,1626.5L463.6,1627.7L464.9,1627L466.1,1626.8L467.3,1627.1L468.5,1625.5L469.8,1627L471,1627.9L472.2,1626.8L473.5,1627.5L474.7,1626.4L475.9,1626.5L477.2,1626.4L478.4,1627.7L479.6,1626.3L480.9,1627.2L482.1,1626.7L483.3,1627.4L484.6,1626.6L485.8,1626.8L487,1627.2L488.3,1626.4L489.5,1626.2L490.7,1627.9L491.9,1627.1L493.2,1627.3L494.4,1627.1L495.6,1627.2L496.9,1627.1L498.1,1627.3L499.3,1626.6L500.6,1626L501.8,1626.8L503,1627.7L504.3,1626.8L505.5,1626.3L506.7,1627.7L508,1627.5L509.2,1626.8L510.4,1627.4L511.7,1627.3L512.9,1626.6L514.1,1627.6L515.3,1627.4L516.6,1627.3L517.8,1627.6L519,1626.3L520.3,1627L521.5,1627.7L522.7,1627.6L524,1626.5L525.2,1627.4L526.4,1626.8L527.7,1627.3L528.9,1626.8L530.1,1627.7L531.4,1628L532.6,1627.6L533.8,1627.6L535.1,1627.2L536.3,1627L537.5,1627.7L538.7,1627.5L540,1627.2L541.2,1626.9L542.4,1626.7L543.7,1627.5L544.9,1627.5L546.1,1627.1L547.4,1627.2L548.6,1626.5L549.8,1626.8L551.1,1626.7L552.3,1627.4L553.5,1627L554.8,1627.1L556,1626.8L557.2,1627.2L558.5,1626.4L559.7,1627.9L560.9,1627.1L562.1,1627.3L563.4,1627.3L564.6,1626.8L565.8,1627.7L567.1,1627.2L568.3,1627.1L569.5,1627.6L570.8,1626.8L572,1627.4L573.2,1627.9L574.5,1626.9L575.7,1627.3L576.9,1626.6L578.2,1627.2L579.4,1627.3L580.6,1626.4L581.9,1627.8L583.1,1628L584.3,1626.3L585.5,1627.3L586.8,1627L588,1627L589.2,1627.3L590.5,1627.2L591.7,1627L592.9,1627.2L594.2,1627L595.4,1627.2L596.6,1626.8L597.9,1627.5L599.1,1628L600.3,1627.1L601.6,1627L602.8,1627.7L604,1626.3L605.2,1627.1L606.5,1626.6L607.7,1626.9L608.9,1626.7L610.2,1627L611.4,1627.6L612.6,1626.8L613.9,1627L615.1,1627.6L616.3,1627.3L617.6,1627.4L618.8,1627.1L620,1626.9L621.3,1626.9L622.5,1627L623.7,1626.6L625,1626.1L626.2,1626.9L627.4,1627.2L628.6,1626.9L629.9,1627.6L631.1,1627.6L632.3,1627.1L633.6,1627L634.8,1627.3L636,1626.9L637.3,1627L638.5,1626.8L639.7,1626.8L641,1627.3L642.2,1626.9L643.4,1627.3L644.7,1627.1L645.9,1627.1L647.1,1627.2L648.4,1626.2L649.6,1626.9L650.8,1627.2L652,1627.7L653.3,1627.3L654.5,1628.2L655.7,1627.7L657,1627.2L658.2,1626.6L659.4,1627L660.7,1627L661.9,1627.1L663.1,1627.3L664.4,1626.6L665.6,1627.3L666.8,1627L668.1,1626.8L669.3,1626.6L670.5,1627.2L671.8,1626.9L673,1626.2L674.2,1627.1L675.4,1627L676.7,1626.4L677.9,1627.4L679.1,1627L680.4,1627.3L681.6,1626.6L682.8,1626.9L684.1,1627.3L685.3,1627.4L686.5,1626.8L687.8,1626L689,1627.2L690.2,1627L691.5,1627.7L692.7,1626.7L693.9,1627.3L695.2,1626.5L696.4,1627.2L697.6,1626.9L698.8,1627.2L700.1,1627.1L701.3,1627L702.5,1627.8L703.8,1627.6L705,1627.1L706.2,1626.7L707.5,1626.8L708.7,1627.5L709.9,1627.1L711.2,1626.8L712.4,1626.8L713.6,1627.7L714.9,1627.1L716.1,1626.7L717.3,1627.7L718.6,1627.3L719.8,1626.5L721,1626.6L722.2,1627.2L723.5,1626.8L724.7,1626.9L725.9,1627.9L727.2,1627.9L728.4,1627.9L729.6,1627.3L730.9,1627.2L732.1,1626.6L733.3,1626.6L734.6,1627.1L735.8,1627.2L737,1627.5L738.3,1627.4L739.5,1627.3L740.7,1627.4L742,1627.2L743.2,1627.7L744.4,1626.6L745.6,1627.9L746.9,1627.4L748.1,1626.5L749.3,1627.2L750.6,1627.8L751.8,1626.9L753,1627.3L754.3,1627.1L755.5,1627.7L756.7,1627.2L758,1626.8L759.2,1627.3L760.4,1627.3L761.7,1627.2L762.9,1626.9L764.1,1626.5L765.4,1627.1L766.6,1626.4L767.8,1626.7L769,1627.1L770.3,1627.6L771.5,1627.5L772.7,1626.4L774,1627.5L775.2,1626.2L776.4,1627.2L777.7,1627.1L778.9,1627.5L780.1,1627.2L781.4,1627.6L782.6,1626.9L783.8,1627.1L785.1,1627.5L786.3,1626.9L787.5,1626.9L788.8,1627.1L790,1626.5L791.2,1627L792.4,1626.7L793.7,1627.7L794.9,1627.6L796.1,1627.4L797.4,1628L798.6,1627.2L799.8,1627L801.1,1627.3L802.3,1627.2L803.5,1627L804.8,1627.3L806,1626.6L807.2,1626.7L808.5,1627.2L809.7,1626.6L810.9,1627.6L812.2,1627.3L813.4,1626.9L814.6,1627.6L815.8,1627.2L817.1,1627.8L818.3,1627L819.5,1626.9L820.8,1627.3L822,1626.7L823.2,1627.5L824.5,1627.3L825.7,1625.7L826.9,1627.1L828.2,1627.2L829.4,1626.6L830.6,1627L831.9,1627L833.1,1626.3L834.3,1627.2L835.6,1627.1L836.8,1626.8L838,1626.9L839.2,1627.1L840.5,1627.6L841.7,1627.3L842.9,1627L844.2,1626.9L845.4,1626.9L846.6,1627.5L847.9,1627.2L849.1,1626.9L850.3,1627.7L851.6,1627.4L852.8,1626.7L854,1627.3L855.3,1627.2L856.5,1627.3L857.7,1627.4L859,1627L860.2,1626.9L861.4,1626.6L862.6,1627.2L863.9,1627.1L865.1,1626.4L866.3,1627.1L867.6,1627.3L868.8,1627.2L870,1627L871.3,1627.4L872.5,1626.9L873.7,1626.5L875,1627.7L876.2,1626.5L877.4,1627.2L878.7,1627.8L879.9,1626.9L881.1,1627.6L882.4,1627L883.6,1627L884.8,1626.4L886,1627.4L887.3,1626.8L888.5,1627.4L889.7,1626.7L891,1627.2L892.2,1627.2L893.4,1627.7L894.7,1627.5L895.9,1626.6L897.1,1627.5L898.4,1627.1L899.6,1626.8L900.8,1626.9L902.1,1627.5L903.3,1626.4L904.5,1626.9L905.8,1626.6L907,1627.1L908.2,1627L909.4,1626.6L910.7,1627L911.9,1627L913.1,1627L914.4,1627.1L915.6,1627.6L916.8,1627.1L918.1,1627.1L919.3,1627.4L920.5,1627L921.8,1627L923,1626.8L924.2,1626.8L925.5,1626.8L926.7,1627.2L927.9,1626.1L929.2,1626.9L930.4,1627.2L931.6,1627.5L932.8,1627.7L934.1,1626.4L935.3,1626.8L936.5,1627L937.8,1626.4L939,1626.8L940.2,1627.1L941.5,1627L942.7,1626.3L943.9,1627.4L945.2,1626.7L946.4,1627.1L947.6,1626.4L948.9,1627L950.1,1627.4L951.3,1627.5L952.6,1627.4L953.8,1627.3L955,1626.7L956.2,1626.5L957.5,1627.7L958.7,1626.6L959.9,1626.7L961.2,1627.4L962.4,1627.1L963.6,1627.6L964.9,1626.9L966.1,1627.5L967.3,1628.3L968.6,1626.8L969.8,1627.1L971,1626.8L972.3,1627L973.5,1626.9L974.7,1627.4L976,1627.5L977.2,1627.2L978.4,1627.4L979.6,1626.7L980.9,1627.3L982.1,1626.8L983.3,1627.5L984.6,1627.2L985.8,1626.3L987,1627.1L988.3,1626.5L989.5,1627L990.7,1627.5L992,1627.9L993.2,1627.3L994.4,1627.3L995.7,1627.3L996.9,1627L998.1,1626.3L999.4,1627.4L1000.6,1627.2L1001.8,1627.1L1003,1627.2L1004.3,1627.3L1005.5,1627.1L1006.7,1627.5L1008,1627.1L1009.2,1627.6L1010.4,1627L1011.7,1626.9L1012.9,1626.7L1014.1,1626.8L1015.4,1626.1L1016.6,1626.6L1017.8,1627L1019.1,1627.5L1020.3,1626.7L1021.5,1627L1022.8,1627L1024,1627.1L1025.2,1626.3L1026.4,1626.9L1027.7,1628L1028.9,1627.5L1030.1,1626.8L1031.4,1627.2L1032.6,1627.5L1033.8,1627L1035.1,1627.3L1036.3,1627.2" fill="none" stroke="#ef843c" stroke-width="2.2" stroke-linejoin="round"/>
<rect x="59.2" y="1710.6" width="30.8" height="8.4" rx="2.2" fill="#7eb26d"/><text x="107" y="1720.8" font-size="26.4" fill="#3a404b" textLength="52.5" lengthAdjust="spacingAndGlyphs" stroke="#3a404b" stroke-width="0.35">total</text><rect x="182.6" y="1710.6" width="30.8" height="8.4" rx="2.2" fill="#eab839"/><text x="231" y="1720.8" font-size="26.4" fill="#3a404b" textLength="55.6" lengthAdjust="spacingAndGlyphs" stroke="#3a404b" stroke-width="0.35">used</text><rect x="310.3" y="1710.6" width="30.8" height="8.4" rx="2.2" fill="#6ed0e0"/><text x="358.6" y="1720.8" font-size="26.4" fill="#3a404b" textLength="93.1" lengthAdjust="spacingAndGlyphs" stroke="#3a404b" stroke-width="0.35">resident</text><rect x="475.4" y="1710.6" width="30.8" height="8.4" rx="2.2" fill="#ef843c"/><text x="523.8" y="1720.8" font-size="26.4" fill="#3a404b" textLength="92.1" lengthAdjust="spacingAndGlyphs" stroke="#3a404b" stroke-width="0.35">external</text>
<text x="1648.4" y="1393.8" font-size="29.8" fill="#3f444d" text-anchor="middle" textLength="242" lengthAdjust="spacingAndGlyphs" stroke="#3f444d" stroke-width="1.5" paint-order="stroke">Heap Space Used</text>
<g stroke="#000" stroke-opacity="0.08" stroke-width="2.2"><path d="M1244.8,1453.9H2132"/><path d="M1244.8,1522.2H2132"/><path d="M1244.8,1590.2H2132"/><path d="M1278.6,1453.2V1590.2"/><path d="M1426,1453.2V1590.2"/><path d="M1576.1,1453.2V1590.2"/><path d="M1723.5,1453.2V1590.2"/><path d="M1870.9,1453.2V1590.2"/><path d="M2018.2,1453.2V1590.2"/></g>
<text x="1232.5" y="1460.8" font-size="26.4" fill="#3a404b" text-anchor="end" textLength="100.4" lengthAdjust="spacingAndGlyphs" stroke="#3a404b" stroke-width="0.35">95.4 MiB</text><text x="1232.5" y="1528.9" font-size="26.4" fill="#3a404b" text-anchor="end" textLength="100.4" lengthAdjust="spacingAndGlyphs" stroke="#3a404b" stroke-width="0.35">47.7 MiB</text><text x="1232.5" y="1597.6" font-size="26.4" fill="#3a404b" text-anchor="end" textLength="38.2" lengthAdjust="spacingAndGlyphs" stroke="#3a404b" stroke-width="0.35">0 B</text>
<text x="1278.6" y="1631.2" font-size="26.4" fill="#3a404b" text-anchor="middle" textLength="63.7" lengthAdjust="spacingAndGlyphs" stroke="#3a404b" stroke-width="0.35">12:00</text><text x="1426" y="1631.2" font-size="26.4" fill="#3a404b" text-anchor="middle" textLength="63.7" lengthAdjust="spacingAndGlyphs" stroke="#3a404b" stroke-width="0.35">16:00</text><text x="1576.1" y="1631.2" font-size="26.4" fill="#3a404b" text-anchor="middle" textLength="63.7" lengthAdjust="spacingAndGlyphs" stroke="#3a404b" stroke-width="0.35">20:00</text><text x="1723.5" y="1631.2" font-size="26.4" fill="#3a404b" text-anchor="middle" textLength="63.7" lengthAdjust="spacingAndGlyphs" stroke="#3a404b" stroke-width="0.35">00:00</text><text x="1870.9" y="1631.2" font-size="26.4" fill="#3a404b" text-anchor="middle" textLength="63.7" lengthAdjust="spacingAndGlyphs" stroke="#3a404b" stroke-width="0.35">04:00</text><text x="2018.2" y="1631.2" font-size="26.4" fill="#3a404b" text-anchor="middle" textLength="63.7" lengthAdjust="spacingAndGlyphs" stroke="#3a404b" stroke-width="0.35">08:00</text>
<path d="M1244.8,1520.7L1246,1520.7L1247.3,1520.8L1248.5,1520.7L1249.7,1520.7L1251,1520.8L1252.2,1514.8L1253.4,1514.6L1254.7,1520.8L1255.9,1520.8L1257.1,1520.7L1258.4,1520.7L1259.6,1520.8L1260.8,1520.8L1262,1520.8L1263.3,1520.7L1264.5,1520.7L1265.7,1520.7L1267,1520.8L1268.2,1515.3L1269.4,1518.1L1270.7,1514.3L1271.9,1516.9L1273.1,1514.4L1274.4,1513.1L1275.6,1518.4L1276.8,1514.4L1278.1,1517L1279.3,1513.8L1280.5,1520.7L1281.8,1512.1L1283,1515.6L1284.2,1514L1285.5,1512.3L1286.7,1520.8L1287.9,1515.2L1289.1,1512.7L1290.4,1517.6L1291.6,1520.8L1292.8,1520.8L1294.1,1520.8L1295.3,1515.3L1296.5,1520.8L1297.8,1520.8L1299,1516.4L1300.2,1518L1301.5,1513.7L1302.7,1520.8L1303.9,1514.7L1305.2,1516.6L1306.4,1513L1307.6,1515.1L1308.9,1515.4L1310.1,1514.6L1311.3,1512.6L1312.6,1517.9L1313.8,1517.7L1315,1514.1L1316.2,1517.2L1317.5,1520.8L1318.7,1517.7L1319.9,1520.7L1321.2,1520.7L1322.4,1513.7L1323.6,1520.7L1324.9,1513.2L1326.1,1513.5L1327.3,1520.7L1328.6,1511L1329.8,1517.3L1331,1512L1332.3,1520.7L1333.5,1518.2L1334.7,1517.3L1336,1520.7L1337.2,1513.7L1338.4,1520.7L1339.7,1514.8L1340.9,1514.9L1342.1,1517.9L1343.3,1514.4L1344.6,1515.4L1345.8,1516.1L1347,1512.2L1348.3,1520.8L1349.5,1517.4L1350.7,1514.6L1352,1514.9L1353.2,1518.4L1354.4,1517.2L1355.7,1520.8L1356.9,1514.3L1358.1,1516.8L1359.4,1520.8L1360.6,1517.1L1361.8,1514L1363.1,1519.9L1364.3,1519.9L1365.5,1512L1366.8,1519.9L1368,1511.2L1369.2,1519.9L1370.4,1520L1371.7,1520L1372.9,1503.9L1374.1,1514.3L1375.4,1516.8L1376.6,1519.9L1377.8,1519.9L1379.1,1520L1380.3,1516.3L1381.5,1514.8L1382.8,1519.9L1384,1507.2L1385.2,1510.9L1386.5,1520L1387.7,1503.5L1388.9,1519.8L1390.2,1515.9L1391.4,1513.6L1392.6,1514.7L1393.9,1511.2L1395.1,1519.9L1396.3,1512.9L1397.5,1519.9L1398.8,1506.1L1400,1511.4L1401.2,1506.3L1402.5,1515.8L1403.7,1516.7L1404.9,1519.9L1406.2,1505.9L1407.4,1520L1408.6,1519.9L1409.9,1512.4L1411.1,1514.1L1412.3,1519.9L1413.6,1519.9L1414.8,1503.3L1416,1520L1417.3,1516.2L1418.5,1512.3L1419.7,1514.3L1421,1519.9L1422.2,1512L1423.4,1519.9L1424.7,1516.6L1425.9,1520.7L1427.1,1520.8L1428.3,1515.3L1429.6,1509.6L1430.8,1515.8L1432,1517.5L1433.3,1515.9L1434.5,1520.8L1435.7,1517.6L1437,1514.8L1438.2,1515.6L1439.4,1510.4L1440.7,1516L1441.9,1514.9L1443.1,1508L1444.4,1508.9L1445.6,1511.1L1446.8,1517.6L1448.1,1514.4L1449.3,1520.8L1450.5,1516.9L1451.8,1515L1453,1513.8L1454.2,1510.9L1455.4,1516.9L1456.7,1520.8L1457.9,1515.1L1459.1,1520.9L1460.4,1520.8L1461.6,1515.6L1462.8,1514.4L1464.1,1516L1465.3,1513.1L1466.5,1520.7L1467.8,1512.7L1469,1517.2L1470.2,1510.3L1471.5,1520.8L1472.7,1516.1L1473.9,1520.7L1475.2,1520.8L1476.4,1517.4L1477.6,1517.6L1478.9,1520.8L1480.1,1518.3L1481.3,1520.7L1482.5,1512.8L1483.8,1520.7L1485,1520.8L1486.2,1520.8L1487.5,1520.7L1488.7,1518.3L1489.9,1517.3L1491.2,1520.7L1492.4,1510.4L1493.6,1520.7L1494.9,1515.7L1496.1,1520.8L1497.3,1512.3L1498.6,1520.7L1499.8,1515L1501,1518.1L1502.3,1520.8L1503.5,1508.1L1504.7,1515.6L1506,1515.7L1507.2,1520.7L1508.4,1515.7L1509.6,1516.5L1510.9,1512.9L1512.1,1516.5L1513.3,1520.8L1514.6,1520.8L1515.8,1517.7L1517,1509.3L1518.3,1520.7L1519.5,1520.7L1520.7,1520.8L1522,1520.7L1523.2,1520.8L1524.4,1520.8L1525.7,1520.7L1526.9,1520.8L1528.1,1520.8L1529.4,1520.7L1530.6,1520.8L1531.8,1514.7L1533.1,1514.7L1534.3,1514.7L1535.5,1514.7L1536.7,1514.8L1538,1514.7L1539.2,1514.7L1540.4,1514.7L1541.7,1514.6L1542.9,1514.7L1544.1,1514.7L1545.4,1514.8L1546.6,1514.6L1547.8,1514.6L1549.1,1520.7L1550.3,1520.7L1551.5,1520.8L1552.8,1520.8L1554,1514.8L1555.2,1514.7L1556.5,1514.7L1557.7,1514.7L1558.9,1520.8L1560.2,1520.7L1561.4,1520.7L1562.6,1520.8L1563.8,1520.8L1565.1,1520.7L1566.3,1520.7L1567.5,1520.7L1568.8,1520.8L1570,1520.8L1571.2,1514.1L1572.5,1514.1L1573.7,1514.1L1574.9,1514L1576.2,1514.1L1577.4,1514L1578.6,1514.1L1579.9,1514.1L1581.1,1514L1582.3,1514L1583.6,1514.1L1584.8,1514.1L1586,1520.8L1587.3,1520.8L1588.5,1520.7L1589.7,1520.8L1590.9,1520.7L1592.2,1520.8L1593.4,1520.7L1594.6,1520.8L1595.9,1520.8L1597.1,1520.7L1598.3,1520.8L1599.6,1520.9L1600.8,1520.8L1602,1520.8L1603.3,1520.8L1604.5,1520.7L1605.7,1520.7L1607,1520.8L1608.2,1520.8L1609.4,1520.7L1610.7,1520.8L1611.9,1520.7L1613.1,1520.8L1614.4,1520.7L1615.6,1520.7L1616.8,1520.7L1618.1,1520.8L1619.3,1520.8L1620.5,1520.8L1621.7,1520.7L1623,1520.8L1624.2,1520.8L1625.4,1520.8L1626.7,1520.7L1627.9,1520.8L1629.1,1520.8L1630.4,1520.8L1631.6,1520.7L1632.8,1520.8L1634.1,1520.8L1635.3,1520.7L1636.5,1520.8L1637.8,1520.7L1639,1520.8L1640.2,1520.7L1641.5,1520.7L1642.7,1520.7L1643.9,1520.9L1645.2,1520.7L1646.4,1520.7L1647.6,1520.7L1648.8,1520.7L1650.1,1520.7L1651.3,1520.8L1652.5,1520.7L1653.8,1520.7L1655,1520.7L1656.2,1520.8L1657.5,1520.8L1658.7,1514.7L1659.9,1514.8L1661.2,1514.8L1662.4,1514.7L1663.6,1514.6L1664.9,1514.7L1666.1,1514.6L1667.3,1514.6L1668.6,1514.6L1669.8,1514.7L1671,1514.7L1672.3,1514.7L1673.5,1514.6L1674.7,1514.7L1675.9,1514.7L1677.2,1514.7L1678.4,1520.8L1679.6,1520.8L1680.9,1520.8L1682.1,1515L1683.3,1515L1684.6,1515L1685.8,1515L1687,1514.9L1688.3,1515L1689.5,1515L1690.7,1514.9L1692,1515L1693.2,1514.9L1694.4,1515.1L1695.7,1514.9L1696.9,1515L1698.1,1515L1699.4,1515L1700.6,1515L1701.8,1520.8L1703,1520.8L1704.3,1520.8L1705.5,1520.7L1706.7,1520.8L1708,1520.7L1709.2,1520.8L1710.4,1520.7L1711.7,1520.8L1712.9,1520.8L1714.1,1520.8L1715.4,1520.8L1716.6,1520.7L1717.8,1520.7L1719.1,1520.7L1720.3,1520.7L1721.5,1520.7L1722.8,1520.7L1724,1520.8L1725.2,1520.7L1726.5,1520.8L1727.7,1520.7L1728.9,1520.8L1730.1,1520.8L1731.4,1520.7L1732.6,1520.8L1733.8,1520.7L1735.1,1520.7L1736.3,1520.7L1737.5,1520.7L1738.8,1520.8L1740,1515.7L1741.2,1515.6L1742.5,1515.6L1743.7,1515.6L1744.9,1515.6L1746.2,1515.6L1747.4,1515.5L1748.6,1515.6L1749.9,1515.6L1751.1,1515.7L1752.3,1515.7L1753.6,1515.5L1754.8,1515.6L1756,1515.6L1757.2,1515.6L1758.5,1515.6L1759.7,1515.6L1760.9,1515.7L1762.2,1515.6L1763.4,1515.6L1764.6,1515.7L1765.9,1515.6L1767.1,1515.6L1768.3,1515.7L1769.6,1515.7L1770.8,1515.6L1772,1515.6L1773.3,1515.6L1774.5,1515.6L1775.7,1515.6L1777,1515.6L1778.2,1515.7L1779.4,1515.6L1780.7,1515.6L1781.9,1515.6L1783.1,1515.6L1784.4,1515.6L1785.6,1520.7L1786.8,1520.7L1788,1520.8L1789.3,1520.8L1790.5,1520.8L1791.7,1520.8L1793,1520.8L1794.2,1516.5L1795.4,1516.4L1796.7,1516.6L1797.9,1516.5L1799.1,1516.5L1800.4,1516.6L1801.6,1516.5L1802.8,1516.5L1804.1,1520.8L1805.3,1520.8L1806.5,1520.8L1807.8,1520.7L1809,1520.8L1810.2,1520.7L1811.5,1510.4L1812.7,1510.4L1813.9,1510.5L1815.1,1517.1L1816.4,1517.1L1817.6,1517.1L1818.8,1517.1L1820.1,1517.1L1821.3,1517.1L1822.5,1517.1L1823.8,1517.1L1825,1517.1L1826.2,1517.1L1827.5,1517.2L1828.7,1517.2L1829.9,1517.1L1831.2,1517.2L1832.4,1517.1L1833.6,1517.1L1834.9,1517.1L1836.1,1517.1L1837.3,1517.1L1838.6,1517.2L1839.8,1517.1L1841,1517.2L1842.2,1517.1L1843.5,1517.2L1844.7,1517.1L1845.9,1517.1L1847.2,1517.1L1848.4,1517.1L1849.6,1517.1L1850.9,1517.1L1852.1,1517.1L1853.3,1517L1854.6,1517.1L1855.8,1517.1L1857,1517.1L1858.3,1517.1L1859.5,1517.1L1860.7,1517.1L1862,1517.1L1863.2,1517.1L1864.4,1517.1L1865.7,1517.1L1866.9,1517.2L1868.1,1517.1L1869.3,1517.2L1870.6,1517.1L1871.8,1517.1L1873,1517.1L1874.3,1517.1L1875.5,1517.1L1876.7,1517.1L1878,1517.1L1879.2,1517.1L1880.4,1517.1L1881.7,1517.1L1882.9,1517.1L1884.1,1517.1L1885.4,1517.1L1886.6,1520.7L1887.8,1520.7L1889.1,1520.8L1890.3,1520.8L1891.5,1520.7L1892.8,1520.8L1894,1520.8L1895.2,1520.8L1896.4,1520.8L1897.7,1520.8L1898.9,1520.8L1900.1,1520.7L1901.4,1520.7L1902.6,1520.7L1903.8,1520.7L1905.1,1520.7L1906.3,1520.7L1907.5,1520.7L1908.8,1520.7L1910,1520.8L1911.2,1520.8L1912.5,1520.8L1913.7,1520.7L1914.9,1520.7L1916.2,1520.8L1917.4,1520.8L1918.6,1520.7L1919.9,1520.7L1921.1,1520.7L1922.3,1520.8L1923.5,1520.8L1924.8,1520.8L1926,1520.7L1927.2,1520.7L1928.5,1520.8L1929.7,1520.7L1930.9,1520.7L1932.2,1520.7L1933.4,1520.7L1934.6,1520.8L1935.9,1520.8L1937.1,1520.7L1938.3,1520.8L1939.6,1520.8L1940.8,1520.8L1942,1520.8L1943.3,1520.8L1944.5,1520.8L1945.7,1520.7L1947,1520.7L1948.2,1520.8L1949.4,1520.8L1950.6,1520.8L1951.9,1520.8L1953.1,1520.8L1954.3,1520.8L1955.6,1520.7L1956.8,1520.7L1958,1520.8L1959.3,1520.7L1960.5,1520.7L1961.7,1520.8L1963,1520.7L1964.2,1520.8L1965.4,1520.8L1966.7,1520.8L1967.9,1520.8L1969.1,1520.7L1970.4,1520.8L1971.6,1520.7L1972.8,1520.8L1974.1,1520.8L1975.3,1520.8L1976.5,1520.7L1977.8,1520.7L1979,1520.8L1980.2,1520.8L1981.4,1520.7L1982.7,1520.8L1983.9,1520.7L1985.1,1520.7L1986.4,1520.7L1987.6,1520.7L1988.8,1520.8L1990.1,1520.8L1991.3,1520.7L1992.5,1520.7L1993.8,1520.8L1995,1520.7L1996.2,1520.8L1997.5,1520.8L1998.7,1520.8L1999.9,1520.8L2001.2,1520.8L2002.4,1520.7L2003.6,1520.8L2004.9,1520.8L2006.1,1520.7L2007.3,1520.7L2008.5,1520.8L2009.8,1520.8L2011,1520.7L2012.2,1520.8L2013.5,1520.8L2014.7,1520.8L2015.9,1520.7L2017.2,1520.8L2018.4,1520.7L2019.6,1520.7L2020.9,1520.7L2022.1,1520.8L2023.3,1520.8L2024.6,1520.7L2025.8,1520.8L2027,1520.7L2028.3,1520.7L2029.5,1520.8L2030.7,1520.8L2032,1520.7L2033.2,1520.8L2034.4,1520.8L2035.6,1520.8L2036.9,1520.7L2038.1,1520.7L2039.3,1520.9L2040.6,1520.8L2041.8,1520.7L2043,1520.8L2044.3,1520.8L2045.5,1520.8L2046.7,1520.7L2048,1520.7L2049.2,1520.8L2050.4,1520.8L2051.7,1520.8L2052.9,1520.8L2054.1,1520.7L2055.4,1520.9L2056.6,1520.7L2057.8,1520.8L2059.1,1520.8L2060.3,1520.8L2061.5,1520.8L2062.7,1520.8L2064,1520.8L2065.2,1520.8L2066.4,1520.8L2067.7,1520.7L2068.9,1520.8L2070.1,1520.8L2071.4,1520.8L2072.6,1520.8L2073.8,1520.7L2075.1,1520.7L2076.3,1520.8L2077.5,1514.6L2078.8,1514.7L2080,1514.7L2081.2,1514.7L2082.5,1514.6L2083.7,1514.7L2084.9,1514.7L2086.2,1514.7L2087.4,1511.9L2088.6,1514.7L2089.8,1514.7L2091.1,1514.7L2092.3,1514.7L2093.5,1514.7L2094.8,1514.7L2096,1511.9L2097.2,1514.8L2098.5,1514.7L2099.7,1514.7L2100.9,1514.7L2102.2,1514.8L2103.4,1520.5L2104.6,1520.5L2105.9,1520.5L2107.1,1520.5L2108.3,1520.5L2109.6,1520.5L2110.8,1520.5L2112,1520.5L2113.3,1520.4L2114.5,1520.5L2115.7,1520.5L2116.9,1520.4L2118.2,1520.4L2119.4,1520.5L2120.6,1520.5L2121.9,1520.5L2123.1,1520.4L2124.3,1520.5L2125.6,1520.4L2126.8,1520.5L2128,1520.4L2129.3,1520.5L2130.5,1520.5L2130.5,1590.2 L1244.8,1590.2 Z" fill="#6ed0e0" fill-opacity="0.1" stroke="none"/><path d="M1244.8,1520.7L1246,1520.7L1247.3,1520.8L1248.5,1520.7L1249.7,1520.7L1251,1520.8L1252.2,1514.8L1253.4,1514.6L1254.7,1520.8L1255.9,1520.8L1257.1,1520.7L1258.4,1520.7L1259.6,1520.8L1260.8,1520.8L1262,1520.8L1263.3,1520.7L1264.5,1520.7L1265.7,1520.7L1267,1520.8L1268.2,1515.3L1269.4,1518.1L1270.7,1514.3L1271.9,1516.9L1273.1,1514.4L1274.4,1513.1L1275.6,1518.4L1276.8,1514.4L1278.1,1517L1279.3,1513.8L1280.5,1520.7L1281.8,1512.1L1283,1515.6L1284.2,1514L1285.5,1512.3L1286.7,1520.8L1287.9,1515.2L1289.1,1512.7L1290.4,1517.6L1291.6,1520.8L1292.8,1520.8L1294.1,1520.8L1295.3,1515.3L1296.5,1520.8L1297.8,1520.8L1299,1516.4L1300.2,1518L1301.5,1513.7L1302.7,1520.8L1303.9,1514.7L1305.2,1516.6L1306.4,1513L1307.6,1515.1L1308.9,1515.4L1310.1,1514.6L1311.3,1512.6L1312.6,1517.9L1313.8,1517.7L1315,1514.1L1316.2,1517.2L1317.5,1520.8L1318.7,1517.7L1319.9,1520.7L1321.2,1520.7L1322.4,1513.7L1323.6,1520.7L1324.9,1513.2L1326.1,1513.5L1327.3,1520.7L1328.6,1511L1329.8,1517.3L1331,1512L1332.3,1520.7L1333.5,1518.2L1334.7,1517.3L1336,1520.7L1337.2,1513.7L1338.4,1520.7L1339.7,1514.8L1340.9,1514.9L1342.1,1517.9L1343.3,1514.4L1344.6,1515.4L1345.8,1516.1L1347,1512.2L1348.3,1520.8L1349.5,1517.4L1350.7,1514.6L1352,1514.9L1353.2,1518.4L1354.4,1517.2L1355.7,1520.8L1356.9,1514.3L1358.1,1516.8L1359.4,1520.8L1360.6,1517.1L1361.8,1514L1363.1,1519.9L1364.3,1519.9L1365.5,1512L1366.8,1519.9L1368,1511.2L1369.2,1519.9L1370.4,1520L1371.7,1520L1372.9,1503.9L1374.1,1514.3L1375.4,1516.8L1376.6,1519.9L1377.8,1519.9L1379.1,1520L1380.3,1516.3L1381.5,1514.8L1382.8,1519.9L1384,1507.2L1385.2,1510.9L1386.5,1520L1387.7,1503.5L1388.9,1519.8L1390.2,1515.9L1391.4,1513.6L1392.6,1514.7L1393.9,1511.2L1395.1,1519.9L1396.3,1512.9L1397.5,1519.9L1398.8,1506.1L1400,1511.4L1401.2,1506.3L1402.5,1515.8L1403.7,1516.7L1404.9,1519.9L1406.2,1505.9L1407.4,1520L1408.6,1519.9L1409.9,1512.4L1411.1,1514.1L1412.3,1519.9L1413.6,1519.9L1414.8,1503.3L1416,1520L1417.3,1516.2L1418.5,1512.3L1419.7,1514.3L1421,1519.9L1422.2,1512L1423.4,1519.9L1424.7,1516.6L1425.9,1520.7L1427.1,1520.8L1428.3,1515.3L1429.6,1509.6L1430.8,1515.8L1432,1517.5L1433.3,1515.9L1434.5,1520.8L1435.7,1517.6L1437,1514.8L1438.2,1515.6L1439.4,1510.4L1440.7,1516L1441.9,1514.9L1443.1,1508L1444.4,1508.9L1445.6,1511.1L1446.8,1517.6L1448.1,1514.4L1449.3,1520.8L1450.5,1516.9L1451.8,1515L1453,1513.8L1454.2,1510.9L1455.4,1516.9L1456.7,1520.8L1457.9,1515.1L1459.1,1520.9L1460.4,1520.8L1461.6,1515.6L1462.8,1514.4L1464.1,1516L1465.3,1513.1L1466.5,1520.7L1467.8,1512.7L1469,1517.2L1470.2,1510.3L1471.5,1520.8L1472.7,1516.1L1473.9,1520.7L1475.2,1520.8L1476.4,1517.4L1477.6,1517.6L1478.9,1520.8L1480.1,1518.3L1481.3,1520.7L1482.5,1512.8L1483.8,1520.7L1485,1520.8L1486.2,1520.8L1487.5,1520.7L1488.7,1518.3L1489.9,1517.3L1491.2,1520.7L1492.4,1510.4L1493.6,1520.7L1494.9,1515.7L1496.1,1520.8L1497.3,1512.3L1498.6,1520.7L1499.8,1515L1501,1518.1L1502.3,1520.8L1503.5,1508.1L1504.7,1515.6L1506,1515.7L1507.2,1520.7L1508.4,1515.7L1509.6,1516.5L1510.9,1512.9L1512.1,1516.5L1513.3,1520.8L1514.6,1520.8L1515.8,1517.7L1517,1509.3L1518.3,1520.7L1519.5,1520.7L1520.7,1520.8L1522,1520.7L1523.2,1520.8L1524.4,1520.8L1525.7,1520.7L1526.9,1520.8L1528.1,1520.8L1529.4,1520.7L1530.6,1520.8L1531.8,1514.7L1533.1,1514.7L1534.3,1514.7L1535.5,1514.7L1536.7,1514.8L1538,1514.7L1539.2,1514.7L1540.4,1514.7L1541.7,1514.6L1542.9,1514.7L1544.1,1514.7L1545.4,1514.8L1546.6,1514.6L1547.8,1514.6L1549.1,1520.7L1550.3,1520.7L1551.5,1520.8L1552.8,1520.8L1554,1514.8L1555.2,1514.7L1556.5,1514.7L1557.7,1514.7L1558.9,1520.8L1560.2,1520.7L1561.4,1520.7L1562.6,1520.8L1563.8,1520.8L1565.1,1520.7L1566.3,1520.7L1567.5,1520.7L1568.8,1520.8L1570,1520.8L1571.2,1514.1L1572.5,1514.1L1573.7,1514.1L1574.9,1514L1576.2,1514.1L1577.4,1514L1578.6,1514.1L1579.9,1514.1L1581.1,1514L1582.3,1514L1583.6,1514.1L1584.8,1514.1L1586,1520.8L1587.3,1520.8L1588.5,1520.7L1589.7,1520.8L1590.9,1520.7L1592.2,1520.8L1593.4,1520.7L1594.6,1520.8L1595.9,1520.8L1597.1,1520.7L1598.3,1520.8L1599.6,1520.9L1600.8,1520.8L1602,1520.8L1603.3,1520.8L1604.5,1520.7L1605.7,1520.7L1607,1520.8L1608.2,1520.8L1609.4,1520.7L1610.7,1520.8L1611.9,1520.7L1613.1,1520.8L1614.4,1520.7L1615.6,1520.7L1616.8,1520.7L1618.1,1520.8L1619.3,1520.8L1620.5,1520.8L1621.7,1520.7L1623,1520.8L1624.2,1520.8L1625.4,1520.8L1626.7,1520.7L1627.9,1520.8L1629.1,1520.8L1630.4,1520.8L1631.6,1520.7L1632.8,1520.8L1634.1,1520.8L1635.3,1520.7L1636.5,1520.8L1637.8,1520.7L1639,1520.8L1640.2,1520.7L1641.5,1520.7L1642.7,1520.7L1643.9,1520.9L1645.2,1520.7L1646.4,1520.7L1647.6,1520.7L1648.8,1520.7L1650.1,1520.7L1651.3,1520.8L1652.5,1520.7L1653.8,1520.7L1655,1520.7L1656.2,1520.8L1657.5,1520.8L1658.7,1514.7L1659.9,1514.8L1661.2,1514.8L1662.4,1514.7L1663.6,1514.6L1664.9,1514.7L1666.1,1514.6L1667.3,1514.6L1668.6,1514.6L1669.8,1514.7L1671,1514.7L1672.3,1514.7L1673.5,1514.6L1674.7,1514.7L1675.9,1514.7L1677.2,1514.7L1678.4,1520.8L1679.6,1520.8L1680.9,1520.8L1682.1,1515L1683.3,1515L1684.6,1515L1685.8,1515L1687,1514.9L1688.3,1515L1689.5,1515L1690.7,1514.9L1692,1515L1693.2,1514.9L1694.4,1515.1L1695.7,1514.9L1696.9,1515L1698.1,1515L1699.4,1515L1700.6,1515L1701.8,1520.8L1703,1520.8L1704.3,1520.8L1705.5,1520.7L1706.7,1520.8L1708,1520.7L1709.2,1520.8L1710.4,1520.7L1711.7,1520.8L1712.9,1520.8L1714.1,1520.8L1715.4,1520.8L1716.6,1520.7L1717.8,1520.7L1719.1,1520.7L1720.3,1520.7L1721.5,1520.7L1722.8,1520.7L1724,1520.8L1725.2,1520.7L1726.5,1520.8L1727.7,1520.7L1728.9,1520.8L1730.1,1520.8L1731.4,1520.7L1732.6,1520.8L1733.8,1520.7L1735.1,1520.7L1736.3,1520.7L1737.5,1520.7L1738.8,1520.8L1740,1515.7L1741.2,1515.6L1742.5,1515.6L1743.7,1515.6L1744.9,1515.6L1746.2,1515.6L1747.4,1515.5L1748.6,1515.6L1749.9,1515.6L1751.1,1515.7L1752.3,1515.7L1753.6,1515.5L1754.8,1515.6L1756,1515.6L1757.2,1515.6L1758.5,1515.6L1759.7,1515.6L1760.9,1515.7L1762.2,1515.6L1763.4,1515.6L1764.6,1515.7L1765.9,1515.6L1767.1,1515.6L1768.3,1515.7L1769.6,1515.7L1770.8,1515.6L1772,1515.6L1773.3,1515.6L1774.5,1515.6L1775.7,1515.6L1777,1515.6L1778.2,1515.7L1779.4,1515.6L1780.7,1515.6L1781.9,1515.6L1783.1,1515.6L1784.4,1515.6L1785.6,1520.7L1786.8,1520.7L1788,1520.8L1789.3,1520.8L1790.5,1520.8L1791.7,1520.8L1793,1520.8L1794.2,1516.5L1795.4,1516.4L1796.7,1516.6L1797.9,1516.5L1799.1,1516.5L1800.4,1516.6L1801.6,1516.5L1802.8,1516.5L1804.1,1520.8L1805.3,1520.8L1806.5,1520.8L1807.8,1520.7L1809,1520.8L1810.2,1520.7L1811.5,1510.4L1812.7,1510.4L1813.9,1510.5L1815.1,1517.1L1816.4,1517.1L1817.6,1517.1L1818.8,1517.1L1820.1,1517.1L1821.3,1517.1L1822.5,1517.1L1823.8,1517.1L1825,1517.1L1826.2,1517.1L1827.5,1517.2L1828.7,1517.2L1829.9,1517.1L1831.2,1517.2L1832.4,1517.1L1833.6,1517.1L1834.9,1517.1L1836.1,1517.1L1837.3,1517.1L1838.6,1517.2L1839.8,1517.1L1841,1517.2L1842.2,1517.1L1843.5,1517.2L1844.7,1517.1L1845.9,1517.1L1847.2,1517.1L1848.4,1517.1L1849.6,1517.1L1850.9,1517.1L1852.1,1517.1L1853.3,1517L1854.6,1517.1L1855.8,1517.1L1857,1517.1L1858.3,1517.1L1859.5,1517.1L1860.7,1517.1L1862,1517.1L1863.2,1517.1L1864.4,1517.1L1865.7,1517.1L1866.9,1517.2L1868.1,1517.1L1869.3,1517.2L1870.6,1517.1L1871.8,1517.1L1873,1517.1L1874.3,1517.1L1875.5,1517.1L1876.7,1517.1L1878,1517.1L1879.2,1517.1L1880.4,1517.1L1881.7,1517.1L1882.9,1517.1L1884.1,1517.1L1885.4,1517.1L1886.6,1520.7L1887.8,1520.7L1889.1,1520.8L1890.3,1520.8L1891.5,1520.7L1892.8,1520.8L1894,1520.8L1895.2,1520.8L1896.4,1520.8L1897.7,1520.8L1898.9,1520.8L1900.1,1520.7L1901.4,1520.7L1902.6,1520.7L1903.8,1520.7L1905.1,1520.7L1906.3,1520.7L1907.5,1520.7L1908.8,1520.7L1910,1520.8L1911.2,1520.8L1912.5,1520.8L1913.7,1520.7L1914.9,1520.7L1916.2,1520.8L1917.4,1520.8L1918.6,1520.7L1919.9,1520.7L1921.1,1520.7L1922.3,1520.8L1923.5,1520.8L1924.8,1520.8L1926,1520.7L1927.2,1520.7L1928.5,1520.8L1929.7,1520.7L1930.9,1520.7L1932.2,1520.7L1933.4,1520.7L1934.6,1520.8L1935.9,1520.8L1937.1,1520.7L1938.3,1520.8L1939.6,1520.8L1940.8,1520.8L1942,1520.8L1943.3,1520.8L1944.5,1520.8L1945.7,1520.7L1947,1520.7L1948.2,1520.8L1949.4,1520.8L1950.6,1520.8L1951.9,1520.8L1953.1,1520.8L1954.3,1520.8L1955.6,1520.7L1956.8,1520.7L1958,1520.8L1959.3,1520.7L1960.5,1520.7L1961.7,1520.8L1963,1520.7L1964.2,1520.8L1965.4,1520.8L1966.7,1520.8L1967.9,1520.8L1969.1,1520.7L1970.4,1520.8L1971.6,1520.7L1972.8,1520.8L1974.1,1520.8L1975.3,1520.8L1976.5,1520.7L1977.8,1520.7L1979,1520.8L1980.2,1520.8L1981.4,1520.7L1982.7,1520.8L1983.9,1520.7L1985.1,1520.7L1986.4,1520.7L1987.6,1520.7L1988.8,1520.8L1990.1,1520.8L1991.3,1520.7L1992.5,1520.7L1993.8,1520.8L1995,1520.7L1996.2,1520.8L1997.5,1520.8L1998.7,1520.8L1999.9,1520.8L2001.2,1520.8L2002.4,1520.7L2003.6,1520.8L2004.9,1520.8L2006.1,1520.7L2007.3,1520.7L2008.5,1520.8L2009.8,1520.8L2011,1520.7L2012.2,1520.8L2013.5,1520.8L2014.7,1520.8L2015.9,1520.7L2017.2,1520.8L2018.4,1520.7L2019.6,1520.7L2020.9,1520.7L2022.1,1520.8L2023.3,1520.8L2024.6,1520.7L2025.8,1520.8L2027,1520.7L2028.3,1520.7L2029.5,1520.8L2030.7,1520.8L2032,1520.7L2033.2,1520.8L2034.4,1520.8L2035.6,1520.8L2036.9,1520.7L2038.1,1520.7L2039.3,1520.9L2040.6,1520.8L2041.8,1520.7L2043,1520.8L2044.3,1520.8L2045.5,1520.8L2046.7,1520.7L2048,1520.7L2049.2,1520.8L2050.4,1520.8L2051.7,1520.8L2052.9,1520.8L2054.1,1520.7L2055.4,1520.9L2056.6,1520.7L2057.8,1520.8L2059.1,1520.8L2060.3,1520.8L2061.5,1520.8L2062.7,1520.8L2064,1520.8L2065.2,1520.8L2066.4,1520.8L2067.7,1520.7L2068.9,1520.8L2070.1,1520.8L2071.4,1520.8L2072.6,1520.8L2073.8,1520.7L2075.1,1520.7L2076.3,1520.8L2077.5,1514.6L2078.8,1514.7L2080,1514.7L2081.2,1514.7L2082.5,1514.6L2083.7,1514.7L2084.9,1514.7L2086.2,1514.7L2087.4,1511.9L2088.6,1514.7L2089.8,1514.7L2091.1,1514.7L2092.3,1514.7L2093.5,1514.7L2094.8,1514.7L2096,1511.9L2097.2,1514.8L2098.5,1514.7L2099.7,1514.7L2100.9,1514.7L2102.2,1514.8L2103.4,1520.5L2104.6,1520.5L2105.9,1520.5L2107.1,1520.5L2108.3,1520.5L2109.6,1520.5L2110.8,1520.5L2112,1520.5L2113.3,1520.4L2114.5,1520.5L2115.7,1520.5L2116.9,1520.4L2118.2,1520.4L2119.4,1520.5L2120.6,1520.5L2121.9,1520.5L2123.1,1520.4L2124.3,1520.5L2125.6,1520.4L2126.8,1520.5L2128,1520.4L2129.3,1520.5L2130.5,1520.5" fill="none" stroke="#6ed0e0" stroke-width="2.4" stroke-linejoin="round"/>
<path d="M1244.8,1509.7L1246,1509.7L1247.3,1509.6L1248.5,1509.7L1249.7,1509.6L1251,1509.7L1252.2,1501.2L1253.4,1501.2L1254.7,1509.6L1255.9,1509.7L1257.1,1509.7L1258.4,1509.7L1259.6,1509.6L1260.8,1509.7L1262,1509.8L1263.3,1509.7L1264.5,1509.6L1265.7,1509.6L1267,1509.7L1268.2,1502.1L1269.4,1505.9L1270.7,1500.7L1271.9,1504.6L1273.1,1500.9L1274.4,1499.1L1275.6,1506.3L1276.8,1501L1278.1,1504.4L1279.3,1500L1280.5,1509.7L1281.8,1497.6L1283,1502.4L1284.2,1500.4L1285.5,1498.1L1286.7,1509.7L1287.9,1501.9L1289.1,1498.6L1290.4,1505.2L1291.6,1509.7L1292.8,1509.7L1294.1,1509.6L1295.3,1502.2L1296.5,1509.7L1297.8,1509.7L1299,1503.5L1300.2,1505.9L1301.5,1499.8L1302.7,1509.7L1303.9,1501.2L1305.2,1503.9L1306.4,1499.1L1307.6,1501.8L1308.9,1502.3L1310.1,1501.3L1311.3,1498.4L1312.6,1505.7L1313.8,1505.5L1315,1500.5L1316.2,1504.7L1317.5,1509.8L1318.7,1505.4L1319.9,1509.7L1321.2,1509.7L1322.4,1499.9L1323.6,1509.7L1324.9,1499.3L1326.1,1499.5L1327.3,1509.7L1328.6,1496.2L1329.8,1504.9L1331,1497.6L1332.3,1509.7L1333.5,1506.3L1334.7,1504.9L1336,1509.6L1337.2,1500L1338.4,1509.7L1339.7,1501.4L1340.9,1501.5L1342.1,1505.7L1343.3,1500.9L1344.6,1502.2L1345.8,1503L1347,1497.8L1348.3,1509.7L1349.5,1505.1L1350.7,1501.1L1352,1501.4L1353.2,1506.3L1354.4,1504.6L1355.7,1509.7L1356.9,1500.6L1358.1,1504.2L1359.4,1509.7L1360.6,1504.5L1361.8,1500.3L1363.1,1508.6L1364.3,1508.5L1365.5,1497.7L1366.8,1508.5L1368,1496.4L1369.2,1508.5L1370.4,1508.4L1371.7,1508.5L1372.9,1486.3L1374.1,1500.7L1375.4,1504.1L1376.6,1508.5L1377.8,1508.5L1379.1,1508.5L1380.3,1503.5L1381.5,1501.5L1382.8,1508.5L1384,1491L1385.2,1495.9L1386.5,1508.5L1387.7,1485.5L1388.9,1508.5L1390.2,1502.9L1391.4,1499.8L1392.6,1501.3L1393.9,1496.4L1395.1,1508.5L1396.3,1498.6L1397.5,1508.5L1398.8,1489.4L1400,1496.7L1401.2,1489.6L1402.5,1502.8L1403.7,1504.2L1404.9,1508.5L1406.2,1489.1L1407.4,1508.5L1408.6,1508.6L1409.9,1498L1411.1,1500.6L1412.3,1508.5L1413.6,1508.5L1414.8,1485.2L1416,1508.5L1417.3,1503.4L1418.5,1497.8L1419.7,1500.8L1421,1508.5L1422.2,1497.5L1423.4,1508.6L1424.7,1503.9L1425.9,1509.7L1427.1,1509.6L1428.3,1502.1L1429.6,1494.1L1430.8,1502.8L1432,1505L1433.3,1502.9L1434.5,1509.7L1435.7,1505.4L1437,1501.4L1438.2,1502.6L1439.4,1495.4L1440.7,1503.2L1441.9,1501.5L1443.1,1491.9L1444.4,1493.4L1445.6,1496.2L1446.8,1505.4L1448.1,1500.7L1449.3,1509.7L1450.5,1504.2L1451.8,1501.7L1453,1500.1L1454.2,1496L1455.4,1504.2L1456.7,1509.7L1457.9,1501.8L1459.1,1509.7L1460.4,1509.7L1461.6,1502.4L1462.8,1500.9L1464.1,1503.1L1465.3,1499L1466.5,1509.7L1467.8,1498.5L1469,1504.8L1470.2,1495.2L1471.5,1509.7L1472.7,1503.2L1473.9,1509.7L1475.2,1509.6L1476.4,1505.1L1477.6,1505.2L1478.9,1509.7L1480.1,1506.2L1481.3,1509.7L1482.5,1498.5L1483.8,1509.8L1485,1509.7L1486.2,1509.7L1487.5,1509.7L1488.7,1506.4L1489.9,1504.8L1491.2,1509.7L1492.4,1495.1L1493.6,1509.7L1494.9,1502.7L1496.1,1509.7L1497.3,1497.9L1498.6,1509.7L1499.8,1501.8L1501,1506L1502.3,1509.6L1503.5,1492.3L1504.7,1502.6L1506,1502.7L1507.2,1509.6L1508.4,1502.6L1509.6,1503.8L1510.9,1498.8L1512.1,1503.8L1513.3,1509.7L1514.6,1509.7L1515.8,1505.4L1517,1493.8L1518.3,1509.7L1519.5,1509.7L1520.7,1509.7L1522,1509.7L1523.2,1509.7L1524.4,1509.6L1525.7,1509.7L1526.9,1509.7L1528.1,1509.7L1529.4,1509.7L1530.6,1509.7L1531.8,1502.1L1533.1,1496.1L1534.3,1500.5L1535.5,1502L1536.7,1501.6L1538,1501.6L1539.2,1501L1540.4,1501.7L1541.7,1501.7L1542.9,1502.2L1544.1,1502.6L1545.4,1501.5L1546.6,1501.6L1547.8,1501.6L1549.1,1509.7L1550.3,1509.8L1551.5,1509.7L1552.8,1509.7L1554,1501.7L1555.2,1500.6L1556.5,1501.3L1557.7,1501.4L1558.9,1509.7L1560.2,1509.7L1561.4,1509.7L1562.6,1509.8L1563.8,1509.8L1565.1,1509.8L1566.3,1509.6L1567.5,1509.7L1568.8,1509.7L1570,1509.7L1571.2,1501.4L1572.5,1501.1L1573.7,1500.5L1574.9,1500.4L1576.2,1500.5L1577.4,1500.1L1578.6,1501L1579.9,1501.1L1581.1,1500.5L1582.3,1499.9L1583.6,1500.7L1584.8,1501.1L1586,1509.7L1587.3,1509.7L1588.5,1509.6L1589.7,1509.8L1590.9,1509.6L1592.2,1509.6L1593.4,1509.7L1594.6,1509.7L1595.9,1509.6L1597.1,1509.7L1598.3,1509.7L1599.6,1509.7L1600.8,1509.7L1602,1509.7L1603.3,1509.6L1604.5,1509.7L1605.7,1509.7L1607,1509.8L1608.2,1509.8L1609.4,1509.7L1610.7,1509.6L1611.9,1509.7L1613.1,1509.6L1614.4,1509.7L1615.6,1509.7L1616.8,1509.8L1618.1,1509.8L1619.3,1509.7L1620.5,1509.7L1621.7,1509.7L1623,1509.7L1624.2,1509.8L1625.4,1509.7L1626.7,1509.7L1627.9,1509.7L1629.1,1509.6L1630.4,1509.7L1631.6,1509.7L1632.8,1509.7L1634.1,1509.7L1635.3,1509.7L1636.5,1509.6L1637.8,1509.7L1639,1509.7L1640.2,1509.6L1641.5,1509.6L1642.7,1509.6L1643.9,1509.7L1645.2,1509.7L1646.4,1509.7L1647.6,1509.7L1648.8,1509.7L1650.1,1509.7L1651.3,1509.6L1652.5,1509.8L1653.8,1509.7L1655,1509.7L1656.2,1509.7L1657.5,1509.7L1658.7,1501.4L1659.9,1501L1661.2,1501.4L1662.4,1502.5L1663.6,1501.6L1664.9,1501.9L1666.1,1501.1L1667.3,1501.6L1668.6,1501.1L1669.8,1501.7L1671,1500.8L1672.3,1500.8L1673.5,1502.3L1674.7,1501.2L1675.9,1501.9L1677.2,1501.3L1678.4,1509.8L1679.6,1509.7L1680.9,1509.6L1682.1,1496.8L1683.3,1501.5L1684.6,1501.4L1685.8,1502.4L1687,1502.1L1688.3,1501L1689.5,1501.5L1690.7,1501.9L1692,1502.6L1693.2,1502L1694.4,1501.9L1695.7,1501.4L1696.9,1502.4L1698.1,1502.4L1699.4,1501.1L1700.6,1502.1L1701.8,1509.6L1703,1509.7L1704.3,1509.7L1705.5,1509.7L1706.7,1509.6L1708,1509.7L1709.2,1509.7L1710.4,1509.7L1711.7,1509.7L1712.9,1509.7L1714.1,1509.7L1715.4,1509.7L1716.6,1509.7L1717.8,1509.7L1719.1,1509.7L1720.3,1509.6L1721.5,1509.7L1722.8,1509.6L1724,1509.7L1725.2,1509.7L1726.5,1509.7L1727.7,1509.7L1728.9,1509.7L1730.1,1509.7L1731.4,1509.7L1732.6,1509.7L1733.8,1509.7L1735.1,1509.8L1736.3,1509.7L1737.5,1509.7L1738.8,1509.6L1740,1501.6L1741.2,1502.7L1742.5,1502.4L1743.7,1502.8L1744.9,1502.1L1746.2,1502.9L1747.4,1502.2L1748.6,1502.6L1749.9,1502.3L1751.1,1502.3L1752.3,1503.2L1753.6,1502.7L1754.8,1503.2L1756,1502.7L1757.2,1502.8L1758.5,1503.4L1759.7,1502.6L1760.9,1502.5L1762.2,1502.3L1763.4,1502.5L1764.6,1503.1L1765.9,1502.9L1767.1,1502.6L1768.3,1502.8L1769.6,1503L1770.8,1503.1L1772,1502.3L1773.3,1502.3L1774.5,1503.5L1775.7,1502.7L1777,1503L1778.2,1502.5L1779.4,1502.2L1780.7,1502.4L1781.9,1503.1L1783.1,1502.5L1784.4,1503.1L1785.6,1509.6L1786.8,1509.7L1788,1509.7L1789.3,1509.7L1790.5,1509.7L1791.7,1509.7L1793,1509.7L1794.2,1504.2L1795.4,1503.4L1796.7,1503.6L1797.9,1504L1799.1,1504.5L1800.4,1504.3L1801.6,1503L1802.8,1504.1L1804.1,1509.7L1805.3,1509.7L1806.5,1509.6L1807.8,1509.7L1809,1509.7L1810.2,1509.7L1811.5,1495.6L1812.7,1495.8L1813.9,1496.1L1815.1,1504.8L1816.4,1504.9L1817.6,1504.7L1818.8,1504.8L1820.1,1504.8L1821.3,1504.8L1822.5,1504.8L1823.8,1504.7L1825,1504.7L1826.2,1504.8L1827.5,1504.7L1828.7,1504.8L1829.9,1504.7L1831.2,1504.8L1832.4,1504.8L1833.6,1504.8L1834.9,1504.8L1836.1,1504.8L1837.3,1504.8L1838.6,1504.8L1839.8,1504.7L1841,1504.8L1842.2,1504.7L1843.5,1504.9L1844.7,1504.8L1845.9,1504.8L1847.2,1504.8L1848.4,1504.7L1849.6,1504.7L1850.9,1504.8L1852.1,1504.8L1853.3,1504.8L1854.6,1504.8L1855.8,1504.8L1857,1504.8L1858.3,1504.8L1859.5,1504.7L1860.7,1504.8L1862,1504.8L1863.2,1504.7L1864.4,1504.8L1865.7,1504.8L1866.9,1504.8L1868.1,1504.8L1869.3,1504.8L1870.6,1504.9L1871.8,1504.8L1873,1504.8L1874.3,1504.7L1875.5,1504.8L1876.7,1504.7L1878,1504.8L1879.2,1504.8L1880.4,1504.8L1881.7,1504.7L1882.9,1504.7L1884.1,1504.9L1885.4,1504.9L1886.6,1509.7L1887.8,1509.8L1889.1,1509.7L1890.3,1509.7L1891.5,1509.7L1892.8,1509.7L1894,1509.7L1895.2,1509.6L1896.4,1509.7L1897.7,1509.6L1898.9,1509.6L1900.1,1509.7L1901.4,1509.7L1902.6,1509.7L1903.8,1509.7L1905.1,1509.7L1906.3,1509.7L1907.5,1509.6L1908.8,1509.8L1910,1509.8L1911.2,1509.6L1912.5,1509.6L1913.7,1509.6L1914.9,1509.7L1916.2,1509.7L1917.4,1509.7L1918.6,1509.7L1919.9,1509.7L1921.1,1509.7L1922.3,1509.7L1923.5,1509.7L1924.8,1509.7L1926,1509.6L1927.2,1509.7L1928.5,1509.6L1929.7,1509.7L1930.9,1509.7L1932.2,1509.7L1933.4,1509.7L1934.6,1509.8L1935.9,1509.8L1937.1,1509.7L1938.3,1509.7L1939.6,1509.7L1940.8,1509.7L1942,1509.7L1943.3,1509.6L1944.5,1509.7L1945.7,1509.6L1947,1509.7L1948.2,1509.7L1949.4,1509.8L1950.6,1509.7L1951.9,1509.7L1953.1,1509.7L1954.3,1509.7L1955.6,1509.7L1956.8,1509.7L1958,1509.7L1959.3,1509.6L1960.5,1509.7L1961.7,1509.7L1963,1509.7L1964.2,1509.7L1965.4,1509.8L1966.7,1509.8L1967.9,1509.7L1969.1,1509.6L1970.4,1509.7L1971.6,1509.7L1972.8,1509.7L1974.1,1509.7L1975.3,1509.7L1976.5,1509.7L1977.8,1509.6L1979,1509.7L1980.2,1509.7L1981.4,1509.7L1982.7,1509.6L1983.9,1509.6L1985.1,1509.7L1986.4,1509.6L1987.6,1509.7L1988.8,1509.7L1990.1,1509.7L1991.3,1509.7L1992.5,1509.7L1993.8,1509.7L1995,1509.7L1996.2,1509.8L1997.5,1509.7L1998.7,1509.7L1999.9,1509.8L2001.2,1509.7L2002.4,1509.6L2003.6,1509.7L2004.9,1509.7L2006.1,1509.7L2007.3,1509.8L2008.5,1509.8L2009.8,1509.8L2011,1509.7L2012.2,1509.7L2013.5,1509.7L2014.7,1509.7L2015.9,1509.7L2017.2,1509.7L2018.4,1509.7L2019.6,1509.7L2020.9,1509.7L2022.1,1509.8L2023.3,1509.7L2024.6,1509.7L2025.8,1509.7L2027,1509.8L2028.3,1509.7L2029.5,1509.7L2030.7,1509.7L2032,1509.7L2033.2,1509.8L2034.4,1509.7L2035.6,1509.7L2036.9,1509.7L2038.1,1509.6L2039.3,1509.6L2040.6,1509.7L2041.8,1509.6L2043,1509.7L2044.3,1509.8L2045.5,1509.7L2046.7,1509.6L2048,1509.7L2049.2,1509.8L2050.4,1509.7L2051.7,1509.7L2052.9,1509.7L2054.1,1509.6L2055.4,1509.6L2056.6,1509.7L2057.8,1509.6L2059.1,1509.7L2060.3,1509.7L2061.5,1509.6L2062.7,1509.7L2064,1509.8L2065.2,1509.7L2066.4,1509.7L2067.7,1509.7L2068.9,1509.7L2070.1,1509.7L2071.4,1509.7L2072.6,1509.7L2073.8,1509.7L2075.1,1509.7L2076.3,1509.7L2077.5,1501.1L2078.8,1502L2080,1501.5L2081.2,1501.1L2082.5,1501.8L2083.7,1501.1L2084.9,1501.1L2086.2,1501.2L2087.4,1497.9L2088.6,1502L2089.8,1501.3L2091.1,1502.3L2092.3,1501.5L2093.5,1501.8L2094.8,1501.7L2096,1497.6L2097.2,1501L2098.5,1501.5L2099.7,1501.3L2100.9,1501.1L2102.2,1501.1L2103.4,1509.3L2104.6,1509.1L2105.9,1509.2L2107.1,1509L2108.3,1508.7L2109.6,1508.8L2110.8,1509.9L2112,1509.5L2113.3,1509.4L2114.5,1509.5L2115.7,1508.8L2116.9,1509.6L2118.2,1508.6L2119.4,1509.1L2120.6,1508.9L2121.9,1509L2123.1,1508.5L2124.3,1509.7L2125.6,1508.6L2126.8,1509.6L2128,1509.4L2129.3,1509.4L2130.5,1509.2L2130.5,1518.8L2129.3,1518.8L2128,1518.7L2126.8,1518.8L2125.6,1518.7L2124.3,1518.8L2123.1,1518.7L2121.9,1518.8L2120.6,1518.8L2119.4,1518.8L2118.2,1518.7L2116.9,1518.7L2115.7,1518.7L2114.5,1518.7L2113.3,1518.7L2112,1518.8L2110.8,1518.8L2109.6,1518.8L2108.3,1518.8L2107.1,1518.8L2105.9,1518.7L2104.6,1518.8L2103.4,1518.8L2102.2,1513.1L2100.9,1513L2099.7,1512.9L2098.5,1512.9L2097.2,1513L2096,1510.2L2094.8,1513L2093.5,1513L2092.3,1512.9L2091.1,1513L2089.8,1512.9L2088.6,1513L2087.4,1510.2L2086.2,1513L2084.9,1513L2083.7,1512.9L2082.5,1512.9L2081.2,1512.9L2080,1512.9L2078.8,1513L2077.5,1512.9L2076.3,1519.1L2075.1,1519L2073.8,1519L2072.6,1519.1L2071.4,1519.1L2070.1,1519.1L2068.9,1519.1L2067.7,1519L2066.4,1519.1L2065.2,1519.1L2064,1519.1L2062.7,1519.1L2061.5,1519.1L2060.3,1519L2059.1,1519.1L2057.8,1519L2056.6,1519L2055.4,1519.1L2054.1,1519L2052.9,1519.1L2051.7,1519.1L2050.4,1519.1L2049.2,1519.1L2048,1519L2046.7,1519L2045.5,1519.1L2044.3,1519.1L2043,1519.1L2041.8,1519L2040.6,1519.1L2039.3,1519.2L2038.1,1519L2036.9,1519L2035.6,1519.1L2034.4,1519.1L2033.2,1519L2032,1519L2030.7,1519.1L2029.5,1519.1L2028.3,1519L2027,1519L2025.8,1519.1L2024.6,1519L2023.3,1519.1L2022.1,1519.1L2020.9,1519L2019.6,1519L2018.4,1519L2017.2,1519L2015.9,1519L2014.7,1519.1L2013.5,1519.1L2012.2,1519.1L2011,1519L2009.8,1519L2008.5,1519.1L2007.3,1519L2006.1,1519L2004.9,1519.1L2003.6,1519.1L2002.4,1519L2001.2,1519.1L1999.9,1519L1998.7,1519.1L1997.5,1519.1L1996.2,1519.1L1995,1519L1993.8,1519.1L1992.5,1519L1991.3,1519L1990.1,1519.1L1988.8,1519.1L1987.6,1519L1986.4,1519L1985.1,1519L1983.9,1519L1982.7,1519.1L1981.4,1519L1980.2,1519L1979,1519.1L1977.8,1519L1976.5,1519L1975.3,1519.1L1974.1,1519L1972.8,1519.1L1971.6,1519L1970.4,1519.1L1969.1,1519L1967.9,1519.1L1966.7,1519L1965.4,1519.1L1964.2,1519.1L1963,1519L1961.7,1519L1960.5,1519L1959.3,1519L1958,1519.1L1956.8,1519L1955.6,1519L1954.3,1519.1L1953.1,1519.1L1951.9,1519.1L1950.6,1519.1L1949.4,1519L1948.2,1519.1L1947,1519L1945.7,1519L1944.5,1519L1943.3,1519.1L1942,1519.1L1940.8,1519.1L1939.6,1519.1L1938.3,1519L1937.1,1519L1935.9,1519.1L1934.6,1519.1L1933.4,1519L1932.2,1519L1930.9,1519L1929.7,1519L1928.5,1519L1927.2,1519L1926,1519L1924.8,1519.1L1923.5,1519.1L1922.3,1519L1921.1,1519L1919.9,1519L1918.6,1519L1917.4,1519.1L1916.2,1519L1914.9,1519L1913.7,1519L1912.5,1519L1911.2,1519.1L1910,1519.1L1908.8,1519L1907.5,1519L1906.3,1519L1905.1,1519L1903.8,1519L1902.6,1519L1901.4,1519L1900.1,1519L1898.9,1519L1897.7,1519.1L1896.4,1519.1L1895.2,1519L1894,1519L1892.8,1519.1L1891.5,1519L1890.3,1519.1L1889.1,1519.1L1887.8,1519L1886.6,1519L1885.4,1515.3L1884.1,1515.4L1882.9,1515.4L1881.7,1515.3L1880.4,1515.4L1879.2,1515.4L1878,1515.4L1876.7,1515.4L1875.5,1515.3L1874.3,1515.4L1873,1515.4L1871.8,1515.4L1870.6,1515.4L1869.3,1515.5L1868.1,1515.4L1866.9,1515.4L1865.7,1515.4L1864.4,1515.4L1863.2,1515.4L1862,1515.3L1860.7,1515.4L1859.5,1515.4L1858.3,1515.4L1857,1515.3L1855.8,1515.4L1854.6,1515.4L1853.3,1515.3L1852.1,1515.4L1850.9,1515.4L1849.6,1515.3L1848.4,1515.4L1847.2,1515.4L1845.9,1515.4L1844.7,1515.4L1843.5,1515.4L1842.2,1515.4L1841,1515.4L1839.8,1515.3L1838.6,1515.5L1837.3,1515.4L1836.1,1515.4L1834.9,1515.4L1833.6,1515.4L1832.4,1515.4L1831.2,1515.4L1829.9,1515.4L1828.7,1515.4L1827.5,1515.5L1826.2,1515.4L1825,1515.4L1823.8,1515.4L1822.5,1515.4L1821.3,1515.4L1820.1,1515.4L1818.8,1515.4L1817.6,1515.4L1816.4,1515.3L1815.1,1515.4L1813.9,1508.8L1812.7,1508.7L1811.5,1508.7L1810.2,1519L1809,1519L1807.8,1519L1806.5,1519L1805.3,1519.1L1804.1,1519.1L1802.8,1514.8L1801.6,1514.8L1800.4,1514.9L1799.1,1514.8L1797.9,1514.7L1796.7,1514.9L1795.4,1514.7L1794.2,1514.8L1793,1519L1791.7,1519.1L1790.5,1519L1789.3,1519.1L1788,1519.1L1786.8,1519L1785.6,1519L1784.4,1513.8L1783.1,1513.9L1781.9,1513.9L1780.7,1513.9L1779.4,1513.8L1778.2,1514L1777,1513.9L1775.7,1513.9L1774.5,1513.8L1773.3,1513.9L1772,1513.9L1770.8,1513.9L1769.6,1514L1768.3,1514L1767.1,1513.9L1765.9,1513.9L1764.6,1514L1763.4,1513.9L1762.2,1513.9L1760.9,1513.9L1759.7,1513.9L1758.5,1513.8L1757.2,1513.9L1756,1513.9L1754.8,1513.9L1753.6,1513.8L1752.3,1513.9L1751.1,1513.9L1749.9,1513.9L1748.6,1513.9L1747.4,1513.8L1746.2,1513.9L1744.9,1513.8L1743.7,1513.8L1742.5,1513.9L1741.2,1513.9L1740,1513.9L1738.8,1519.1L1737.5,1519L1736.3,1519L1735.1,1519L1733.8,1519L1732.6,1519.1L1731.4,1519L1730.1,1519.1L1728.9,1519.1L1727.7,1519L1726.5,1519.1L1725.2,1519L1724,1519L1722.8,1519L1721.5,1519L1720.3,1519L1719.1,1519L1717.8,1519L1716.6,1519L1715.4,1519.1L1714.1,1519.1L1712.9,1519.1L1711.7,1519.1L1710.4,1518.9L1709.2,1519L1708,1519L1706.7,1519L1705.5,1519L1704.3,1519.1L1703,1519.1L1701.8,1519.1L1700.6,1513.3L1699.4,1513.3L1698.1,1513.2L1696.9,1513.3L1695.7,1513.2L1694.4,1513.4L1693.2,1513.2L1692,1513.3L1690.7,1513.2L1689.5,1513.3L1688.3,1513.3L1687,1513.2L1685.8,1513.3L1684.6,1513.3L1683.3,1513.3L1682.1,1513.3L1680.9,1519.1L1679.6,1519.1L1678.4,1519.1L1677.2,1513L1675.9,1513L1674.7,1513L1673.5,1512.9L1672.3,1512.9L1671,1513L1669.8,1513L1668.6,1512.9L1667.3,1512.9L1666.1,1512.9L1664.9,1513L1663.6,1512.9L1662.4,1513L1661.2,1513L1659.9,1513.1L1658.7,1512.9L1657.5,1519L1656.2,1519.1L1655,1519L1653.8,1519L1652.5,1519L1651.3,1519.1L1650.1,1519L1648.8,1519L1647.6,1519L1646.4,1519L1645.2,1519L1643.9,1519.2L1642.7,1519L1641.5,1519L1640.2,1519L1639,1519.1L1637.8,1519L1636.5,1519.1L1635.3,1519L1634.1,1519.1L1632.8,1519.1L1631.6,1519L1630.4,1519.1L1629.1,1519.1L1627.9,1519.1L1626.7,1519L1625.4,1519L1624.2,1519L1623,1519.1L1621.7,1519L1620.5,1519.1L1619.3,1519.1L1618.1,1519.1L1616.8,1519L1615.6,1519L1614.4,1519L1613.1,1519.1L1611.9,1519L1610.7,1519.1L1609.4,1519L1608.2,1519L1607,1519.1L1605.7,1519L1604.5,1519L1603.3,1519L1602,1519.1L1600.8,1519L1599.6,1519.1L1598.3,1519.1L1597.1,1519L1595.9,1519.1L1594.6,1519L1593.4,1519L1592.2,1519L1590.9,1519L1589.7,1519.1L1588.5,1519L1587.3,1519.1L1586,1519.1L1584.8,1512.4L1583.6,1512.4L1582.3,1512.3L1581.1,1512.3L1579.9,1512.4L1578.6,1512.4L1577.4,1512.3L1576.2,1512.4L1574.9,1512.3L1573.7,1512.3L1572.5,1512.4L1571.2,1512.4L1570,1519.1L1568.8,1519.1L1567.5,1519L1566.3,1519L1565.1,1519L1563.8,1519.1L1562.6,1519.1L1561.4,1519L1560.2,1519L1558.9,1519.1L1557.7,1513L1556.5,1513L1555.2,1513L1554,1513L1552.8,1519.1L1551.5,1519.1L1550.3,1519L1549.1,1518.9L1547.8,1512.9L1546.6,1512.9L1545.4,1513.1L1544.1,1513L1542.9,1513L1541.7,1512.9L1540.4,1512.9L1539.2,1513L1538,1512.9L1536.7,1513L1535.5,1513L1534.3,1513L1533.1,1512.9L1531.8,1513L1530.6,1519.1L1529.4,1519L1528.1,1519.1L1526.9,1519.1L1525.7,1519L1524.4,1519.1L1523.2,1519L1522,1519L1520.7,1519.1L1519.5,1519L1518.3,1519L1517,1507.6L1515.8,1516L1514.6,1519.1L1513.3,1519L1512.1,1514.8L1510.9,1511.2L1509.6,1514.8L1508.4,1514L1507.2,1519L1506,1514L1504.7,1513.8L1503.5,1506.4L1502.3,1519.1L1501,1516.3L1499.8,1513.3L1498.6,1519L1497.3,1510.6L1496.1,1519L1494.9,1514L1493.6,1519L1492.4,1508.7L1491.2,1519L1489.9,1515.5L1488.7,1516.6L1487.5,1519L1486.2,1519.1L1485,1519.1L1483.8,1519L1482.5,1511.1L1481.3,1519L1480.1,1516.6L1478.9,1519.1L1477.6,1515.9L1476.4,1515.7L1475.2,1519L1473.9,1519L1472.7,1514.4L1471.5,1519L1470.2,1508.5L1469,1515.4L1467.8,1511L1466.5,1519L1465.3,1511.4L1464.1,1514.2L1462.8,1512.7L1461.6,1513.8L1460.4,1519.1L1459.1,1519.1L1457.9,1513.4L1456.7,1519.1L1455.4,1515.2L1454.2,1509.1L1453,1512.1L1451.8,1513.3L1450.5,1515.2L1449.3,1519.1L1448.1,1512.7L1446.8,1515.9L1445.6,1509.3L1444.4,1507.2L1443.1,1506.3L1441.9,1513.2L1440.7,1514.3L1439.4,1508.7L1438.2,1513.9L1437,1513.1L1435.7,1515.9L1434.5,1519.1L1433.3,1514.2L1432,1515.7L1430.8,1514.1L1429.6,1507.9L1428.3,1513.6L1427.1,1519L1425.9,1519L1424.7,1514.9L1423.4,1518.2L1422.2,1510.3L1421,1518.2L1419.7,1512.6L1418.5,1510.6L1417.3,1514.5L1416,1518.3L1414.8,1501.6L1413.6,1518.2L1412.3,1518.2L1411.1,1512.4L1409.9,1510.7L1408.6,1518.2L1407.4,1518.3L1406.2,1504.2L1404.9,1518.2L1403.7,1515L1402.5,1514L1401.2,1504.5L1400,1509.7L1398.8,1504.4L1397.5,1518.2L1396.3,1511.2L1395.1,1518.2L1393.9,1509.5L1392.6,1513L1391.4,1511.8L1390.2,1514.2L1388.9,1518.1L1387.7,1501.8L1386.5,1518.2L1385.2,1509.2L1384,1505.5L1382.8,1518.2L1381.5,1513.1L1380.3,1514.6L1379.1,1518.3L1377.8,1518.2L1376.6,1518.2L1375.4,1515.1L1374.1,1512.6L1372.9,1502.2L1371.7,1518.3L1370.4,1518.3L1369.2,1518.1L1368,1509.5L1366.8,1518.2L1365.5,1510.3L1364.3,1518.2L1363.1,1518.2L1361.8,1512.3L1360.6,1515.4L1359.4,1519.1L1358.1,1515.1L1356.9,1512.6L1355.7,1519.1L1354.4,1515.5L1353.2,1516.7L1352,1513.1L1350.7,1512.9L1349.5,1515.7L1348.3,1519.1L1347,1510.5L1345.8,1514.4L1344.6,1513.6L1343.3,1512.7L1342.1,1516.1L1340.9,1513.2L1339.7,1513.1L1338.4,1519L1337.2,1512L1336,1519L1334.7,1515.6L1333.5,1516.5L1332.3,1519L1331,1510.3L1329.8,1515.6L1328.6,1509.3L1327.3,1519L1326.1,1511.8L1324.9,1511.5L1323.6,1519L1322.4,1512L1321.2,1519L1319.9,1519L1318.7,1516L1317.5,1519.1L1316.2,1515.5L1315,1512.4L1313.8,1516L1312.6,1516.2L1311.3,1510.9L1310.1,1512.9L1308.9,1513.7L1307.6,1513.4L1306.4,1511.3L1305.2,1514.9L1303.9,1512.9L1302.7,1519L1301.5,1511.9L1300.2,1516.3L1299,1514.6L1297.8,1519L1296.5,1519.1L1295.3,1513.6L1294.1,1519.1L1292.8,1519L1291.6,1519L1290.4,1515.9L1289.1,1511L1287.9,1513.4L1286.7,1519L1285.5,1510.6L1284.2,1512.3L1283,1513.9L1281.8,1510.4L1280.5,1519L1279.3,1512.1L1278.1,1515.3L1276.8,1512.7L1275.6,1516.7L1274.4,1511.4L1273.1,1512.7L1271.9,1515.2L1270.7,1512.5L1269.4,1516.3L1268.2,1513.6L1267,1519L1265.7,1519L1264.5,1519L1263.3,1519L1262,1519.1L1260.8,1519L1259.6,1519.1L1258.4,1519L1257.1,1519L1255.9,1519L1254.7,1519L1253.4,1512.9L1252.2,1513.1L1251,1519.1L1249.7,1519L1248.5,1519L1247.3,1519.1L1246,1519L1244.8,1519Z" fill="#1f78c1" fill-opacity="0.12" stroke="none"/>
<path d="M1244.8,1587.7L1246,1587.7L1247.3,1587.8L1248.5,1588L1249.7,1587.7L1251,1587.9L1252.2,1587.8L1253.4,1587.8L1254.7,1587.9L1255.9,1587.9L1257.1,1587.8L1258.4,1587.8L1259.6,1587.7L1260.8,1587.9L1262,1588L1263.3,1587.9L1264.5,1587.8L1265.7,1587.8L1267,1587.7L1268.2,1587.9L1269.4,1587.7L1270.7,1586.9L1271.9,1587.1L1273.1,1587.6L1274.4,1587.8L1275.6,1587.8L1276.8,1588L1278.1,1585.2L1279.3,1588.1L1280.5,1587.8L1281.8,1587.7L1283,1587.9L1284.2,1586.6L1285.5,1585.2L1286.7,1587.7L1287.9,1587.2L1289.1,1586.3L1290.4,1586.8L1291.6,1581.2L1292.8,1587.7L1294.1,1586.5L1295.3,1585.8L1296.5,1587.8L1297.8,1587.5L1299,1587.6L1300.2,1585.4L1301.5,1584L1302.7,1587.2L1303.9,1587.6L1305.2,1587.7L1306.4,1587.1L1307.6,1586.3L1308.9,1587.5L1310.1,1586.8L1311.3,1587.7L1312.6,1587.4L1313.8,1586L1315,1586.1L1316.2,1587.9L1317.5,1587.1L1318.7,1587.7L1319.9,1586.7L1321.2,1584.4L1322.4,1587.6L1323.6,1586.8L1324.9,1587.7L1326.1,1587.2L1327.3,1587.2L1328.6,1587.7L1329.8,1585.8L1331,1587.8L1332.3,1586.2L1333.5,1587.8L1334.7,1587.7L1336,1587.7L1337.2,1587.7L1338.4,1587.8L1339.7,1586.6L1340.9,1586.1L1342.1,1587.6L1343.3,1587.6L1344.6,1587.8L1345.8,1587.8L1347,1587.9L1348.3,1587.8L1349.5,1587.2L1350.7,1585L1352,1587.9L1353.2,1586.7L1354.4,1587.1L1355.7,1587.7L1356.9,1587.8L1358.1,1586.2L1359.4,1587.7L1360.6,1587.7L1361.8,1587.8L1363.1,1586.4L1364.3,1587.7L1365.5,1587L1366.8,1587.8L1368,1587.6L1369.2,1586.9L1370.4,1587.7L1371.7,1587.6L1372.9,1587.3L1374.1,1587.7L1375.4,1587.1L1376.6,1587.9L1377.8,1587.6L1379.1,1582.2L1380.3,1585.7L1381.5,1585.9L1382.8,1587.9L1384,1588L1385.2,1586.7L1386.5,1585.8L1387.7,1588L1388.9,1581.2L1390.2,1587.4L1391.4,1587.8L1392.6,1587.1L1393.9,1587.8L1395.1,1587.3L1396.3,1587.7L1397.5,1587.6L1398.8,1587.6L1400,1587.5L1401.2,1585.4L1402.5,1588L1403.7,1587.7L1404.9,1585.6L1406.2,1587.6L1407.4,1580.8L1408.6,1587.8L1409.9,1585.2L1411.1,1587.5L1412.3,1583L1413.6,1587.8L1414.8,1577L1416,1585.5L1417.3,1586.1L1418.5,1586.4L1419.7,1588L1421,1587.9L1422.2,1587L1423.4,1587.6L1424.7,1585.6L1425.9,1586.6L1427.1,1587.7L1428.3,1587.8L1429.6,1587.8L1430.8,1587.8L1432,1586.8L1433.3,1587.5L1434.5,1587.3L1435.7,1587.9L1437,1585.5L1438.2,1587.3L1439.4,1587.8L1440.7,1587.7L1441.9,1587.6L1443.1,1582.6L1444.4,1587.7L1445.6,1587.5L1446.8,1587.8L1448.1,1588.1L1449.3,1585.1L1450.5,1586.7L1451.8,1586.9L1453,1587.5L1454.2,1587.6L1455.4,1587.8L1456.7,1587.7L1457.9,1587.1L1459.1,1587.9L1460.4,1581.2L1461.6,1585.9L1462.8,1587.9L1464.1,1587.1L1465.3,1586.8L1466.5,1587.8L1467.8,1586L1469,1587.4L1470.2,1582.6L1471.5,1587.2L1472.7,1585.2L1473.9,1587.7L1475.2,1586.7L1476.4,1585.8L1477.6,1586.9L1478.9,1586.4L1480.1,1588L1481.3,1587.9L1482.5,1588.1L1483.8,1586.3L1485,1585.6L1486.2,1587.7L1487.5,1587.7L1488.7,1587.6L1489.9,1587.7L1491.2,1587.4L1492.4,1583.6L1493.6,1586.7L1494.9,1587.3L1496.1,1587.8L1497.3,1585.2L1498.6,1587.7L1499.8,1587.8L1501,1587.6L1502.3,1587.2L1503.5,1587.7L1504.7,1587.9L1506,1588.1L1507.2,1585.6L1508.4,1587.9L1509.6,1587.6L1510.9,1587.2L1512.1,1585.8L1513.3,1587.6L1514.6,1587.6L1515.8,1587.7L1517,1579.3L1518.3,1587.9L1519.5,1587.7L1520.7,1588L1522,1587.6L1523.2,1587.6L1524.4,1587.8L1525.7,1587.6L1526.9,1587.7L1528.1,1587.8L1529.4,1587.6L1530.6,1587.6L1531.8,1587.9L1533.1,1588L1534.3,1587.8L1535.5,1587.9L1536.7,1587.5L1538,1587.7L1539.2,1587.9L1540.4,1587.9L1541.7,1587.8L1542.9,1587.6L1544.1,1587.5L1545.4,1587.9L1546.6,1587.9L1547.8,1587.8L1549.1,1587.9L1550.3,1587.8L1551.5,1587.7L1552.8,1587.7L1554,1587.7L1555.2,1587.7L1556.5,1588L1557.7,1587.8L1558.9,1587.8L1560.2,1588L1561.4,1587.9L1562.6,1587.8L1563.8,1587.8L1565.1,1587.9L1566.3,1587.7L1567.5,1587.8L1568.8,1587.6L1570,1587.7L1571.2,1587.8L1572.5,1587.7L1573.7,1587.8L1574.9,1587.8L1576.2,1588L1577.4,1587.8L1578.6,1587.8L1579.9,1587.7L1581.1,1587.8L1582.3,1587.8L1583.6,1587.9L1584.8,1587.8L1586,1587.8L1587.3,1587.7L1588.5,1587.8L1589.7,1587.9L1590.9,1587.6L1592.2,1588L1593.4,1587.8L1594.6,1587.6L1595.9,1587.7L1597.1,1587.9L1598.3,1587.9L1599.6,1587.7L1600.8,1587.7L1602,1588L1603.3,1587.9L1604.5,1588L1605.7,1587.9L1607,1587.7L1608.2,1587.8L1609.4,1587.7L1610.7,1587.8L1611.9,1587.9L1613.1,1587.9L1614.4,1587.7L1615.6,1587.6L1616.8,1587.8L1618.1,1587.5L1619.3,1587.8L1620.5,1588L1621.7,1587.8L1623,1587.5L1624.2,1587.8L1625.4,1587.7L1626.7,1587.9L1627.9,1587.5L1629.1,1587.8L1630.4,1587.7L1631.6,1587.9L1632.8,1587.8L1634.1,1587.7L1635.3,1587.9L1636.5,1587.7L1637.8,1587.9L1639,1587.8L1640.2,1587.9L1641.5,1587.7L1642.7,1587.7L1643.9,1587.7L1645.2,1587.8L1646.4,1587.5L1647.6,1588L1648.8,1587.8L1650.1,1587.8L1651.3,1587.6L1652.5,1587.6L1653.8,1587.6L1655,1587.9L1656.2,1587.7L1657.5,1587.7L1658.7,1587.9L1659.9,1587.7L1661.2,1587.5L1662.4,1587.4L1663.6,1587.8L1664.9,1588L1666.1,1587.9L1667.3,1587.8L1668.6,1587.6L1669.8,1588L1671,1587.7L1672.3,1587.9L1673.5,1588.1L1674.7,1587.9L1675.9,1587.6L1677.2,1587.8L1678.4,1587.7L1679.6,1587.8L1680.9,1587.9L1682.1,1588L1683.3,1587.9L1684.6,1587.8L1685.8,1587.8L1687,1587.7L1688.3,1587.8L1689.5,1587.7L1690.7,1587.9L1692,1587.9L1693.2,1587.8L1694.4,1587.8L1695.7,1587.7L1696.9,1588L1698.1,1587.9L1699.4,1587.9L1700.6,1587.7L1701.8,1587.9L1703,1587.8L1704.3,1587.9L1705.5,1588.1L1706.7,1587.9L1708,1587.9L1709.2,1587.5L1710.4,1587.7L1711.7,1587.5L1712.9,1587.7L1714.1,1587.9L1715.4,1588L1716.6,1587.8L1717.8,1587.5L1719.1,1588L1720.3,1587.9L1721.5,1587.7L1722.8,1587.5L1724,1587.9L1725.2,1587.8L1726.5,1587.8L1727.7,1587.5L1728.9,1587.7L1730.1,1588L1731.4,1587.6L1732.6,1587.9L1733.8,1587.7L1735.1,1587.8L1736.3,1587.9L1737.5,1587.7L1738.8,1587.8L1740,1587.8L1741.2,1587.7L1742.5,1587.8L1743.7,1587.7L1744.9,1587.6L1746.2,1588L1747.4,1587.9L1748.6,1587.7L1749.9,1587.8L1751.1,1587.6L1752.3,1587.8L1753.6,1587.8L1754.8,1587.8L1756,1587.6L1757.2,1587.7L1758.5,1587.8L1759.7,1587.6L1760.9,1588L1762.2,1587.7L1763.4,1587.5L1764.6,1587.7L1765.9,1587.9L1767.1,1587.5L1768.3,1588L1769.6,1587.9L1770.8,1587.8L1772,1587.8L1773.3,1585.2L1774.5,1587.6L1775.7,1587.7L1777,1587.7L1778.2,1587.9L1779.4,1587.7L1780.7,1587.7L1781.9,1587.7L1783.1,1587.8L1784.4,1587.9L1785.6,1587.7L1786.8,1587.8L1788,1587.8L1789.3,1587.9L1790.5,1588L1791.7,1587.7L1793,1587.6L1794.2,1587.7L1795.4,1587.8L1796.7,1587.9L1797.9,1587.8L1799.1,1587.9L1800.4,1587.8L1801.6,1588L1802.8,1587.8L1804.1,1588L1805.3,1587.9L1806.5,1587.6L1807.8,1587.8L1809,1587.7L1810.2,1587.7L1811.5,1587.8L1812.7,1586.7L1813.9,1587.9L1815.1,1588L1816.4,1588L1817.6,1587.8L1818.8,1587.9L1820.1,1587.7L1821.3,1587.8L1822.5,1587.7L1823.8,1587.8L1825,1587.8L1826.2,1587.9L1827.5,1587.8L1828.7,1588L1829.9,1587.7L1831.2,1587.9L1832.4,1587.8L1833.6,1587.7L1834.9,1587.9L1836.1,1587.8L1837.3,1587.7L1838.6,1587.9L1839.8,1587.7L1841,1587.8L1842.2,1587.6L1843.5,1587.8L1844.7,1587.4L1845.9,1587.6L1847.2,1587.7L1848.4,1587.8L1849.6,1587.6L1850.9,1587.9L1852.1,1587.7L1853.3,1587.7L1854.6,1587.5L1855.8,1587.9L1857,1587.7L1858.3,1587.7L1859.5,1587.8L1860.7,1587.9L1862,1587.8L1863.2,1587.9L1864.4,1587.8L1865.7,1587.7L1866.9,1587.8L1868.1,1588.1L1869.3,1587.9L1870.6,1587.7L1871.8,1587.9L1873,1587.9L1874.3,1587.7L1875.5,1587.9L1876.7,1587.8L1878,1587.6L1879.2,1587.9L1880.4,1587.6L1881.7,1587.9L1882.9,1587.7L1884.1,1587.7L1885.4,1587.8L1886.6,1587.7L1887.8,1587.9L1889.1,1587.8L1890.3,1588L1891.5,1587.7L1892.8,1587.8L1894,1587.8L1895.2,1587.7L1896.4,1587.7L1897.7,1587.7L1898.9,1587.8L1900.1,1588.1L1901.4,1587.5L1902.6,1587.8L1903.8,1587.6L1905.1,1588.1L1906.3,1587.7L1907.5,1587.9L1908.8,1587.5L1910,1587.8L1911.2,1587.8L1912.5,1587.9L1913.7,1588L1914.9,1587.9L1916.2,1588L1917.4,1587.8L1918.6,1587.6L1919.9,1587.9L1921.1,1587.9L1922.3,1587.7L1923.5,1587.8L1924.8,1587.8L1926,1587.7L1927.2,1587.6L1928.5,1588L1929.7,1587.8L1930.9,1587.8L1932.2,1588L1933.4,1587.6L1934.6,1587.7L1935.9,1587.8L1937.1,1587.9L1938.3,1587.8L1939.6,1587.8L1940.8,1587.8L1942,1587.8L1943.3,1587.9L1944.5,1587.5L1945.7,1588L1947,1587.6L1948.2,1587.8L1949.4,1587.8L1950.6,1587.6L1951.9,1587.6L1953.1,1587.8L1954.3,1587.7L1955.6,1587.8L1956.8,1587.8L1958,1587.8L1959.3,1587.8L1960.5,1587.7L1961.7,1587.7L1963,1587.8L1964.2,1587.6L1965.4,1587.6L1966.7,1587.7L1967.9,1587.7L1969.1,1587.6L1970.4,1587.6L1971.6,1588L1972.8,1587.8L1974.1,1587.8L1975.3,1588L1976.5,1588L1977.8,1587.7L1979,1588.1L1980.2,1587.6L1981.4,1587.5L1982.7,1587.6L1983.9,1587.9L1985.1,1587.8L1986.4,1588.1L1987.6,1588L1988.8,1587.8L1990.1,1587.7L1991.3,1587.6L1992.5,1587.9L1993.8,1587.7L1995,1587.8L1996.2,1587.7L1997.5,1587.9L1998.7,1588.1L1999.9,1587.8L2001.2,1588L2002.4,1587.7L2003.6,1587.6L2004.9,1587.9L2006.1,1587.4L2007.3,1587.9L2008.5,1587.7L2009.8,1587.7L2011,1587.6L2012.2,1587.8L2013.5,1587.6L2014.7,1587.6L2015.9,1587.8L2017.2,1587.9L2018.4,1587.8L2019.6,1587.8L2020.9,1587.6L2022.1,1587.8L2023.3,1587.7L2024.6,1587.8L2025.8,1587.7L2027,1587.6L2028.3,1587.8L2029.5,1587.5L2030.7,1587.9L2032,1588L2033.2,1587.9L2034.4,1587.5L2035.6,1587.7L2036.9,1587.8L2038.1,1587.7L2039.3,1587.7L2040.6,1587.8L2041.8,1587.6L2043,1587.8L2044.3,1587.8L2045.5,1587.9L2046.7,1587.6L2048,1587.8L2049.2,1587.8L2050.4,1587.9L2051.7,1587.5L2052.9,1587.6L2054.1,1587.6L2055.4,1587.8L2056.6,1587.6L2057.8,1587.5L2059.1,1587.6L2060.3,1587.8L2061.5,1588L2062.7,1588L2064,1587.9L2065.2,1587.6L2066.4,1587.8L2067.7,1587.8L2068.9,1587.9L2070.1,1587.7L2071.4,1587.8L2072.6,1587.6L2073.8,1587.7L2075.1,1587.7L2076.3,1587.9L2077.5,1587.5L2078.8,1587.5L2080,1587.8L2081.2,1587.7L2082.5,1588L2083.7,1587.8L2084.9,1587.8L2086.2,1587.7L2087.4,1587.8L2088.6,1587.9L2089.8,1587.7L2091.1,1587.8L2092.3,1585.7L2093.5,1587.4L2094.8,1587.4L2096,1587.9L2097.2,1587.9L2098.5,1587.8L2099.7,1585.7L2100.9,1587.8L2102.2,1587.7L2103.4,1587.7L2104.6,1587.8L2105.9,1587.6L2107.1,1587.8L2108.3,1587.8L2109.6,1587.7L2110.8,1588L2112,1587.8L2113.3,1587.8L2114.5,1587.7L2115.7,1587.9L2116.9,1587.7L2118.2,1588L2119.4,1588L2120.6,1587.7L2121.9,1587.9L2123.1,1588.1L2124.3,1587.9L2125.6,1587.8L2126.8,1587.9L2128,1587.8L2129.3,1587.8L2130.5,1587.6" fill="none" stroke="#7eb26d" stroke-width="1.6" stroke-linejoin="round"/>
<path d="M1244.8,1586.8L1246,1586.8L1247.3,1586.9L1248.5,1587.1L1249.7,1586.8L1251,1587L1252.2,1586.9L1253.4,1586.9L1254.7,1587L1255.9,1587L1257.1,1586.9L1258.4,1586.9L1259.6,1586.8L1260.8,1587L1262,1587.1L1263.3,1587L1264.5,1586.9L1265.7,1586.9L1267,1586.8L1268.2,1587L1269.4,1586.8L1270.7,1586L1271.9,1586.2L1273.1,1586.7L1274.4,1586.9L1275.6,1586.9L1276.8,1587.1L1278.1,1584.3L1279.3,1587.2L1280.5,1586.9L1281.8,1586.8L1283,1587L1284.2,1585.7L1285.5,1584.3L1286.7,1586.8L1287.9,1586.3L1289.1,1585.4L1290.4,1585.9L1291.6,1580.3L1292.8,1586.8L1294.1,1585.6L1295.3,1584.9L1296.5,1586.9L1297.8,1586.6L1299,1586.7L1300.2,1584.5L1301.5,1583.1L1302.7,1586.3L1303.9,1586.7L1305.2,1586.8L1306.4,1586.2L1307.6,1585.4L1308.9,1586.6L1310.1,1585.9L1311.3,1586.8L1312.6,1586.5L1313.8,1585.1L1315,1585.2L1316.2,1587L1317.5,1586.2L1318.7,1586.8L1319.9,1585.8L1321.2,1583.5L1322.4,1586.7L1323.6,1585.9L1324.9,1586.8L1326.1,1586.3L1327.3,1586.3L1328.6,1586.8L1329.8,1584.9L1331,1586.9L1332.3,1585.3L1333.5,1586.9L1334.7,1586.8L1336,1586.8L1337.2,1586.8L1338.4,1586.9L1339.7,1585.7L1340.9,1585.2L1342.1,1586.7L1343.3,1586.7L1344.6,1586.9L1345.8,1586.9L1347,1587L1348.3,1586.9L1349.5,1586.3L1350.7,1584.1L1352,1587L1353.2,1585.8L1354.4,1586.2L1355.7,1586.8L1356.9,1586.9L1358.1,1585.3L1359.4,1586.8L1360.6,1586.8L1361.8,1586.9L1363.1,1585.5L1364.3,1586.8L1365.5,1586.1L1366.8,1586.9L1368,1586.7L1369.2,1586L1370.4,1586.8L1371.7,1586.7L1372.9,1586.4L1374.1,1586.8L1375.4,1586.2L1376.6,1587L1377.8,1586.7L1379.1,1581.3L1380.3,1584.8L1381.5,1585L1382.8,1587L1384,1587.1L1385.2,1585.8L1386.5,1584.9L1387.7,1587.1L1388.9,1580.3L1390.2,1586.5L1391.4,1586.9L1392.6,1586.2L1393.9,1586.9L1395.1,1586.4L1396.3,1586.8L1397.5,1586.7L1398.8,1586.7L1400,1586.6L1401.2,1584.5L1402.5,1587.1L1403.7,1586.8L1404.9,1584.7L1406.2,1586.7L1407.4,1579.9L1408.6,1586.9L1409.9,1584.3L1411.1,1586.6L1412.3,1582.1L1413.6,1586.9L1414.8,1576.1L1416,1584.6L1417.3,1585.2L1418.5,1585.5L1419.7,1587.1L1421,1587L1422.2,1586.1L1423.4,1586.7L1424.7,1584.7L1425.9,1585.7L1427.1,1586.8L1428.3,1586.9L1429.6,1586.9L1430.8,1586.9L1432,1585.9L1433.3,1586.6L1434.5,1586.4L1435.7,1587L1437,1584.6L1438.2,1586.4L1439.4,1586.9L1440.7,1586.8L1441.9,1586.7L1443.1,1581.7L1444.4,1586.8L1445.6,1586.6L1446.8,1586.9L1448.1,1587.2L1449.3,1584.2L1450.5,1585.8L1451.8,1586L1453,1586.6L1454.2,1586.7L1455.4,1586.9L1456.7,1586.8L1457.9,1586.2L1459.1,1587L1460.4,1580.3L1461.6,1585L1462.8,1587L1464.1,1586.2L1465.3,1585.9L1466.5,1586.9L1467.8,1585.1L1469,1586.5L1470.2,1581.7L1471.5,1586.3L1472.7,1584.3L1473.9,1586.8L1475.2,1585.8L1476.4,1584.9L1477.6,1586L1478.9,1585.5L1480.1,1587.1L1481.3,1587L1482.5,1587.2L1483.8,1585.4L1485,1584.7L1486.2,1586.8L1487.5,1586.8L1488.7,1586.7L1489.9,1586.8L1491.2,1586.5L1492.4,1582.7L1493.6,1585.8L1494.9,1586.4L1496.1,1586.9L1497.3,1584.3L1498.6,1586.8L1499.8,1586.9L1501,1586.7L1502.3,1586.3L1503.5,1586.8L1504.7,1587L1506,1587.2L1507.2,1584.7L1508.4,1587L1509.6,1586.7L1510.9,1586.3L1512.1,1584.9L1513.3,1586.7L1514.6,1586.7L1515.8,1586.8L1517,1578.4L1518.3,1587L1519.5,1586.8L1520.7,1587.1L1522,1586.7L1523.2,1586.7L1524.4,1586.9L1525.7,1586.7L1526.9,1586.8L1528.1,1586.9L1529.4,1586.7L1530.6,1586.7L1531.8,1587L1533.1,1587.1L1534.3,1586.9L1535.5,1587L1536.7,1586.6L1538,1586.8L1539.2,1587L1540.4,1587L1541.7,1586.9L1542.9,1586.7L1544.1,1586.6L1545.4,1587L1546.6,1587L1547.8,1586.9L1549.1,1587L1550.3,1586.9L1551.5,1586.8L1552.8,1586.8L1554,1586.8L1555.2,1586.8L1556.5,1587.1L1557.7,1586.9L1558.9,1586.9L1560.2,1587.1L1561.4,1587L1562.6,1586.9L1563.8,1586.9L1565.1,1587L1566.3,1586.8L1567.5,1586.9L1568.8,1586.7L1570,1586.8L1571.2,1586.9L1572.5,1586.8L1573.7,1586.9L1574.9,1586.9L1576.2,1587.1L1577.4,1586.9L1578.6,1586.9L1579.9,1586.8L1581.1,1586.9L1582.3,1586.9L1583.6,1587L1584.8,1586.9L1586,1586.9L1587.3,1586.8L1588.5,1586.9L1589.7,1587L1590.9,1586.7L1592.2,1587.1L1593.4,1586.9L1594.6,1586.7L1595.9,1586.8L1597.1,1587L1598.3,1587L1599.6,1586.8L1600.8,1586.8L1602,1587.1L1603.3,1587L1604.5,1587.1L1605.7,1587L1607,1586.8L1608.2,1586.9L1609.4,1586.8L1610.7,1586.9L1611.9,1587L1613.1,1587L1614.4,1586.8L1615.6,1586.7L1616.8,1586.9L1618.1,1586.6L1619.3,1586.9L1620.5,1587.1L1621.7,1586.9L1623,1586.6L1624.2,1586.9L1625.4,1586.8L1626.7,1587L1627.9,1586.6L1629.1,1586.9L1630.4,1586.8L1631.6,1587L1632.8,1586.9L1634.1,1586.8L1635.3,1587L1636.5,1586.8L1637.8,1587L1639,1586.9L1640.2,1587L1641.5,1586.8L1642.7,1586.8L1643.9,1586.8L1645.2,1586.9L1646.4,1586.6L1647.6,1587.1L1648.8,1586.9L1650.1,1586.9L1651.3,1586.7L1652.5,1586.7L1653.8,1586.7L1655,1587L1656.2,1586.8L1657.5,1586.8L1658.7,1587L1659.9,1586.8L1661.2,1586.6L1662.4,1586.5L1663.6,1586.9L1664.9,1587.1L1666.1,1587L1667.3,1586.9L1668.6,1586.7L1669.8,1587.1L1671,1586.8L1672.3,1587L1673.5,1587.2L1674.7,1587L1675.9,1586.7L1677.2,1586.9L1678.4,1586.8L1679.6,1586.9L1680.9,1587L1682.1,1587.1L1683.3,1587L1684.6,1586.9L1685.8,1586.9L1687,1586.8L1688.3,1586.9L1689.5,1586.8L1690.7,1587L1692,1587L1693.2,1586.9L1694.4,1586.9L1695.7,1586.8L1696.9,1587.1L1698.1,1587L1699.4,1587L1700.6,1586.8L1701.8,1587L1703,1586.9L1704.3,1587L1705.5,1587.2L1706.7,1587L1708,1587L1709.2,1586.6L1710.4,1586.8L1711.7,1586.6L1712.9,1586.8L1714.1,1587L1715.4,1587.1L1716.6,1586.9L1717.8,1586.6L1719.1,1587.1L1720.3,1587L1721.5,1586.8L1722.8,1586.6L1724,1587L1725.2,1586.9L1726.5,1586.9L1727.7,1586.6L1728.9,1586.8L1730.1,1587.1L1731.4,1586.7L1732.6,1587L1733.8,1586.8L1735.1,1586.9L1736.3,1587L1737.5,1586.8L1738.8,1586.9L1740,1586.9L1741.2,1586.8L1742.5,1586.9L1743.7,1586.8L1744.9,1586.7L1746.2,1587.1L1747.4,1587L1748.6,1586.8L1749.9,1586.9L1751.1,1586.7L1752.3,1586.9L1753.6,1586.9L1754.8,1586.9L1756,1586.7L1757.2,1586.8L1758.5,1586.9L1759.7,1586.7L1760.9,1587.1L1762.2,1586.8L1763.4,1586.6L1764.6,1586.8L1765.9,1587L1767.1,1586.6L1768.3,1587.1L1769.6,1587L1770.8,1586.9L1772,1586.9L1773.3,1584.3L1774.5,1586.7L1775.7,1586.8L1777,1586.8L1778.2,1587L1779.4,1586.8L1780.7,1586.8L1781.9,1586.8L1783.1,1586.9L1784.4,1587L1785.6,1586.8L1786.8,1586.9L1788,1586.9L1789.3,1587L1790.5,1587.1L1791.7,1586.8L1793,1586.7L1794.2,1586.8L1795.4,1586.9L1796.7,1587L1797.9,1586.9L1799.1,1587L1800.4,1586.9L1801.6,1587.1L1802.8,1586.9L1804.1,1587.1L1805.3,1587L1806.5,1586.7L1807.8,1586.9L1809,1586.8L1810.2,1586.8L1811.5,1586.9L1812.7,1585.8L1813.9,1587L1815.1,1587.1L1816.4,1587.1L1817.6,1586.9L1818.8,1587L1820.1,1586.8L1821.3,1586.9L1822.5,1586.8L1823.8,1586.9L1825,1586.9L1826.2,1587L1827.5,1586.9L1828.7,1587.1L1829.9,1586.8L1831.2,1587L1832.4,1586.9L1833.6,1586.8L1834.9,1587L1836.1,1586.9L1837.3,1586.8L1838.6,1587L1839.8,1586.8L1841,1586.9L1842.2,1586.7L1843.5,1586.9L1844.7,1586.5L1845.9,1586.7L1847.2,1586.8L1848.4,1586.9L1849.6,1586.7L1850.9,1587L1852.1,1586.8L1853.3,1586.8L1854.6,1586.6L1855.8,1587L1857,1586.8L1858.3,1586.8L1859.5,1586.9L1860.7,1587L1862,1586.9L1863.2,1587L1864.4,1586.9L1865.7,1586.8L1866.9,1586.9L1868.1,1587.2L1869.3,1587L1870.6,1586.8L1871.8,1587L1873,1587L1874.3,1586.8L1875.5,1587L1876.7,1586.9L1878,1586.7L1879.2,1587L1880.4,1586.7L1881.7,1587L1882.9,1586.8L1884.1,1586.8L1885.4,1586.9L1886.6,1586.8L1887.8,1587L1889.1,1586.9L1890.3,1587.1L1891.5,1586.8L1892.8,1586.9L1894,1586.9L1895.2,1586.8L1896.4,1586.8L1897.7,1586.8L1898.9,1586.9L1900.1,1587.2L1901.4,1586.6L1902.6,1586.9L1903.8,1586.7L1905.1,1587.2L1906.3,1586.8L1907.5,1587L1908.8,1586.6L1910,1586.9L1911.2,1586.9L1912.5,1587L1913.7,1587.1L1914.9,1587L1916.2,1587.1L1917.4,1586.9L1918.6,1586.7L1919.9,1587L1921.1,1587L1922.3,1586.8L1923.5,1586.9L1924.8,1586.9L1926,1586.8L1927.2,1586.7L1928.5,1587.1L1929.7,1586.9L1930.9,1586.9L1932.2,1587.1L1933.4,1586.7L1934.6,1586.8L1935.9,1586.9L1937.1,1587L1938.3,1586.9L1939.6,1586.9L1940.8,1586.9L1942,1586.9L1943.3,1587L1944.5,1586.6L1945.7,1587.1L1947,1586.7L1948.2,1586.9L1949.4,1586.9L1950.6,1586.7L1951.9,1586.7L1953.1,1586.9L1954.3,1586.8L1955.6,1586.9L1956.8,1586.9L1958,1586.9L1959.3,1586.9L1960.5,1586.8L1961.7,1586.8L1963,1586.9L1964.2,1586.7L1965.4,1586.7L1966.7,1586.8L1967.9,1586.8L1969.1,1586.7L1970.4,1586.7L1971.6,1587.1L1972.8,1586.9L1974.1,1586.9L1975.3,1587.1L1976.5,1587.1L1977.8,1586.8L1979,1587.2L1980.2,1586.7L1981.4,1586.6L1982.7,1586.7L1983.9,1587L1985.1,1586.9L1986.4,1587.2L1987.6,1587.1L1988.8,1586.9L1990.1,1586.8L1991.3,1586.7L1992.5,1587L1993.8,1586.8L1995,1586.9L1996.2,1586.8L1997.5,1587L1998.7,1587.2L1999.9,1586.9L2001.2,1587.1L2002.4,1586.8L2003.6,1586.7L2004.9,1587L2006.1,1586.5L2007.3,1587L2008.5,1586.8L2009.8,1586.8L2011,1586.7L2012.2,1586.9L2013.5,1586.7L2014.7,1586.7L2015.9,1586.9L2017.2,1587L2018.4,1586.9L2019.6,1586.9L2020.9,1586.7L2022.1,1586.9L2023.3,1586.8L2024.6,1586.9L2025.8,1586.8L2027,1586.7L2028.3,1586.9L2029.5,1586.6L2030.7,1587L2032,1587.1L2033.2,1587L2034.4,1586.6L2035.6,1586.8L2036.9,1586.9L2038.1,1586.8L2039.3,1586.8L2040.6,1586.9L2041.8,1586.7L2043,1586.9L2044.3,1586.9L2045.5,1587L2046.7,1586.7L2048,1586.9L2049.2,1586.9L2050.4,1587L2051.7,1586.6L2052.9,1586.7L2054.1,1586.7L2055.4,1586.9L2056.6,1586.7L2057.8,1586.6L2059.1,1586.7L2060.3,1586.9L2061.5,1587.1L2062.7,1587.1L2064,1587L2065.2,1586.7L2066.4,1586.9L2067.7,1586.9L2068.9,1587L2070.1,1586.8L2071.4,1586.9L2072.6,1586.7L2073.8,1586.8L2075.1,1586.8L2076.3,1587L2077.5,1586.6L2078.8,1586.6L2080,1586.9L2081.2,1586.8L2082.5,1587.1L2083.7,1586.9L2084.9,1586.9L2086.2,1586.8L2087.4,1586.9L2088.6,1587L2089.8,1586.8L2091.1,1586.9L2092.3,1584.8L2093.5,1586.5L2094.8,1586.5L2096,1587L2097.2,1587L2098.5,1586.9L2099.7,1584.8L2100.9,1586.9L2102.2,1586.8L2103.4,1586.8L2104.6,1586.9L2105.9,1586.7L2107.1,1586.9L2108.3,1586.9L2109.6,1586.8L2110.8,1587.1L2112,1586.9L2113.3,1586.9L2114.5,1586.8L2115.7,1587L2116.9,1586.8L2118.2,1587.1L2119.4,1587.1L2120.6,1586.8L2121.9,1587L2123.1,1587.2L2124.3,1587L2125.6,1586.9L2126.8,1587L2128,1586.9L2129.3,1586.9L2130.5,1586.7L2130.5,1590.2 L1244.8,1590.2 Z" fill="#eab839" fill-opacity="0.1" stroke="none"/><path d="M1244.8,1586.8L1246,1586.8L1247.3,1586.9L1248.5,1587.1L1249.7,1586.8L1251,1587L1252.2,1586.9L1253.4,1586.9L1254.7,1587L1255.9,1587L1257.1,1586.9L1258.4,1586.9L1259.6,1586.8L1260.8,1587L1262,1587.1L1263.3,1587L1264.5,1586.9L1265.7,1586.9L1267,1586.8L1268.2,1587L1269.4,1586.8L1270.7,1586L1271.9,1586.2L1273.1,1586.7L1274.4,1586.9L1275.6,1586.9L1276.8,1587.1L1278.1,1584.3L1279.3,1587.2L1280.5,1586.9L1281.8,1586.8L1283,1587L1284.2,1585.7L1285.5,1584.3L1286.7,1586.8L1287.9,1586.3L1289.1,1585.4L1290.4,1585.9L1291.6,1580.3L1292.8,1586.8L1294.1,1585.6L1295.3,1584.9L1296.5,1586.9L1297.8,1586.6L1299,1586.7L1300.2,1584.5L1301.5,1583.1L1302.7,1586.3L1303.9,1586.7L1305.2,1586.8L1306.4,1586.2L1307.6,1585.4L1308.9,1586.6L1310.1,1585.9L1311.3,1586.8L1312.6,1586.5L1313.8,1585.1L1315,1585.2L1316.2,1587L1317.5,1586.2L1318.7,1586.8L1319.9,1585.8L1321.2,1583.5L1322.4,1586.7L1323.6,1585.9L1324.9,1586.8L1326.1,1586.3L1327.3,1586.3L1328.6,1586.8L1329.8,1584.9L1331,1586.9L1332.3,1585.3L1333.5,1586.9L1334.7,1586.8L1336,1586.8L1337.2,1586.8L1338.4,1586.9L1339.7,1585.7L1340.9,1585.2L1342.1,1586.7L1343.3,1586.7L1344.6,1586.9L1345.8,1586.9L1347,1587L1348.3,1586.9L1349.5,1586.3L1350.7,1584.1L1352,1587L1353.2,1585.8L1354.4,1586.2L1355.7,1586.8L1356.9,1586.9L1358.1,1585.3L1359.4,1586.8L1360.6,1586.8L1361.8,1586.9L1363.1,1585.5L1364.3,1586.8L1365.5,1586.1L1366.8,1586.9L1368,1586.7L1369.2,1586L1370.4,1586.8L1371.7,1586.7L1372.9,1586.4L1374.1,1586.8L1375.4,1586.2L1376.6,1587L1377.8,1586.7L1379.1,1581.3L1380.3,1584.8L1381.5,1585L1382.8,1587L1384,1587.1L1385.2,1585.8L1386.5,1584.9L1387.7,1587.1L1388.9,1580.3L1390.2,1586.5L1391.4,1586.9L1392.6,1586.2L1393.9,1586.9L1395.1,1586.4L1396.3,1586.8L1397.5,1586.7L1398.8,1586.7L1400,1586.6L1401.2,1584.5L1402.5,1587.1L1403.7,1586.8L1404.9,1584.7L1406.2,1586.7L1407.4,1579.9L1408.6,1586.9L1409.9,1584.3L1411.1,1586.6L1412.3,1582.1L1413.6,1586.9L1414.8,1576.1L1416,1584.6L1417.3,1585.2L1418.5,1585.5L1419.7,1587.1L1421,1587L1422.2,1586.1L1423.4,1586.7L1424.7,1584.7L1425.9,1585.7L1427.1,1586.8L1428.3,1586.9L1429.6,1586.9L1430.8,1586.9L1432,1585.9L1433.3,1586.6L1434.5,1586.4L1435.7,1587L1437,1584.6L1438.2,1586.4L1439.4,1586.9L1440.7,1586.8L1441.9,1586.7L1443.1,1581.7L1444.4,1586.8L1445.6,1586.6L1446.8,1586.9L1448.1,1587.2L1449.3,1584.2L1450.5,1585.8L1451.8,1586L1453,1586.6L1454.2,1586.7L1455.4,1586.9L1456.7,1586.8L1457.9,1586.2L1459.1,1587L1460.4,1580.3L1461.6,1585L1462.8,1587L1464.1,1586.2L1465.3,1585.9L1466.5,1586.9L1467.8,1585.1L1469,1586.5L1470.2,1581.7L1471.5,1586.3L1472.7,1584.3L1473.9,1586.8L1475.2,1585.8L1476.4,1584.9L1477.6,1586L1478.9,1585.5L1480.1,1587.1L1481.3,1587L1482.5,1587.2L1483.8,1585.4L1485,1584.7L1486.2,1586.8L1487.5,1586.8L1488.7,1586.7L1489.9,1586.8L1491.2,1586.5L1492.4,1582.7L1493.6,1585.8L1494.9,1586.4L1496.1,1586.9L1497.3,1584.3L1498.6,1586.8L1499.8,1586.9L1501,1586.7L1502.3,1586.3L1503.5,1586.8L1504.7,1587L1506,1587.2L1507.2,1584.7L1508.4,1587L1509.6,1586.7L1510.9,1586.3L1512.1,1584.9L1513.3,1586.7L1514.6,1586.7L1515.8,1586.8L1517,1578.4L1518.3,1587L1519.5,1586.8L1520.7,1587.1L1522,1586.7L1523.2,1586.7L1524.4,1586.9L1525.7,1586.7L1526.9,1586.8L1528.1,1586.9L1529.4,1586.7L1530.6,1586.7L1531.8,1587L1533.1,1587.1L1534.3,1586.9L1535.5,1587L1536.7,1586.6L1538,1586.8L1539.2,1587L1540.4,1587L1541.7,1586.9L1542.9,1586.7L1544.1,1586.6L1545.4,1587L1546.6,1587L1547.8,1586.9L1549.1,1587L1550.3,1586.9L1551.5,1586.8L1552.8,1586.8L1554,1586.8L1555.2,1586.8L1556.5,1587.1L1557.7,1586.9L1558.9,1586.9L1560.2,1587.1L1561.4,1587L1562.6,1586.9L1563.8,1586.9L1565.1,1587L1566.3,1586.8L1567.5,1586.9L1568.8,1586.7L1570,1586.8L1571.2,1586.9L1572.5,1586.8L1573.7,1586.9L1574.9,1586.9L1576.2,1587.1L1577.4,1586.9L1578.6,1586.9L1579.9,1586.8L1581.1,1586.9L1582.3,1586.9L1583.6,1587L1584.8,1586.9L1586,1586.9L1587.3,1586.8L1588.5,1586.9L1589.7,1587L1590.9,1586.7L1592.2,1587.1L1593.4,1586.9L1594.6,1586.7L1595.9,1586.8L1597.1,1587L1598.3,1587L1599.6,1586.8L1600.8,1586.8L1602,1587.1L1603.3,1587L1604.5,1587.1L1605.7,1587L1607,1586.8L1608.2,1586.9L1609.4,1586.8L1610.7,1586.9L1611.9,1587L1613.1,1587L1614.4,1586.8L1615.6,1586.7L1616.8,1586.9L1618.1,1586.6L1619.3,1586.9L1620.5,1587.1L1621.7,1586.9L1623,1586.6L1624.2,1586.9L1625.4,1586.8L1626.7,1587L1627.9,1586.6L1629.1,1586.9L1630.4,1586.8L1631.6,1587L1632.8,1586.9L1634.1,1586.8L1635.3,1587L1636.5,1586.8L1637.8,1587L1639,1586.9L1640.2,1587L1641.5,1586.8L1642.7,1586.8L1643.9,1586.8L1645.2,1586.9L1646.4,1586.6L1647.6,1587.1L1648.8,1586.9L1650.1,1586.9L1651.3,1586.7L1652.5,1586.7L1653.8,1586.7L1655,1587L1656.2,1586.8L1657.5,1586.8L1658.7,1587L1659.9,1586.8L1661.2,1586.6L1662.4,1586.5L1663.6,1586.9L1664.9,1587.1L1666.1,1587L1667.3,1586.9L1668.6,1586.7L1669.8,1587.1L1671,1586.8L1672.3,1587L1673.5,1587.2L1674.7,1587L1675.9,1586.7L1677.2,1586.9L1678.4,1586.8L1679.6,1586.9L1680.9,1587L1682.1,1587.1L1683.3,1587L1684.6,1586.9L1685.8,1586.9L1687,1586.8L1688.3,1586.9L1689.5,1586.8L1690.7,1587L1692,1587L1693.2,1586.9L1694.4,1586.9L1695.7,1586.8L1696.9,1587.1L1698.1,1587L1699.4,1587L1700.6,1586.8L1701.8,1587L1703,1586.9L1704.3,1587L1705.5,1587.2L1706.7,1587L1708,1587L1709.2,1586.6L1710.4,1586.8L1711.7,1586.6L1712.9,1586.8L1714.1,1587L1715.4,1587.1L1716.6,1586.9L1717.8,1586.6L1719.1,1587.1L1720.3,1587L1721.5,1586.8L1722.8,1586.6L1724,1587L1725.2,1586.9L1726.5,1586.9L1727.7,1586.6L1728.9,1586.8L1730.1,1587.1L1731.4,1586.7L1732.6,1587L1733.8,1586.8L1735.1,1586.9L1736.3,1587L1737.5,1586.8L1738.8,1586.9L1740,1586.9L1741.2,1586.8L1742.5,1586.9L1743.7,1586.8L1744.9,1586.7L1746.2,1587.1L1747.4,1587L1748.6,1586.8L1749.9,1586.9L1751.1,1586.7L1752.3,1586.9L1753.6,1586.9L1754.8,1586.9L1756,1586.7L1757.2,1586.8L1758.5,1586.9L1759.7,1586.7L1760.9,1587.1L1762.2,1586.8L1763.4,1586.6L1764.6,1586.8L1765.9,1587L1767.1,1586.6L1768.3,1587.1L1769.6,1587L1770.8,1586.9L1772,1586.9L1773.3,1584.3L1774.5,1586.7L1775.7,1586.8L1777,1586.8L1778.2,1587L1779.4,1586.8L1780.7,1586.8L1781.9,1586.8L1783.1,1586.9L1784.4,1587L1785.6,1586.8L1786.8,1586.9L1788,1586.9L1789.3,1587L1790.5,1587.1L1791.7,1586.8L1793,1586.7L1794.2,1586.8L1795.4,1586.9L1796.7,1587L1797.9,1586.9L1799.1,1587L1800.4,1586.9L1801.6,1587.1L1802.8,1586.9L1804.1,1587.1L1805.3,1587L1806.5,1586.7L1807.8,1586.9L1809,1586.8L1810.2,1586.8L1811.5,1586.9L1812.7,1585.8L1813.9,1587L1815.1,1587.1L1816.4,1587.1L1817.6,1586.9L1818.8,1587L1820.1,1586.8L1821.3,1586.9L1822.5,1586.8L1823.8,1586.9L1825,1586.9L1826.2,1587L1827.5,1586.9L1828.7,1587.1L1829.9,1586.8L1831.2,1587L1832.4,1586.9L1833.6,1586.8L1834.9,1587L1836.1,1586.9L1837.3,1586.8L1838.6,1587L1839.8,1586.8L1841,1586.9L1842.2,1586.7L1843.5,1586.9L1844.7,1586.5L1845.9,1586.7L1847.2,1586.8L1848.4,1586.9L1849.6,1586.7L1850.9,1587L1852.1,1586.8L1853.3,1586.8L1854.6,1586.6L1855.8,1587L1857,1586.8L1858.3,1586.8L1859.5,1586.9L1860.7,1587L1862,1586.9L1863.2,1587L1864.4,1586.9L1865.7,1586.8L1866.9,1586.9L1868.1,1587.2L1869.3,1587L1870.6,1586.8L1871.8,1587L1873,1587L1874.3,1586.8L1875.5,1587L1876.7,1586.9L1878,1586.7L1879.2,1587L1880.4,1586.7L1881.7,1587L1882.9,1586.8L1884.1,1586.8L1885.4,1586.9L1886.6,1586.8L1887.8,1587L1889.1,1586.9L1890.3,1587.1L1891.5,1586.8L1892.8,1586.9L1894,1586.9L1895.2,1586.8L1896.4,1586.8L1897.7,1586.8L1898.9,1586.9L1900.1,1587.2L1901.4,1586.6L1902.6,1586.9L1903.8,1586.7L1905.1,1587.2L1906.3,1586.8L1907.5,1587L1908.8,1586.6L1910,1586.9L1911.2,1586.9L1912.5,1587L1913.7,1587.1L1914.9,1587L1916.2,1587.1L1917.4,1586.9L1918.6,1586.7L1919.9,1587L1921.1,1587L1922.3,1586.8L1923.5,1586.9L1924.8,1586.9L1926,1586.8L1927.2,1586.7L1928.5,1587.1L1929.7,1586.9L1930.9,1586.9L1932.2,1587.1L1933.4,1586.7L1934.6,1586.8L1935.9,1586.9L1937.1,1587L1938.3,1586.9L1939.6,1586.9L1940.8,1586.9L1942,1586.9L1943.3,1587L1944.5,1586.6L1945.7,1587.1L1947,1586.7L1948.2,1586.9L1949.4,1586.9L1950.6,1586.7L1951.9,1586.7L1953.1,1586.9L1954.3,1586.8L1955.6,1586.9L1956.8,1586.9L1958,1586.9L1959.3,1586.9L1960.5,1586.8L1961.7,1586.8L1963,1586.9L1964.2,1586.7L1965.4,1586.7L1966.7,1586.8L1967.9,1586.8L1969.1,1586.7L1970.4,1586.7L1971.6,1587.1L1972.8,1586.9L1974.1,1586.9L1975.3,1587.1L1976.5,1587.1L1977.8,1586.8L1979,1587.2L1980.2,1586.7L1981.4,1586.6L1982.7,1586.7L1983.9,1587L1985.1,1586.9L1986.4,1587.2L1987.6,1587.1L1988.8,1586.9L1990.1,1586.8L1991.3,1586.7L1992.5,1587L1993.8,1586.8L1995,1586.9L1996.2,1586.8L1997.5,1587L1998.7,1587.2L1999.9,1586.9L2001.2,1587.1L2002.4,1586.8L2003.6,1586.7L2004.9,1587L2006.1,1586.5L2007.3,1587L2008.5,1586.8L2009.8,1586.8L2011,1586.7L2012.2,1586.9L2013.5,1586.7L2014.7,1586.7L2015.9,1586.9L2017.2,1587L2018.4,1586.9L2019.6,1586.9L2020.9,1586.7L2022.1,1586.9L2023.3,1586.8L2024.6,1586.9L2025.8,1586.8L2027,1586.7L2028.3,1586.9L2029.5,1586.6L2030.7,1587L2032,1587.1L2033.2,1587L2034.4,1586.6L2035.6,1586.8L2036.9,1586.9L2038.1,1586.8L2039.3,1586.8L2040.6,1586.9L2041.8,1586.7L2043,1586.9L2044.3,1586.9L2045.5,1587L2046.7,1586.7L2048,1586.9L2049.2,1586.9L2050.4,1587L2051.7,1586.6L2052.9,1586.7L2054.1,1586.7L2055.4,1586.9L2056.6,1586.7L2057.8,1586.6L2059.1,1586.7L2060.3,1586.9L2061.5,1587.1L2062.7,1587.1L2064,1587L2065.2,1586.7L2066.4,1586.9L2067.7,1586.9L2068.9,1587L2070.1,1586.8L2071.4,1586.9L2072.6,1586.7L2073.8,1586.8L2075.1,1586.8L2076.3,1587L2077.5,1586.6L2078.8,1586.6L2080,1586.9L2081.2,1586.8L2082.5,1587.1L2083.7,1586.9L2084.9,1586.9L2086.2,1586.8L2087.4,1586.9L2088.6,1587L2089.8,1586.8L2091.1,1586.9L2092.3,1584.8L2093.5,1586.5L2094.8,1586.5L2096,1587L2097.2,1587L2098.5,1586.9L2099.7,1584.8L2100.9,1586.9L2102.2,1586.8L2103.4,1586.8L2104.6,1586.9L2105.9,1586.7L2107.1,1586.9L2108.3,1586.9L2109.6,1586.8L2110.8,1587.1L2112,1586.9L2113.3,1586.9L2114.5,1586.8L2115.7,1587L2116.9,1586.8L2118.2,1587.1L2119.4,1587.1L2120.6,1586.8L2121.9,1587L2123.1,1587.2L2124.3,1587L2125.6,1586.9L2126.8,1587L2128,1586.9L2129.3,1586.9L2130.5,1586.7" fill="none" stroke="#eab839" stroke-width="2.6" stroke-linejoin="round"/>
<path d="M1244.8,1519.9L1246,1519.9L1247.3,1520L1248.5,1519.9L1249.7,1519.9L1251,1520L1252.2,1514L1253.4,1513.8L1254.7,1519.9L1255.9,1519.9L1257.1,1519.9L1258.4,1519.9L1259.6,1520L1260.8,1519.9L1262,1520L1263.3,1519.9L1264.5,1519.9L1265.7,1519.9L1267,1519.9L1268.2,1514.5L1269.4,1517.2L1270.7,1513.4L1271.9,1516.1L1273.1,1513.6L1274.4,1512.3L1275.6,1517.6L1276.8,1513.6L1278.1,1516.2L1279.3,1513L1280.5,1519.9L1281.8,1511.3L1283,1514.8L1284.2,1513.2L1285.5,1511.5L1286.7,1519.9L1287.9,1514.3L1289.1,1511.9L1290.4,1516.8L1291.6,1519.9L1292.8,1519.9L1294.1,1520L1295.3,1514.5L1296.5,1520L1297.8,1519.9L1299,1515.5L1300.2,1517.2L1301.5,1512.8L1302.7,1519.9L1303.9,1513.8L1305.2,1515.8L1306.4,1512.2L1307.6,1514.3L1308.9,1514.6L1310.1,1513.8L1311.3,1511.8L1312.6,1517.1L1313.8,1516.9L1315,1513.3L1316.2,1516.4L1317.5,1520L1318.7,1516.9L1319.9,1519.9L1321.2,1519.9L1322.4,1512.9L1323.6,1519.9L1324.9,1512.4L1326.1,1512.7L1327.3,1519.9L1328.6,1510.2L1329.8,1516.5L1331,1511.2L1332.3,1519.9L1333.5,1517.4L1334.7,1516.5L1336,1519.9L1337.2,1512.9L1338.4,1519.9L1339.7,1514L1340.9,1514.1L1342.1,1517L1343.3,1513.6L1344.6,1514.5L1345.8,1515.3L1347,1511.4L1348.3,1520L1349.5,1516.6L1350.7,1513.8L1352,1514L1353.2,1517.6L1354.4,1516.4L1355.7,1520L1356.9,1513.5L1358.1,1516L1359.4,1520L1360.6,1516.3L1361.8,1513.2L1363.1,1519.1L1364.3,1519.1L1365.5,1511.2L1366.8,1519.1L1368,1510.4L1369.2,1519L1370.4,1519.2L1371.7,1519.2L1372.9,1503.1L1374.1,1513.5L1375.4,1516L1376.6,1519.1L1377.8,1519.1L1379.1,1519.2L1380.3,1515.5L1381.5,1514L1382.8,1519.1L1384,1506.4L1385.2,1510.1L1386.5,1519.1L1387.7,1502.7L1388.9,1519L1390.2,1515.1L1391.4,1512.7L1392.6,1513.9L1393.9,1510.4L1395.1,1519.1L1396.3,1512.1L1397.5,1519.1L1398.8,1505.3L1400,1510.6L1401.2,1505.4L1402.5,1514.9L1403.7,1515.9L1404.9,1519.1L1406.2,1505.1L1407.4,1519.2L1408.6,1519.1L1409.9,1511.6L1411.1,1513.3L1412.3,1519.1L1413.6,1519.1L1414.8,1502.5L1416,1519.2L1417.3,1515.4L1418.5,1511.5L1419.7,1513.5L1421,1519.1L1422.2,1511.2L1423.4,1519.1L1424.7,1515.8L1425.9,1519.9L1427.1,1519.9L1428.3,1514.5L1429.6,1508.8L1430.8,1515L1432,1516.6L1433.3,1515.1L1434.5,1520L1435.7,1516.8L1437,1514L1438.2,1514.8L1439.4,1509.6L1440.7,1515.2L1441.9,1514.1L1443.1,1507.2L1444.4,1508.1L1445.6,1510.2L1446.8,1516.8L1448.1,1513.6L1449.3,1520L1450.5,1516.1L1451.8,1514.2L1453,1513L1454.2,1510L1455.4,1516.1L1456.7,1520L1457.9,1514.3L1459.1,1520L1460.4,1520L1461.6,1514.7L1462.8,1513.6L1464.1,1515.1L1465.3,1512.3L1466.5,1519.9L1467.8,1511.9L1469,1516.3L1470.2,1509.4L1471.5,1519.9L1472.7,1515.3L1473.9,1519.9L1475.2,1519.9L1476.4,1516.6L1477.6,1516.8L1478.9,1520L1480.1,1517.5L1481.3,1519.9L1482.5,1512L1483.8,1519.9L1485,1520L1486.2,1520L1487.5,1519.9L1488.7,1517.5L1489.9,1516.4L1491.2,1519.9L1492.4,1509.6L1493.6,1519.9L1494.9,1514.9L1496.1,1519.9L1497.3,1511.5L1498.6,1519.9L1499.8,1514.2L1501,1517.2L1502.3,1520L1503.5,1507.3L1504.7,1514.7L1506,1514.9L1507.2,1519.9L1508.4,1514.9L1509.6,1515.7L1510.9,1512.1L1512.1,1515.7L1513.3,1519.9L1514.6,1520L1515.8,1516.9L1517,1508.5L1518.3,1519.9L1519.5,1519.9L1520.7,1520L1522,1519.9L1523.2,1519.9L1524.4,1520L1525.7,1519.9L1526.9,1520L1528.1,1520L1529.4,1519.9L1530.6,1520L1531.8,1513.9L1533.1,1513.8L1534.3,1513.9L1535.5,1513.9L1536.7,1513.9L1538,1513.8L1539.2,1513.9L1540.4,1513.8L1541.7,1513.8L1542.9,1513.9L1544.1,1513.9L1545.4,1514L1546.6,1513.8L1547.8,1513.8L1549.1,1519.8L1550.3,1519.9L1551.5,1520L1552.8,1520L1554,1513.9L1555.2,1513.9L1556.5,1513.9L1557.7,1513.9L1558.9,1520L1560.2,1519.9L1561.4,1519.9L1562.6,1520L1563.8,1520L1565.1,1519.9L1566.3,1519.9L1567.5,1519.9L1568.8,1520L1570,1520L1571.2,1513.3L1572.5,1513.3L1573.7,1513.2L1574.9,1513.2L1576.2,1513.3L1577.4,1513.2L1578.6,1513.3L1579.9,1513.3L1581.1,1513.2L1582.3,1513.2L1583.6,1513.3L1584.8,1513.3L1586,1520L1587.3,1520L1588.5,1519.9L1589.7,1520L1590.9,1519.9L1592.2,1519.9L1593.4,1519.9L1594.6,1519.9L1595.9,1520L1597.1,1519.9L1598.3,1520L1599.6,1520L1600.8,1519.9L1602,1520L1603.3,1519.9L1604.5,1519.9L1605.7,1519.9L1607,1520L1608.2,1519.9L1609.4,1519.9L1610.7,1520L1611.9,1519.9L1613.1,1520L1614.4,1519.9L1615.6,1519.9L1616.8,1519.9L1618.1,1520L1619.3,1520L1620.5,1520L1621.7,1519.9L1623,1520L1624.2,1519.9L1625.4,1519.9L1626.7,1519.9L1627.9,1520L1629.1,1520L1630.4,1520L1631.6,1519.9L1632.8,1520L1634.1,1520L1635.3,1519.9L1636.5,1520L1637.8,1519.9L1639,1520L1640.2,1519.9L1641.5,1519.9L1642.7,1519.9L1643.9,1520.1L1645.2,1519.9L1646.4,1519.9L1647.6,1519.9L1648.8,1519.9L1650.1,1519.9L1651.3,1520L1652.5,1519.9L1653.8,1519.9L1655,1519.9L1656.2,1520L1657.5,1519.9L1658.7,1513.8L1659.9,1514L1661.2,1513.9L1662.4,1513.9L1663.6,1513.8L1664.9,1513.9L1666.1,1513.8L1667.3,1513.8L1668.6,1513.8L1669.8,1513.9L1671,1513.9L1672.3,1513.8L1673.5,1513.8L1674.7,1513.9L1675.9,1513.9L1677.2,1513.9L1678.4,1520L1679.6,1520L1680.9,1520L1682.1,1514.2L1683.3,1514.2L1684.6,1514.2L1685.8,1514.2L1687,1514.1L1688.3,1514.2L1689.5,1514.2L1690.7,1514.1L1692,1514.2L1693.2,1514.1L1694.4,1514.3L1695.7,1514.1L1696.9,1514.2L1698.1,1514.1L1699.4,1514.2L1700.6,1514.2L1701.8,1520L1703,1520L1704.3,1520L1705.5,1519.9L1706.7,1519.9L1708,1519.9L1709.2,1519.9L1710.4,1519.8L1711.7,1520L1712.9,1520L1714.1,1520L1715.4,1520L1716.6,1519.9L1717.8,1519.9L1719.1,1519.9L1720.3,1519.9L1721.5,1519.9L1722.8,1519.9L1724,1519.9L1725.2,1519.9L1726.5,1520L1727.7,1519.9L1728.9,1520L1730.1,1520L1731.4,1519.9L1732.6,1520L1733.8,1519.9L1735.1,1519.9L1736.3,1519.9L1737.5,1519.9L1738.8,1520L1740,1514.8L1741.2,1514.8L1742.5,1514.8L1743.7,1514.7L1744.9,1514.7L1746.2,1514.8L1747.4,1514.7L1748.6,1514.8L1749.9,1514.8L1751.1,1514.8L1752.3,1514.8L1753.6,1514.7L1754.8,1514.8L1756,1514.8L1757.2,1514.8L1758.5,1514.7L1759.7,1514.8L1760.9,1514.8L1762.2,1514.8L1763.4,1514.8L1764.6,1514.9L1765.9,1514.8L1767.1,1514.8L1768.3,1514.9L1769.6,1514.9L1770.8,1514.8L1772,1514.8L1773.3,1514.8L1774.5,1514.7L1775.7,1514.8L1777,1514.8L1778.2,1514.9L1779.4,1514.7L1780.7,1514.8L1781.9,1514.8L1783.1,1514.8L1784.4,1514.7L1785.6,1519.9L1786.8,1519.9L1788,1520L1789.3,1520L1790.5,1519.9L1791.7,1520L1793,1519.9L1794.2,1515.7L1795.4,1515.6L1796.7,1515.8L1797.9,1515.6L1799.1,1515.7L1800.4,1515.8L1801.6,1515.7L1802.8,1515.7L1804.1,1520L1805.3,1520L1806.5,1519.9L1807.8,1519.9L1809,1519.9L1810.2,1519.9L1811.5,1509.6L1812.7,1509.6L1813.9,1509.7L1815.1,1516.3L1816.4,1516.2L1817.6,1516.3L1818.8,1516.3L1820.1,1516.3L1821.3,1516.3L1822.5,1516.3L1823.8,1516.3L1825,1516.3L1826.2,1516.3L1827.5,1516.4L1828.7,1516.3L1829.9,1516.3L1831.2,1516.3L1832.4,1516.3L1833.6,1516.3L1834.9,1516.3L1836.1,1516.3L1837.3,1516.3L1838.6,1516.4L1839.8,1516.2L1841,1516.3L1842.2,1516.3L1843.5,1516.3L1844.7,1516.3L1845.9,1516.3L1847.2,1516.3L1848.4,1516.3L1849.6,1516.2L1850.9,1516.3L1852.1,1516.3L1853.3,1516.2L1854.6,1516.3L1855.8,1516.3L1857,1516.2L1858.3,1516.3L1859.5,1516.3L1860.7,1516.3L1862,1516.2L1863.2,1516.3L1864.4,1516.3L1865.7,1516.3L1866.9,1516.3L1868.1,1516.3L1869.3,1516.4L1870.6,1516.3L1871.8,1516.3L1873,1516.3L1874.3,1516.3L1875.5,1516.2L1876.7,1516.3L1878,1516.3L1879.2,1516.3L1880.4,1516.3L1881.7,1516.2L1882.9,1516.3L1884.1,1516.3L1885.4,1516.2L1886.6,1519.9L1887.8,1519.9L1889.1,1520L1890.3,1520L1891.5,1519.9L1892.8,1520L1894,1519.9L1895.2,1519.9L1896.4,1520L1897.7,1520L1898.9,1519.9L1900.1,1519.9L1901.4,1519.9L1902.6,1519.9L1903.8,1519.9L1905.1,1519.9L1906.3,1519.9L1907.5,1519.9L1908.8,1519.9L1910,1520L1911.2,1520L1912.5,1519.9L1913.7,1519.9L1914.9,1519.9L1916.2,1519.9L1917.4,1520L1918.6,1519.9L1919.9,1519.9L1921.1,1519.9L1922.3,1519.9L1923.5,1520L1924.8,1520L1926,1519.9L1927.2,1519.9L1928.5,1519.9L1929.7,1519.9L1930.9,1519.9L1932.2,1519.9L1933.4,1519.9L1934.6,1520L1935.9,1520L1937.1,1519.9L1938.3,1519.9L1939.6,1520L1940.8,1520L1942,1520L1943.3,1520L1944.5,1519.9L1945.7,1519.9L1947,1519.9L1948.2,1520L1949.4,1519.9L1950.6,1520L1951.9,1520L1953.1,1520L1954.3,1520L1955.6,1519.9L1956.8,1519.9L1958,1520L1959.3,1519.9L1960.5,1519.9L1961.7,1519.9L1963,1519.9L1964.2,1520L1965.4,1520L1966.7,1519.9L1967.9,1520L1969.1,1519.9L1970.4,1520L1971.6,1519.9L1972.8,1520L1974.1,1519.9L1975.3,1520L1976.5,1519.9L1977.8,1519.9L1979,1520L1980.2,1519.9L1981.4,1519.9L1982.7,1520L1983.9,1519.9L1985.1,1519.9L1986.4,1519.9L1987.6,1519.9L1988.8,1520L1990.1,1520L1991.3,1519.9L1992.5,1519.9L1993.8,1520L1995,1519.9L1996.2,1520L1997.5,1520L1998.7,1520L1999.9,1519.9L2001.2,1520L2002.4,1519.9L2003.6,1520L2004.9,1520L2006.1,1519.9L2007.3,1519.9L2008.5,1520L2009.8,1519.9L2011,1519.9L2012.2,1520L2013.5,1520L2014.7,1520L2015.9,1519.9L2017.2,1519.9L2018.4,1519.9L2019.6,1519.9L2020.9,1519.9L2022.1,1520L2023.3,1520L2024.6,1519.9L2025.8,1520L2027,1519.9L2028.3,1519.9L2029.5,1520L2030.7,1520L2032,1519.9L2033.2,1519.9L2034.4,1520L2035.6,1520L2036.9,1519.9L2038.1,1519.9L2039.3,1520.1L2040.6,1520L2041.8,1519.9L2043,1520L2044.3,1520L2045.5,1520L2046.7,1519.9L2048,1519.9L2049.2,1520L2050.4,1520L2051.7,1520L2052.9,1520L2054.1,1519.9L2055.4,1520L2056.6,1519.9L2057.8,1519.9L2059.1,1520L2060.3,1519.9L2061.5,1520L2062.7,1520L2064,1520L2065.2,1520L2066.4,1520L2067.7,1519.9L2068.9,1520L2070.1,1520L2071.4,1520L2072.6,1520L2073.8,1519.9L2075.1,1519.9L2076.3,1520L2077.5,1513.8L2078.8,1513.9L2080,1513.8L2081.2,1513.8L2082.5,1513.8L2083.7,1513.8L2084.9,1513.9L2086.2,1513.9L2087.4,1511.1L2088.6,1513.9L2089.8,1513.8L2091.1,1513.9L2092.3,1513.8L2093.5,1513.9L2094.8,1513.9L2096,1511.1L2097.2,1513.9L2098.5,1513.8L2099.7,1513.8L2100.9,1513.9L2102.2,1514L2103.4,1519.7L2104.6,1519.7L2105.9,1519.6L2107.1,1519.7L2108.3,1519.7L2109.6,1519.7L2110.8,1519.7L2112,1519.7L2113.3,1519.6L2114.5,1519.6L2115.7,1519.6L2116.9,1519.6L2118.2,1519.6L2119.4,1519.7L2120.6,1519.7L2121.9,1519.7L2123.1,1519.6L2124.3,1519.7L2125.6,1519.6L2126.8,1519.7L2128,1519.6L2129.3,1519.7L2130.5,1519.7" fill="none" stroke="#ef843c" stroke-width="2.0" stroke-linejoin="round"/>
<path d="M1244.8,1519L1246,1519L1247.3,1519.1L1248.5,1519L1249.7,1519L1251,1519.1L1252.2,1513.1L1253.4,1512.9L1254.7,1519L1255.9,1519L1257.1,1519L1258.4,1519L1259.6,1519.1L1260.8,1519L1262,1519.1L1263.3,1519L1264.5,1519L1265.7,1519L1267,1519L1268.2,1513.6L1269.4,1516.3L1270.7,1512.5L1271.9,1515.2L1273.1,1512.7L1274.4,1511.4L1275.6,1516.7L1276.8,1512.7L1278.1,1515.3L1279.3,1512.1L1280.5,1519L1281.8,1510.4L1283,1513.9L1284.2,1512.3L1285.5,1510.6L1286.7,1519L1287.9,1513.4L1289.1,1511L1290.4,1515.9L1291.6,1519L1292.8,1519L1294.1,1519.1L1295.3,1513.6L1296.5,1519.1L1297.8,1519L1299,1514.6L1300.2,1516.3L1301.5,1511.9L1302.7,1519L1303.9,1512.9L1305.2,1514.9L1306.4,1511.3L1307.6,1513.4L1308.9,1513.7L1310.1,1512.9L1311.3,1510.9L1312.6,1516.2L1313.8,1516L1315,1512.4L1316.2,1515.5L1317.5,1519.1L1318.7,1516L1319.9,1519L1321.2,1519L1322.4,1512L1323.6,1519L1324.9,1511.5L1326.1,1511.8L1327.3,1519L1328.6,1509.3L1329.8,1515.6L1331,1510.3L1332.3,1519L1333.5,1516.5L1334.7,1515.6L1336,1519L1337.2,1512L1338.4,1519L1339.7,1513.1L1340.9,1513.2L1342.1,1516.1L1343.3,1512.7L1344.6,1513.6L1345.8,1514.4L1347,1510.5L1348.3,1519.1L1349.5,1515.7L1350.7,1512.9L1352,1513.1L1353.2,1516.7L1354.4,1515.5L1355.7,1519.1L1356.9,1512.6L1358.1,1515.1L1359.4,1519.1L1360.6,1515.4L1361.8,1512.3L1363.1,1518.2L1364.3,1518.2L1365.5,1510.3L1366.8,1518.2L1368,1509.5L1369.2,1518.1L1370.4,1518.3L1371.7,1518.3L1372.9,1502.2L1374.1,1512.6L1375.4,1515.1L1376.6,1518.2L1377.8,1518.2L1379.1,1518.3L1380.3,1514.6L1381.5,1513.1L1382.8,1518.2L1384,1505.5L1385.2,1509.2L1386.5,1518.2L1387.7,1501.8L1388.9,1518.1L1390.2,1514.2L1391.4,1511.8L1392.6,1513L1393.9,1509.5L1395.1,1518.2L1396.3,1511.2L1397.5,1518.2L1398.8,1504.4L1400,1509.7L1401.2,1504.5L1402.5,1514L1403.7,1515L1404.9,1518.2L1406.2,1504.2L1407.4,1518.3L1408.6,1518.2L1409.9,1510.7L1411.1,1512.4L1412.3,1518.2L1413.6,1518.2L1414.8,1501.6L1416,1518.3L1417.3,1514.5L1418.5,1510.6L1419.7,1512.6L1421,1518.2L1422.2,1510.3L1423.4,1518.2L1424.7,1514.9L1425.9,1519L1427.1,1519L1428.3,1513.6L1429.6,1507.9L1430.8,1514.1L1432,1515.7L1433.3,1514.2L1434.5,1519.1L1435.7,1515.9L1437,1513.1L1438.2,1513.9L1439.4,1508.7L1440.7,1514.3L1441.9,1513.2L1443.1,1506.3L1444.4,1507.2L1445.6,1509.3L1446.8,1515.9L1448.1,1512.7L1449.3,1519.1L1450.5,1515.2L1451.8,1513.3L1453,1512.1L1454.2,1509.1L1455.4,1515.2L1456.7,1519.1L1457.9,1513.4L1459.1,1519.1L1460.4,1519.1L1461.6,1513.8L1462.8,1512.7L1464.1,1514.2L1465.3,1511.4L1466.5,1519L1467.8,1511L1469,1515.4L1470.2,1508.5L1471.5,1519L1472.7,1514.4L1473.9,1519L1475.2,1519L1476.4,1515.7L1477.6,1515.9L1478.9,1519.1L1480.1,1516.6L1481.3,1519L1482.5,1511.1L1483.8,1519L1485,1519.1L1486.2,1519.1L1487.5,1519L1488.7,1516.6L1489.9,1515.5L1491.2,1519L1492.4,1508.7L1493.6,1519L1494.9,1514L1496.1,1519L1497.3,1510.6L1498.6,1519L1499.8,1513.3L1501,1516.3L1502.3,1519.1L1503.5,1506.4L1504.7,1513.8L1506,1514L1507.2,1519L1508.4,1514L1509.6,1514.8L1510.9,1511.2L1512.1,1514.8L1513.3,1519L1514.6,1519.1L1515.8,1516L1517,1507.6L1518.3,1519L1519.5,1519L1520.7,1519.1L1522,1519L1523.2,1519L1524.4,1519.1L1525.7,1519L1526.9,1519.1L1528.1,1519.1L1529.4,1519L1530.6,1519.1L1531.8,1513L1533.1,1512.9L1534.3,1513L1535.5,1513L1536.7,1513L1538,1512.9L1539.2,1513L1540.4,1512.9L1541.7,1512.9L1542.9,1513L1544.1,1513L1545.4,1513.1L1546.6,1512.9L1547.8,1512.9L1549.1,1518.9L1550.3,1519L1551.5,1519.1L1552.8,1519.1L1554,1513L1555.2,1513L1556.5,1513L1557.7,1513L1558.9,1519.1L1560.2,1519L1561.4,1519L1562.6,1519.1L1563.8,1519.1L1565.1,1519L1566.3,1519L1567.5,1519L1568.8,1519.1L1570,1519.1L1571.2,1512.4L1572.5,1512.4L1573.7,1512.3L1574.9,1512.3L1576.2,1512.4L1577.4,1512.3L1578.6,1512.4L1579.9,1512.4L1581.1,1512.3L1582.3,1512.3L1583.6,1512.4L1584.8,1512.4L1586,1519.1L1587.3,1519.1L1588.5,1519L1589.7,1519.1L1590.9,1519L1592.2,1519L1593.4,1519L1594.6,1519L1595.9,1519.1L1597.1,1519L1598.3,1519.1L1599.6,1519.1L1600.8,1519L1602,1519.1L1603.3,1519L1604.5,1519L1605.7,1519L1607,1519.1L1608.2,1519L1609.4,1519L1610.7,1519.1L1611.9,1519L1613.1,1519.1L1614.4,1519L1615.6,1519L1616.8,1519L1618.1,1519.1L1619.3,1519.1L1620.5,1519.1L1621.7,1519L1623,1519.1L1624.2,1519L1625.4,1519L1626.7,1519L1627.9,1519.1L1629.1,1519.1L1630.4,1519.1L1631.6,1519L1632.8,1519.1L1634.1,1519.1L1635.3,1519L1636.5,1519.1L1637.8,1519L1639,1519.1L1640.2,1519L1641.5,1519L1642.7,1519L1643.9,1519.2L1645.2,1519L1646.4,1519L1647.6,1519L1648.8,1519L1650.1,1519L1651.3,1519.1L1652.5,1519L1653.8,1519L1655,1519L1656.2,1519.1L1657.5,1519L1658.7,1512.9L1659.9,1513.1L1661.2,1513L1662.4,1513L1663.6,1512.9L1664.9,1513L1666.1,1512.9L1667.3,1512.9L1668.6,1512.9L1669.8,1513L1671,1513L1672.3,1512.9L1673.5,1512.9L1674.7,1513L1675.9,1513L1677.2,1513L1678.4,1519.1L1679.6,1519.1L1680.9,1519.1L1682.1,1513.3L1683.3,1513.3L1684.6,1513.3L1685.8,1513.3L1687,1513.2L1688.3,1513.3L1689.5,1513.3L1690.7,1513.2L1692,1513.3L1693.2,1513.2L1694.4,1513.4L1695.7,1513.2L1696.9,1513.3L1698.1,1513.2L1699.4,1513.3L1700.6,1513.3L1701.8,1519.1L1703,1519.1L1704.3,1519.1L1705.5,1519L1706.7,1519L1708,1519L1709.2,1519L1710.4,1518.9L1711.7,1519.1L1712.9,1519.1L1714.1,1519.1L1715.4,1519.1L1716.6,1519L1717.8,1519L1719.1,1519L1720.3,1519L1721.5,1519L1722.8,1519L1724,1519L1725.2,1519L1726.5,1519.1L1727.7,1519L1728.9,1519.1L1730.1,1519.1L1731.4,1519L1732.6,1519.1L1733.8,1519L1735.1,1519L1736.3,1519L1737.5,1519L1738.8,1519.1L1740,1513.9L1741.2,1513.9L1742.5,1513.9L1743.7,1513.8L1744.9,1513.8L1746.2,1513.9L1747.4,1513.8L1748.6,1513.9L1749.9,1513.9L1751.1,1513.9L1752.3,1513.9L1753.6,1513.8L1754.8,1513.9L1756,1513.9L1757.2,1513.9L1758.5,1513.8L1759.7,1513.9L1760.9,1513.9L1762.2,1513.9L1763.4,1513.9L1764.6,1514L1765.9,1513.9L1767.1,1513.9L1768.3,1514L1769.6,1514L1770.8,1513.9L1772,1513.9L1773.3,1513.9L1774.5,1513.8L1775.7,1513.9L1777,1513.9L1778.2,1514L1779.4,1513.8L1780.7,1513.9L1781.9,1513.9L1783.1,1513.9L1784.4,1513.8L1785.6,1519L1786.8,1519L1788,1519.1L1789.3,1519.1L1790.5,1519L1791.7,1519.1L1793,1519L1794.2,1514.8L1795.4,1514.7L1796.7,1514.9L1797.9,1514.7L1799.1,1514.8L1800.4,1514.9L1801.6,1514.8L1802.8,1514.8L1804.1,1519.1L1805.3,1519.1L1806.5,1519L1807.8,1519L1809,1519L1810.2,1519L1811.5,1508.7L1812.7,1508.7L1813.9,1508.8L1815.1,1515.4L1816.4,1515.3L1817.6,1515.4L1818.8,1515.4L1820.1,1515.4L1821.3,1515.4L1822.5,1515.4L1823.8,1515.4L1825,1515.4L1826.2,1515.4L1827.5,1515.5L1828.7,1515.4L1829.9,1515.4L1831.2,1515.4L1832.4,1515.4L1833.6,1515.4L1834.9,1515.4L1836.1,1515.4L1837.3,1515.4L1838.6,1515.5L1839.8,1515.3L1841,1515.4L1842.2,1515.4L1843.5,1515.4L1844.7,1515.4L1845.9,1515.4L1847.2,1515.4L1848.4,1515.4L1849.6,1515.3L1850.9,1515.4L1852.1,1515.4L1853.3,1515.3L1854.6,1515.4L1855.8,1515.4L1857,1515.3L1858.3,1515.4L1859.5,1515.4L1860.7,1515.4L1862,1515.3L1863.2,1515.4L1864.4,1515.4L1865.7,1515.4L1866.9,1515.4L1868.1,1515.4L1869.3,1515.5L1870.6,1515.4L1871.8,1515.4L1873,1515.4L1874.3,1515.4L1875.5,1515.3L1876.7,1515.4L1878,1515.4L1879.2,1515.4L1880.4,1515.4L1881.7,1515.3L1882.9,1515.4L1884.1,1515.4L1885.4,1515.3L1886.6,1519L1887.8,1519L1889.1,1519.1L1890.3,1519.1L1891.5,1519L1892.8,1519.1L1894,1519L1895.2,1519L1896.4,1519.1L1897.7,1519.1L1898.9,1519L1900.1,1519L1901.4,1519L1902.6,1519L1903.8,1519L1905.1,1519L1906.3,1519L1907.5,1519L1908.8,1519L1910,1519.1L1911.2,1519.1L1912.5,1519L1913.7,1519L1914.9,1519L1916.2,1519L1917.4,1519.1L1918.6,1519L1919.9,1519L1921.1,1519L1922.3,1519L1923.5,1519.1L1924.8,1519.1L1926,1519L1927.2,1519L1928.5,1519L1929.7,1519L1930.9,1519L1932.2,1519L1933.4,1519L1934.6,1519.1L1935.9,1519.1L1937.1,1519L1938.3,1519L1939.6,1519.1L1940.8,1519.1L1942,1519.1L1943.3,1519.1L1944.5,1519L1945.7,1519L1947,1519L1948.2,1519.1L1949.4,1519L1950.6,1519.1L1951.9,1519.1L1953.1,1519.1L1954.3,1519.1L1955.6,1519L1956.8,1519L1958,1519.1L1959.3,1519L1960.5,1519L1961.7,1519L1963,1519L1964.2,1519.1L1965.4,1519.1L1966.7,1519L1967.9,1519.1L1969.1,1519L1970.4,1519.1L1971.6,1519L1972.8,1519.1L1974.1,1519L1975.3,1519.1L1976.5,1519L1977.8,1519L1979,1519.1L1980.2,1519L1981.4,1519L1982.7,1519.1L1983.9,1519L1985.1,1519L1986.4,1519L1987.6,1519L1988.8,1519.1L1990.1,1519.1L1991.3,1519L1992.5,1519L1993.8,1519.1L1995,1519L1996.2,1519.1L1997.5,1519.1L1998.7,1519.1L1999.9,1519L2001.2,1519.1L2002.4,1519L2003.6,1519.1L2004.9,1519.1L2006.1,1519L2007.3,1519L2008.5,1519.1L2009.8,1519L2011,1519L2012.2,1519.1L2013.5,1519.1L2014.7,1519.1L2015.9,1519L2017.2,1519L2018.4,1519L2019.6,1519L2020.9,1519L2022.1,1519.1L2023.3,1519.1L2024.6,1519L2025.8,1519.1L2027,1519L2028.3,1519L2029.5,1519.1L2030.7,1519.1L2032,1519L2033.2,1519L2034.4,1519.1L2035.6,1519.1L2036.9,1519L2038.1,1519L2039.3,1519.2L2040.6,1519.1L2041.8,1519L2043,1519.1L2044.3,1519.1L2045.5,1519.1L2046.7,1519L2048,1519L2049.2,1519.1L2050.4,1519.1L2051.7,1519.1L2052.9,1519.1L2054.1,1519L2055.4,1519.1L2056.6,1519L2057.8,1519L2059.1,1519.1L2060.3,1519L2061.5,1519.1L2062.7,1519.1L2064,1519.1L2065.2,1519.1L2066.4,1519.1L2067.7,1519L2068.9,1519.1L2070.1,1519.1L2071.4,1519.1L2072.6,1519.1L2073.8,1519L2075.1,1519L2076.3,1519.1L2077.5,1512.9L2078.8,1513L2080,1512.9L2081.2,1512.9L2082.5,1512.9L2083.7,1512.9L2084.9,1513L2086.2,1513L2087.4,1510.2L2088.6,1513L2089.8,1512.9L2091.1,1513L2092.3,1512.9L2093.5,1513L2094.8,1513L2096,1510.2L2097.2,1513L2098.5,1512.9L2099.7,1512.9L2100.9,1513L2102.2,1513.1L2103.4,1518.8L2104.6,1518.8L2105.9,1518.7L2107.1,1518.8L2108.3,1518.8L2109.6,1518.8L2110.8,1518.8L2112,1518.8L2113.3,1518.7L2114.5,1518.7L2115.7,1518.7L2116.9,1518.7L2118.2,1518.7L2119.4,1518.8L2120.6,1518.8L2121.9,1518.8L2123.1,1518.7L2124.3,1518.8L2125.6,1518.7L2126.8,1518.8L2128,1518.7L2129.3,1518.8L2130.5,1518.8" fill="none" stroke="#e24d42" stroke-width="2.6" stroke-linejoin="round"/>
<path d="M1244.8,1511L1246,1511L1247.3,1510.9L1248.5,1511L1249.7,1510.9L1251,1511L1252.2,1502.5L1253.4,1502.5L1254.7,1510.9L1255.9,1511L1257.1,1511L1258.4,1511L1259.6,1510.9L1260.8,1511L1262,1511.1L1263.3,1511L1264.5,1510.9L1265.7,1510.9L1267,1511L1268.2,1503.4L1269.4,1507.2L1270.7,1502L1271.9,1505.9L1273.1,1502.2L1274.4,1500.4L1275.6,1507.6L1276.8,1502.3L1278.1,1505.7L1279.3,1501.3L1280.5,1511L1281.8,1498.9L1283,1503.7L1284.2,1501.7L1285.5,1499.4L1286.7,1511L1287.9,1503.2L1289.1,1499.9L1290.4,1506.5L1291.6,1511L1292.8,1511L1294.1,1510.9L1295.3,1503.5L1296.5,1511L1297.8,1511L1299,1504.8L1300.2,1507.2L1301.5,1501.1L1302.7,1511L1303.9,1502.5L1305.2,1505.2L1306.4,1500.4L1307.6,1503.1L1308.9,1503.6L1310.1,1502.6L1311.3,1499.7L1312.6,1507L1313.8,1506.8L1315,1501.8L1316.2,1506L1317.5,1511.1L1318.7,1506.7L1319.9,1511L1321.2,1511L1322.4,1501.2L1323.6,1511L1324.9,1500.6L1326.1,1500.8L1327.3,1511L1328.6,1497.5L1329.8,1506.2L1331,1498.9L1332.3,1511L1333.5,1507.6L1334.7,1506.2L1336,1510.9L1337.2,1501.3L1338.4,1511L1339.7,1502.7L1340.9,1502.8L1342.1,1507L1343.3,1502.2L1344.6,1503.5L1345.8,1504.3L1347,1499.1L1348.3,1511L1349.5,1506.4L1350.7,1502.4L1352,1502.7L1353.2,1507.6L1354.4,1505.9L1355.7,1511L1356.9,1501.9L1358.1,1505.5L1359.4,1511L1360.6,1505.8L1361.8,1501.6L1363.1,1509.9L1364.3,1509.8L1365.5,1499L1366.8,1509.8L1368,1497.7L1369.2,1509.8L1370.4,1509.7L1371.7,1509.8L1372.9,1487.6L1374.1,1502L1375.4,1505.4L1376.6,1509.8L1377.8,1509.8L1379.1,1509.8L1380.3,1504.8L1381.5,1502.8L1382.8,1509.8L1384,1492.3L1385.2,1497.2L1386.5,1509.8L1387.7,1486.8L1388.9,1509.8L1390.2,1504.2L1391.4,1501.1L1392.6,1502.6L1393.9,1497.7L1395.1,1509.8L1396.3,1499.9L1397.5,1509.8L1398.8,1490.7L1400,1498L1401.2,1490.9L1402.5,1504.1L1403.7,1505.5L1404.9,1509.8L1406.2,1490.4L1407.4,1509.8L1408.6,1509.9L1409.9,1499.3L1411.1,1501.9L1412.3,1509.8L1413.6,1509.8L1414.8,1486.5L1416,1509.8L1417.3,1504.7L1418.5,1499.1L1419.7,1502.1L1421,1509.8L1422.2,1498.8L1423.4,1509.9L1424.7,1505.2L1425.9,1511L1427.1,1510.9L1428.3,1503.4L1429.6,1495.4L1430.8,1504.1L1432,1506.3L1433.3,1504.2L1434.5,1511L1435.7,1506.7L1437,1502.7L1438.2,1503.9L1439.4,1496.7L1440.7,1504.5L1441.9,1502.8L1443.1,1493.2L1444.4,1494.7L1445.6,1497.5L1446.8,1506.7L1448.1,1502L1449.3,1511L1450.5,1505.5L1451.8,1503L1453,1501.4L1454.2,1497.3L1455.4,1505.5L1456.7,1511L1457.9,1503.1L1459.1,1511L1460.4,1511L1461.6,1503.7L1462.8,1502.2L1464.1,1504.4L1465.3,1500.3L1466.5,1511L1467.8,1499.8L1469,1506.1L1470.2,1496.5L1471.5,1511L1472.7,1504.5L1473.9,1511L1475.2,1510.9L1476.4,1506.4L1477.6,1506.5L1478.9,1511L1480.1,1507.5L1481.3,1511L1482.5,1499.8L1483.8,1511.1L1485,1511L1486.2,1511L1487.5,1511L1488.7,1507.7L1489.9,1506.1L1491.2,1511L1492.4,1496.4L1493.6,1511L1494.9,1504L1496.1,1511L1497.3,1499.2L1498.6,1511L1499.8,1503.1L1501,1507.3L1502.3,1510.9L1503.5,1493.6L1504.7,1503.9L1506,1504L1507.2,1510.9L1508.4,1503.9L1509.6,1505.1L1510.9,1500.1L1512.1,1505.1L1513.3,1511L1514.6,1511L1515.8,1506.7L1517,1495.1L1518.3,1511L1519.5,1511L1520.7,1511L1522,1511L1523.2,1511L1524.4,1510.9L1525.7,1511L1526.9,1511L1528.1,1511L1529.4,1511L1530.6,1511L1531.8,1503.4L1533.1,1497.4L1534.3,1501.8L1535.5,1503.3L1536.7,1502.9L1538,1502.9L1539.2,1502.3L1540.4,1503L1541.7,1503L1542.9,1503.5L1544.1,1503.9L1545.4,1502.8L1546.6,1502.9L1547.8,1502.9L1549.1,1511L1550.3,1511.1L1551.5,1511L1552.8,1511L1554,1503L1555.2,1501.9L1556.5,1502.6L1557.7,1502.7L1558.9,1511L1560.2,1511L1561.4,1511L1562.6,1511.1L1563.8,1511.1L1565.1,1511.1L1566.3,1510.9L1567.5,1511L1568.8,1511L1570,1511L1571.2,1502.7L1572.5,1502.4L1573.7,1501.8L1574.9,1501.7L1576.2,1501.8L1577.4,1501.4L1578.6,1502.3L1579.9,1502.4L1581.1,1501.8L1582.3,1501.2L1583.6,1502L1584.8,1502.4L1586,1511L1587.3,1511L1588.5,1510.9L1589.7,1511.1L1590.9,1510.9L1592.2,1510.9L1593.4,1511L1594.6,1511L1595.9,1510.9L1597.1,1511L1598.3,1511L1599.6,1511L1600.8,1511L1602,1511L1603.3,1510.9L1604.5,1511L1605.7,1511L1607,1511.1L1608.2,1511.1L1609.4,1511L1610.7,1510.9L1611.9,1511L1613.1,1510.9L1614.4,1511L1615.6,1511L1616.8,1511.1L1618.1,1511.1L1619.3,1511L1620.5,1511L1621.7,1511L1623,1511L1624.2,1511.1L1625.4,1511L1626.7,1511L1627.9,1511L1629.1,1510.9L1630.4,1511L1631.6,1511L1632.8,1511L1634.1,1511L1635.3,1511L1636.5,1510.9L1637.8,1511L1639,1511L1640.2,1510.9L1641.5,1510.9L1642.7,1510.9L1643.9,1511L1645.2,1511L1646.4,1511L1647.6,1511L1648.8,1511L1650.1,1511L1651.3,1510.9L1652.5,1511.1L1653.8,1511L1655,1511L1656.2,1511L1657.5,1511L1658.7,1502.7L1659.9,1502.3L1661.2,1502.7L1662.4,1503.8L1663.6,1502.9L1664.9,1503.2L1666.1,1502.4L1667.3,1502.9L1668.6,1502.4L1669.8,1503L1671,1502.1L1672.3,1502.1L1673.5,1503.6L1674.7,1502.5L1675.9,1503.2L1677.2,1502.6L1678.4,1511.1L1679.6,1511L1680.9,1510.9L1682.1,1498.1L1683.3,1502.8L1684.6,1502.7L1685.8,1503.7L1687,1503.4L1688.3,1502.3L1689.5,1502.8L1690.7,1503.2L1692,1503.9L1693.2,1503.3L1694.4,1503.2L1695.7,1502.7L1696.9,1503.7L1698.1,1503.7L1699.4,1502.4L1700.6,1503.4L1701.8,1510.9L1703,1511L1704.3,1511L1705.5,1511L1706.7,1510.9L1708,1511L1709.2,1511L1710.4,1511L1711.7,1511L1712.9,1511L1714.1,1511L1715.4,1511L1716.6,1511L1717.8,1511L1719.1,1511L1720.3,1510.9L1721.5,1511L1722.8,1510.9L1724,1511L1725.2,1511L1726.5,1511L1727.7,1511L1728.9,1511L1730.1,1511L1731.4,1511L1732.6,1511L1733.8,1511L1735.1,1511.1L1736.3,1511L1737.5,1511L1738.8,1510.9L1740,1502.9L1741.2,1504L1742.5,1503.7L1743.7,1504.1L1744.9,1503.4L1746.2,1504.2L1747.4,1503.5L1748.6,1503.9L1749.9,1503.6L1751.1,1503.6L1752.3,1504.5L1753.6,1504L1754.8,1504.5L1756,1504L1757.2,1504.1L1758.5,1504.7L1759.7,1503.9L1760.9,1503.8L1762.2,1503.6L1763.4,1503.8L1764.6,1504.4L1765.9,1504.2L1767.1,1503.9L1768.3,1504.1L1769.6,1504.3L1770.8,1504.4L1772,1503.6L1773.3,1503.6L1774.5,1504.8L1775.7,1504L1777,1504.3L1778.2,1503.8L1779.4,1503.5L1780.7,1503.7L1781.9,1504.4L1783.1,1503.8L1784.4,1504.4L1785.6,1510.9L1786.8,1511L1788,1511L1789.3,1511L1790.5,1511L1791.7,1511L1793,1511L1794.2,1505.5L1795.4,1504.7L1796.7,1504.9L1797.9,1505.3L1799.1,1505.8L1800.4,1505.6L1801.6,1504.3L1802.8,1505.4L1804.1,1511L1805.3,1511L1806.5,1510.9L1807.8,1511L1809,1511L1810.2,1511L1811.5,1496.9L1812.7,1497.1L1813.9,1497.4L1815.1,1506.1L1816.4,1506.2L1817.6,1506L1818.8,1506.1L1820.1,1506.1L1821.3,1506.1L1822.5,1506.1L1823.8,1506L1825,1506L1826.2,1506.1L1827.5,1506L1828.7,1506.1L1829.9,1506L1831.2,1506.1L1832.4,1506.1L1833.6,1506.1L1834.9,1506.1L1836.1,1506.1L1837.3,1506.1L1838.6,1506.1L1839.8,1506L1841,1506.1L1842.2,1506L1843.5,1506.2L1844.7,1506.1L1845.9,1506.1L1847.2,1506.1L1848.4,1506L1849.6,1506L1850.9,1506.1L1852.1,1506.1L1853.3,1506.1L1854.6,1506.1L1855.8,1506.1L1857,1506.1L1858.3,1506.1L1859.5,1506L1860.7,1506.1L1862,1506.1L1863.2,1506L1864.4,1506.1L1865.7,1506.1L1866.9,1506.1L1868.1,1506.1L1869.3,1506.1L1870.6,1506.2L1871.8,1506.1L1873,1506.1L1874.3,1506L1875.5,1506.1L1876.7,1506L1878,1506.1L1879.2,1506.1L1880.4,1506.1L1881.7,1506L1882.9,1506L1884.1,1506.2L1885.4,1506.2L1886.6,1511L1887.8,1511.1L1889.1,1511L1890.3,1511L1891.5,1511L1892.8,1511L1894,1511L1895.2,1510.9L1896.4,1511L1897.7,1510.9L1898.9,1510.9L1900.1,1511L1901.4,1511L1902.6,1511L1903.8,1511L1905.1,1511L1906.3,1511L1907.5,1510.9L1908.8,1511.1L1910,1511.1L1911.2,1510.9L1912.5,1510.9L1913.7,1510.9L1914.9,1511L1916.2,1511L1917.4,1511L1918.6,1511L1919.9,1511L1921.1,1511L1922.3,1511L1923.5,1511L1924.8,1511L1926,1510.9L1927.2,1511L1928.5,1510.9L1929.7,1511L1930.9,1511L1932.2,1511L1933.4,1511L1934.6,1511.1L1935.9,1511.1L1937.1,1511L1938.3,1511L1939.6,1511L1940.8,1511L1942,1511L1943.3,1510.9L1944.5,1511L1945.7,1510.9L1947,1511L1948.2,1511L1949.4,1511.1L1950.6,1511L1951.9,1511L1953.1,1511L1954.3,1511L1955.6,1511L1956.8,1511L1958,1511L1959.3,1510.9L1960.5,1511L1961.7,1511L1963,1511L1964.2,1511L1965.4,1511.1L1966.7,1511.1L1967.9,1511L1969.1,1510.9L1970.4,1511L1971.6,1511L1972.8,1511L1974.1,1511L1975.3,1511L1976.5,1511L1977.8,1510.9L1979,1511L1980.2,1511L1981.4,1511L1982.7,1510.9L1983.9,1510.9L1985.1,1511L1986.4,1510.9L1987.6,1511L1988.8,1511L1990.1,1511L1991.3,1511L1992.5,1511L1993.8,1511L1995,1511L1996.2,1511.1L1997.5,1511L1998.7,1511L1999.9,1511.1L2001.2,1511L2002.4,1510.9L2003.6,1511L2004.9,1511L2006.1,1511L2007.3,1511.1L2008.5,1511.1L2009.8,1511.1L2011,1511L2012.2,1511L2013.5,1511L2014.7,1511L2015.9,1511L2017.2,1511L2018.4,1511L2019.6,1511L2020.9,1511L2022.1,1511.1L2023.3,1511L2024.6,1511L2025.8,1511L2027,1511.1L2028.3,1511L2029.5,1511L2030.7,1511L2032,1511L2033.2,1511.1L2034.4,1511L2035.6,1511L2036.9,1511L2038.1,1510.9L2039.3,1510.9L2040.6,1511L2041.8,1510.9L2043,1511L2044.3,1511.1L2045.5,1511L2046.7,1510.9L2048,1511L2049.2,1511.1L2050.4,1511L2051.7,1511L2052.9,1511L2054.1,1510.9L2055.4,1510.9L2056.6,1511L2057.8,1510.9L2059.1,1511L2060.3,1511L2061.5,1510.9L2062.7,1511L2064,1511.1L2065.2,1511L2066.4,1511L2067.7,1511L2068.9,1511L2070.1,1511L2071.4,1511L2072.6,1511L2073.8,1511L2075.1,1511L2076.3,1511L2077.5,1502.4L2078.8,1503.3L2080,1502.8L2081.2,1502.4L2082.5,1503.1L2083.7,1502.4L2084.9,1502.4L2086.2,1502.5L2087.4,1499.2L2088.6,1503.3L2089.8,1502.6L2091.1,1503.6L2092.3,1502.8L2093.5,1503.1L2094.8,1503L2096,1498.9L2097.2,1502.3L2098.5,1502.8L2099.7,1502.6L2100.9,1502.4L2102.2,1502.4L2103.4,1510.6L2104.6,1510.4L2105.9,1510.5L2107.1,1510.3L2108.3,1510L2109.6,1510.1L2110.8,1511.2L2112,1510.8L2113.3,1510.7L2114.5,1510.8L2115.7,1510.1L2116.9,1510.9L2118.2,1509.9L2119.4,1510.4L2120.6,1510.2L2121.9,1510.3L2123.1,1509.8L2124.3,1511L2125.6,1509.9L2126.8,1510.9L2128,1510.7L2129.3,1510.7L2130.5,1510.5" fill="none" stroke="#1f78c1" stroke-width="2.0" stroke-linejoin="round"/>
<path d="M1244.8,1510.3L1246,1510.3L1247.3,1510.2L1248.5,1510.3L1249.7,1510.2L1251,1510.3L1252.2,1501.8L1253.4,1501.8L1254.7,1510.2L1255.9,1510.3L1257.1,1510.3L1258.4,1510.3L1259.6,1510.2L1260.8,1510.3L1262,1510.4L1263.3,1510.3L1264.5,1510.2L1265.7,1510.2L1267,1510.3L1268.2,1502.7L1269.4,1506.5L1270.7,1501.3L1271.9,1505.2L1273.1,1501.5L1274.4,1499.7L1275.6,1506.9L1276.8,1501.6L1278.1,1505L1279.3,1500.6L1280.5,1510.3L1281.8,1498.2L1283,1503L1284.2,1501L1285.5,1498.7L1286.7,1510.3L1287.9,1502.5L1289.1,1499.2L1290.4,1505.8L1291.6,1510.3L1292.8,1510.3L1294.1,1510.2L1295.3,1502.8L1296.5,1510.3L1297.8,1510.3L1299,1504.1L1300.2,1506.5L1301.5,1500.4L1302.7,1510.3L1303.9,1501.8L1305.2,1504.5L1306.4,1499.7L1307.6,1502.4L1308.9,1502.9L1310.1,1501.9L1311.3,1499L1312.6,1506.3L1313.8,1506.1L1315,1501.1L1316.2,1505.3L1317.5,1510.4L1318.7,1506L1319.9,1510.3L1321.2,1510.3L1322.4,1500.5L1323.6,1510.3L1324.9,1499.9L1326.1,1500.1L1327.3,1510.3L1328.6,1496.8L1329.8,1505.5L1331,1498.2L1332.3,1510.3L1333.5,1506.9L1334.7,1505.5L1336,1510.2L1337.2,1500.6L1338.4,1510.3L1339.7,1502L1340.9,1502.1L1342.1,1506.3L1343.3,1501.5L1344.6,1502.8L1345.8,1503.6L1347,1498.4L1348.3,1510.3L1349.5,1505.7L1350.7,1501.7L1352,1502L1353.2,1506.9L1354.4,1505.2L1355.7,1510.3L1356.9,1501.2L1358.1,1504.8L1359.4,1510.3L1360.6,1505.1L1361.8,1500.9L1363.1,1509.2L1364.3,1509.1L1365.5,1498.3L1366.8,1509.1L1368,1497L1369.2,1509.1L1370.4,1509L1371.7,1509.1L1372.9,1486.9L1374.1,1501.3L1375.4,1504.7L1376.6,1509.1L1377.8,1509.1L1379.1,1509.1L1380.3,1504.1L1381.5,1502.1L1382.8,1509.1L1384,1491.6L1385.2,1496.5L1386.5,1509.1L1387.7,1486.1L1388.9,1509.1L1390.2,1503.5L1391.4,1500.4L1392.6,1501.9L1393.9,1497L1395.1,1509.1L1396.3,1499.2L1397.5,1509.1L1398.8,1490L1400,1497.3L1401.2,1490.2L1402.5,1503.4L1403.7,1504.8L1404.9,1509.1L1406.2,1489.7L1407.4,1509.1L1408.6,1509.2L1409.9,1498.6L1411.1,1501.2L1412.3,1509.1L1413.6,1509.1L1414.8,1485.8L1416,1509.1L1417.3,1504L1418.5,1498.4L1419.7,1501.4L1421,1509.1L1422.2,1498.1L1423.4,1509.2L1424.7,1504.5L1425.9,1510.3L1427.1,1510.2L1428.3,1502.7L1429.6,1494.7L1430.8,1503.4L1432,1505.6L1433.3,1503.5L1434.5,1510.3L1435.7,1506L1437,1502L1438.2,1503.2L1439.4,1496L1440.7,1503.8L1441.9,1502.1L1443.1,1492.5L1444.4,1494L1445.6,1496.8L1446.8,1506L1448.1,1501.3L1449.3,1510.3L1450.5,1504.8L1451.8,1502.3L1453,1500.7L1454.2,1496.6L1455.4,1504.8L1456.7,1510.3L1457.9,1502.4L1459.1,1510.3L1460.4,1510.3L1461.6,1503L1462.8,1501.5L1464.1,1503.7L1465.3,1499.6L1466.5,1510.3L1467.8,1499.1L1469,1505.4L1470.2,1495.8L1471.5,1510.3L1472.7,1503.8L1473.9,1510.3L1475.2,1510.2L1476.4,1505.7L1477.6,1505.8L1478.9,1510.3L1480.1,1506.8L1481.3,1510.3L1482.5,1499.1L1483.8,1510.4L1485,1510.3L1486.2,1510.3L1487.5,1510.3L1488.7,1507L1489.9,1505.4L1491.2,1510.3L1492.4,1495.7L1493.6,1510.3L1494.9,1503.3L1496.1,1510.3L1497.3,1498.5L1498.6,1510.3L1499.8,1502.4L1501,1506.6L1502.3,1510.2L1503.5,1492.9L1504.7,1503.2L1506,1503.3L1507.2,1510.2L1508.4,1503.2L1509.6,1504.4L1510.9,1499.4L1512.1,1504.4L1513.3,1510.3L1514.6,1510.3L1515.8,1506L1517,1494.4L1518.3,1510.3L1519.5,1510.3L1520.7,1510.3L1522,1510.3L1523.2,1510.3L1524.4,1510.2L1525.7,1510.3L1526.9,1510.3L1528.1,1510.3L1529.4,1510.3L1530.6,1510.3L1531.8,1502.7L1533.1,1496.7L1534.3,1501.1L1535.5,1502.6L1536.7,1502.2L1538,1502.2L1539.2,1501.6L1540.4,1502.3L1541.7,1502.3L1542.9,1502.8L1544.1,1503.2L1545.4,1502.1L1546.6,1502.2L1547.8,1502.2L1549.1,1510.3L1550.3,1510.4L1551.5,1510.3L1552.8,1510.3L1554,1502.3L1555.2,1501.2L1556.5,1501.9L1557.7,1502L1558.9,1510.3L1560.2,1510.3L1561.4,1510.3L1562.6,1510.4L1563.8,1510.4L1565.1,1510.4L1566.3,1510.2L1567.5,1510.3L1568.8,1510.3L1570,1510.3L1571.2,1502L1572.5,1501.7L1573.7,1501.1L1574.9,1501L1576.2,1501.1L1577.4,1500.7L1578.6,1501.6L1579.9,1501.7L1581.1,1501.1L1582.3,1500.5L1583.6,1501.3L1584.8,1501.7L1586,1510.3L1587.3,1510.3L1588.5,1510.2L1589.7,1510.4L1590.9,1510.2L1592.2,1510.2L1593.4,1510.3L1594.6,1510.3L1595.9,1510.2L1597.1,1510.3L1598.3,1510.3L1599.6,1510.3L1600.8,1510.3L1602,1510.3L1603.3,1510.2L1604.5,1510.3L1605.7,1510.3L1607,1510.4L1608.2,1510.4L1609.4,1510.3L1610.7,1510.2L1611.9,1510.3L1613.1,1510.2L1614.4,1510.3L1615.6,1510.3L1616.8,1510.4L1618.1,1510.4L1619.3,1510.3L1620.5,1510.3L1621.7,1510.3L1623,1510.3L1624.2,1510.4L1625.4,1510.3L1626.7,1510.3L1627.9,1510.3L1629.1,1510.2L1630.4,1510.3L1631.6,1510.3L1632.8,1510.3L1634.1,1510.3L1635.3,1510.3L1636.5,1510.2L1637.8,1510.3L1639,1510.3L1640.2,1510.2L1641.5,1510.2L1642.7,1510.2L1643.9,1510.3L1645.2,1510.3L1646.4,1510.3L1647.6,1510.3L1648.8,1510.3L1650.1,1510.3L1651.3,1510.2L1652.5,1510.4L1653.8,1510.3L1655,1510.3L1656.2,1510.3L1657.5,1510.3L1658.7,1502L1659.9,1501.6L1661.2,1502L1662.4,1503.1L1663.6,1502.2L1664.9,1502.5L1666.1,1501.7L1667.3,1502.2L1668.6,1501.7L1669.8,1502.3L1671,1501.4L1672.3,1501.4L1673.5,1502.9L1674.7,1501.8L1675.9,1502.5L1677.2,1501.9L1678.4,1510.4L1679.6,1510.3L1680.9,1510.2L1682.1,1497.4L1683.3,1502.1L1684.6,1502L1685.8,1503L1687,1502.7L1688.3,1501.6L1689.5,1502.1L1690.7,1502.5L1692,1503.2L1693.2,1502.6L1694.4,1502.5L1695.7,1502L1696.9,1503L1698.1,1503L1699.4,1501.7L1700.6,1502.7L1701.8,1510.2L1703,1510.3L1704.3,1510.3L1705.5,1510.3L1706.7,1510.2L1708,1510.3L1709.2,1510.3L1710.4,1510.3L1711.7,1510.3L1712.9,1510.3L1714.1,1510.3L1715.4,1510.3L1716.6,1510.3L1717.8,1510.3L1719.1,1510.3L1720.3,1510.2L1721.5,1510.3L1722.8,1510.2L1724,1510.3L1725.2,1510.3L1726.5,1510.3L1727.7,1510.3L1728.9,1510.3L1730.1,1510.3L1731.4,1510.3L1732.6,1510.3L1733.8,1510.3L1735.1,1510.4L1736.3,1510.3L1737.5,1510.3L1738.8,1510.2L1740,1502.2L1741.2,1503.3L1742.5,1503L1743.7,1503.4L1744.9,1502.7L1746.2,1503.5L1747.4,1502.8L1748.6,1503.2L1749.9,1502.9L1751.1,1502.9L1752.3,1503.8L1753.6,1503.3L1754.8,1503.8L1756,1503.3L1757.2,1503.4L1758.5,1504L1759.7,1503.2L1760.9,1503.1L1762.2,1502.9L1763.4,1503.1L1764.6,1503.7L1765.9,1503.5L1767.1,1503.2L1768.3,1503.4L1769.6,1503.6L1770.8,1503.7L1772,1502.9L1773.3,1502.9L1774.5,1504.1L1775.7,1503.3L1777,1503.6L1778.2,1503.1L1779.4,1502.8L1780.7,1503L1781.9,1503.7L1783.1,1503.1L1784.4,1503.7L1785.6,1510.2L1786.8,1510.3L1788,1510.3L1789.3,1510.3L1790.5,1510.3L1791.7,1510.3L1793,1510.3L1794.2,1504.8L1795.4,1504L1796.7,1504.2L1797.9,1504.6L1799.1,1505.1L1800.4,1504.9L1801.6,1503.6L1802.8,1504.7L1804.1,1510.3L1805.3,1510.3L1806.5,1510.2L1807.8,1510.3L1809,1510.3L1810.2,1510.3L1811.5,1496.2L1812.7,1496.4L1813.9,1496.7L1815.1,1505.4L1816.4,1505.5L1817.6,1505.3L1818.8,1505.4L1820.1,1505.4L1821.3,1505.4L1822.5,1505.4L1823.8,1505.3L1825,1505.3L1826.2,1505.4L1827.5,1505.3L1828.7,1505.4L1829.9,1505.3L1831.2,1505.4L1832.4,1505.4L1833.6,1505.4L1834.9,1505.4L1836.1,1505.4L1837.3,1505.4L1838.6,1505.4L1839.8,1505.3L1841,1505.4L1842.2,1505.3L1843.5,1505.5L1844.7,1505.4L1845.9,1505.4L1847.2,1505.4L1848.4,1505.3L1849.6,1505.3L1850.9,1505.4L1852.1,1505.4L1853.3,1505.4L1854.6,1505.4L1855.8,1505.4L1857,1505.4L1858.3,1505.4L1859.5,1505.3L1860.7,1505.4L1862,1505.4L1863.2,1505.3L1864.4,1505.4L1865.7,1505.4L1866.9,1505.4L1868.1,1505.4L1869.3,1505.4L1870.6,1505.5L1871.8,1505.4L1873,1505.4L1874.3,1505.3L1875.5,1505.4L1876.7,1505.3L1878,1505.4L1879.2,1505.4L1880.4,1505.4L1881.7,1505.3L1882.9,1505.3L1884.1,1505.5L1885.4,1505.5L1886.6,1510.3L1887.8,1510.4L1889.1,1510.3L1890.3,1510.3L1891.5,1510.3L1892.8,1510.3L1894,1510.3L1895.2,1510.2L1896.4,1510.3L1897.7,1510.2L1898.9,1510.2L1900.1,1510.3L1901.4,1510.3L1902.6,1510.3L1903.8,1510.3L1905.1,1510.3L1906.3,1510.3L1907.5,1510.2L1908.8,1510.4L1910,1510.4L1911.2,1510.2L1912.5,1510.2L1913.7,1510.2L1914.9,1510.3L1916.2,1510.3L1917.4,1510.3L1918.6,1510.3L1919.9,1510.3L1921.1,1510.3L1922.3,1510.3L1923.5,1510.3L1924.8,1510.3L1926,1510.2L1927.2,1510.3L1928.5,1510.2L1929.7,1510.3L1930.9,1510.3L1932.2,1510.3L1933.4,1510.3L1934.6,1510.4L1935.9,1510.4L1937.1,1510.3L1938.3,1510.3L1939.6,1510.3L1940.8,1510.3L1942,1510.3L1943.3,1510.2L1944.5,1510.3L1945.7,1510.2L1947,1510.3L1948.2,1510.3L1949.4,1510.4L1950.6,1510.3L1951.9,1510.3L1953.1,1510.3L1954.3,1510.3L1955.6,1510.3L1956.8,1510.3L1958,1510.3L1959.3,1510.2L1960.5,1510.3L1961.7,1510.3L1963,1510.3L1964.2,1510.3L1965.4,1510.4L1966.7,1510.4L1967.9,1510.3L1969.1,1510.2L1970.4,1510.3L1971.6,1510.3L1972.8,1510.3L1974.1,1510.3L1975.3,1510.3L1976.5,1510.3L1977.8,1510.2L1979,1510.3L1980.2,1510.3L1981.4,1510.3L1982.7,1510.2L1983.9,1510.2L1985.1,1510.3L1986.4,1510.2L1987.6,1510.3L1988.8,1510.3L1990.1,1510.3L1991.3,1510.3L1992.5,1510.3L1993.8,1510.3L1995,1510.3L1996.2,1510.4L1997.5,1510.3L1998.7,1510.3L1999.9,1510.4L2001.2,1510.3L2002.4,1510.2L2003.6,1510.3L2004.9,1510.3L2006.1,1510.3L2007.3,1510.4L2008.5,1510.4L2009.8,1510.4L2011,1510.3L2012.2,1510.3L2013.5,1510.3L2014.7,1510.3L2015.9,1510.3L2017.2,1510.3L2018.4,1510.3L2019.6,1510.3L2020.9,1510.3L2022.1,1510.4L2023.3,1510.3L2024.6,1510.3L2025.8,1510.3L2027,1510.4L2028.3,1510.3L2029.5,1510.3L2030.7,1510.3L2032,1510.3L2033.2,1510.4L2034.4,1510.3L2035.6,1510.3L2036.9,1510.3L2038.1,1510.2L2039.3,1510.2L2040.6,1510.3L2041.8,1510.2L2043,1510.3L2044.3,1510.4L2045.5,1510.3L2046.7,1510.2L2048,1510.3L2049.2,1510.4L2050.4,1510.3L2051.7,1510.3L2052.9,1510.3L2054.1,1510.2L2055.4,1510.2L2056.6,1510.3L2057.8,1510.2L2059.1,1510.3L2060.3,1510.3L2061.5,1510.2L2062.7,1510.3L2064,1510.4L2065.2,1510.3L2066.4,1510.3L2067.7,1510.3L2068.9,1510.3L2070.1,1510.3L2071.4,1510.3L2072.6,1510.3L2073.8,1510.3L2075.1,1510.3L2076.3,1510.3L2077.5,1501.7L2078.8,1502.6L2080,1502.1L2081.2,1501.7L2082.5,1502.4L2083.7,1501.7L2084.9,1501.7L2086.2,1501.8L2087.4,1498.5L2088.6,1502.6L2089.8,1501.9L2091.1,1502.9L2092.3,1502.1L2093.5,1502.4L2094.8,1502.3L2096,1498.2L2097.2,1501.6L2098.5,1502.1L2099.7,1501.9L2100.9,1501.7L2102.2,1501.7L2103.4,1509.9L2104.6,1509.7L2105.9,1509.8L2107.1,1509.6L2108.3,1509.3L2109.6,1509.4L2110.8,1510.5L2112,1510.1L2113.3,1510L2114.5,1510.1L2115.7,1509.4L2116.9,1510.2L2118.2,1509.2L2119.4,1509.7L2120.6,1509.5L2121.9,1509.6L2123.1,1509.1L2124.3,1510.3L2125.6,1509.2L2126.8,1510.2L2128,1510L2129.3,1510L2130.5,1509.8" fill="none" stroke="#ba43a9" stroke-width="2.0" stroke-linejoin="round"/>
<path d="M1244.8,1509.7L1246,1509.7L1247.3,1509.6L1248.5,1509.7L1249.7,1509.6L1251,1509.7L1252.2,1501.2L1253.4,1501.2L1254.7,1509.6L1255.9,1509.7L1257.1,1509.7L1258.4,1509.7L1259.6,1509.6L1260.8,1509.7L1262,1509.8L1263.3,1509.7L1264.5,1509.6L1265.7,1509.6L1267,1509.7L1268.2,1502.1L1269.4,1505.9L1270.7,1500.7L1271.9,1504.6L1273.1,1500.9L1274.4,1499.1L1275.6,1506.3L1276.8,1501L1278.1,1504.4L1279.3,1500L1280.5,1509.7L1281.8,1497.6L1283,1502.4L1284.2,1500.4L1285.5,1498.1L1286.7,1509.7L1287.9,1501.9L1289.1,1498.6L1290.4,1505.2L1291.6,1509.7L1292.8,1509.7L1294.1,1509.6L1295.3,1502.2L1296.5,1509.7L1297.8,1509.7L1299,1503.5L1300.2,1505.9L1301.5,1499.8L1302.7,1509.7L1303.9,1501.2L1305.2,1503.9L1306.4,1499.1L1307.6,1501.8L1308.9,1502.3L1310.1,1501.3L1311.3,1498.4L1312.6,1505.7L1313.8,1505.5L1315,1500.5L1316.2,1504.7L1317.5,1509.8L1318.7,1505.4L1319.9,1509.7L1321.2,1509.7L1322.4,1499.9L1323.6,1509.7L1324.9,1499.3L1326.1,1499.5L1327.3,1509.7L1328.6,1496.2L1329.8,1504.9L1331,1497.6L1332.3,1509.7L1333.5,1506.3L1334.7,1504.9L1336,1509.6L1337.2,1500L1338.4,1509.7L1339.7,1501.4L1340.9,1501.5L1342.1,1505.7L1343.3,1500.9L1344.6,1502.2L1345.8,1503L1347,1497.8L1348.3,1509.7L1349.5,1505.1L1350.7,1501.1L1352,1501.4L1353.2,1506.3L1354.4,1504.6L1355.7,1509.7L1356.9,1500.6L1358.1,1504.2L1359.4,1509.7L1360.6,1504.5L1361.8,1500.3L1363.1,1508.6L1364.3,1508.5L1365.5,1497.7L1366.8,1508.5L1368,1496.4L1369.2,1508.5L1370.4,1508.4L1371.7,1508.5L1372.9,1486.3L1374.1,1500.7L1375.4,1504.1L1376.6,1508.5L1377.8,1508.5L1379.1,1508.5L1380.3,1503.5L1381.5,1501.5L1382.8,1508.5L1384,1491L1385.2,1495.9L1386.5,1508.5L1387.7,1485.5L1388.9,1508.5L1390.2,1502.9L1391.4,1499.8L1392.6,1501.3L1393.9,1496.4L1395.1,1508.5L1396.3,1498.6L1397.5,1508.5L1398.8,1489.4L1400,1496.7L1401.2,1489.6L1402.5,1502.8L1403.7,1504.2L1404.9,1508.5L1406.2,1489.1L1407.4,1508.5L1408.6,1508.6L1409.9,1498L1411.1,1500.6L1412.3,1508.5L1413.6,1508.5L1414.8,1485.2L1416,1508.5L1417.3,1503.4L1418.5,1497.8L1419.7,1500.8L1421,1508.5L1422.2,1497.5L1423.4,1508.6L1424.7,1503.9L1425.9,1509.7L1427.1,1509.6L1428.3,1502.1L1429.6,1494.1L1430.8,1502.8L1432,1505L1433.3,1502.9L1434.5,1509.7L1435.7,1505.4L1437,1501.4L1438.2,1502.6L1439.4,1495.4L1440.7,1503.2L1441.9,1501.5L1443.1,1491.9L1444.4,1493.4L1445.6,1496.2L1446.8,1505.4L1448.1,1500.7L1449.3,1509.7L1450.5,1504.2L1451.8,1501.7L1453,1500.1L1454.2,1496L1455.4,1504.2L1456.7,1509.7L1457.9,1501.8L1459.1,1509.7L1460.4,1509.7L1461.6,1502.4L1462.8,1500.9L1464.1,1503.1L1465.3,1499L1466.5,1509.7L1467.8,1498.5L1469,1504.8L1470.2,1495.2L1471.5,1509.7L1472.7,1503.2L1473.9,1509.7L1475.2,1509.6L1476.4,1505.1L1477.6,1505.2L1478.9,1509.7L1480.1,1506.2L1481.3,1509.7L1482.5,1498.5L1483.8,1509.8L1485,1509.7L1486.2,1509.7L1487.5,1509.7L1488.7,1506.4L1489.9,1504.8L1491.2,1509.7L1492.4,1495.1L1493.6,1509.7L1494.9,1502.7L1496.1,1509.7L1497.3,1497.9L1498.6,1509.7L1499.8,1501.8L1501,1506L1502.3,1509.6L1503.5,1492.3L1504.7,1502.6L1506,1502.7L1507.2,1509.6L1508.4,1502.6L1509.6,1503.8L1510.9,1498.8L1512.1,1503.8L1513.3,1509.7L1514.6,1509.7L1515.8,1505.4L1517,1493.8L1518.3,1509.7L1519.5,1509.7L1520.7,1509.7L1522,1509.7L1523.2,1509.7L1524.4,1509.6L1525.7,1509.7L1526.9,1509.7L1528.1,1509.7L1529.4,1509.7L1530.6,1509.7L1531.8,1502.1L1533.1,1496.1L1534.3,1500.5L1535.5,1502L1536.7,1501.6L1538,1501.6L1539.2,1501L1540.4,1501.7L1541.7,1501.7L1542.9,1502.2L1544.1,1502.6L1545.4,1501.5L1546.6,1501.6L1547.8,1501.6L1549.1,1509.7L1550.3,1509.8L1551.5,1509.7L1552.8,1509.7L1554,1501.7L1555.2,1500.6L1556.5,1501.3L1557.7,1501.4L1558.9,1509.7L1560.2,1509.7L1561.4,1509.7L1562.6,1509.8L1563.8,1509.8L1565.1,1509.8L1566.3,1509.6L1567.5,1509.7L1568.8,1509.7L1570,1509.7L1571.2,1501.4L1572.5,1501.1L1573.7,1500.5L1574.9,1500.4L1576.2,1500.5L1577.4,1500.1L1578.6,1501L1579.9,1501.1L1581.1,1500.5L1582.3,1499.9L1583.6,1500.7L1584.8,1501.1L1586,1509.7L1587.3,1509.7L1588.5,1509.6L1589.7,1509.8L1590.9,1509.6L1592.2,1509.6L1593.4,1509.7L1594.6,1509.7L1595.9,1509.6L1597.1,1509.7L1598.3,1509.7L1599.6,1509.7L1600.8,1509.7L1602,1509.7L1603.3,1509.6L1604.5,1509.7L1605.7,1509.7L1607,1509.8L1608.2,1509.8L1609.4,1509.7L1610.7,1509.6L1611.9,1509.7L1613.1,1509.6L1614.4,1509.7L1615.6,1509.7L1616.8,1509.8L1618.1,1509.8L1619.3,1509.7L1620.5,1509.7L1621.7,1509.7L1623,1509.7L1624.2,1509.8L1625.4,1509.7L1626.7,1509.7L1627.9,1509.7L1629.1,1509.6L1630.4,1509.7L1631.6,1509.7L1632.8,1509.7L1634.1,1509.7L1635.3,1509.7L1636.5,1509.6L1637.8,1509.7L1639,1509.7L1640.2,1509.6L1641.5,1509.6L1642.7,1509.6L1643.9,1509.7L1645.2,1509.7L1646.4,1509.7L1647.6,1509.7L1648.8,1509.7L1650.1,1509.7L1651.3,1509.6L1652.5,1509.8L1653.8,1509.7L1655,1509.7L1656.2,1509.7L1657.5,1509.7L1658.7,1501.4L1659.9,1501L1661.2,1501.4L1662.4,1502.5L1663.6,1501.6L1664.9,1501.9L1666.1,1501.1L1667.3,1501.6L1668.6,1501.1L1669.8,1501.7L1671,1500.8L1672.3,1500.8L1673.5,1502.3L1674.7,1501.2L1675.9,1501.9L1677.2,1501.3L1678.4,1509.8L1679.6,1509.7L1680.9,1509.6L1682.1,1496.8L1683.3,1501.5L1684.6,1501.4L1685.8,1502.4L1687,1502.1L1688.3,1501L1689.5,1501.5L1690.7,1501.9L1692,1502.6L1693.2,1502L1694.4,1501.9L1695.7,1501.4L1696.9,1502.4L1698.1,1502.4L1699.4,1501.1L1700.6,1502.1L1701.8,1509.6L1703,1509.7L1704.3,1509.7L1705.5,1509.7L1706.7,1509.6L1708,1509.7L1709.2,1509.7L1710.4,1509.7L1711.7,1509.7L1712.9,1509.7L1714.1,1509.7L1715.4,1509.7L1716.6,1509.7L1717.8,1509.7L1719.1,1509.7L1720.3,1509.6L1721.5,1509.7L1722.8,1509.6L1724,1509.7L1725.2,1509.7L1726.5,1509.7L1727.7,1509.7L1728.9,1509.7L1730.1,1509.7L1731.4,1509.7L1732.6,1509.7L1733.8,1509.7L1735.1,1509.8L1736.3,1509.7L1737.5,1509.7L1738.8,1509.6L1740,1501.6L1741.2,1502.7L1742.5,1502.4L1743.7,1502.8L1744.9,1502.1L1746.2,1502.9L1747.4,1502.2L1748.6,1502.6L1749.9,1502.3L1751.1,1502.3L1752.3,1503.2L1753.6,1502.7L1754.8,1503.2L1756,1502.7L1757.2,1502.8L1758.5,1503.4L1759.7,1502.6L1760.9,1502.5L1762.2,1502.3L1763.4,1502.5L1764.6,1503.1L1765.9,1502.9L1767.1,1502.6L1768.3,1502.8L1769.6,1503L1770.8,1503.1L1772,1502.3L1773.3,1502.3L1774.5,1503.5L1775.7,1502.7L1777,1503L1778.2,1502.5L1779.4,1502.2L1780.7,1502.4L1781.9,1503.1L1783.1,1502.5L1784.4,1503.1L1785.6,1509.6L1786.8,1509.7L1788,1509.7L1789.3,1509.7L1790.5,1509.7L1791.7,1509.7L1793,1509.7L1794.2,1504.2L1795.4,1503.4L1796.7,1503.6L1797.9,1504L1799.1,1504.5L1800.4,1504.3L1801.6,1503L1802.8,1504.1L1804.1,1509.7L1805.3,1509.7L1806.5,1509.6L1807.8,1509.7L1809,1509.7L1810.2,1509.7L1811.5,1495.6L1812.7,1495.8L1813.9,1496.1L1815.1,1504.8L1816.4,1504.9L1817.6,1504.7L1818.8,1504.8L1820.1,1504.8L1821.3,1504.8L1822.5,1504.8L1823.8,1504.7L1825,1504.7L1826.2,1504.8L1827.5,1504.7L1828.7,1504.8L1829.9,1504.7L1831.2,1504.8L1832.4,1504.8L1833.6,1504.8L1834.9,1504.8L1836.1,1504.8L1837.3,1504.8L1838.6,1504.8L1839.8,1504.7L1841,1504.8L1842.2,1504.7L1843.5,1504.9L1844.7,1504.8L1845.9,1504.8L1847.2,1504.8L1848.4,1504.7L1849.6,1504.7L1850.9,1504.8L1852.1,1504.8L1853.3,1504.8L1854.6,1504.8L1855.8,1504.8L1857,1504.8L1858.3,1504.8L1859.5,1504.7L1860.7,1504.8L1862,1504.8L1863.2,1504.7L1864.4,1504.8L1865.7,1504.8L1866.9,1504.8L1868.1,1504.8L1869.3,1504.8L1870.6,1504.9L1871.8,1504.8L1873,1504.8L1874.3,1504.7L1875.5,1504.8L1876.7,1504.7L1878,1504.8L1879.2,1504.8L1880.4,1504.8L1881.7,1504.7L1882.9,1504.7L1884.1,1504.9L1885.4,1504.9L1886.6,1509.7L1887.8,1509.8L1889.1,1509.7L1890.3,1509.7L1891.5,1509.7L1892.8,1509.7L1894,1509.7L1895.2,1509.6L1896.4,1509.7L1897.7,1509.6L1898.9,1509.6L1900.1,1509.7L1901.4,1509.7L1902.6,1509.7L1903.8,1509.7L1905.1,1509.7L1906.3,1509.7L1907.5,1509.6L1908.8,1509.8L1910,1509.8L1911.2,1509.6L1912.5,1509.6L1913.7,1509.6L1914.9,1509.7L1916.2,1509.7L1917.4,1509.7L1918.6,1509.7L1919.9,1509.7L1921.1,1509.7L1922.3,1509.7L1923.5,1509.7L1924.8,1509.7L1926,1509.6L1927.2,1509.7L1928.5,1509.6L1929.7,1509.7L1930.9,1509.7L1932.2,1509.7L1933.4,1509.7L1934.6,1509.8L1935.9,1509.8L1937.1,1509.7L1938.3,1509.7L1939.6,1509.7L1940.8,1509.7L1942,1509.7L1943.3,1509.6L1944.5,1509.7L1945.7,1509.6L1947,1509.7L1948.2,1509.7L1949.4,1509.8L1950.6,1509.7L1951.9,1509.7L1953.1,1509.7L1954.3,1509.7L1955.6,1509.7L1956.8,1509.7L1958,1509.7L1959.3,1509.6L1960.5,1509.7L1961.7,1509.7L1963,1509.7L1964.2,1509.7L1965.4,1509.8L1966.7,1509.8L1967.9,1509.7L1969.1,1509.6L1970.4,1509.7L1971.6,1509.7L1972.8,1509.7L1974.1,1509.7L1975.3,1509.7L1976.5,1509.7L1977.8,1509.6L1979,1509.7L1980.2,1509.7L1981.4,1509.7L1982.7,1509.6L1983.9,1509.6L1985.1,1509.7L1986.4,1509.6L1987.6,1509.7L1988.8,1509.7L1990.1,1509.7L1991.3,1509.7L1992.5,1509.7L1993.8,1509.7L1995,1509.7L1996.2,1509.8L1997.5,1509.7L1998.7,1509.7L1999.9,1509.8L2001.2,1509.7L2002.4,1509.6L2003.6,1509.7L2004.9,1509.7L2006.1,1509.7L2007.3,1509.8L2008.5,1509.8L2009.8,1509.8L2011,1509.7L2012.2,1509.7L2013.5,1509.7L2014.7,1509.7L2015.9,1509.7L2017.2,1509.7L2018.4,1509.7L2019.6,1509.7L2020.9,1509.7L2022.1,1509.8L2023.3,1509.7L2024.6,1509.7L2025.8,1509.7L2027,1509.8L2028.3,1509.7L2029.5,1509.7L2030.7,1509.7L2032,1509.7L2033.2,1509.8L2034.4,1509.7L2035.6,1509.7L2036.9,1509.7L2038.1,1509.6L2039.3,1509.6L2040.6,1509.7L2041.8,1509.6L2043,1509.7L2044.3,1509.8L2045.5,1509.7L2046.7,1509.6L2048,1509.7L2049.2,1509.8L2050.4,1509.7L2051.7,1509.7L2052.9,1509.7L2054.1,1509.6L2055.4,1509.6L2056.6,1509.7L2057.8,1509.6L2059.1,1509.7L2060.3,1509.7L2061.5,1509.6L2062.7,1509.7L2064,1509.8L2065.2,1509.7L2066.4,1509.7L2067.7,1509.7L2068.9,1509.7L2070.1,1509.7L2071.4,1509.7L2072.6,1509.7L2073.8,1509.7L2075.1,1509.7L2076.3,1509.7L2077.5,1501.1L2078.8,1502L2080,1501.5L2081.2,1501.1L2082.5,1501.8L2083.7,1501.1L2084.9,1501.1L2086.2,1501.2L2087.4,1497.9L2088.6,1502L2089.8,1501.3L2091.1,1502.3L2092.3,1501.5L2093.5,1501.8L2094.8,1501.7L2096,1497.6L2097.2,1501L2098.5,1501.5L2099.7,1501.3L2100.9,1501.1L2102.2,1501.1L2103.4,1509.3L2104.6,1509.1L2105.9,1509.2L2107.1,1509L2108.3,1508.7L2109.6,1508.8L2110.8,1509.9L2112,1509.5L2113.3,1509.4L2114.5,1509.5L2115.7,1508.8L2116.9,1509.6L2118.2,1508.6L2119.4,1509.1L2120.6,1508.9L2121.9,1509L2123.1,1508.5L2124.3,1509.7L2125.6,1508.6L2126.8,1509.6L2128,1509.4L2129.3,1509.4L2130.5,1509.2" fill="none" stroke="#705da0" stroke-width="2.6" stroke-linejoin="round"/>
<rect x="1152" y="1670.2" width="30.8" height="8.4" rx="2.2" fill="#7eb26d"/><text x="1201" y="1680.4" font-size="26.4" fill="#3a404b" textLength="51.6" lengthAdjust="spacingAndGlyphs" stroke="#3a404b" stroke-width="0.35">map</text><rect x="1275.3" y="1670.2" width="30.8" height="8.4" rx="2.2" fill="#eab839"/><text x="1323.7" y="1680.4" font-size="26.4" fill="#3a404b" textLength="47.3" lengthAdjust="spacingAndGlyphs" stroke="#3a404b" stroke-width="0.35">new</text><rect x="1393.8" y="1670.2" width="30.8" height="8.4" rx="2.2" fill="#6ed0e0"/><text x="1442.8" y="1680.4" font-size="26.4" fill="#3a404b" textLength="35" lengthAdjust="spacingAndGlyphs" stroke="#3a404b" stroke-width="0.35">old</text><rect x="1501" y="1670.2" width="30.8" height="8.4" rx="2.2" fill="#ef843c"/><text x="1549.5" y="1680.4" font-size="26.4" fill="#3a404b" textLength="57.2" lengthAdjust="spacingAndGlyphs" stroke="#3a404b" stroke-width="0.35">code</text><rect x="1629.4" y="1670.2" width="30.8" height="8.4" rx="2.2" fill="#e24d42"/><text x="1677.8" y="1680.4" font-size="26.4" fill="#3a404b" textLength="111.4" lengthAdjust="spacingAndGlyphs" stroke="#3a404b" stroke-width="0.35">read_only</text><rect x="1812.4" y="1670.2" width="30.8" height="8.4" rx="2.2" fill="#1f78c1"/><text x="1860.8" y="1680.4" font-size="26.4" fill="#3a404b" textLength="141.2" lengthAdjust="spacingAndGlyphs" stroke="#3a404b" stroke-width="0.35">large_object</text>
<rect x="1152" y="1710.6" width="30.8" height="8.4" rx="2.2" fill="#ba43a9"/><text x="1201" y="1720.8" font-size="26.4" fill="#3a404b" textLength="202" lengthAdjust="spacingAndGlyphs" stroke="#3a404b" stroke-width="0.35">new_large_object</text><rect x="1426.3" y="1710.6" width="30.8" height="8.4" rx="2.2" fill="#705da0"/><text x="1474.7" y="1720.8" font-size="26.4" fill="#3a404b" textLength="211.3" lengthAdjust="spacingAndGlyphs" stroke="#3a404b" stroke-width="0.35">code_large_object</text>
</svg>
<div id="fade" class="abs"></div>
<div id="chat" class="abs"><svg width="132" height="132" viewBox="0 0 132 132"><path d="M41.9,30.7H90.2a7,7 0 0 1 7,7V101L78.6,93.8H41.9a7,7 0 0 1-7-7V37.7a7,7 0 0 1 7-7Z" fill="#fff"/><path d="M45.2,75.6Q65.9,87.6 86.6,75.6" fill="none" stroke="#3675cb" stroke-width="3.7" stroke-linecap="round"/></svg></div>
</body></html>
